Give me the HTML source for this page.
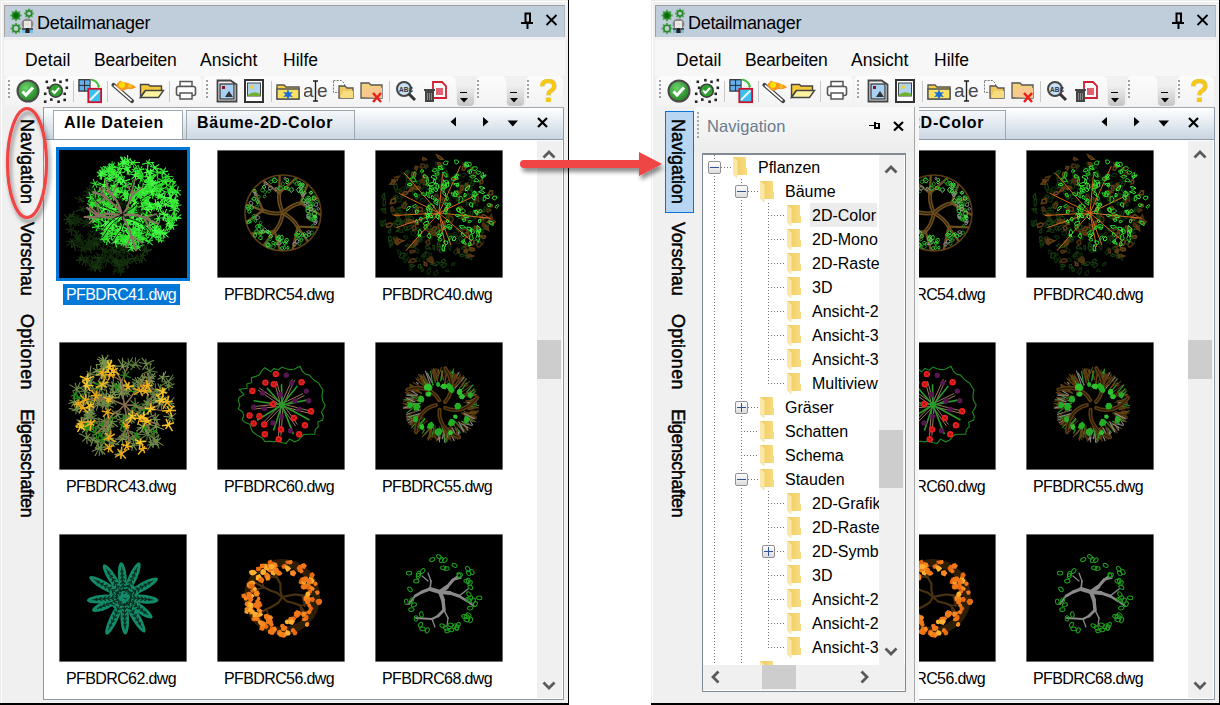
<!DOCTYPE html><html><head><meta charset="utf-8"><style>
html,body{margin:0;padding:0}
body{width:1220px;height:705px;position:relative;overflow:hidden;background:#fff;font-family:'Liberation Sans', sans-serif}
.t{position:absolute;white-space:pre}
.b{position:absolute}
.win{position:absolute;top:0;width:569px;height:705px;overflow:hidden}
</style></head><body><svg width="0" height="0" style="position:absolute"><defs><g id="t41"><path d="M41.5 54.3l-6.1 2.4M41.5 54.3l-3.4 -2.4M41.5 54.3l2.5 -5.5M41.5 54.3l3.3 -2.3M41.5 54.3l1.6 2.6M41.5 54.3l-3.2 6.1" stroke="#0f260a" stroke-width="1.1" fill="none"/><path d="M30.7 94.8l2.9 1.1M30.7 94.8l0.7 6.3M30.7 94.8l-3 5.1M30.7 94.8l-3.3 -1.1M30.7 94.8l-0.8 -3.4M30.7 94.8l4.7 -3.3" stroke="#183610" stroke-width="1.1" fill="none"/><path d="M36 88.6l-1.3 6.1M36 88.6l-3.9 2.4M36 88.6l-2.9 -1.7M36 88.6l-0.2 -5.6M36 88.6l3.9 -0.2M36 88.6l2.9 1.6" stroke="#183610" stroke-width="1.1" fill="none"/><path d="M91.2 69.4l-4.6 4.6M91.2 69.4l-4 -1.4M91.2 69.4l-1.6 -2.9M91.2 69.4l3 -5.7M91.2 69.4l5.4 2.7M91.2 69.4l2.8 4.9" stroke="#183610" stroke-width="1.1" fill="none"/><path d="M65.7 100l-0.5 3.4M65.7 100l-3.8 0.6M65.7 100l-4.2 -2.5M65.7 100l1.4 -6M65.7 100l4.4 -3.6M65.7 100l5.4 4" stroke="#183610" stroke-width="1.1" fill="none"/><path d="M29.9 67.2l1.3 4.3M29.9 67.2l-4 4.5M29.9 67.2l-3.8 -0.4M29.9 67.2l-2.1 -2.3M29.9 67.2l1.7 -5.4M29.9 67.2l3.8 -1.1" stroke="#183610" stroke-width="1.1" fill="none"/><path d="M57.9 47.7l5.6 1.8M57.9 47.7l-0.3 4.8M57.9 47.7l-3.3 1.9M57.9 47.7l-3.9 -2.4M57.9 47.7l-0.9 -4M57.9 47.7l2.7 -2.5" stroke="#142e0e" stroke-width="1.1" fill="none"/><path d="M70.3 47.6l-0.5 3.7M70.3 47.6l-5.8 2.1M70.3 47.6l-4.8 -1.5M70.3 47.6l0.4 -4.4M70.3 47.6l6.2 -2.4M70.3 47.6l2.9 3.1" stroke="#0f260a" stroke-width="1.1" fill="none"/><path d="M21.4 109.1l5.1 2.8M21.4 109.1l-1.3 4.5M21.4 109.1l-4.6 1.8M21.4 109.1l-2 -2.7M21.4 109.1l0.9 -4.7M21.4 109.1l6.3 -2.2" stroke="#183610" stroke-width="1.1" fill="none"/><path d="M33.6 55.7l-3.2 -0M33.6 55.7l-2.9 -5.1M33.6 55.7l1.4 -2.8M33.6 55.7l3.8 -0.1M33.6 55.7l2.2 3.7M33.6 55.7l-0.9 3.6" stroke="#142e0e" stroke-width="1.1" fill="none"/><path d="M84.3 53.5l0.9 5.5M84.3 53.5l-2.8 1.4M84.3 53.5l-3 -2.8M84.3 53.5l-1.5 -5.9M84.3 53.5l4.3 -1.5M84.3 53.5l4.7 1.9" stroke="#183610" stroke-width="1.1" fill="none"/><path d="M59.6 94.7l3.1 0.7M59.6 94.7l1.6 3.8M59.6 94.7l-2.6 5M59.6 94.7l-5.8 -2.9M59.6 94.7l-2.4 -3.5M59.6 94.7l3.5 -5.1" stroke="#142e0e" stroke-width="1.1" fill="none"/><path d="M55.9 112.5l-2.8 3.5M55.9 112.5l-3.3 -0.6M55.9 112.5l-2.5 -3.7M55.9 112.5l2.5 -2.7M55.9 112.5l3.3 -0.7M55.9 112.5l1.3 4.1" stroke="#142e0e" stroke-width="1.1" fill="none"/><path d="M87.5 61.5l4.5 5.2M87.5 61.5l-1.8 5.5M87.5 61.5l-6.5 1.3M87.5 61.5l-2.6 -3.2M87.5 61.5l1.8 -5.8M87.5 61.5l3.2 -1.8" stroke="#0f260a" stroke-width="1.1" fill="none"/><path d="M87.2 75.6l-4 3.9M87.2 75.6l-5 -2.3M87.2 75.6l-0.4 -5.3M87.2 75.6l4.1 -5.4M87.2 75.6l2.7 1.5M87.2 75.6l1 3" stroke="#183610" stroke-width="1.1" fill="none"/><path d="M81.2 62.3l2.2 3.4M81.2 62.3l-0.1 6.4M81.2 62.3l-4.2 -0.2M81.2 62.3l-3.9 -3.5M81.2 62.3l1.2 -2.8M81.2 62.3l3.9 -0.7" stroke="#142e0e" stroke-width="1.1" fill="none"/><path d="M89.8 70.5l0.2 3.1M89.8 70.5l-2.7 3.2M89.8 70.5l-3.5 -1.1M89.8 70.5l-0.7 -3.3M89.8 70.5l5.5 -4.1M89.8 70.5l4.6 3" stroke="#183610" stroke-width="1.1" fill="none"/><path d="M63.8 74.2l-1.9 6.2M63.8 74.2l-3.3 0.5M63.8 74.2l-3.9 -4.3M63.8 74.2l2.4 -6.4M63.8 74.2l4.7 -3.3M63.8 74.2l5.9 3.6" stroke="#0f260a" stroke-width="1.1" fill="none"/><path d="M42.1 112.8l-1.4 3M42.1 112.8l-6.6 -0.7M42.1 112.8l-2.3 -4.6M42.1 112.8l1.5 -4.7M42.1 112.8l6.6 -1.6M42.1 112.8l2.7 6" stroke="#0f260a" stroke-width="1.1" fill="none"/><path d="M53.7 79l-2.8 6.2M53.7 79l-6.1 -1M53.7 79l-2.6 -5.4M53.7 79l1.7 -3.5M53.7 79l5.5 -1.1M53.7 79l4.2 5.1" stroke="#183610" stroke-width="1.1" fill="none"/><path d="M90.4 62.7l-6.6 2.3M90.4 62.7l-3.4 -2.8M90.4 62.7l0.4 -5M90.4 62.7l4.8 -2M90.4 62.7l2.4 5.6M90.4 62.7l-1.5 3" stroke="#0f260a" stroke-width="1.1" fill="none"/><path d="M34.3 117.4l3.7 1.3M34.3 117.4l2.3 4.4M34.3 117.4l-2.5 3.6M34.3 117.4l-4.6 -2M34.3 117.4l-2.2 -6.3M34.3 117.4l4.3 -3.4" stroke="#183610" stroke-width="1.1" fill="none"/><path d="M34.7 116.7l1.4 4.7M34.7 116.7l-6 3.1M34.7 116.7l-5.7 -3.5M34.7 116.7l-1.4 -4.2M34.7 116.7l2.5 -3.3M34.7 116.7l3.9 0.8" stroke="#0f260a" stroke-width="1.1" fill="none"/><path d="M37.3 116.8l-2.3 4.2M37.3 116.8l-5.8 -0.7M37.3 116.8l-2 -2.6M37.3 116.8l2.5 -4.1M37.3 116.8l5.4 0.3M37.3 116.8l4.1 3.8" stroke="#183610" stroke-width="1.1" fill="none"/><path d="M56.4 42.3l-0.8 6.8M56.4 42.3l-6 2M56.4 42.3l-3.7 -2.9M56.4 42.3l1.1 -4M56.4 42.3l5.3 -2.9M56.4 42.3l2.2 3.1" stroke="#142e0e" stroke-width="1.1" fill="none"/><path d="M38.4 108.4l-0.6 4.3M38.4 108.4l-4.6 -0.4M38.4 108.4l-3.8 -3M38.4 108.4l2.1 -4.4M38.4 108.4l6.7 -1.1M38.4 108.4l2.4 4.1" stroke="#183610" stroke-width="1.1" fill="none"/><path d="M47.3 101.7l-2.5 1.7M47.3 101.7l-4.1 -1.1M47.3 101.7l-1.5 -4.2M47.3 101.7l5.3 -2.2M47.3 101.7l4.8 2.4M47.3 101.7l-1.5 6.7" stroke="#0f260a" stroke-width="1.1" fill="none"/><path d="M80.9 62.5l-3.8 -0.4M80.9 62.5l-4.3 -2.9M80.9 62.5l0.2 -3.3M80.9 62.5l3.5 0.4M80.9 62.5l3.4 4.3M80.9 62.5l-2.9 4.1" stroke="#0f260a" stroke-width="1.1" fill="none"/><path d="M21.9 92.2l0.7 5.5M21.9 92.2l-4.6 3.4M21.9 92.2l-4.4 -3.7M21.9 92.2l-0.5 -5.8M21.9 92.2l6.9 -1M21.9 92.2l2.6 2.6" stroke="#0f260a" stroke-width="1.1" fill="none"/><path d="M76.1 49.6l0.5 4.3M76.1 49.6l-3.8 1.5M76.1 49.6l-2.2 -2.3M76.1 49.6l-0.3 -4.1M76.1 49.6l4.4 -2.1M76.1 49.6l2.8 3.4" stroke="#0f260a" stroke-width="1.1" fill="none"/><path d="M14 72.5l-2.9 4.2M14 72.5l-3.8 1.3M14 72.5l-5.7 -3.4M14 72.5l1.7 -3.7M14 72.5l5.7 -0.4M14 72.5l3 3.8" stroke="#183610" stroke-width="1.1" fill="none"/><path d="M74.7 50.3l-2.2 2.9M74.7 50.3l-3.7 0.9M74.7 50.3l-1.6 -3.2M74.7 50.3l1.5 -5.3M74.7 50.3l3.4 -0.2M74.7 50.3l3.7 4.4" stroke="#142e0e" stroke-width="1.1" fill="none"/><path d="M48.9 49.2l2.7 5.6M48.9 49.2l-2.4 5.6M48.9 49.2l-6.7 -1M48.9 49.2l-1.9 -2.9M48.9 49.2l2.9 -4.9M48.9 49.2l5.8 1.5" stroke="#183610" stroke-width="1.1" fill="none"/><path d="M56.1 109.3l-4.4 4.9M56.1 109.3l-5.1 -0.5M56.1 109.3l-4.5 -4.7M56.1 109.3l2.3 -3.7M56.1 109.3l3.8 0.2M56.1 109.3l1.1 3.6" stroke="#183610" stroke-width="1.1" fill="none"/><path d="M75.2 45.3l-4.6 3.9M75.2 45.3l-5.3 -3.4M75.2 45.3l-2 -6.7M75.2 45.3l5.5 -3.7M75.2 45.3l5.6 2.5M75.2 45.3l0.2 4.2" stroke="#183610" stroke-width="1.1" fill="none"/><path d="M51.2 106.3l3.2 -0.1M51.2 106.3l1.8 2.9M51.2 106.3l-3 5M51.2 106.3l-5.4 -0.4M51.2 106.3l-0.9 -3.2M51.2 106.3l5.1 -4.7" stroke="#142e0e" stroke-width="1.1" fill="none"/><path d="M12.3 91.4l3.3 -0M12.3 91.4l0.3 6.6M12.3 91.4l-4.9 4.7M12.3 91.4l-5.6 -0.2M12.3 91.4l-1.1 -3.2M12.3 91.4l2.4 -2.5" stroke="#142e0e" stroke-width="1.1" fill="none"/><path d="M32.7 46.5l1.3 3.5M32.7 46.5l-3.4 3.9M32.7 46.5l-5.9 -2.4M32.7 46.5l0.1 -6.8M32.7 46.5l3.4 -4.7M32.7 46.5l6.7 0.1" stroke="#0f260a" stroke-width="1.1" fill="none"/><path d="M42.5 52.8l-1.7 2.9M42.5 52.8l-6.6 -0.2M42.5 52.8l-1.8 -4.5M42.5 52.8l3 -2.5M42.5 52.8l6.4 1.1M42.5 52.8l2.5 5.8" stroke="#142e0e" stroke-width="1.1" fill="none"/><path d="M49.3 94.7l-3.8 0.4M49.3 94.7l-4 -3.8M49.3 94.7l2.3 -6.2M49.3 94.7l4.6 -0.9M49.3 94.7l2 2.7M49.3 94.7l-1.9 4.4" stroke="#142e0e" stroke-width="1.1" fill="none"/><path d="M28.3 110.4l0.6 5.3M28.3 110.4l-2 3M28.3 110.4l-3.5 -1.2M28.3 110.4l-1.1 -6.1M28.3 110.4l2.6 -5.3M28.3 110.4l3.3 0.9" stroke="#0f260a" stroke-width="1.1" fill="none"/><path d="M37.5 80.6l-6.3 0.9M37.5 80.6l-3.3 -6.1M37.5 80.6l2 -4.2M37.5 80.6l3.9 -0.1M37.5 80.6l2.1 4M37.5 80.6l-3.5 5.1" stroke="#142e0e" stroke-width="1.1" fill="none"/><path d="M71 92.9l6.2 -0.8M71 92.9l2.4 3M71 92.9l-2.7 4.8M71 92.9l-6 -1.4M71 92.9l-4.2 -5.3M71 92.9l2.3 -5.8" stroke="#183610" stroke-width="1.1" fill="none"/><path d="M41.3 52.7l-0.5 5.3M41.3 52.7l-3 1.6M41.3 52.7l-4.9 -4.5M41.3 52.7l1.2 -5.6M41.3 52.7l5.5 0.2M41.3 52.7l4.2 4" stroke="#142e0e" stroke-width="1.1" fill="none"/><path d="M27.6 73.2l-4.6 -0.1M27.6 73.2l-4.9 -4M27.6 73.2l1.6 -5.2M27.6 73.2l6.9 -0.6M27.6 73.2l3.3 3.6M27.6 73.2l-1.6 2.9" stroke="#142e0e" stroke-width="1.1" fill="none"/><path d="M46.6 53.3l6 3.2M46.6 53.3l3.1 5.8M46.6 53.3l-2.4 3.9M46.6 53.3l-3.2 -1M46.6 53.3l-1.7 -3.6M46.6 53.3l5 -3.5" stroke="#183610" stroke-width="1.1" fill="none"/><path d="M68.3 48.5l3.1 4.1M68.3 48.5l-2.5 5.4M68.3 48.5l-4.9 0.1M68.3 48.5l-2.3 -3.3M68.3 48.5l4.7 -4.9M68.3 48.5l4.4 -0.9" stroke="#0f260a" stroke-width="1.1" fill="none"/><path d="M71.3 65.1l-0.4 3.3M71.3 65.1l-3.3 3.6M71.3 65.1l-5 -3.6M71.3 65.1l-0.5 -3M71.3 65.1l3.8 -4.2M71.3 65.1l3.4 0.8" stroke="#142e0e" stroke-width="1.1" fill="none"/><path d="M12.2 80.1l0.6 6.1M12.2 80.1l-3.9 2.6M12.2 80.1l-6 -1M12.2 80.1l-1.2 -6.7M12.2 80.1l2.9 -3M12.2 80.1l6.6 2.2" stroke="#142e0e" stroke-width="1.1" fill="none"/><path d="M76.5 59.9l-0.1 5.8M76.5 59.9l-2.4 3.8M76.5 59.9l-5.8 -1.1M76.5 59.9l-0.5 -3.4M76.5 59.9l4.2 -5M76.5 59.9l5.7 0.1" stroke="#183610" stroke-width="1.1" fill="none"/><path d="M13 65.3l-0.3 3.2M13 65.3l-3.8 2.5M13 65.3l-3.2 -1.5M13 65.3l2.3 -4.6M13 65.3l2.7 -1.6M13 65.3l3.6 2.4" stroke="#183610" stroke-width="1.1" fill="none"/><path d="M89 78.2l5.3 2.3M89 78.2l1.6 2.8M89 78.2l-3.6 2.5M89 78.2l-3.2 -1.3M89 78.2l-2.5 -4.8M89 78.2l4.4 -4.4" stroke="#183610" stroke-width="1.1" fill="none"/><path d="M37.1 48.7l3.5 0.9M37.1 48.7l1 3.2M37.1 48.7l-3.3 3.9M37.1 48.7l-6.2 -0.7M37.1 48.7l-1 -3.7M37.1 48.7l2.8 -3.7" stroke="#142e0e" stroke-width="1.1" fill="none"/><path d="M42.1 54l-3.6 1.3M42.1 54l-4.2 -2.2M42.1 54l0.5 -6M42.1 54l2.9 -1.7M42.1 54l5.4 2.7M42.1 54l-1.3 3.9" stroke="#0f260a" stroke-width="1.1" fill="none"/><path d="M67.9 112.7l1.7 4.9M67.9 112.7l-4.8 3.7M67.9 112.7l-6 -2.5M67.9 112.7l-3.2 -4.4M67.9 112.7l2.2 -3.8M67.9 112.7l5 0.8" stroke="#142e0e" stroke-width="1.1" fill="none"/><path d="M59 72.6l-3.7 3.1M59 72.6l-4.3 0.1M59 72.6l-1.9 -5M59 72.6l2.3 -3.5M59 72.6l3.9 0.4M59 72.6l2.4 5.1" stroke="#0f260a" stroke-width="1.1" fill="none"/><path d="M33.6 41.3l2.4 4.1M33.6 41.3l-5.4 4.3M33.6 41.3l-5.2 -2.1M33.6 41.3l-1.9 -4.5M33.6 41.3l1.9 -3.5M33.6 41.3l6.1 -0.6" stroke="#142e0e" stroke-width="1.1" fill="none"/><path d="M45.5 105.5l-4.1 4.4M45.5 105.5l-3.6 -1.2M45.5 105.5l-0.2 -3.9M45.5 105.5l4.6 -4.1M45.5 105.5l3.6 0.8M45.5 105.5l-0.6 6.9" stroke="#0f260a" stroke-width="1.1" fill="none"/><path d="M35.4 94.4l-2.4 3.1M35.4 94.4l-2.8 -1.7M35.4 94.4l0.7 -4.7M35.4 94.4l2.9 -1.9M35.4 94.4l4.6 1.7M35.4 94.4l-0.2 5.4" stroke="#183610" stroke-width="1.1" fill="none"/><path d="M31 85.3l-3.3 4.4M31 85.3l-3.3 -0.8M31 85.3l-1.5 -3.1M31 85.3l3.2 -4.7M31 85.3l3.2 1.2M31 85.3l0.3 3.5" stroke="#0f260a" stroke-width="1.1" fill="none"/><path d="M34.9 57l0.8 3.9M34.9 57l-3.4 2.5M34.9 57l-5.1 -1.9M34.9 57l0.6 -6.4M34.9 57l3.8 -4.8M34.9 57l3.3 1.1" stroke="#142e0e" stroke-width="1.1" fill="none"/><path d="M48.1 110.8l-2 6.6M48.1 110.8l-6.8 -0.9M48.1 110.8l-1.9 -3.1M48.1 110.8l0.8 -4M48.1 110.8l5.5 0.5M48.1 110.8l2.5 2" stroke="#142e0e" stroke-width="1.1" fill="none"/><path d="M62.3 119.7l-3.4 0.9M62.3 119.7l-2.4 -3.5M62.3 119.7l2.5 -4.3M62.3 119.7l3.1 -1.1M62.3 119.7l3.4 2.7M62.3 119.7l-1 5.9" stroke="#142e0e" stroke-width="1.1" fill="none"/><path d="M82.5 91.5l-5.6 4.2M82.5 91.5l-4.7 -4.8M82.5 91.5l-0.8 -4.9M82.5 91.5l3.2 -2.7M82.5 91.5l4.9 1.5M82.5 91.5l0.6 5.3" stroke="#142e0e" stroke-width="1.1" fill="none"/><path d="M18.2 71l1.8 5.4M18.2 71l-3.1 4M18.2 71l-6.4 -2.2M18.2 71l-0.1 -6.4M18.2 71l5 -2.1M18.2 71l5.2 2.5" stroke="#142e0e" stroke-width="1.1" fill="none"/><path d="M80.5 110.4l-3.7 -0.1M80.5 110.4l-3.3 -4.8M80.5 110.4l2.2 -3.9M80.5 110.4l3 -0.3M80.5 110.4l2.9 2.6M80.5 110.4l-0.4 3.3" stroke="#142e0e" stroke-width="1.1" fill="none"/><path d="M53.2 46.2l-2.8 1.7M53.2 46.2l-3.5 -3.5M53.2 46.2l2.4 -5.6M53.2 46.2l3 -1.9M53.2 46.2l5.3 2.4M53.2 46.2l-0.1 4.8" stroke="#0f260a" stroke-width="1.1" fill="none"/><path d="M55 77.7l0.5 4.8M55 77.7l-6.2 2.5M55 77.7l-3 -1.6M55 77.7l0.4 -6.4M55 77.7l5 -4.4M55 77.7l4 2.8" stroke="#183610" stroke-width="1.1" fill="none"/><path d="M62.9 98.9l3.5 1.4M62.9 98.9l3.1 4.8M62.9 98.9l-3.1 3.3M62.9 98.9l-3.7 -1.9M62.9 98.9l-1.4 -6.8M62.9 98.9l2.5 -1.9" stroke="#183610" stroke-width="1.1" fill="none"/><path d="M40.2 108.3l-1.9 2.4M40.2 108.3l-6.1 -1.1M40.2 108.3l-2.7 -5.4M40.2 108.3l3.8 -4M40.2 108.3l5.2 -0.3M40.2 108.3l0.9 3.3" stroke="#183610" stroke-width="1.1" fill="none"/><path d="M81 64.1l5.1 -0.4M81 64.1l0.8 3.8M81 64.1l-2.1 4.7M81 64.1l-5.1 -1.6M81 64.1l-2.5 -6.2M81 64.1l4 -5.5" stroke="#183610" stroke-width="1.1" fill="none"/><path d="M44 53.2l1.5 6.4M44 53.2l-6.2 2M44 53.2l-3.8 -1.9M44 53.2l0 -4.6M44 53.2l6.2 -3.2M44 53.2l2.3 2.4" stroke="#183610" stroke-width="1.1" fill="none"/><path d="M46 47.1l-3 6.2M46 47.1l-2.9 1M46 47.1l-2.3 -3.1M46 47.1l1 -3M46 47.1l3 0.3M46 47.1l4.4 5.3" stroke="#142e0e" stroke-width="1.1" fill="none"/><path d="M70 45.3l3.6 2M70 45.3l-1.3 3.9M70 45.3l-5.3 0.6M70 45.3l-3.5 -1.7M70 45.3l2.2 -4.5M70 45.3l3.2 -1.1" stroke="#0f260a" stroke-width="1.1" fill="none"/><path d="M77.9 66.7l3 2.4M77.9 66.7l-0 3.9M77.9 66.7l-3.4 1.2M77.9 66.7l-4.8 -3.6M77.9 66.7l1 -4.6M77.9 66.7l2.7 -1.5" stroke="#0f260a" stroke-width="1.1" fill="none"/><path d="M47.2 46.6l-1.3 6.1M47.2 46.6l-6.3 1.5M47.2 46.6l-5.2 -3.8M47.2 46.6l-0.2 -4.9M47.2 46.6l3 -0.9M47.2 46.6l3.9 2.3" stroke="#183610" stroke-width="1.1" fill="none"/><path d="M71.8 70.5l-4.3 5.4M71.8 70.5l-5.4 0.2M71.8 70.5l-3.8 -3.6M71.8 70.5l1.4 -4.2M71.8 70.5l3.7 -0.1M71.8 70.5l1.9 3.6" stroke="#142e0e" stroke-width="1.1" fill="none"/><path d="M34.6 60.1l-1.9 2.4M34.6 60.1l-3.8 -0.8M34.6 60.1l-2.6 -2.9M34.6 60.1l2.1 -2.6M34.6 60.1l4.4 0.8M34.6 60.1l3.1 5.9" stroke="#0f260a" stroke-width="1.1" fill="none"/><path d="M44.7 52.4l4.7 1.6M44.7 52.4l0.8 5.2M44.7 52.4l-3.5 4.4M44.7 52.4l-6.3 -1.6M44.7 52.4l-0 -6.5M44.7 52.4l3.2 -2.7" stroke="#183610" stroke-width="1.1" fill="none"/><path d="M23.3 58.9l1.9 2.8M23.3 58.9l-0.9 3M23.3 58.9l-6.5 2.3M23.3 58.9l-2.8 -2.3M23.3 58.9l1.2 -2.9M23.3 58.9l3.9 -0.2" stroke="#183610" stroke-width="1.1" fill="none"/><path d="M33.1 94.8l6.3 -0.2M33.1 94.8l3.1 4.4M33.1 94.8l-3.4 4.8M33.1 94.8l-6.8 0.6M33.1 94.8l-3.3 -5.9M33.1 94.8l1.8 -3.6" stroke="#183610" stroke-width="1.1" fill="none"/><path d="M83.2 71.9l-4.7 1.4M83.2 71.9l-2.6 -3.5M83.2 71.9l2.2 -5.1M83.2 71.9l6 -0.1M83.2 71.9l0.9 2.9M83.2 71.9l-2.5 3.8" stroke="#183610" stroke-width="1.1" fill="none"/><path d="M43.4 83.1l5.4 3.6M43.4 83.1l-1.3 4.4M43.4 83.1l-3.2 1M43.4 83.1l-4 -4M43.4 83.1l1.7 -5M43.4 83.1l4.6 -1.4" stroke="#142e0e" stroke-width="1.1" fill="none"/><path d="M85.7 100.1l-1.6 5.4M85.7 100.1l-3.6 0.9M85.7 100.1l-2.6 -4.1M85.7 100.1l-0.2 -5.9M85.7 100.1l6.4 0.1M85.7 100.1l3.3 4.7" stroke="#183610" stroke-width="1.1" fill="none"/><path d="M21.9 49.9l-3.2 2.7M21.9 49.9l-6.2 -2.5M21.9 49.9l-1.8 -3.8M21.9 49.9l3.1 -2.6M21.9 49.9l3.4 1.7M21.9 49.9l1.6 3.5" stroke="#142e0e" stroke-width="1.1" fill="none"/><path d="M10.6 70.4l4.9 3.7M10.6 70.4l-0.5 4.7M10.6 70.4l-4.6 3.6M10.6 70.4l-2.8 -2.3M10.6 70.4l0.2 -6M10.6 70.4l6.6 -2" stroke="#183610" stroke-width="1.1" fill="none"/><path d="M66.1 99.1l-3 3.8M66.1 99.1l-4.5 -1.7M66.1 99.1l-2.1 -3.8M66.1 99.1l2.8 -3.1M66.1 99.1l5.3 0.1M66.1 99.1l2.2 5" stroke="#0f260a" stroke-width="1.1" fill="none"/><path d="M37.9 93.2l-4.2 1.1M37.9 93.2l-4 -1.8M37.9 93.2l-0.4 -6M37.9 93.2l5.8 -1.2M37.9 93.2l4 2.4M37.9 93.2l0.4 5" stroke="#183610" stroke-width="1.1" fill="none"/><path d="M18.1 70l-0.5 4.7M18.1 70l-3.2 -0M18.1 70l-4.1 -3.4M18.1 70l1.9 -4.2M18.1 70l4.5 -2.5M18.1 70l3.3 2.1" stroke="#142e0e" stroke-width="1.1" fill="none"/><path d="M59.2 47.1l4.8 0.5M59.2 47.1l0.2 3.9M59.2 47.1l-2.4 3.2M59.2 47.1l-3.3 -1.7M59.2 47.1l-1.2 -4.4M59.2 47.1l3 -5.6" stroke="#0f260a" stroke-width="1.1" fill="none"/><path d="M92.1 67.9l-3.5 2.2M92.1 67.9l-3.6 -2.5M92.1 67.9l-1.8 -3.7M92.1 67.9l4.4 -2.6M92.1 67.9l3.3 2.2M92.1 67.9l0.1 4.1" stroke="#0f260a" stroke-width="1.1" fill="none"/><path d="M69 110.1l-4.2 3M69 110.1l-3.7 -1.4M69 110.1l-1.1 -6M69 110.1l4.3 -1.1M69 110.1l4.8 2.4M69 110.1l-0.6 5.2" stroke="#183610" stroke-width="1.1" fill="none"/><path d="M36 52.5l1.5 3.2M36 52.5l-2.2 4.1M36 52.5l-3.3 1.8M36 52.5l-2.7 -2.9M36 52.5l1.5 -4.6M36 52.5l4 -2" stroke="#142e0e" stroke-width="1.1" fill="none"/><path d="M61.5 119.9l-3 0.3M61.5 119.9l-2.9 -5.6M61.5 119.9l0.5 -4.6M61.5 119.9l4.1 -0.4M61.5 119.9l2.3 3M61.5 119.9l-1.6 2.6" stroke="#183610" stroke-width="1.1" fill="none"/><path d="M84 53.5l-3.8 3.7M84 53.5l-4.7 -1.1M84 53.5l-0.5 -6.9M84 53.5l5.2 -2.6M84 53.5l4.1 2.5M84 53.5l-0.1 3.9" stroke="#142e0e" stroke-width="1.1" fill="none"/><path d="M64.2 107.7l5.3 3M64.2 107.7l-0.2 6.7M64.2 107.7l-5.6 4.1M64.2 107.7l-4.4 -3.2M64.2 107.7l0.4 -6.6M64.2 107.7l3 -2.3" stroke="#0f260a" stroke-width="1.1" fill="none"/><path d="M15.3 94.4l1 6.6M15.3 94.4l-3 3.8M15.3 94.4l-3 -0.6M15.3 94.4l-3.3 -4.8M15.3 94.4l4.2 -3.8M15.3 94.4l4.3 1.6" stroke="#183610" stroke-width="1.1" fill="none"/><path d="M56.6 41.5l-4.6 2.2M56.6 41.5l-3.6 -3.9M56.6 41.5l1.9 -6.1M56.6 41.5l4.4 -0.9M56.6 41.5l2.5 1.9M56.6 41.5l-1.9 6.4" stroke="#183610" stroke-width="1.1" fill="none"/><path d="M41.7 89.6l0.8 3.4M41.7 89.6l-5 4M41.7 89.6l-4.3 0.5M41.7 89.6l-2.4 -3.6M41.7 89.6l2 -2.7M41.7 89.6l3.5 1.6" stroke="#142e0e" stroke-width="1.1" fill="none"/><path d="M29.7 40.2l-5.8 1.9M29.7 40.2l-2.5 -2.9M29.7 40.2l2.3 -5.7M29.7 40.2l3.9 -0.8M29.7 40.2l2.4 5.1M29.7 40.2l-1.6 6.5" stroke="#142e0e" stroke-width="1.1" fill="none"/><path d="M23.5 99.6l-1.9 4.4M23.5 99.6l-4.3 1.1M23.5 99.6l-3 -3.4M23.5 99.6l-0.2 -6.5M23.5 99.6l3.8 -1.3M23.5 99.6l3.5 3.2" stroke="#0f260a" stroke-width="1.1" fill="none"/><path d="M69.7 47.9l-1.3 6M69.7 47.9l-5.8 1.4M69.7 47.9l-5.5 -3.2M69.7 47.9l-0.1 -3M69.7 47.9l2.9 -1.6M69.7 47.9l6.3 2.9" stroke="#142e0e" stroke-width="1.1" fill="none"/><path d="M79.3 71l-5.7 3.8M79.3 71l-3 0.2M79.3 71l-1.3 -6.9M79.3 71l4.2 -3M79.3 71l2.9 1M79.3 71l2.5 4.7" stroke="#183610" stroke-width="1.1" fill="none"/><path d="M31.8 92.2l3.5 5.2M31.8 92.2l-2.6 4.7M31.8 92.2l-5.7 -1.1M31.8 92.2l-2.2 -3.8M31.8 92.2l2.4 -3.9M31.8 92.2l3.4 -0.3" stroke="#142e0e" stroke-width="1.1" fill="none"/><path d="M71.6 44.4l6.4 1.9M71.6 44.4l2.5 6.3M71.6 44.4l-1 3.6M71.6 44.4l-4.8 -1.3M71.6 44.4l-2.1 -2.4M71.6 44.4l2.4 -4.1" stroke="#142e0e" stroke-width="1.1" fill="none"/><path d="M54.2 36.2l5.9 2.7M54.2 36.2l1.1 3.2M54.2 36.2l-1.8 2.5M54.2 36.2l-4.3 0.3M54.2 36.2l-1.8 -5M54.2 36.2l2.1 -4.7" stroke="#0f260a" stroke-width="1.1" fill="none"/><path d="M29.2 93.7l3.6 5.2M29.2 93.7l0.1 6.5M29.2 93.7l-3.3 0.5M29.2 93.7l-4 -3.7M29.2 93.7l0.4 -4.9M29.2 93.7l5.7 -0.3" stroke="#142e0e" stroke-width="1.1" fill="none"/><path d="M46.7 37.5l-4 5.2M46.7 37.5l-4 -2.3M46.7 37.5l-0.6 -5.5M46.7 37.5l2.9 -2M46.7 37.5l4.5 1.5M46.7 37.5l-0.1 3.5" stroke="#183610" stroke-width="1.1" fill="none"/><path d="M72.9 82.2l4.2 1.1M72.9 82.2l-1.3 5.7M72.9 82.2l-3.7 1.8M72.9 82.2l-4.5 -3M72.9 82.2l-0.1 -4.4M72.9 82.2l4.4 -3.6" stroke="#142e0e" stroke-width="1.1" fill="none"/><path d="M58.1 57.7l-3.4 1.9M58.1 57.7l-4.5 -4.4M58.1 57.7l-0.7 -7M58.1 57.7l4.3 -3.6M58.1 57.7l3 3.3M58.1 57.7l-0.2 4.8" stroke="#0f260a" stroke-width="1.1" fill="none"/><path d="M62.5 114.7l-1.1 5.9M62.5 114.7l-6.5 2.5M62.5 114.7l-3.3 -4.1M62.5 114.7l2.7 -4.8M62.5 114.7l4 0.5M62.5 114.7l3.7 4.4" stroke="#0f260a" stroke-width="1.1" fill="none"/><path d="M88.1 100.4l2.9 1.1M88.1 100.4l0.5 4.1M88.1 100.4l-5 3.3M88.1 100.4l-2.8 -3.1M88.1 100.4l-1.2 -5.1M88.1 100.4l5 -1.1" stroke="#183610" stroke-width="1.1" fill="none"/><path d="M18.9 89l0.2 4.7M18.9 89l-4.1 2.5M18.9 89l-3.2 -3M18.9 89l2.6 -5.8M18.9 89l2.7 -1.3M18.9 89l3.6 2.3" stroke="#183610" stroke-width="1.1" fill="none"/><path d="M39.5 73l4.4 2.5M39.5 73l2.4 5.1M39.5 73l-3.7 2M39.5 73l-2.9 -1.3M39.5 73l-0 -3.6M39.5 73l3.9 -5" stroke="#183610" stroke-width="1.1" fill="none"/><path d="M58.1 69.3l-1.7 3.9M58.1 69.3l-3.3 0.4M58.1 69.3l-3.5 -4.7M58.1 69.3l1.8 -2.6M58.1 69.3l3.4 0.9M58.1 69.3l2.5 5.9" stroke="#183610" stroke-width="1.1" fill="none"/><path d="M59.9 95.2l-6 2.1M59.9 95.2l-3.4 -1.9M59.9 95.2l0.6 -6.3M59.9 95.2l4.2 -3.6M59.9 95.2l2.4 2.4M59.9 95.2l-0.4 4.7" stroke="#0f260a" stroke-width="1.1" fill="none"/><path d="M9.3 69.5l-1.3 2.9M9.3 69.5l-4.8 0.1M9.3 69.5l-3.8 -5M9.3 69.5l1.3 -5.1M9.3 69.5l6.9 0.3M9.3 69.5l3.1 4.8" stroke="#183610" stroke-width="1.1" fill="none"/><path d="M61.5 52.8l-2.8 4M61.5 52.8l-4.8 -0.5M61.5 52.8l-1.9 -5.4M61.5 52.8l2.3 -2.6M61.5 52.8l5 2.4M61.5 52.8l2.7 5.5" stroke="#0f260a" stroke-width="1.1" fill="none"/><path d="M70.4 80l-6.3 -0.2M70.4 80l-3.2 -3.3M70.4 80l0.9 -5.9M70.4 80l5.2 0.7M70.4 80l3.9 3.1M70.4 80l-2.8 5.4" stroke="#183610" stroke-width="1.1" fill="none"/><path d="M77.1 71.4l-3.5 3.5M77.1 71.4l-6.3 -1.1M77.1 71.4l-0.3 -3.1M77.1 71.4l4.2 -3.1M77.1 71.4l5.1 0.9M77.1 71.4l1.9 6.7" stroke="#142e0e" stroke-width="1.1" fill="none"/><path d="M32.9 55l-4.4 1.6M32.9 55l-3.9 -3M32.9 55l1 -3.2M32.9 55l6.1 -0.3M32.9 55l5.5 2.8M32.9 55l-0.4 4" stroke="#142e0e" stroke-width="1.1" fill="none"/><path d="M93.4 69.6l-0.9 5M93.4 69.6l-5.1 -0M93.4 69.6l-2 -6.1M93.4 69.6l2.7 -5.6M93.4 69.6l3 -0.2M93.4 69.6l1.6 5" stroke="#0f260a" stroke-width="1.1" fill="none"/><path d="M33.5 112.3l1.3 6M33.5 112.3l-3.3 3.1M33.5 112.3l-4 -2.8M33.5 112.3l-1 -6.7M33.5 112.3l5.1 -2.1M33.5 112.3l4.5 1.9" stroke="#142e0e" stroke-width="1.1" fill="none"/><path d="M50.2 59.2l-2.4 4.5M50.2 59.2l-5.3 0.4M50.2 59.2l-2.8 -5.2M50.2 59.2l2.2 -3.9M50.2 59.2l3.3 0.2M50.2 59.2l1.4 5.5" stroke="#0f260a" stroke-width="1.1" fill="none"/><path d="M50 38.9l-3.2 0.4M50 38.9l-2.1 -2.7M50 38.9l2.7 -6.3M50 38.9l4.1 -1.3M50 38.9l2.7 4.6M50 38.9l-1.3 4" stroke="#142e0e" stroke-width="1.1" fill="none"/><path d="M83.5 105.9l-1.1 6.8M83.5 105.9l-4 0.4M83.5 105.9l-2.9 -2.2M83.5 105.9l1.9 -4.1M83.5 105.9l3.7 -0.9M83.5 105.9l3.6 5.6" stroke="#183610" stroke-width="1.1" fill="none"/><path d="M63.9 114.2l4 2.1M63.9 114.2l-1.3 6.6M63.9 114.2l-5.7 0.3M63.9 114.2l-3 -3.2M63.9 114.2l0.8 -6.2M63.9 114.2l3.2 -1.7" stroke="#0f260a" stroke-width="1.1" fill="none"/><path d="M58.3 112l-3.7 4.6M58.3 112l-5.3 -1.2M58.3 112l-1.6 -3.3M58.3 112l5.7 -3.2M58.3 112l6.8 0M58.3 112l0.5 3" stroke="#183610" stroke-width="1.1" fill="none"/><path d="M47.6 78.7l0.1 5.7M47.6 78.7l-3.6 3.3M47.6 78.7l-6.6 -0.5M47.6 78.7l-1.7 -3.6M47.6 78.7l6 -3.1M47.6 78.7l6 1.4" stroke="#183610" stroke-width="1.1" fill="none"/><path d="M75.4 94.9l-5.2 2.5M75.4 94.9l-1.6 -2.6M75.4 94.9l0.8 -6.3M75.4 94.9l4.8 0.1M75.4 94.9l2.3 3M75.4 94.9l-0.9 4.2" stroke="#0f260a" stroke-width="1.1" fill="none"/><path d="M48.5 86.3l5.4 3.7M48.5 86.3l-0.1 5.8M48.5 86.3l-4.4 2.3M48.5 86.3l-3.4 -3.1M48.5 86.3l1.5 -4.8M48.5 86.3l4.5 0.1" stroke="#183610" stroke-width="1.1" fill="none"/><path d="M66.2 90l-2.9 4.2M66.2 90l-3.6 -1.7M66.2 90l-1 -3.6M66.2 90l5.2 -4.5M66.2 90l3.2 1.6M66.2 90l-0.6 6.5" stroke="#183610" stroke-width="1.1" fill="none"/><path d="M17.3 69.3l5.4 1.4M17.3 69.3l1.6 4.1M17.3 69.3l-2.2 4.2M17.3 69.3l-5.8 0.8M17.3 69.3l-1.7 -5.5M17.3 69.3l2.6 -4.3" stroke="#0f260a" stroke-width="1.1" fill="none"/><path d="M62 76.2l4.1 2.8M62 76.2l-3.6 5.8M62 76.2l-5.2 0.5M62 76.2l-3.1 -3.6M62 76.2l1.5 -4.7M62 76.2l5.1 -0.2" stroke="#142e0e" stroke-width="1.1" fill="none"/><path d="M22.5 92.1l1.8 6M22.5 92.1l-2.1 4.2M22.5 92.1l-3.7 -0.8M22.5 92.1l-0.9 -2.9M22.5 92.1l1.9 -5.7M22.5 92.1l6.8 -0.9" stroke="#0f260a" stroke-width="1.1" fill="none"/><path d="M47.1 84.5l5.1 4.1M47.1 84.5l-1.4 3.6M47.1 84.5l-6.8 0.5M47.1 84.5l-2.5 -1.9M47.1 84.5l0.6 -4.1M47.1 84.5l4.9 -0.4" stroke="#142e0e" stroke-width="1.1" fill="none"/><path d="M55.6 59.1l2.6 4.2M55.6 59.1l-0.6 4.2M55.6 59.1l-3.5 1.8M55.6 59.1l-3.9 -2.8M55.6 59.1l1.1 -5.7M55.6 59.1l5 -1.4" stroke="#142e0e" stroke-width="1.1" fill="none"/><path d="M59.1 114.1l6.1 1.7M59.1 114.1l0.1 6.7M59.1 114.1l-3.1 1.9M59.1 114.1l-2.7 -2.5M59.1 114.1l-0.9 -4.7M59.1 114.1l2.7 -1.4" stroke="#183610" stroke-width="1.1" fill="none"/><path d="M17.4 85.1l4.6 4.7M17.4 85.1l-1.6 4.1M17.4 85.1l-3.8 -0.2M17.4 85.1l-1.7 -5.6M17.4 85.1l2.6 -4.8M17.4 85.1l6.4 0.8" stroke="#142e0e" stroke-width="1.1" fill="none"/><path d="M59.2 95.3l0.9 4.4M59.2 95.3l-2.5 1.9M59.2 95.3l-4.7 -1.9M59.2 95.3l0.9 -5.5M59.2 95.3l3.3 -1.9M59.2 95.3l4.2 3.4" stroke="#0f260a" stroke-width="1.1" fill="none"/><path d="M37.1 51.7l-2.7 1.5M37.1 51.7l-3.6 -3.8M37.1 51.7l0.8 -3.1M37.1 51.7l4.4 -3.2M37.1 51.7l4.7 2.2M37.1 51.7l0.7 5.6" stroke="#183610" stroke-width="1.1" fill="none"/><path d="M35.9 53.1l-3.2 3.3M35.9 53.1l-4.1 -1M35.9 53.1l-2.3 -5.4M35.9 53.1l4 -2.4M35.9 53.1l3 -0.2M35.9 53.1l1 3.1" stroke="#142e0e" stroke-width="1.1" fill="none"/><path d="M61.7 92.7l2.7 2.1M61.7 92.7l-1.4 2.8M61.7 92.7l-6.1 -0.3M61.7 92.7l-3.4 -4.1M61.7 92.7l3.7 -5.4M61.7 92.7l6.6 -2.3" stroke="#0f260a" stroke-width="1.1" fill="none"/><path d="M32.4 72.2l5 2.7M32.4 72.2l1.5 5.1M32.4 72.2l-2.8 4.6M32.4 72.2l-6.5 -2.3M32.4 72.2l-2.9 -4.6M32.4 72.2l3.1 -2.3" stroke="#0f260a" stroke-width="1.1" fill="none"/><path d="M56.4 120.6l-2.5 4.6M56.4 120.6l-2.8 1.3M56.4 120.6l-2 -2.5M56.4 120.6l0.5 -5.5M56.4 120.6l4.9 -0.9M56.4 120.6l4 2.6" stroke="#0f260a" stroke-width="1.1" fill="none"/><path d="M29.6 98.6l3.2 4.9M29.6 98.6l-2.7 2.1M29.6 98.6l-4.9 -2M29.6 98.6l-1.9 -5.7M29.6 98.6l2.8 -3.5M29.6 98.6l5.8 0.8" stroke="#142e0e" stroke-width="1.1" fill="none"/><path d="M31.6 95.7l1.1 4.9M31.6 95.7l-5.5 3.7M31.6 95.7l-3.5 -1.7M31.6 95.7l-1.4 -3.5M31.6 95.7l2.3 -2.9M31.6 95.7l6.6 0.8" stroke="#0f260a" stroke-width="1.1" fill="none"/><path d="M76.4 63.2l-4.4 3M76.4 63.2l-6.8 -0.8M76.4 63.2l-1.5 -5.6M76.4 63.2l3.1 -3.5M76.4 63.2l4.7 2.9M76.4 63.2l1.7 5.9" stroke="#0f260a" stroke-width="1.1" fill="none"/><path d="M27.5 72.8l-3.6 4.7M27.5 72.8l-5.9 0.8M27.5 72.8l-1.1 -3.2M27.5 72.8l3.1 -3.4M27.5 72.8l4.9 0.9M27.5 72.8l1 3.3" stroke="#183610" stroke-width="1.1" fill="none"/><path d="M67.6 60.6l-4.4 0.9M67.6 60.6l-2.4 -4.5M67.6 60.6l1.2 -4.3M67.6 60.6l6 0.5M67.6 60.6l1.3 4.1M67.6 60.6l-2.7 2.7" stroke="#142e0e" stroke-width="1.1" fill="none"/><path d="M37.4 45.4l-1.9 5.2M37.4 45.4l-3.6 0.7M37.4 45.4l-3.1 -2.6M37.4 45.4l0.7 -3.2M37.4 45.4l5.6 -3.3M37.4 45.4l5.6 4" stroke="#183610" stroke-width="1.1" fill="none"/><path d="M25.8 110.6l-3.2 4.8M25.8 110.6l-6.5 -0.2M25.8 110.6l-3.5 -6M25.8 110.6l4.1 -4M25.8 110.6l5.6 2.6M25.8 110.6l1.1 6.1" stroke="#142e0e" stroke-width="1.1" fill="none"/><path d="M53.3 98.5l2.9 2.7M53.3 98.5l-1.6 5.7M53.3 98.5l-6.1 2.4M53.3 98.5l-2.7 -3.1M53.3 98.5l0.1 -4.2M53.3 98.5l3.8 -2.4" stroke="#142e0e" stroke-width="1.1" fill="none"/><path d="M66.5 68.4l-2.7 4.8M66.5 68.4l-5.9 -2.3M66.5 68.4l-1.7 -5M66.5 68.4l3.9 -3M66.5 68.4l3.3 0.3M66.5 68.4l3.2 4.1" stroke="#0f260a" stroke-width="1.1" fill="none"/><path d="M66.8 112.6l-3.5 3.1M66.8 112.6l-6.8 -1.8M66.8 112.6l-2.2 -3.4M66.8 112.6l2.1 -2.7M66.8 112.6l4.1 -0.6M66.8 112.6l2 6.6" stroke="#142e0e" stroke-width="1.1" fill="none"/><path d="M32.8 44.8l-1.2 6M32.8 44.8l-3.2 3M32.8 44.8l-5.7 -3.7M32.8 44.8l1.6 -5.8M32.8 44.8l5.8 -3.6M32.8 44.8l3.6 3.4" stroke="#0f260a" stroke-width="1.1" fill="none"/><path d="M30.1 46l4.6 3.9M30.1 46l-1.8 3.5M30.1 46l-6.3 -0.7M30.1 46l-3 -4.4M30.1 46l0.4 -6.5M30.1 46l4 -0.2" stroke="#0f260a" stroke-width="1.1" fill="none"/><path d="M60 103.6l-1.3 5.1M60 103.6l-3.2 1.9M60 103.6l-3.1 -2.3M60 103.6l0.1 -3.3M60 103.6l5 -2.3M60 103.6l5 2.8" stroke="#0f260a" stroke-width="1.1" fill="none"/><path d="M26.9 72.2l-0.7 3.5M26.9 72.2l-3.7 1.4M26.9 72.2l-4.7 -1.9M26.9 72.2l2.2 -5.8M26.9 72.2l5.5 -3.4M26.9 72.2l3.8 5.1" stroke="#0f260a" stroke-width="1.1" fill="none"/><path d="M55.6 68.7l-6.9 1.3M55.6 68.7l-3.5 -4M55.6 68.7l0.6 -3.2M55.6 68.7l6.5 0.1M55.6 68.7l2.3 4.8M55.6 68.7l-1 3.9" stroke="#0f260a" stroke-width="1.1" fill="none"/><path d="M75.2 109.1l-1.7 3.1M75.2 109.1l-5.5 -1.1M75.2 109.1l-3.3 -5.2M75.2 109.1l3.4 -4.3M75.2 109.1l4.8 -0.9M75.2 109.1l2.8 5.1" stroke="#183610" stroke-width="1.1" fill="none"/><path d="M64.2 82.7l3.8 3M64.2 82.7l-1.6 2.7M64.2 82.7l-2.8 1.3M64.2 82.7l-2.8 -6.3M64.2 82.7l0.7 -6.3M64.2 82.7l5.9 0.6" stroke="#0f260a" stroke-width="1.1" fill="none"/><path d="M39.1 112.8l7 -0.5M39.1 112.8l2.5 5M39.1 112.8l-2.5 2.3M39.1 112.8l-5.4 0M39.1 112.8l-0.3 -3.2M39.1 112.8l3.1 -2.4" stroke="#142e0e" stroke-width="1.1" fill="none"/><path d="M40.3 72.6l1.1 6.5M40.3 72.6l-4.4 4.1M40.3 72.6l-5.8 -2.3M40.3 72.6l-0.8 -6.5M40.3 72.6l3.1 -3.8M40.3 72.6l3.1 0.2" stroke="#183610" stroke-width="1.1" fill="none"/><path d="M56 100.9l2.2 4.1M56 100.9l-2.3 3.1M56 100.9l-5.6 0.4M56 100.9l-2.7 -3.3M56 100.9l3 -4.3M56 100.9l5.5 1.2" stroke="#183610" stroke-width="1.1" fill="none"/><path d="M38.6 117.5l3.3 4.6M38.6 117.5l-3.2 3.7M38.6 117.5l-5.8 -0.7M38.6 117.5l-0.5 -3.2M38.6 117.5l3 -2.7M38.6 117.5l4.7 0.9" stroke="#183610" stroke-width="1.1" fill="none"/><path d="M41.4 61.2l-2 4.5M41.4 61.2l-5.7 -1.2M41.4 61.2l-2.2 -4.6M41.4 61.2l3.1 -5.7M41.4 61.2l3.3 0.9M41.4 61.2l2.4 4.5" stroke="#183610" stroke-width="1.1" fill="none"/><path d="M43.9 99.4l3.8 3.6M43.9 99.4l-0.4 5.9M43.9 99.4l-6.5 -0.6M43.9 99.4l-3.2 -2.7M43.9 99.4l0.7 -6.1M43.9 99.4l4.1 -0.2" stroke="#142e0e" stroke-width="1.1" fill="none"/><path d="M25 98.3l1.6 3.9M25 98.3l-2.4 2.6M25 98.3l-6.6 -1.7M25 98.3l-0.1 -5M25 98.3l4.7 -3.4M25 98.3l3.8 0.5" stroke="#142e0e" stroke-width="1.1" fill="none"/><path d="M72.7 60.3l-2.5 2.2M72.7 60.3l-4.8 -3.7M72.7 60.3l0.6 -5.9M72.7 60.3l4.6 -2.1M72.7 60.3l2.9 2.4M72.7 60.3l-1.1 4.7" stroke="#142e0e" stroke-width="1.1" fill="none"/><path d="M54.6 44.2l5.5 3.7M54.6 44.2l0 6.6M54.6 44.2l-5.8 3.7M54.6 44.2l-6.2 -1M54.6 44.2l-1.1 -5.7M54.6 44.2l2.5 -3.6" stroke="#30d830" stroke-width="1.1" fill="none"/><path d="M96.3 40.6l-3.9 5.1M96.3 40.6l-4.2 -1.4M96.3 40.6l-0.9 -3M96.3 40.6l1 -3.5M96.3 40.6l5.4 1M96.3 40.6l2.3 3.4" stroke="#30d830" stroke-width="1.1" fill="none"/><path d="M45.9 82.9l-6 0.3M45.9 82.9l-1.2 -3.1M45.9 82.9l3.3 -5.6M45.9 82.9l6.8 0.4M45.9 82.9l1.5 3.2M45.9 82.9l-3.8 5.5" stroke="#48ff48" stroke-width="1.1" fill="none"/><path d="M41.6 24.9l-3.5 1.5M41.6 24.9l-3.6 -3M41.6 24.9l-0.4 -5M41.6 24.9l5 -4.2M41.6 24.9l4.4 1.9M41.6 24.9l-0.6 4.4" stroke="#48ff48" stroke-width="1.1" fill="none"/><path d="M75.9 82.5l3.4 0.4M75.9 82.5l2.5 4.1M75.9 82.5l-1.8 3M75.9 82.5l-3 -1.3M75.9 82.5l-2 -6.7M75.9 82.5l2.5 -4.1" stroke="#48ff48" stroke-width="1.1" fill="none"/><path d="M63.2 76.6l3.4 1.3M63.2 76.6l0.7 4.6M63.2 76.6l-3.4 3.1M63.2 76.6l-5.4 -0.4M63.2 76.6l-2 -3.4M63.2 76.6l2.8 -3.4" stroke="#3cf03c" stroke-width="1.1" fill="none"/><path d="M104.9 83.1l-0.9 6.2M104.9 83.1l-4.4 1.3M104.9 83.1l-3.9 -3.2M104.9 83.1l3 -4.7M104.9 83.1l5.8 -1.6M104.9 83.1l4.7 4.3" stroke="#3cf03c" stroke-width="1.1" fill="none"/><path d="M107.1 30.8l0.6 4.8M107.1 30.8l-2.5 2.8M107.1 30.8l-4.8 0.3M107.1 30.8l-1.1 -5.4M107.1 30.8l2.4 -2.5M107.1 30.8l5.9 0.5" stroke="#48ff48" stroke-width="1.1" fill="none"/><path d="M56.3 40l1.7 4.2M56.3 40l-2.3 3.5M56.3 40l-5.6 -1.8M56.3 40l-0.4 -5.4M56.3 40l3.7 -2.8M56.3 40l5.1 1.8" stroke="#3cf03c" stroke-width="1.1" fill="none"/><path d="M59.4 83l-1.2 2.7M59.4 83l-4.6 0.3M59.4 83l-2.3 -3.5M59.4 83l2.4 -5.3M59.4 83l3 -0.7M59.4 83l3.1 3" stroke="#48ff48" stroke-width="1.1" fill="none"/><path d="M44.8 59.2l4.8 0.6M44.8 59.2l0.4 3.9M44.8 59.2l-3.9 5.2M44.8 59.2l-4.8 -2.5M44.8 59.2l-0.3 -5.7M44.8 59.2l2.8 -1.4" stroke="#48ff48" stroke-width="1.1" fill="none"/><path d="M68 79.1l0.4 4.6M68 79.1l-4 2.8M68 79.1l-5.4 -2.8M68 79.1l2.3 -6.2M68 79.1l2.9 -0.6M68 79.1l5.7 2.7" stroke="#3cf03c" stroke-width="1.1" fill="none"/><path d="M47.8 79.6l4.6 1.6M47.8 79.6l0.6 4.5M47.8 79.6l-2.3 3.6M47.8 79.6l-6.2 -0.7M47.8 79.6l-0.8 -6.7M47.8 79.6l4.1 -2.8" stroke="#30d830" stroke-width="1.1" fill="none"/><path d="M70.9 89.1l-0.2 3.6M70.9 89.1l-3.9 4.7M70.9 89.1l-3.7 -2.1M70.9 89.1l-0.8 -3.6M70.9 89.1l3.7 -4M70.9 89.1l2.8 2.3" stroke="#2ee22e" stroke-width="1.1" fill="none"/><path d="M114.1 55.7l2.1 5.7M114.1 55.7l-1.5 2.7M114.1 55.7l-6.2 0.5M114.1 55.7l-2.4 -2.1M114.1 55.7l2.9 -3.7M114.1 55.7l3.2 -0.2" stroke="#3cf03c" stroke-width="1.1" fill="none"/><path d="M54 79.3l3 2.2M54 79.3l-0.8 4.9M54 79.3l-4.8 3M54 79.3l-5.9 -2.7M54 79.3l-1.2 -5.2M54 79.3l3.3 -3.4" stroke="#30d830" stroke-width="1.1" fill="none"/><path d="M83.3 55.4l-3.9 2M83.3 55.4l-1.5 -3.5M83.3 55.4l1.6 -3.7M83.3 55.4l6.1 -0.4M83.3 55.4l3.6 5M83.3 55.4l-0.6 5.2" stroke="#3cf03c" stroke-width="1.1" fill="none"/><path d="M110.9 76.8l1.5 2.8M110.9 76.8l-2.8 3.8M110.9 76.8l-3.2 -1.5M110.9 76.8l-0.7 -4.3M110.9 76.8l2.9 -4.7M110.9 76.8l3.8 1.2" stroke="#48ff48" stroke-width="1.1" fill="none"/><path d="M66.4 35.7l-4.2 2.3M66.4 35.7l-3.5 -1.1M66.4 35.7l0.6 -4M66.4 35.7l6.4 -2.4M66.4 35.7l2.6 2.3M66.4 35.7l-0.7 6.5" stroke="#2ee22e" stroke-width="1.1" fill="none"/><path d="M117.5 68.1l-2.8 3.3M117.5 68.1l-3.1 -0.7M117.5 68.1l-2.2 -6.4M117.5 68.1l4.8 -3.6M117.5 68.1l5 0.3M117.5 68.1l0 3.2" stroke="#30d830" stroke-width="1.1" fill="none"/><path d="M101.4 39.6l-2.9 2.4M101.4 39.6l-5.6 -2.6M101.4 39.6l0.9 -3.1M101.4 39.6l5.8 -2.2M101.4 39.6l5.9 2.7M101.4 39.6l0.6 3.3" stroke="#48ff48" stroke-width="1.1" fill="none"/><path d="M82 75.7l3 2.3M82 75.7l-2.6 4M82 75.7l-5.9 0.7M82 75.7l-1.7 -4.3M82 75.7l2.7 -3.9M82 75.7l4.8 -0.4" stroke="#30d830" stroke-width="1.1" fill="none"/><path d="M67.1 46.1l5.7 0.8M67.1 46.1l2.5 3.7M67.1 46.1l-3.6 4.5M67.1 46.1l-3.2 -0.3M67.1 46.1l-0.8 -5.3M67.1 46.1l1.8 -3.6" stroke="#30d830" stroke-width="1.1" fill="none"/><path d="M101.3 82.9l-0.1 3.9M101.3 82.9l-3.6 0.5M101.3 82.9l-5.6 -4M101.3 82.9l-0.3 -3.8M101.3 82.9l3.8 -0.4M101.3 82.9l4 2.5" stroke="#3cf03c" stroke-width="1.1" fill="none"/><path d="M116.8 55.7l-1.1 6.6M116.8 55.7l-3.7 1.4M116.8 55.7l-3 -2M116.8 55.7l2.7 -5.6M116.8 55.7l5.8 -0.7M116.8 55.7l3.9 4.6" stroke="#30d830" stroke-width="1.1" fill="none"/><path d="M85.3 47.7l5.4 -0.9M85.3 47.7l4.2 4.9M85.3 47.7l-3.1 4.5M85.3 47.7l-5.5 -0.7M85.3 47.7l-0.7 -3.7M85.3 47.7l3.8 -4.7" stroke="#30d830" stroke-width="1.1" fill="none"/><path d="M102 34.6l1.3 3.8M102 34.6l-2.9 4.7M102 34.6l-4.9 1M102 34.6l-2.1 -2.4M102 34.6l3.9 -5.6M102 34.6l5.2 -0.8" stroke="#2ee22e" stroke-width="1.1" fill="none"/><path d="M89.5 91.4l-0.8 3M89.5 91.4l-3.1 -0.5M89.5 91.4l-4.3 -4.4M89.5 91.4l4.4 -5.4M89.5 91.4l4.4 -1.2M89.5 91.4l4.2 3.7" stroke="#30d830" stroke-width="1.1" fill="none"/><path d="M116.5 51.6l2.3 5.1M116.5 51.6l-5 3.6M116.5 51.6l-6.2 -1.4M116.5 51.6l-0.3 -4.5M116.5 51.6l2.8 -1.9M116.5 51.6l3.8 2.8" stroke="#48ff48" stroke-width="1.1" fill="none"/><path d="M85.6 44.6l0.3 3.8M85.6 44.6l-4.5 2.1M85.6 44.6l-6.7 -1.2M85.6 44.6l-0 -3.8M85.6 44.6l5.2 -4.1M85.6 44.6l5.7 3.2" stroke="#48ff48" stroke-width="1.1" fill="none"/><path d="M115 50.3l-3 0.8M115 50.3l-4.3 -2.5M115 50.3l2 -3.9M115 50.3l3.8 -0.5M115 50.3l3.2 1.9M115 50.3l0.2 4.1" stroke="#3cf03c" stroke-width="1.1" fill="none"/><path d="M52.7 76.4l1 3.9M52.7 76.4l-3 1.9M52.7 76.4l-2.9 -0.8M52.7 76.4l1.2 -5.7M52.7 76.4l3.6 -3.3M52.7 76.4l3.3 1.9" stroke="#30d830" stroke-width="1.1" fill="none"/><path d="M93.1 85l-0.2 4.5M93.1 85l-4.3 1.2M93.1 85l-4.4 -4.1M93.1 85l0.1 -6.5M93.1 85l4.2 -1.7M93.1 85l4.4 3.7" stroke="#2ee22e" stroke-width="1.1" fill="none"/><path d="M86.7 51.3l-4.6 2.5M86.7 51.3l-2.6 -2.7M86.7 51.3l1.3 -3.4M86.7 51.3l3 -2.2M86.7 51.3l5.8 2.6M86.7 51.3l-0.9 4" stroke="#48ff48" stroke-width="1.1" fill="none"/><path d="M97.2 55.3l1.5 4M97.2 55.3l-4.3 3.6M97.2 55.3l-5.4 -1.1M97.2 55.3l-1.1 -6.1M97.2 55.3l2.3 -3.7M97.2 55.3l3.4 0.8" stroke="#48ff48" stroke-width="1.1" fill="none"/><path d="M45.1 21.8l2.3 4M45.1 21.8l-0.7 4.4M45.1 21.8l-6.9 0.5M45.1 21.8l-3.6 -5.1M45.1 21.8l1.3 -6M45.1 21.8l6.6 -0.1" stroke="#30d830" stroke-width="1.1" fill="none"/><path d="M106 65.3l0.3 5.8M106 65.3l-2.7 4.4M106 65.3l-6.1 -2.2M106 65.3l-2.2 -5.1M106 65.3l3.4 -2.7M106 65.3l3.2 0.6" stroke="#30d830" stroke-width="1.1" fill="none"/><path d="M66.1 91.6l2.8 2.3M66.1 91.6l-0 3.9M66.1 91.6l-3.5 0.4M66.1 91.6l-2.5 -2.4M66.1 91.6l1.9 -5.1M66.1 91.6l5.9 -1.2" stroke="#48ff48" stroke-width="1.1" fill="none"/><path d="M115.5 59.3l-5.8 2M115.5 59.3l-3.3 -5.7M115.5 59.3l0.5 -3.2M115.5 59.3l3.1 -1.4M115.5 59.3l4.3 2.9M115.5 59.3l-1.3 4.9" stroke="#3cf03c" stroke-width="1.1" fill="none"/><path d="M51.6 58.9l-1.5 5.1M51.6 58.9l-4.2 -0.8M51.6 58.9l-2.7 -3.7M51.6 58.9l3 -3.4M51.6 58.9l5.1 -0.7M51.6 58.9l2.2 5.9" stroke="#48ff48" stroke-width="1.1" fill="none"/><path d="M60.8 22l4.7 0.5M60.8 22l2.8 5.6M60.8 22l-3.2 5.7M60.8 22l-6 0.3M60.8 22l-2.5 -3.3M60.8 22l2.1 -3.5" stroke="#3cf03c" stroke-width="1.1" fill="none"/><path d="M82.5 44.4l-4.9 3.1M82.5 44.4l-4.9 -4.4M82.5 44.4l0.6 -5.6M82.5 44.4l4.4 -1.5M82.5 44.4l5.7 3.1M82.5 44.4l-1 6.5" stroke="#48ff48" stroke-width="1.1" fill="none"/><path d="M115.9 67.6l-3.9 3.4M115.9 67.6l-3.6 -0.4M115.9 67.6l-1.9 -5.5M115.9 67.6l2.1 -4.5M115.9 67.6l6 0.4M115.9 67.6l1.6 3.5" stroke="#2ee22e" stroke-width="1.1" fill="none"/><path d="M109.6 69.6l4.5 1.9M109.6 69.6l-0 4M109.6 69.6l-3.9 1.5M109.6 69.6l-5.5 -2.2M109.6 69.6l-1.1 -3.8M109.6 69.6l3.1 -3.8" stroke="#3cf03c" stroke-width="1.1" fill="none"/><path d="M81.4 68.4l-1.6 4.2M81.4 68.4l-4.4 -0.1M81.4 68.4l-3.4 -4.7M81.4 68.4l1.7 -4.9M81.4 68.4l5.5 0.8M81.4 68.4l3 4.6" stroke="#48ff48" stroke-width="1.1" fill="none"/><path d="M57.9 89l5.5 -0M57.9 89l2.1 4.4M57.9 89l-2.2 2.9M57.9 89l-3.9 -0.1M57.9 89l-1 -3.9M57.9 89l4.4 -4.1" stroke="#30d830" stroke-width="1.1" fill="none"/><path d="M110.1 41.5l3.6 -0.2M110.1 41.5l2.2 5.8M110.1 41.5l-1.3 3.6M110.1 41.5l-3.2 0.7M110.1 41.5l-3 -5.5M110.1 41.5l2.2 -5.8" stroke="#30d830" stroke-width="1.1" fill="none"/><path d="M96.6 81.8l3.3 2M96.6 81.8l0.9 3.8M96.6 81.8l-4.8 3.1M96.6 81.8l-3.6 -2.5M96.6 81.8l-1.5 -6.3M96.6 81.8l4.4 -3.3" stroke="#48ff48" stroke-width="1.1" fill="none"/><path d="M72.2 59.1l3 2.1M72.2 59.1l-1.3 4.4M72.2 59.1l-3.3 1.2M72.2 59.1l-5.4 -4M72.2 59.1l1.7 -2.9M72.2 59.1l5.5 -1.3" stroke="#30d830" stroke-width="1.1" fill="none"/><path d="M74.1 12.6l6.8 -0.1M74.1 12.6l3.1 3.4M74.1 12.6l-3.8 3.5M74.1 12.6l-3.6 -0.4M74.1 12.6l-3.4 -3.7M74.1 12.6l2.2 -2.5" stroke="#3cf03c" stroke-width="1.1" fill="none"/><path d="M77.1 74.1l2.8 3.7M77.1 74.1l-0.9 5.4M77.1 74.1l-6.2 0.6M77.1 74.1l-3.7 -5.8M77.1 74.1l3.4 -5.8M77.1 74.1l4.7 -1" stroke="#2ee22e" stroke-width="1.1" fill="none"/><path d="M97.7 32.8l2.5 2.2M97.7 32.8l-1.1 3.1M97.7 32.8l-4.4 1.9M97.7 32.8l-5.5 -3M97.7 32.8l1.8 -4.7M97.7 32.8l3.2 -0.6" stroke="#30d830" stroke-width="1.1" fill="none"/><path d="M90.4 33.7l-5 3.2M90.4 33.7l-5.6 -1.9M90.4 33.7l-1.5 -4.1M90.4 33.7l3.5 -5.5M90.4 33.7l5.7 0.6M90.4 33.7l0.7 4" stroke="#48ff48" stroke-width="1.1" fill="none"/><path d="M99.5 68.3l1.5 2.7M99.5 68.3l-1.9 2.7M99.5 68.3l-4.5 0.9M99.5 68.3l-1.8 -3.6M99.5 68.3l1.8 -3.7M99.5 68.3l6.2 -0.8" stroke="#3cf03c" stroke-width="1.1" fill="none"/><path d="M70.1 85l2.6 2M70.1 85l0.1 4.5M70.1 85l-4.1 2.5M70.1 85l-3.8 -4.6M70.1 85l-0.4 -5.4M70.1 85l5.7 -2.6" stroke="#48ff48" stroke-width="1.1" fill="none"/><path d="M87.8 41.6l4.8 -0.7M87.8 41.6l1.9 3.4M87.8 41.6l-1.6 2.6M87.8 41.6l-3.9 -0.3M87.8 41.6l-1.4 -5.5M87.8 41.6l1.8 -6.2" stroke="#48ff48" stroke-width="1.1" fill="none"/><path d="M117.7 41.5l4.1 3.8M117.7 41.5l-0.8 6.7M117.7 41.5l-6 -0.4M117.7 41.5l-4 -3M117.7 41.5l1.8 -5.2M117.7 41.5l4.2 -1.2" stroke="#2ee22e" stroke-width="1.1" fill="none"/><path d="M83.8 41.8l-3.5 0.7M83.8 41.8l-3.2 -5M83.8 41.8l2.5 -4.4M83.8 41.8l5.8 -2.2M83.8 41.8l3.2 4.9M83.8 41.8l-0.2 3.3" stroke="#30d830" stroke-width="1.1" fill="none"/><path d="M95.1 73.5l-3.5 2.1M95.1 73.5l-5.3 -1.8M95.1 73.5l-1.7 -3M95.1 73.5l4.7 -3.9M95.1 73.5l3.7 -0M95.1 73.5l3.4 6" stroke="#3cf03c" stroke-width="1.1" fill="none"/><path d="M88.5 59.5l-5.6 -0.6M88.5 59.5l-2.9 -3.2M88.5 59.5l1 -3.7M88.5 59.5l5.4 -0.1M88.5 59.5l3.5 3.7M88.5 59.5l-1.9 5.7" stroke="#48ff48" stroke-width="1.1" fill="none"/><path d="M55.7 44.6l-5.5 1.6M55.7 44.6l-4.3 -3.2M55.7 44.6l3.6 -5.1M55.7 44.6l4.5 0.3M55.7 44.6l1.8 3.3M55.7 44.6l-4 5.4" stroke="#3cf03c" stroke-width="1.1" fill="none"/><path d="M109.6 72.7l-3 1.7M109.6 72.7l-2.6 -1.4M109.6 72.7l0.8 -5M109.6 72.7l4 -1.1M109.6 72.7l3.4 2.2M109.6 72.7l-2.9 5.4" stroke="#48ff48" stroke-width="1.1" fill="none"/><path d="M77.1 44.7l4.8 4.5M77.1 44.7l-2.2 4.4M77.1 44.7l-4.6 2.4M77.1 44.7l-2.3 -2.6M77.1 44.7l2.1 -5.4M77.1 44.7l6.5 -1.9" stroke="#2ee22e" stroke-width="1.1" fill="none"/><path d="M73.4 35.3l3.7 1.7M73.4 35.3l-0.7 3.1M73.4 35.3l-3.4 1.9M73.4 35.3l-4.7 -3M73.4 35.3l0.1 -4.8M73.4 35.3l2.4 -2" stroke="#2ee22e" stroke-width="1.1" fill="none"/><path d="M60.9 68.4l-2.3 3.8M60.9 68.4l-5.9 -0.2M60.9 68.4l-4.3 -2.4M60.9 68.4l1.7 -4.7M60.9 68.4l3.5 -2M60.9 68.4l2.8 1.5" stroke="#48ff48" stroke-width="1.1" fill="none"/><path d="M110.7 48.4l4.2 2.1M110.7 48.4l1.4 5.1M110.7 48.4l-5.5 2.8M110.7 48.4l-5.1 -1.1M110.7 48.4l-0.2 -6.7M110.7 48.4l4.4 -5.1" stroke="#3cf03c" stroke-width="1.1" fill="none"/><path d="M60.7 29.6l3.6 -0.1M60.7 29.6l1 5.3M60.7 29.6l-1.9 2.8M60.7 29.6l-3.5 -0.6M60.7 29.6l-1.3 -5M60.7 29.6l3.1 -2.6" stroke="#48ff48" stroke-width="1.1" fill="none"/><path d="M95.6 17.5l6.5 2.1M95.6 17.5l3.6 5.6M95.6 17.5l-3.5 5.8M95.6 17.5l-4.5 -1M95.6 17.5l-2.9 -5.6M95.6 17.5l4.6 -3.1" stroke="#48ff48" stroke-width="1.1" fill="none"/><path d="M70.8 93.8l3 5.7M70.8 93.8l-1.8 2.5M70.8 93.8l-3.8 1M70.8 93.8l-2.5 -4.1M70.8 93.8l3 -4.3M70.8 93.8l5.5 -0.8" stroke="#30d830" stroke-width="1.1" fill="none"/><path d="M51.4 68.4l1.6 4.7M51.4 68.4l-2.7 1.8M51.4 68.4l-4 -0.1M51.4 68.4l-1 -3.2M51.4 68.4l2.1 -4.4M51.4 68.4l3.7 1.7" stroke="#30d830" stroke-width="1.1" fill="none"/><path d="M114.3 42.3l-2.3 3.7M114.3 42.3l-5.4 0.5M114.3 42.3l-2.5 -2.7M114.3 42.3l2 -2.6M114.3 42.3l5.7 0.5M114.3 42.3l4.9 4.6" stroke="#3cf03c" stroke-width="1.1" fill="none"/><path d="M97.6 38.1l-2.8 2.1M97.6 38.1l-4.1 -3.1M97.6 38.1l-1.2 -6M97.6 38.1l2.2 -2.5M97.6 38.1l5.5 1.1M97.6 38.1l-0.1 4.6" stroke="#2ee22e" stroke-width="1.1" fill="none"/><path d="M68.4 18.1l-3.2 1.6M68.4 18.1l-5.4 -2M68.4 18.1l1.7 -6M68.4 18.1l3.8 -1.1M68.4 18.1l4.2 4.9M68.4 18.1l-0.1 6.7" stroke="#3cf03c" stroke-width="1.1" fill="none"/><path d="M50.6 25.3l3.6 1.1M50.6 25.3l0.7 6.8M50.6 25.3l-4.3 4.4M50.6 25.3l-5 -1.1M50.6 25.3l-1.8 -6.5M50.6 25.3l4.6 -4.5" stroke="#3cf03c" stroke-width="1.1" fill="none"/><path d="M87.5 65.9l-2.8 6M87.5 65.9l-6.7 1M87.5 65.9l-4.1 -3.3M87.5 65.9l0.9 -3.6M87.5 65.9l5.6 -1.7M87.5 65.9l4 3.8" stroke="#2ee22e" stroke-width="1.1" fill="none"/><path d="M73.3 91.7l-2.4 1.8M73.3 91.7l-4.6 -5M73.3 91.7l-0.6 -5.1M73.3 91.7l4.6 -3M73.3 91.7l3.4 1.5M73.3 91.7l-1.3 3.9" stroke="#3cf03c" stroke-width="1.1" fill="none"/><path d="M46.7 75.9l1.8 5.5M46.7 75.9l-4 4.8M46.7 75.9l-4 -0.1M46.7 75.9l-1.1 -3.3M46.7 75.9l1.1 -4.4M46.7 75.9l6.2 -1.6" stroke="#48ff48" stroke-width="1.1" fill="none"/><path d="M69.8 61.9l-3 3.1M69.8 61.9l-3.2 -0.6M69.8 61.9l-2 -6.5M69.8 61.9l2 -4.1M69.8 61.9l5.5 -0.8M69.8 61.9l2.8 3.2" stroke="#30d830" stroke-width="1.1" fill="none"/><path d="M90.2 27.7l-3.2 2.3M90.2 27.7l-2.7 -2.2M90.2 27.7l0.4 -5.3M90.2 27.7l5.5 -3M90.2 27.7l3.3 1.9M90.2 27.7l0.5 3.4" stroke="#48ff48" stroke-width="1.1" fill="none"/><path d="M68.6 10.9l5.7 3.9M68.6 10.9l-1.9 5.2M68.6 10.9l-2.8 2.1M68.6 10.9l-3.5 -4.2M68.6 10.9l0 -5.8M68.6 10.9l3.3 -2.5" stroke="#3cf03c" stroke-width="1.1" fill="none"/><path d="M64.8 90.8l-2.7 4.6M64.8 90.8l-3.5 0.1M64.8 90.8l-2.6 -3.6M64.8 90.8l0.9 -4.8M64.8 90.8l3.9 -1.8M64.8 90.8l2.9 2.1" stroke="#48ff48" stroke-width="1.1" fill="none"/><path d="M87.5 52.2l-0.5 3.6M87.5 52.2l-4.6 2.2M87.5 52.2l-5.4 -4.1M87.5 52.2l0.9 -5M87.5 52.2l4.1 -5.1M87.5 52.2l6.7 1" stroke="#2ee22e" stroke-width="1.1" fill="none"/><path d="M57.2 25.9l-0.3 5.5M57.2 25.9l-3.5 2.6M57.2 25.9l-5.4 -4.1M57.2 25.9l0 -4.6M57.2 25.9l2.5 -1.8M57.2 25.9l5.3 3.9" stroke="#3cf03c" stroke-width="1.1" fill="none"/><path d="M54.4 60.9l-2.4 3.1M54.4 60.9l-5.5 -0.7M54.4 60.9l-2.6 -3.9M54.4 60.9l3.2 -4.5M54.4 60.9l5.7 1.1M54.4 60.9l1 6.1" stroke="#30d830" stroke-width="1.1" fill="none"/><path d="M81 19.9l4.5 -0.8M81 19.9l3.1 4.7M81 19.9l-2.8 2.6M81 19.9l-4.8 1.1M81 19.9l-2.2 -4.9M81 19.9l2.2 -3.6" stroke="#2ee22e" stroke-width="1.1" fill="none"/><path d="M62.4 88.7l-1.8 4.4M62.4 88.7l-4.3 0.9M62.4 88.7l-1 -3.1M62.4 88.7l1.7 -4.3M62.4 88.7l4.4 0.7M62.4 88.7l1.8 3.1" stroke="#3cf03c" stroke-width="1.1" fill="none"/><path d="M45.1 21.8l6.6 1.8M45.1 21.8l1.1 5.6M45.1 21.8l-3.2 2.2M45.1 21.8l-3.6 -0.4M45.1 21.8l-1.7 -4.5M45.1 21.8l3.8 -3.4" stroke="#30d830" stroke-width="1.1" fill="none"/><path d="M114.4 68.4l-1.1 5.2M114.4 68.4l-6.3 1M114.4 68.4l-5.8 -2.2M114.4 68.4l1.1 -5.7M114.4 68.4l5.4 -0.7M114.4 68.4l3.4 1.6" stroke="#3cf03c" stroke-width="1.1" fill="none"/><path d="M38.8 76.6l1.8 2.7M38.8 76.6l-1.6 4.5M38.8 76.6l-5.8 1M38.8 76.6l-3.6 -2.5M38.8 76.6l1.2 -3.7M38.8 76.6l5.2 -1.4" stroke="#2ee22e" stroke-width="1.1" fill="none"/><path d="M95.3 57.2l-6.3 1.1M95.3 57.2l-2.1 -3.4M95.3 57.2l3.4 -6M95.3 57.2l4.3 -2.4M95.3 57.2l3.5 2.3M95.3 57.2l-0.3 3.4" stroke="#2ee22e" stroke-width="1.1" fill="none"/><path d="M57.2 85.3l3.8 1.3M57.2 85.3l1.3 3.8M57.2 85.3l-1.8 2.8M57.2 85.3l-6 -3.1M57.2 85.3l-1.4 -5.8M57.2 85.3l2.5 -5.2" stroke="#2ee22e" stroke-width="1.1" fill="none"/><path d="M55.4 35.9l5 4.6M55.4 35.9l-1 6.1M55.4 35.9l-4.7 1.6M55.4 35.9l-4.1 -0.8M55.4 35.9l-0.6 -3.6M55.4 35.9l4.4 -4.3" stroke="#3cf03c" stroke-width="1.1" fill="none"/><path d="M49.5 56.1l-0.8 6.8M49.5 56.1l-3.3 0.5M49.5 56.1l-2.2 -2.1M49.5 56.1l0.9 -6.3M49.5 56.1l6.1 -1M49.5 56.1l2.4 2.2" stroke="#30d830" stroke-width="1.1" fill="none"/><path d="M75.4 19.2l3.9 -0.9M75.4 19.2l2.2 4.1M75.4 19.2l-2.1 3.6M75.4 19.2l-3 0.5M75.4 19.2l-1 -3.7M75.4 19.2l2.7 -3.1" stroke="#30d830" stroke-width="1.1" fill="none"/><path d="M99.1 86.7l3.6 1.5M99.1 86.7l0.7 5.4M99.1 86.7l-2.9 1.4M99.1 86.7l-6.1 -1.3M99.1 86.7l0.4 -4.6M99.1 86.7l3.3 -1.7" stroke="#3cf03c" stroke-width="1.1" fill="none"/><path d="M76.7 52.8l-4.4 3.4M76.7 52.8l-4.4 -2.9M76.7 52.8l-0.6 -3.1M76.7 52.8l3.1 -1.1M76.7 52.8l3.1 0.9M76.7 52.8l1.6 4.2" stroke="#3cf03c" stroke-width="1.1" fill="none"/><path d="M51.4 74.6l3.8 0.5M51.4 74.6l1.2 5.5M51.4 74.6l-2.2 3.1M51.4 74.6l-4.7 -1.7M51.4 74.6l0 -3.5M51.4 74.6l3.1 -3.1" stroke="#2ee22e" stroke-width="1.1" fill="none"/><path d="M80.8 84.4l-2.6 1.7M80.8 84.4l-2.7 -1.6M80.8 84.4l-0.4 -3.1M80.8 84.4l4.6 -1.3M80.8 84.4l4 4.5M80.8 84.4l0.1 6.8" stroke="#30d830" stroke-width="1.1" fill="none"/><path d="M79.5 79l0.4 5.5M79.5 79l-4.8 2M79.5 79l-4.7 -1.5M79.5 79l-0.3 -5.4M79.5 79l3.6 -4.4M79.5 79l2.8 1.8" stroke="#48ff48" stroke-width="1.1" fill="none"/><path d="M70.4 48.6l-2.9 2.4M70.4 48.6l-4.1 -1.8M70.4 48.6l-2.7 -5.2M70.4 48.6l3.1 -5.7M70.4 48.6l5.6 1.7M70.4 48.6l1.4 2.9" stroke="#3cf03c" stroke-width="1.1" fill="none"/><path d="M104.1 30.9l-0.4 5.2M104.1 30.9l-5.6 0.9M104.1 30.9l-4.3 -2.1M104.1 30.9l-0.5 -4.8M104.1 30.9l4.7 -0.5M104.1 30.9l4.8 4.6" stroke="#2ee22e" stroke-width="1.1" fill="none"/><path d="M56.4 92l1.1 5.3M56.4 92l-4.6 1.5M56.4 92l-4 -3M56.4 92l0.9 -5.1M56.4 92l3.7 -1.2M56.4 92l3.4 1.8" stroke="#48ff48" stroke-width="1.1" fill="none"/><path d="M113.5 55.6l-2 3.1M113.5 55.6l-4.8 1M113.5 55.6l-3 -5.3M113.5 55.6l4.2 -5.2M113.5 55.6l4.6 -1.8M113.5 55.6l1.7 2.6" stroke="#30d830" stroke-width="1.1" fill="none"/><path d="M59.3 79.5l6.1 2M59.3 79.5l0.7 3.4M59.3 79.5l-3.1 4M59.3 79.5l-3.2 0M59.3 79.5l-3.5 -5.1M59.3 79.5l3.2 -3.8" stroke="#3cf03c" stroke-width="1.1" fill="none"/><path d="M69.2 45.2l-5 4.8M69.2 45.2l-4.7 -0.2M69.2 45.2l-1.2 -4.3M69.2 45.2l5 -3M69.2 45.2l4 1M69.2 45.2l1.4 3.8" stroke="#3cf03c" stroke-width="1.1" fill="none"/><path d="M72.7 97.8l-4 3.5M72.7 97.8l-4.1 -0.5M72.7 97.8l-2.4 -5.5M72.7 97.8l4.3 -4.1M72.7 97.8l3.5 0.9M72.7 97.8l1.7 4.1" stroke="#3cf03c" stroke-width="1.1" fill="none"/><path d="M71.7 83.7l-1.3 4.4M71.7 83.7l-3.3 -0.4M71.7 83.7l-3.1 -5.3M71.7 83.7l3 -3.5M71.7 83.7l4.3 -0.9M71.7 83.7l2.2 3.3" stroke="#48ff48" stroke-width="1.1" fill="none"/><path d="M46.9 53.9l-5.1 3.9M46.9 53.9l-5.4 -2.5M46.9 53.9l-3.1 -5.8M46.9 53.9l2.3 -2.5M46.9 53.9l5 0.4M46.9 53.9l0.8 4.7" stroke="#3cf03c" stroke-width="1.1" fill="none"/><path d="M49.1 78.8l-0.7 6.5M49.1 78.8l-4.7 0.4M49.1 78.8l-2.6 -2.5M49.1 78.8l1.8 -4.4M49.1 78.8l3.1 -0.4M49.1 78.8l2 3.3" stroke="#48ff48" stroke-width="1.1" fill="none"/><path d="M47.1 44.6l-1 4.2M47.1 44.6l-3.2 -0.8M47.1 44.6l-3.4 -5.3M47.1 44.6l2.2 -6.2M47.1 44.6l4.8 -1M47.1 44.6l1.9 2.5" stroke="#3cf03c" stroke-width="1.1" fill="none"/><path d="M86.1 42.1l1.6 4.8M86.1 42.1l-3.1 3.3M86.1 42.1l-5.4 1.4M86.1 42.1l-1.8 -2.9M86.1 42.1l3 -3.7M86.1 42.1l5.3 -0.2" stroke="#30d830" stroke-width="1.1" fill="none"/><path d="M108.6 26.2l-5.8 2M108.6 26.2l-5.2 -4.4M108.6 26.2l1.6 -2.9M108.6 26.2l5.8 0.5M108.6 26.2l2.4 6.1M108.6 26.2l-3.8 4.6" stroke="#30d830" stroke-width="1.1" fill="none"/><path d="M64.7 93.4l-0.7 3.5M64.7 93.4l-7 0.3M64.7 93.4l-3.6 -4.5M64.7 93.4l-0.2 -3.2M64.7 93.4l6.4 -1.4M64.7 93.4l3.8 4.5" stroke="#30d830" stroke-width="1.1" fill="none"/><path d="M63.4 86l-6 2.5M63.4 86l-3.7 -3.5M63.4 86l1.8 -4M63.4 86l4.8 -0.4M63.4 86l1.7 3.4M63.4 86l-1 5.7" stroke="#30d830" stroke-width="1.1" fill="none"/><path d="M48.5 89.6l-1 5.2M48.5 89.6l-6.4 -0.1M48.5 89.6l-2.6 -2.9M48.5 89.6l0.1 -6.6M48.5 89.6l3.1 -1.9M48.5 89.6l2.7 3.6" stroke="#3cf03c" stroke-width="1.1" fill="none"/><path d="M91.2 29.7l-4.2 2.7M91.2 29.7l-3.4 -2.8M91.2 29.7l-0.3 -6.5M91.2 29.7l4.7 -3.4M91.2 29.7l5.1 2.7M91.2 29.7l2.2 6.3" stroke="#3cf03c" stroke-width="1.1" fill="none"/><path d="M53.2 18.4l3.4 1.5M53.2 18.4l0.6 6.1M53.2 18.4l-2.9 1M53.2 18.4l-5.7 -1.6M53.2 18.4l0.3 -3.7M53.2 18.4l2.7 -2.3" stroke="#48ff48" stroke-width="1.1" fill="none"/><path d="M97.5 77l-3.3 4.8M97.5 77l-3.6 0.3M97.5 77l-4.6 -4.5M97.5 77l3.1 -5.4M97.5 77l3.9 -1.3M97.5 77l3.1 2.1" stroke="#2ee22e" stroke-width="1.1" fill="none"/><path d="M92.2 27.3l3 1.7M92.2 27.3l0.2 4.4M92.2 27.3l-5 4.5M92.2 27.3l-4.8 -1.1M92.2 27.3l-0.8 -4.9M92.2 27.3l4.4 -1.2" stroke="#30d830" stroke-width="1.1" fill="none"/><path d="M33.7 53.5l3.5 3.2M33.7 53.5l-0.2 5.1M33.7 53.5l-3.6 2.2M33.7 53.5l-4.9 -2.2M33.7 53.5l0.5 -6.3M33.7 53.5l3.3 -1.9" stroke="#3cf03c" stroke-width="1.1" fill="none"/><path d="M46.4 86.8l3.6 2.9M46.4 86.8l-0.8 6.2M46.4 86.8l-5.3 3.3M46.4 86.8l-4.3 -3.4M46.4 86.8l-0.1 -6.7M46.4 86.8l3.5 -3.3" stroke="#2ee22e" stroke-width="1.1" fill="none"/><path d="M36.9 43l-5.5 1.9M36.9 43l-3.3 -1.1M36.9 43l-1.7 -4.5M36.9 43l4.4 -2.4M36.9 43l5.2 3.4M36.9 43l-1.2 6.1" stroke="#30d830" stroke-width="1.1" fill="none"/><path d="M45 34.9l-5 4.9M45 34.9l-5.9 -2.2M45 34.9l1.1 -6.2M45 34.9l4.6 -1.4M45 34.9l5.1 4.2M45 34.9l0.5 5.6" stroke="#48ff48" stroke-width="1.1" fill="none"/><path d="M75.8 79.6l5.5 2M75.8 79.6l2.2 5.4M75.8 79.6l-2.8 3.1M75.8 79.6l-5.3 -0.5M75.8 79.6l-1.7 -4.7M75.8 79.6l5.8 -2.3" stroke="#2ee22e" stroke-width="1.1" fill="none"/><path d="M74.7 42.8l-1.7 6.6M74.7 42.8l-3.9 2.2M74.7 42.8l-3.9 -3.5M74.7 42.8l1.5 -5.3M74.7 42.8l2.7 -1.3M74.7 42.8l3 2.2" stroke="#30d830" stroke-width="1.1" fill="none"/><path d="M68.5 20l1.8 5.4M68.5 20l-3.5 1.6M68.5 20l-3.2 -1M68.5 20l-1.1 -3.7M68.5 20l2.9 -3.7M68.5 20l2.6 1.7" stroke="#48ff48" stroke-width="1.1" fill="none"/><path d="M79.7 85.2l4.1 4.3M79.7 85.2l-0.9 6.3M79.7 85.2l-6.9 0.6M79.7 85.2l-1.5 -3.2M79.7 85.2l1.9 -3.3M79.7 85.2l3.3 -1.6" stroke="#2ee22e" stroke-width="1.1" fill="none"/><path d="M35.3 69.6l2.4 3.4M35.3 69.6l-1.6 3.4M35.3 69.6l-3.5 1.6M35.3 69.6l-3.1 -4.5M35.3 69.6l2.9 -6.3M35.3 69.6l4.2 -1.2" stroke="#30d830" stroke-width="1.1" fill="none"/><path d="M78.8 97l-3.8 2.5M78.8 97l-2.1 -3.2M78.8 97l1.3 -4.2M78.8 97l6 -2.2M78.8 97l2.7 3.8M78.8 97l-1.3 3.4" stroke="#30d830" stroke-width="1.1" fill="none"/><path d="M104.4 22l-1.8 4.5M104.4 22l-6.4 0.2M104.4 22l-2.8 -4M104.4 22l2.3 -4.5M104.4 22l4.8 -0.9M104.4 22l2.2 2.9" stroke="#3cf03c" stroke-width="1.1" fill="none"/><path d="M112.2 38.5l3.7 5.4M112.2 38.5l-1.3 5.3M112.2 38.5l-5.9 0.7M112.2 38.5l-1.4 -4.2M112.2 38.5l2.3 -6.2M112.2 38.5l3.1 -0.6" stroke="#30d830" stroke-width="1.1" fill="none"/><path d="M77.1 72.9l-1.2 3.8M77.1 72.9l-6 1.9M77.1 72.9l-1.9 -3.3M77.1 72.9l1.1 -4M77.1 72.9l5 -1.3M77.1 72.9l1 3.1" stroke="#2ee22e" stroke-width="1.1" fill="none"/><path d="M75.7 51.7l-1.8 3.4M75.7 51.7l-5.5 -2.4M75.7 51.7l-1.2 -3.7M75.7 51.7l1.8 -3.1M75.7 51.7l3.1 0.6M75.7 51.7l0.1 6.9" stroke="#48ff48" stroke-width="1.1" fill="none"/><path d="M64.1 11.6l6 2M64.1 11.6l3.2 5.9M64.1 11.6l-3.7 3.6M64.1 11.6l-3.1 0.2M64.1 11.6l-1.7 -4.9M64.1 11.6l2.6 -3.7" stroke="#48ff48" stroke-width="1.1" fill="none"/><path d="M92.4 39.6l-2.4 6M92.4 39.6l-5.9 2.4M92.4 39.6l-3 -3.9M92.4 39.6l0.9 -6.5M92.4 39.6l5.8 -1.4M92.4 39.6l5 2" stroke="#3cf03c" stroke-width="1.1" fill="none"/><path d="M80.6 45.3l4.9 -0.2M80.6 45.3l3.3 4.9M80.6 45.3l-3.9 4.6M80.6 45.3l-5.1 -0.5M80.6 45.3l-1 -4.2M80.6 45.3l3.6 -5.5" stroke="#30d830" stroke-width="1.1" fill="none"/><path d="M91.1 32.6l2.3 3.7M91.1 32.6l-1.1 2.8M91.1 32.6l-6.4 -1.6M91.1 32.6l-2.8 -6.2M91.1 32.6l2.4 -2.5M91.1 32.6l4.2 -1" stroke="#48ff48" stroke-width="1.1" fill="none"/><path d="M32.7 55.7l0.4 3.8M32.7 55.7l-3.5 4.4M32.7 55.7l-4.6 -2.2M32.7 55.7l-1.4 -3.7M32.7 55.7l3.8 -3.4M32.7 55.7l6.2 0.3" stroke="#2ee22e" stroke-width="1.1" fill="none"/><path d="M98.4 40.9l-1.9 5.5M98.4 40.9l-5.7 0.2M98.4 40.9l-2.7 -4.9M98.4 40.9l0.5 -4.8M98.4 40.9l5.8 -0.9M98.4 40.9l2.5 2.4" stroke="#30d830" stroke-width="1.1" fill="none"/><path d="M74 71l1.1 3.4M74 71l-5.9 2.1M74 71l-6.5 -1.6M74 71l0.8 -5.2M74 71l5 -2.1M74 71l5.8 3.4" stroke="#48ff48" stroke-width="1.1" fill="none"/><path d="M72.9 64.6l3.6 -0M72.9 64.6l-0.2 4.4M72.9 64.6l-2.5 1.8M72.9 64.6l-3.1 -1.7M72.9 64.6l-0.5 -3.8M72.9 64.6l3 -5.5" stroke="#48ff48" stroke-width="1.1" fill="none"/><path d="M78.9 90.3l-2.8 2.5M78.9 90.3l-3.1 -2.2M78.9 90.3l-0.9 -3.3M78.9 90.3l2.5 -3M78.9 90.3l6.4 2.3M78.9 90.3l1.1 3.4" stroke="#30d830" stroke-width="1.1" fill="none"/><path d="M88.7 34.7l-4.3 -0.4M88.7 34.7l-2.3 -5.4M88.7 34.7l2.1 -3.8M88.7 34.7l4.1 -0M88.7 34.7l2.8 5.4M88.7 34.7l-2.5 6.3" stroke="#30d830" stroke-width="1.1" fill="none"/><path d="M65.1 13.4l-2 4.4M65.1 13.4l-5.6 0.6M65.1 13.4l-2.1 -6.2M65.1 13.4l2.4 -3.9M65.1 13.4l6.1 -1.4M65.1 13.4l2.5 3.8" stroke="#30d830" stroke-width="1.1" fill="none"/><path d="M68.6 87.6l4 2.7M68.6 87.6l-0.8 6.9M68.6 87.6l-5.1 1.7M68.6 87.6l-3.1 -3M68.6 87.6l3 -6M68.6 87.6l3.3 -1.5" stroke="#3cf03c" stroke-width="1.1" fill="none"/><path d="M80.2 26.4l3.3 5.2M80.2 26.4l-3.6 4M80.2 26.4l-3.2 -0M80.2 26.4l-1.9 -5.2M80.2 26.4l2.2 -2.7M80.2 26.4l4.8 -0.5" stroke="#2ee22e" stroke-width="1.1" fill="none"/><path d="M93.8 33.6l-2.4 4.1M93.8 33.6l-4.6 1.2M93.8 33.6l-3.1 -6.3M93.8 33.6l3.2 -3.4M93.8 33.6l5.2 -1.1M93.8 33.6l1.2 3.5" stroke="#48ff48" stroke-width="1.1" fill="none"/><path d="M74.4 63.1l-5.4 0.5M74.4 63.1l-3.1 -4M74.4 63.1l-0.1 -4.7M74.4 63.1l4.2 -0.8M74.4 63.1l2.8 3.9M74.4 63.1l-1.3 6.4" stroke="#30d830" stroke-width="1.1" fill="none"/><path d="M80 83.4l2.5 2.1M80 83.4l-0.3 3.7M80 83.4l-5.4 2.1M80 83.4l-5 -4.5M80 83.4l0.6 -3.9M80 83.4l2.8 -1.4" stroke="#2ee22e" stroke-width="1.1" fill="none"/><path d="M40.2 51.7l1.8 3.1M40.2 51.7l-1.5 3M40.2 51.7l-3.1 -0.2M40.2 51.7l-1.6 -3.1M40.2 51.7l1 -3.1M40.2 51.7l5.9 0.6" stroke="#3cf03c" stroke-width="1.1" fill="none"/><path d="M62.6 41.3l-6 1.1M62.6 41.3l-1.8 -4.2M62.6 41.3l1.6 -5.6M62.6 41.3l5.1 -1.1M62.6 41.3l2.5 2.9M62.6 41.3l-2.6 3.2" stroke="#2ee22e" stroke-width="1.1" fill="none"/><path d="M72.3 80.1l4.6 -0.7M72.3 80.1l1.5 6.5M72.3 80.1l-2.8 3.3M72.3 80.1l-5.3 -0.7M72.3 80.1l-2 -3.4M72.3 80.1l2.4 -2.9" stroke="#2ee22e" stroke-width="1.1" fill="none"/><path d="M39.1 70l0.2 3.3M39.1 70l-5.6 2.4M39.1 70l-3.5 -1.7M39.1 70l2.4 -5M39.1 70l4.1 -1.4M39.1 70l3.6 4.5" stroke="#2ee22e" stroke-width="1.1" fill="none"/><path d="M84.3 89.3l-3.1 0.8M84.3 89.3l-5.4 -2.8M84.3 89.3l-0.3 -4.3M84.3 89.3l5.8 -2M84.3 89.3l5.1 2.2M84.3 89.3l-1.1 3.9" stroke="#3cf03c" stroke-width="1.1" fill="none"/><path d="M79.7 21.7l3.8 0.5M79.7 21.7l3.4 5.3M79.7 21.7l-5.3 3.2M79.7 21.7l-3.5 0M79.7 21.7l-2.9 -4.5M79.7 21.7l5 -3.3" stroke="#2ee22e" stroke-width="1.1" fill="none"/><path d="M64.5 31.4l-5.9 1.4M64.5 31.4l-4.1 -4.9M64.5 31.4l0.7 -5.5M64.5 31.4l6.7 -2M64.5 31.4l1.9 2.5M64.5 31.4l-2.1 2.8" stroke="#48ff48" stroke-width="1.1" fill="none"/><path d="M52.1 85.8l4.1 1M52.1 85.8l1 4.7M52.1 85.8l-6.2 2.3M52.1 85.8l-3.2 -1.8M52.1 85.8l0.5 -3.8M52.1 85.8l5.1 -4.1" stroke="#2ee22e" stroke-width="1.1" fill="none"/><path d="M32.1 47.8l3.2 0.9M32.1 47.8l0.3 7M32.1 47.8l-3 3.9M32.1 47.8l-4.9 -0.4M32.1 47.8l-2.2 -5.5M32.1 47.8l2.5 -3" stroke="#2ee22e" stroke-width="1.1" fill="none"/><path d="M75.9 87.7l-3.8 1.9M75.9 87.7l-5.4 -3.5M75.9 87.7l0.1 -4.6M75.9 87.7l4 -3.3M75.9 87.7l6.5 2.3M75.9 87.7l0.6 3.9" stroke="#2ee22e" stroke-width="1.1" fill="none"/><path d="M89.3 76.2l-3.7 0.8M89.3 76.2l-2.7 -4.5M89.3 76.2l2.3 -4.6M89.3 76.2l5 -3M89.3 76.2l2.9 2.6M89.3 76.2l-0.3 4.4" stroke="#3cf03c" stroke-width="1.1" fill="none"/><path d="M75.2 95.9l3 4.1M75.2 95.9l-3.4 5.2M75.2 95.9l-4 -0.8M75.2 95.9l-1.2 -3.6M75.2 95.9l3.3 -4.1M75.2 95.9l6.4 1.9" stroke="#30d830" stroke-width="1.1" fill="none"/><path d="M91.6 22.2l-3.2 3M91.6 22.2l-3.5 -2.7M91.6 22.2l0 -3.8M91.6 22.2l3.4 -3M91.6 22.2l5.9 3.6M91.6 22.2l0.1 5.5" stroke="#3cf03c" stroke-width="1.1" fill="none"/><path d="M79.2 23.4l-1.5 3.4M79.2 23.4l-5 1.5M79.2 23.4l-4.6 -2.4M79.2 23.4l2.1 -4.1M79.2 23.4l4 -0.7M79.2 23.4l4.2 2" stroke="#30d830" stroke-width="1.1" fill="none"/><path d="M64.7 12.6l-6.2 2.7M64.7 12.6l-3.4 -5.8M64.7 12.6l1.3 -3.3M64.7 12.6l5.5 -2.2M64.7 12.6l5 2.7M64.7 12.6l-2 3.9" stroke="#48ff48" stroke-width="1.1" fill="none"/><path d="M90 54.8l0.3 4.2M90 54.8l-3.1 2.9M90 54.8l-5.8 -1.9M90 54.8l-0.9 -6.8M90 54.8l3.3 -1.1M90 54.8l6 3.5" stroke="#2ee22e" stroke-width="1.1" fill="none"/><path d="M82.2 27.8l-1.5 5.9M82.2 27.8l-3.5 1M82.2 27.8l-2.8 -3.2M82.2 27.8l2 -4.9M82.2 27.8l4.6 -1.6M82.2 27.8l5 4" stroke="#30d830" stroke-width="1.1" fill="none"/><path d="M83.4 39.6l-0.4 4M83.4 39.6l-3.5 1.9M83.4 39.6l-4.9 -2.6M83.4 39.6l0.9 -6.8M83.4 39.6l4.6 -3.8M83.4 39.6l5.5 2.3" stroke="#3cf03c" stroke-width="1.1" fill="none"/><path d="M36 33.6l6 1.8M36 33.6l2.1 4.1M36 33.6l-2.6 4.2M36 33.6l-4.7 -0.9M36 33.6l-1.9 -4.6M36 33.6l2.5 -2.7" stroke="#30d830" stroke-width="1.1" fill="none"/><path d="M66.5 87.8l3.7 1.9M66.5 87.8l-1.8 3.9M66.5 87.8l-4.4 1.4M66.5 87.8l-3.1 -1.5M66.5 87.8l0.2 -3.6M66.5 87.8l4.6 -1.5" stroke="#2ee22e" stroke-width="1.1" fill="none"/><path d="M93.5 43l-3.1 3.1M93.5 43l-4.2 -0.4M93.5 43l0.6 -5.2M93.5 43l4 -5.5M93.5 43l5.4 1.9M93.5 43l0.3 5.9" stroke="#2ee22e" stroke-width="1.1" fill="none"/><path d="M40.6 50.6l3.3 3.1M40.6 50.6l-1.3 3.3M40.6 50.6l-5.7 -0.5M40.6 50.6l-1.4 -5.2M40.6 50.6l1.7 -3M40.6 50.6l5.8 0.8" stroke="#2ee22e" stroke-width="1.1" fill="none"/><path d="M46.9 72.6l-0.4 3.2M46.9 72.6l-5.1 4.2M46.9 72.6l-5.2 -3.1M46.9 72.6l-1.1 -4.2M46.9 72.6l3.6 -1.9M46.9 72.6l3.7 2.9" stroke="#48ff48" stroke-width="1.1" fill="none"/><path d="M113 52l1 6.8M113 52l-5.9 3.2M113 52l-4.9 -1.3M113 52l-1 -6.1M113 52l5 -2.1M113 52l6.4 1.1" stroke="#3cf03c" stroke-width="1.1" fill="none"/><path d="M93.3 41.4l2.6 3.5M93.3 41.4l-2 3.9M93.3 41.4l-5.2 -0.7M93.3 41.4l-1.2 -3.2M93.3 41.4l1 -3.2M93.3 41.4l5.7 0.4" stroke="#30d830" stroke-width="1.1" fill="none"/><path d="M45.1 65.5l-3.5 0.3M45.1 65.5l-2.5 -4M45.1 65.5l1.9 -3.1M45.1 65.5l6 1.5M45.1 65.5l1.4 3.5M45.1 65.5l-2.3 5.1" stroke="#2ee22e" stroke-width="1.1" fill="none"/><path d="M91 55.7l3.7 3M91 55.7l1.9 5.7M91 55.7l-4.3 2.5M91 55.7l-3.9 -2.9M91 55.7l-0.7 -4.1M91 55.7l5.7 -2" stroke="#48ff48" stroke-width="1.1" fill="none"/><path d="M99 22.7l-0.7 5.8M99 22.7l-3.2 3M99 22.7l-6.8 -1.6M99 22.7l-1 -4.7M99 22.7l5.6 -2.9M99 22.7l4.5 1.3" stroke="#30d830" stroke-width="1.1" fill="none"/><path d="M62.2 66l-6.8 -1.2M62.2 66l-2.7 -4.3M62.2 66l1.6 -3.3M62.2 66l5.2 0.6M62.2 66l1.5 3M62.2 66l-0.6 3.3" stroke="#30d830" stroke-width="1.1" fill="none"/><path d="M39.1 55.3l-1.2 4M39.1 55.3l-6.5 -1.8M39.1 55.3l-2.3 -4.6M39.1 55.3l2.8 -2.6M39.1 55.3l4.3 -0.3M39.1 55.3l3.6 5.9" stroke="#30d830" stroke-width="1.1" fill="none"/><path d="M72.6 48.3l-6.3 2.8M72.6 48.3l-3.3 -1.5M72.6 48.3l2.3 -5.9M72.6 48.3l3.5 -2M72.6 48.3l4.6 4.1M72.6 48.3l-1.3 5.8" stroke="#2ee22e" stroke-width="1.1" fill="none"/><path d="M45.6 40.5l1 4.4M45.6 40.5l-5.5 3.9M45.6 40.5l-6.6 0.8M45.6 40.5l-2.6 -3.6M45.6 40.5l3.6 -4M45.6 40.5l4.6 -0" stroke="#2ee22e" stroke-width="1.1" fill="none"/><path d="M100 54.8l2 6.6M100 54.8l-2.7 5.5M100 54.8l-5.5 -1.6M100 54.8l-1.3 -4M100 54.8l2.2 -3.6M100 54.8l3.3 0.6" stroke="#48ff48" stroke-width="1.1" fill="none"/><path d="M46.1 86.7l3 2.7M46.1 86.7l-2.1 5.1M46.1 86.7l-6.2 2.8M46.1 86.7l-1.9 -4.3M46.1 86.7l2.6 -5.5M46.1 86.7l3.6 0.1" stroke="#30d830" stroke-width="1.1" fill="none"/><path d="M80.7 41l-3.8 1.8M80.7 41l-4.3 -4.2M80.7 41l-1.4 -6.8M80.7 41l6 -2.4M80.7 41l6 3M80.7 41l-0.8 4.4" stroke="#48ff48" stroke-width="1.1" fill="none"/><path d="M56.2 60.5l-1.9 4.4M56.2 60.5l-2.8 1.5M56.2 60.5l-5.4 -3.1M56.2 60.5l1.5 -6.3M56.2 60.5l4.5 -3.3M56.2 60.5l3.8 3.9" stroke="#3cf03c" stroke-width="1.1" fill="none"/><path d="M54 23.2l-2.4 3M54 23.2l-5.8 -2.6M54 23.2l-1.4 -4.7M54 23.2l3.2 -3.1M54 23.2l4.5 1.2M54 23.2l1.2 3" stroke="#3cf03c" stroke-width="1.1" fill="none"/><path d="M101.4 90.1l4 1.1M101.4 90.1l1.6 2.7M101.4 90.1l-2.1 2.4M101.4 90.1l-4.7 -0.5M101.4 90.1l-0.3 -6.4M101.4 90.1l1.7 -2.5" stroke="#30d830" stroke-width="1.1" fill="none"/><path d="M65.8 43.6l5.7 0.4M65.8 43.6l-0.1 5.8M65.8 43.6l-4.7 3.5M65.8 43.6l-5.6 -2.3M65.8 43.6l-0.2 -3.1M65.8 43.6l3.9 -3.4" stroke="#3cf03c" stroke-width="1.1" fill="none"/><path d="M69.6 47.9l-3.1 2.9M69.6 47.9l-6.6 0.8M69.6 47.9l-1.2 -5.3M69.6 47.9l2.4 -3.7M69.6 47.9l6.3 -0.9M69.6 47.9l2.5 5.4" stroke="#3cf03c" stroke-width="1.1" fill="none"/><path d="M52.2 19.9l-1.2 3.4M52.2 19.9l-6.2 2.2M52.2 19.9l-3 -5.7M52.2 19.9l2.2 -5.8M52.2 19.9l4.4 0.7M52.2 19.9l1.5 3.5" stroke="#2ee22e" stroke-width="1.1" fill="none"/><path d="M105.5 64.5l-1.3 6.5M105.5 64.5l-5.9 -0.5M105.5 64.5l-3.9 -3.5M105.5 64.5l2.2 -5.5M105.5 64.5l4.2 0.1M105.5 64.5l3.7 2.5" stroke="#48ff48" stroke-width="1.1" fill="none"/><path d="M102.9 82.1l3.1 5.9M102.9 82.1l-2.9 2.4M102.9 82.1l-4.5 -1M102.9 82.1l-1.8 -6.5M102.9 82.1l2.5 -3.6M102.9 82.1l5.5 1.4" stroke="#2ee22e" stroke-width="1.1" fill="none"/><path d="M69.9 72.8l2 2.3M69.9 72.8l-1 3.7M69.9 72.8l-2.9 2.3M69.9 72.8l-3.2 -3M69.9 72.8l1.1 -3.2M69.9 72.8l5.2 -3.5" stroke="#3cf03c" stroke-width="1.1" fill="none"/><path d="M50.9 73.2l-5.1 0.4M50.9 73.2l-2.8 -2.6M50.9 73.2l2.3 -3.2M50.9 73.2l4.7 -1.1M50.9 73.2l3.7 3.5M50.9 73.2l-1.4 4.6" stroke="#3cf03c" stroke-width="1.1" fill="none"/><path d="M78.8 42.7l4.2 2.3M78.8 42.7l0.9 5M78.8 42.7l-3.8 1.5M78.8 42.7l-4.1 -2.4M78.8 42.7l2 -6M78.8 42.7l5.6 -3" stroke="#2ee22e" stroke-width="1.1" fill="none"/><path d="M60.4 18.3l-3.1 5.5M60.4 18.3l-6.4 -0.9M60.4 18.3l-1.2 -6.3M60.4 18.3l1.9 -3M60.4 18.3l6.2 0.3M60.4 18.3l1.6 3.3" stroke="#3cf03c" stroke-width="1.1" fill="none"/><path d="M50 28.7l-2.6 2.6M50 28.7l-3.5 -1.2M50 28.7l1 -4.2M50 28.7l5 -3.5M50 28.7l4.7 2.2M50 28.7l0.7 3" stroke="#3cf03c" stroke-width="1.1" fill="none"/><path d="M83.5 77.6l-0.8 6.1M83.5 77.6l-3 0.6M83.5 77.6l-5.7 -3.8M83.5 77.6l-0.5 -4.3M83.5 77.6l6 -2M83.5 77.6l2.8 2.1" stroke="#48ff48" stroke-width="1.1" fill="none"/><path d="M88.5 21.5l-1.9 6.1M88.5 21.5l-3.3 1.4M88.5 21.5l-1.9 -3M88.5 21.5l0.3 -6.2M88.5 21.5l5.7 -1.2M88.5 21.5l2.2 2.4" stroke="#48ff48" stroke-width="1.1" fill="none"/><path d="M74.1 59.1l-0.6 5.5M74.1 59.1l-1.7 2.6M74.1 59.1l-6.1 -2.1M74.1 59.1l-1.8 -3.4M74.1 59.1l3.5 -2.8M74.1 59.1l3.9 1.4" stroke="#30d830" stroke-width="1.1" fill="none"/><path d="M92.7 41.7l-1.1 3M92.7 41.7l-5.4 -0.5M92.7 41.7l-3.5 -3.9M92.7 41.7l3.4 -5.4M92.7 41.7l3.1 -0.4M92.7 41.7l2.5 4.8" stroke="#48ff48" stroke-width="1.1" fill="none"/><path d="M55.8 41l6.3 0.1M55.8 41l0.7 4M55.8 41l-3.8 2.7M55.8 41l-6 -1.5M55.8 41l-2.6 -4.7M55.8 41l4.6 -2.6" stroke="#3cf03c" stroke-width="1.1" fill="none"/><path d="M105.2 47.7l-3.9 4.1M105.2 47.7l-5.4 -1.1M105.2 47.7l-3.8 -3.7M105.2 47.7l1.1 -4.6M105.2 47.7l6.9 0.2M105.2 47.7l3 4.2" stroke="#48ff48" stroke-width="1.1" fill="none"/><path d="M53 15.3l-3.2 2.9M53 15.3l-3.3 -1.8M53 15.3l0.2 -4M53 15.3l2.9 -2.6M53 15.3l6.1 2.1M53 15.3l-0.3 3.6" stroke="#2ee22e" stroke-width="1.1" fill="none"/><path d="M57.4 69.1l-4.4 3.1M57.4 69.1l-5.9 -2.2M57.4 69.1l-0.4 -5.6M57.4 69.1l6.1 -3M57.4 69.1l3.7 2M57.4 69.1l-0.4 5.5" stroke="#3cf03c" stroke-width="1.1" fill="none"/><path d="M112.7 38.1l5 4.7M112.7 38.1l-1.5 4.5M112.7 38.1l-4.4 2.9M112.7 38.1l-3.1 -2M112.7 38.1l2.5 -5.8M112.7 38.1l4.9 -3.3" stroke="#2ee22e" stroke-width="1.1" fill="none"/><path d="M91.3 79.3l3.9 1.4M91.3 79.3l0.5 5.7M91.3 79.3l-3.8 2.1M91.3 79.3l-4.6 -0.6M91.3 79.3l-0.1 -4.4M91.3 79.3l2.9 -2.2" stroke="#2ee22e" stroke-width="1.1" fill="none"/><path d="M96.8 80.3l-4 0.9M96.8 80.3l-3.6 -4.2M96.8 80.3l1.3 -5.6M96.8 80.3l4 -0.3M96.8 80.3l2.4 4.5M96.8 80.3l-2.9 4.6" stroke="#48ff48" stroke-width="1.1" fill="none"/><path d="M32 66.8l4.3 0.1M32 66.8l3.3 5.3M32 66.8l-1.7 2.8M32 66.8l-3.1 -0.7M32 66.8l-1.1 -5.3M32 66.8l1.6 -2.9" stroke="#48ff48" stroke-width="1.1" fill="none"/><path d="M43.3 23.7l-1.2 6.1M43.3 23.7l-3.6 0.6M43.3 23.7l-3.2 -3.9M43.3 23.7l-0.2 -4.6M43.3 23.7l3.1 -1.4M43.3 23.7l4.4 1.6" stroke="#48ff48" stroke-width="1.1" fill="none"/><path d="M60.1 30.1l3.4 5M60.1 30.1l-2.3 4.4M60.1 30.1l-5.4 2.1M60.1 30.1l-1.6 -3.8M60.1 30.1l2.8 -5.7M60.1 30.1l3.6 -1" stroke="#3cf03c" stroke-width="1.1" fill="none"/><path d="M49.6 19.5l5.9 3.4M49.6 19.5l-0.2 4.6M49.6 19.5l-4.8 3.1M49.6 19.5l-5.5 -3.3M49.6 19.5l1.6 -5.8M49.6 19.5l2.7 -1.8" stroke="#3cf03c" stroke-width="1.1" fill="none"/><path d="M89.5 12.8l-6.5 1.6M89.5 12.8l-2.4 -2.1M89.5 12.8l1 -3.7M89.5 12.8l5.9 -0.3M89.5 12.8l3.9 3.4M89.5 12.8l-1.1 3.7" stroke="#3cf03c" stroke-width="1.1" fill="none"/><path d="M100.7 47.2l-2.5 2.7M100.7 47.2l-4.4 -0.2M100.7 47.2l-1.1 -4.1M100.7 47.2l4 -4.7M100.7 47.2l5.5 0.7M100.7 47.2l3.7 5" stroke="#2ee22e" stroke-width="1.1" fill="none"/><path d="M111.6 66.9l4.5 1.4M111.6 66.9l2.3 5.4M111.6 66.9l-3.6 4.4M111.6 66.9l-3.2 0M111.6 66.9l-2 -2.7M111.6 66.9l3.3 -4.7" stroke="#30d830" stroke-width="1.1" fill="none"/><path d="M88.5 83.8l-1.5 3.1M88.5 83.8l-3 1.6M88.5 83.8l-4 -2.3M88.5 83.8l-0.1 -6.8M88.5 83.8l3.4 -0.4M88.5 83.8l4.1 2.2" stroke="#30d830" stroke-width="1.1" fill="none"/><path d="M53.5 74l-5.8 2.2M53.5 74l-5.5 -2M53.5 74l0.2 -5M53.5 74l2.8 -2.3M53.5 74l4.6 2.1M53.5 74l0.4 6.1" stroke="#48ff48" stroke-width="1.1" fill="none"/><path d="M101.3 55.7l-2.5 6.4M101.3 55.7l-3.5 0.8M101.3 55.7l-2.9 -3.1M101.3 55.7l2.5 -4.3M101.3 55.7l3 0.5M101.3 55.7l1.4 3.1" stroke="#48ff48" stroke-width="1.1" fill="none"/><path d="M100 45.6l5.8 1.6M100 45.6l-0.3 3.1M100 45.6l-2.3 2.6M100 45.6l-3.8 -0.8M100 45.6l0.2 -3.2M100 45.6l5.9 -2.8" stroke="#48ff48" stroke-width="1.1" fill="none"/><path d="M106.3 54.4l6.6 1.7M106.3 54.4l0.2 3.1M106.3 54.4l-2.5 2M106.3 54.4l-4.1 -1.1M106.3 54.4l-1.7 -6.1M106.3 54.4l5 -3.7" stroke="#48ff48" stroke-width="1.1" fill="none"/><path d="M73.7 87.6l4.6 1.7M73.7 87.6l2.5 6.2M73.7 87.6l-2.4 2.9M73.7 87.6l-5.2 1M73.7 87.6l-2.2 -5.1M73.7 87.6l1.3 -3.1" stroke="#3cf03c" stroke-width="1.1" fill="none"/><path d="M71.1 70.6l5 1.9M71.1 70.6l1.1 4.2M71.1 70.6l-5.1 4.5M71.1 70.6l-6.8 -1.1M71.1 70.6l0 -4M71.1 70.6l4.3 -4.9" stroke="#3cf03c" stroke-width="1.1" fill="none"/><path d="M51.4 28.5l5.6 -0.7M51.4 28.5l2.3 2.3M51.4 28.5l-2 3M51.4 28.5l-6.2 0.5M51.4 28.5l-1.8 -3.5M51.4 28.5l3.8 -3.3" stroke="#3cf03c" stroke-width="1.1" fill="none"/><path d="M112.7 30.9l3.5 3M112.7 30.9l-3.6 4.7M112.7 30.9l-6.2 1M112.7 30.9l-3.1 -3.5M112.7 30.9l1.9 -2.7M112.7 30.9l4.4 1" stroke="#2ee22e" stroke-width="1.1" fill="none"/><path d="M49.1 53l4 4.6M49.1 53l-1.8 3.7M49.1 53l-3.4 0.5M49.1 53l-2 -4.1M49.1 53l3.1 -5.4M49.1 53l4.9 1" stroke="#30d830" stroke-width="1.1" fill="none"/><path d="M91 37.7l-0.6 5.1M91 37.7l-5.3 3.7M91 37.7l-3.4 -1.4M91 37.7l-0.4 -6M91 37.7l3.5 -1.3M91 37.7l2.7 1.4" stroke="#2ee22e" stroke-width="1.1" fill="none"/><path d="M113.3 75.6l-3 4.9M113.3 75.6l-5 -0.9M113.3 75.6l-3.5 -5.4M113.3 75.6l2.3 -3.8M113.3 75.6l5.5 -0.6M113.3 75.6l1.7 4.3" stroke="#3cf03c" stroke-width="1.1" fill="none"/><path d="M100.3 82.6l6 0.8M100.3 82.6l1.5 3.1M100.3 82.6l-6 3.3M100.3 82.6l-5.1 -2.1M100.3 82.6l-0.5 -5.4M100.3 82.6l5.2 -2.9" stroke="#48ff48" stroke-width="1.1" fill="none"/><path d="M76.1 25.6l0.6 3.5M76.1 25.6l-3.6 3.7M76.1 25.6l-5.4 -1.8M76.1 25.6l0.6 -5M76.1 25.6l4 -2.8M76.1 25.6l3.4 0.9" stroke="#48ff48" stroke-width="1.1" fill="none"/><path d="M91.5 33.6l-1.1 4.8M91.5 33.6l-3.4 1.2M91.5 33.6l-4.5 -3.2M91.5 33.6l-0.5 -6.9M91.5 33.6l2.5 -1.8M91.5 33.6l3.2 2.1" stroke="#3cf03c" stroke-width="1.1" fill="none"/><path d="M63 65 L55.7 67.2 L48.1 67.3 L40.6 66.4 L34 62.6 L28 57.9" stroke="#8a7060" stroke-width="2.2" fill="none" stroke-linecap="round"/><path d="M40.6 66.4l-13.3 0.4" stroke="#8a7060" stroke-width="1.54" fill="none"/><path d="M40.6 66.4l-2.7 -13" stroke="#8a7060" stroke-width="1.54" fill="none"/><path d="M63 65 L55.4 64.3 L47.9 63.7 L40.4 65.2 L33.1 67.2 L25.5 67" stroke="#8a7060" stroke-width="2.2" fill="none" stroke-linecap="round"/><path d="M40.4 65.2l-10.4 8.3" stroke="#8a7060" stroke-width="1.54" fill="none"/><path d="M40.4 65.2l-10 -8.8" stroke="#8a7060" stroke-width="1.54" fill="none"/><path d="M63 65 L59.2 58.4 L53.5 53.4 L47.8 48.3 L41.5 44.2 L34.2 42.1" stroke="#8a7060" stroke-width="2.2" fill="none" stroke-linecap="round"/><path d="M47.8 48.3l-12.1 5.5" stroke="#8a7060" stroke-width="1.54" fill="none"/><path d="M47.8 48.3l-7.5 -11" stroke="#8a7060" stroke-width="1.54" fill="none"/><path d="M63 65 L60.9 57.7 L57.7 50.8 L52.7 45 L48.8 38.5 L47.2 31.1" stroke="#8a7060" stroke-width="2.2" fill="none" stroke-linecap="round"/><path d="M52.7 45l-10.5 -8.2" stroke="#8a7060" stroke-width="1.54" fill="none"/><path d="M52.7 45l6.3 -11.7" stroke="#8a7060" stroke-width="1.54" fill="none"/><path d="M63 65 L67.8 59.1 L70.1 51.8 L73.2 44.9 L73.6 37.3 L75.5 30" stroke="#8a7060" stroke-width="2.2" fill="none" stroke-linecap="round"/><path d="M73.2 44.9l-5.8 -12" stroke="#8a7060" stroke-width="1.54" fill="none"/><path d="M73.2 44.9l10.8 -7.7" stroke="#8a7060" stroke-width="1.54" fill="none"/><path d="M63 65 L70.6 64.6 L78.2 65.1 L85.3 67.8 L92.2 70.9 L99.3 73.8" stroke="#8a7060" stroke-width="2.2" fill="none" stroke-linecap="round"/><path d="M85.3 67.8l12.7 -4.1" stroke="#8a7060" stroke-width="1.54" fill="none"/><path d="M85.3 67.8l6.2 11.8" stroke="#8a7060" stroke-width="1.54" fill="none"/><path d="M63 65 L66.4 71.8 L69.9 78.5 L72.3 85.8 L74.7 93 L76.9 100.3" stroke="#8a7060" stroke-width="2.2" fill="none" stroke-linecap="round"/><path d="M72.3 85.8l11.1 7.4" stroke="#8a7060" stroke-width="1.54" fill="none"/><path d="M72.3 85.8l-5.4 12.2" stroke="#8a7060" stroke-width="1.54" fill="none"/><path d="M63 65 L56.6 61.8 L49.9 58.9 L43.3 56.2 L37.6 51.8 L33.8 45.7" stroke="#000" stroke-width="0.8" fill="none" stroke-linecap="round"/><path d="M63 65 L65.3 58.2 L68.8 51.9 L70.1 44.8 L72.4 38 L74.3 31" stroke="#000" stroke-width="0.8" fill="none" stroke-linecap="round"/><path d="M63 65 L68.9 60.9 L75 57 L79.4 51.3 L85.4 47.3 L91.6 43.8" stroke="#000" stroke-width="0.8" fill="none" stroke-linecap="round"/><path d="M63 65 L69.3 68.4 L76.2 70.5 L82.8 73.5 L88.3 78.1 L92.4 84" stroke="#000" stroke-width="0.8" fill="none" stroke-linecap="round"/><path d="M63 65 L64 72.1 L62.4 79.1 L58.1 85 L54.1 90.9 L49.4 96.4" stroke="#000" stroke-width="0.8" fill="none" stroke-linecap="round"/><path d="M63 65 L57.9 70 L52.4 74.7 L48.2 80.5 L44.3 86.6 L38.4 90.7" stroke="#000" stroke-width="0.8" fill="none" stroke-linecap="round"/><path d="M63 65 L56.2 67.4 L50.8 72.1 L45.9 77.4 L41.3 83 L35.1 86.5" stroke="#000" stroke-width="0.8" fill="none" stroke-linecap="round"/></g><g id="t54"><circle cx="66" cy="63" r="38" stroke="#5a3c12" stroke-width="1.6" fill="none"/><path d="M66 63Q76.5 68.8 80.6 76.6" stroke="#6b4d1e" stroke-width="4" fill="none" stroke-linecap="round"/><path d="M66 63Q76.5 68.8 80.6 76.6" stroke="#2a1a06" stroke-width="1" fill="none"/><path d="M80.6 76.6L100.1 77.4" stroke="#6b4d1e" stroke-width="2.4" stroke-linecap="round"/><path d="M80.6 76.6L90.4 90.8" stroke="#6b4d1e" stroke-width="2.4" stroke-linecap="round"/><path d="M80.6 76.6L75.9 98.7" stroke="#6b4d1e" stroke-width="2.4" stroke-linecap="round"/><path d="M66 63Q63.8 74.8 57.6 81.1" stroke="#6b4d1e" stroke-width="4" fill="none" stroke-linecap="round"/><path d="M66 63Q63.8 74.8 57.6 81.1" stroke="#2a1a06" stroke-width="1" fill="none"/><path d="M57.6 81.1L62.8 99.9" stroke="#6b4d1e" stroke-width="2.4" stroke-linecap="round"/><path d="M57.6 81.1L47.1 94.8" stroke="#6b4d1e" stroke-width="2.4" stroke-linecap="round"/><path d="M57.6 81.1L35.2 83.4" stroke="#6b4d1e" stroke-width="2.4" stroke-linecap="round"/><path d="M66 63Q54.1 64.5 46.1 60.6" stroke="#6b4d1e" stroke-width="4" fill="none" stroke-linecap="round"/><path d="M66 63Q54.1 64.5 46.1 60.6" stroke="#2a1a06" stroke-width="1" fill="none"/><path d="M46.1 60.6L30 71.4" stroke="#6b4d1e" stroke-width="2.4" stroke-linecap="round"/><path d="M46.1 60.6L29.9 54.9" stroke="#6b4d1e" stroke-width="2.4" stroke-linecap="round"/><path d="M46.1 60.6L37 40" stroke="#6b4d1e" stroke-width="2.4" stroke-linecap="round"/><path d="M66 63Q60.9 52.2 62.2 43.4" stroke="#6b4d1e" stroke-width="4" fill="none" stroke-linecap="round"/><path d="M66 63Q60.9 52.2 62.2 43.4" stroke="#2a1a06" stroke-width="1" fill="none"/><path d="M62.2 43.4L46.9 31.3" stroke="#6b4d1e" stroke-width="2.4" stroke-linecap="round"/><path d="M62.2 43.4L62.6 26.2" stroke="#6b4d1e" stroke-width="2.4" stroke-linecap="round"/><path d="M62.2 43.4L78.9 28.3" stroke="#6b4d1e" stroke-width="2.4" stroke-linecap="round"/><path d="M66 63Q74.7 54.8 83.5 53.3" stroke="#6b4d1e" stroke-width="4" fill="none" stroke-linecap="round"/><path d="M66 63Q74.7 54.8 83.5 53.3" stroke="#2a1a06" stroke-width="1" fill="none"/><path d="M83.5 53.3L90.2 35" stroke="#6b4d1e" stroke-width="2.4" stroke-linecap="round"/><path d="M83.5 53.3L100 48.4" stroke="#6b4d1e" stroke-width="2.4" stroke-linecap="round"/><path d="M83.5 53.3L103 64.6" stroke="#6b4d1e" stroke-width="2.4" stroke-linecap="round"/><path d="M100.7 54.4 L100.2 56.3 L97.9 56.3 L97 54.4 L98.4 53.3 L100.2 52.4Z" stroke="#888888" stroke-width="1" fill="none"/><path d="M99 46.7 L97.5 48.2 L96.2 47.3 L95.7 45.7 L97.4 45.4Z" stroke="#1e8a1e" stroke-width="1" fill="none"/><path d="M95.3 54.3 L94.5 56 L92.6 55.8 L91.4 54.3 L92.6 52.7 L94.7 52.3Z" stroke="#30c830" stroke-width="1" fill="none"/><path d="M99.4 66.7 L98.1 68.5 L95.5 68.2 L96.3 65.8 L98 65.3Z" stroke="#30c830" stroke-width="1" fill="none"/><path d="M65.3 38.5 L64.3 40.2 L62.4 40.2 L60.7 38.5 L62 36.2 L64.7 36.2Z" stroke="#30c830" stroke-width="1" fill="none"/><path d="M98.3 70.5 L97.5 72 L95.7 71.5 L95.3 69.3 L97.6 68.8Z" stroke="#30c830" stroke-width="1" fill="none"/><path d="M39.2 65.6 L37.7 66.7 L36.3 66.9 L35.2 65.6 L36.4 64.5 L37.9 64.2Z" stroke="#1e8a1e" stroke-width="1" fill="none"/><path d="M82.2 87 L80.6 89 L78.5 87 L80.6 85.3Z" stroke="#1e8a1e" stroke-width="1" fill="none"/><path d="M49 46.7 L48 47.9 L46.5 47.6 L46.4 45.8 L48.3 44.8Z" stroke="#1e8a1e" stroke-width="1" fill="none"/><path d="M96.7 59 L94 61 L91.4 59 L94 57.4Z" stroke="#50d850" stroke-width="1" fill="none"/><path d="M69.1 28.2 L67.8 29.8 L66.8 28.2 L67.8 27.2Z" stroke="#888888" stroke-width="1" fill="none"/><path d="M43.3 47 L42.8 48.2 L41.4 48.1 L40.2 47 L41 45.1 L42.9 45.5Z" stroke="#1e8a1e" stroke-width="1" fill="none"/><path d="M99.6 72.9 L99.1 74.2 L97.2 74.8 L97 72.9 L97.2 71 L99.3 71.2Z" stroke="#888888" stroke-width="1" fill="none"/><path d="M62.6 88.7 L61.8 90.5 L59.3 90.1 L59.4 87.4 L62 86.5Z" stroke="#30c830" stroke-width="1" fill="none"/><path d="M92.8 58 L91.3 59.6 L89.1 59.2 L89 56.7 L91.2 56.6Z" stroke="#30c830" stroke-width="1" fill="none"/><path d="M72.1 97.8 L70.8 99.4 L69.8 97.8 L70.8 95.9Z" stroke="#30c830" stroke-width="1" fill="none"/><path d="M39.2 67.8 L37.7 69.2 L35.9 67.8 L37.7 66.1Z" stroke="#30c830" stroke-width="1" fill="none"/><path d="M101.5 51.5 L100.7 53 L99.2 52.5 L98.2 51.5 L99.3 50.6 L100.6 50.1Z" stroke="#1e8a1e" stroke-width="1" fill="none"/><path d="M71.5 29.7 L71.4 31.4 L69.4 31.5 L68.7 29.7 L69.8 28.7 L71.1 28.4Z" stroke="#30c830" stroke-width="1" fill="none"/><path d="M96.7 82.3 L95.9 84.2 L93.8 84.1 L93.6 82.3 L94.1 81.1 L95.6 81Z" stroke="#1e8a1e" stroke-width="1" fill="none"/><path d="M92.1 67 L90.4 68 L89.3 67 L90.4 65.3Z" stroke="#1e8a1e" stroke-width="1" fill="none"/><path d="M40.2 70.8 L38.3 72.9 L36.9 70.8 L38.3 69.5Z" stroke="#1e8a1e" stroke-width="1" fill="none"/><path d="M33 58.7 L31.8 60.1 L30.4 59.9 L29.6 58.7 L30.2 57.3 L31.7 57.5Z" stroke="#50d850" stroke-width="1" fill="none"/><path d="M89.9 53.4 L87.9 55 L86.9 53.4 L87.9 52.2Z" stroke="#888888" stroke-width="1" fill="none"/><path d="M87.7 44.3 L86.7 45.6 L85.4 44.9 L85.2 43.5 L86.7 43Z" stroke="#888888" stroke-width="1" fill="none"/><path d="M77 40 L74.2 42.7 L72.2 40 L74.2 37.5Z" stroke="#888888" stroke-width="1" fill="none"/><path d="M95.3 69.4 L94 70.6 L92.6 70.2 L92.1 68.3 L94.2 67.7Z" stroke="#30c830" stroke-width="1" fill="none"/><path d="M72.2 39 L71.9 40.4 L70.6 39.9 L69.5 39 L70.6 38.1 L72 37.4Z" stroke="#30c830" stroke-width="1" fill="none"/><path d="M79.1 94.4 L78.5 96 L76.6 96 L75.9 94.4 L76.3 92.4 L78.6 92.4Z" stroke="#888888" stroke-width="1" fill="none"/><path d="M39.1 48.6 L38 50.1 L36 50.7 L34.9 48.6 L36.5 47.5 L38.1 46.9Z" stroke="#1e8a1e" stroke-width="1" fill="none"/><path d="M93.3 55.7 L91.7 57.6 L90.2 55.7 L91.7 54Z" stroke="#1e8a1e" stroke-width="1" fill="none"/><path d="M94 64.2 L93.2 65.2 L91.9 65.3 L90.8 64.2 L91.7 62.7 L93.2 63Z" stroke="#50d850" stroke-width="1" fill="none"/><path d="M90.8 86.2 L89.4 88.3 L86.9 86.2 L89.4 84Z" stroke="#30c830" stroke-width="1" fill="none"/><path d="M53.5 41.4 L52.7 42.6 L51.3 42.7 L50.6 41.4 L51.1 39.9 L53 39.7Z" stroke="#1e8a1e" stroke-width="1" fill="none"/><path d="M99 48.5 L97.8 50.3 L95.5 49.7 L95.1 46.9 L97.8 46.9Z" stroke="#50d850" stroke-width="1" fill="none"/><path d="M41.8 51 L40.1 52.7 L38.5 51 L40.1 49.4Z" stroke="#888888" stroke-width="1" fill="none"/><path d="M53 95.3 L50.6 98 L48.3 95.3 L50.6 92.6Z" stroke="#888888" stroke-width="1" fill="none"/><path d="M86 37.3 L85.4 38.7 L83.4 39.2 L83 37.3 L83.6 35.7 L85.7 35.3Z" stroke="#30c830" stroke-width="1" fill="none"/><path d="M92.8 61 L91.5 62.9 L89.3 62.1 L88.9 59.6 L91.4 59.3Z" stroke="#30c830" stroke-width="1" fill="none"/><path d="M66.3 87.4 L65.7 90 L63.2 89.2 L62.3 87.4 L63.5 86.1 L65.5 85.2Z" stroke="#30c830" stroke-width="1" fill="none"/><path d="M91.6 52.5 L90.5 53.6 L88.5 52.5 L90.5 51.3Z" stroke="#888888" stroke-width="1" fill="none"/><path d="M41.4 81.4 L40 82.6 L38.4 83 L37.3 81.4 L38.7 80.3 L40.4 79.5Z" stroke="#30c830" stroke-width="1" fill="none"/><path d="M34.7 71.5 L33.3 72.8 L31.4 71.5 L33.3 70.3Z" stroke="#30c830" stroke-width="1" fill="none"/><path d="M49.8 79.8 L47.7 81.5 L45.6 79.8 L47.7 77.7Z" stroke="#888888" stroke-width="1" fill="none"/><path d="M32.7 57.1 L30.9 58.5 L28.4 57.1 L30.9 54.5Z" stroke="#30c830" stroke-width="1" fill="none"/><path d="M46.5 77.1 L44.7 78.7 L43 78.5 L41.9 77.1 L42.8 75.4 L44.8 75.4Z" stroke="#1e8a1e" stroke-width="1" fill="none"/><path d="M50.1 42.1 L48 43.8 L46.4 42.1 L48 40.4Z" stroke="#1e8a1e" stroke-width="1" fill="none"/><path d="M67.8 34 L65.6 36.2 L64.2 34 L65.6 31.7Z" stroke="#1e8a1e" stroke-width="1" fill="none"/><path d="M93.8 84.7 L92 86.6 L90.1 84.7 L92 82.7Z" stroke="#50d850" stroke-width="1" fill="none"/><path d="M84.1 93.6 L83 95.4 L80.9 94.7 L81 92.6 L82.9 92.1Z" stroke="#1e8a1e" stroke-width="1" fill="none"/><path d="M54.2 82.7 L52.1 84.3 L50.1 82.7 L52.1 81.4Z" stroke="#50d850" stroke-width="1" fill="none"/><path d="M52.5 93.8 L50.6 95.7 L48.1 95.1 L48.3 92.6 L50.7 91.5Z" stroke="#1e8a1e" stroke-width="1" fill="none"/><path d="M87.6 34.2 L85.6 36 L83.3 34.2 L85.6 32.9Z" stroke="#50d850" stroke-width="1" fill="none"/><path d="M48.1 81.7 L46.3 83.5 L44.3 81.7 L46.3 79.7Z" stroke="#50d850" stroke-width="1" fill="none"/><path d="M92.5 67.9 L91.5 68.9 L90.4 68.5 L90 67.1 L91.8 66.1Z" stroke="#888888" stroke-width="1" fill="none"/><path d="M34.3 71.9 L32.2 73.3 L29.9 73.3 L30.5 71 L32.3 70.1Z" stroke="#30c830" stroke-width="1" fill="none"/><path d="M60.5 38.3 L59.8 39.2 L58.5 39 L58.4 37.5 L59.8 37.4Z" stroke="#1e8a1e" stroke-width="1" fill="none"/><path d="M96.6 76.3 L95.4 77.6 L93.6 76.3 L95.4 74.3Z" stroke="#1e8a1e" stroke-width="1" fill="none"/><path d="M83.3 82.8 L81.7 84.2 L79.1 82.8 L81.7 80.5Z" stroke="#30c830" stroke-width="1" fill="none"/><path d="M80.2 31.4 L79.1 32.8 L77 33.6 L75.7 31.4 L77.1 29.3 L79.6 29.1Z" stroke="#1e8a1e" stroke-width="1" fill="none"/><path d="M87 84.7 L86.1 86.6 L84 85.7 L84.5 84 L86 83.2Z" stroke="#30c830" stroke-width="1" fill="none"/><path d="M98.8 60 L97.9 61.3 L96.4 61.2 L95.9 60 L96.6 59.1 L97.9 58.7Z" stroke="#1e8a1e" stroke-width="1" fill="none"/><path d="M89.2 42.9 L88.2 44.4 L86.7 44.1 L85.7 42.9 L86.7 41.8 L88.1 41.5Z" stroke="#50d850" stroke-width="1" fill="none"/><path d="M94.1 68.5 L92.6 70.1 L91.1 68.5 L92.6 66.6Z" stroke="#30c830" stroke-width="1" fill="none"/><path d="M88.7 38.6 L88.1 39.8 L86.7 39.9 L85.4 38.6 L86.7 37.3 L88.3 37.2Z" stroke="#1e8a1e" stroke-width="1" fill="none"/><path d="M45.1 72.6 L43.7 75.1 L41.8 72.6 L43.7 71Z" stroke="#1e8a1e" stroke-width="1" fill="none"/><path d="M60.4 93.7 L58.5 95.1 L56.7 93.7 L58.5 92.6Z" stroke="#30c830" stroke-width="1" fill="none"/><path d="M65.7 91.8 L64.4 93.6 L62.2 92.9 L62.3 90.7 L64.1 90.6Z" stroke="#30c830" stroke-width="1" fill="none"/><path d="M36.7 57.1 L35.9 59.1 L33.6 59.1 L33.1 57.1 L33.8 55.4 L35.6 55.7Z" stroke="#30c830" stroke-width="1" fill="none"/><path d="M61.4 39.3 L60 40.3 L58.6 40.7 L57.9 39.3 L58.6 37.9 L60.2 38Z" stroke="#888888" stroke-width="1" fill="none"/><path d="M100.1 68.3 L99.4 69.7 L97.9 69.5 L96.1 68.3 L97.4 66.2 L99.5 66.7Z" stroke="#50d850" stroke-width="1" fill="none"/><path d="M55.2 96.1 L53.6 98.2 L52.2 96.1 L53.6 94.4Z" stroke="#1e8a1e" stroke-width="1" fill="none"/><path d="M93.1 65.8 L91.9 68 L89.9 66.7 L89.6 64.7 L91.7 64.2Z" stroke="#888888" stroke-width="1" fill="none"/><path d="M71.6 32.7 L70 34.1 L68.7 32.7 L70 30.8Z" stroke="#50d850" stroke-width="1" fill="none"/><path d="M52.2 81.6 L51.4 83.4 L49.3 82.7 L49.9 80.9 L51.3 80Z" stroke="#50d850" stroke-width="1" fill="none"/><path d="M95.4 42.5 L95.1 43.6 L93.8 43.6 L93.3 42.5 L93.7 41.2 L95.1 41.4Z" stroke="#30c830" stroke-width="1" fill="none"/><path d="M59.3 29.1 L57.4 31 L55.7 29.1 L57.4 27.3Z" stroke="#1e8a1e" stroke-width="1" fill="none"/><path d="M97.2 69.1 L95.8 71.3 L93.2 70.5 L93.1 67.7 L95.8 67.1Z" stroke="#1e8a1e" stroke-width="1" fill="none"/><path d="M71.5 90.7 L70.2 92.2 L68 93 L67.7 90.7 L68.3 88.9 L70.7 88.3Z" stroke="#30c830" stroke-width="1" fill="none"/><path d="M77.1 39.4 L74.8 41.3 L72.6 39.4 L74.8 37.2Z" stroke="#1e8a1e" stroke-width="1" fill="none"/><path d="M97.4 54 L96.4 55.9 L94.2 55.8 L93.6 54 L94.1 52 L96.4 52Z" stroke="#1e8a1e" stroke-width="1" fill="none"/><path d="M69.4 97.8 L67.4 99.6 L65.9 97.8 L67.4 95.9Z" stroke="#30c830" stroke-width="1" fill="none"/><path d="M93.9 47.9 L92.1 49.7 L89.9 49.8 L88.7 47.9 L90.1 46.3 L92 46.2Z" stroke="#30c830" stroke-width="1" fill="none"/><path d="M92.4 50.3 L90.7 52.6 L88.7 51.2 L88.8 49.5 L90.5 48.7Z" stroke="#888888" stroke-width="1" fill="none"/><path d="M85.6 36.9 L85.2 38 L83.8 38.3 L82.6 36.9 L83.8 35.6 L85.2 35.7Z" stroke="#888888" stroke-width="1" fill="none"/><path d="M88.9 50.6 L86.5 52.9 L84.5 50.6 L86.5 48.2Z" stroke="#50d850" stroke-width="1" fill="none"/><path d="M81.6 84.7 L79.4 86 L77.1 84.7 L79.4 82.8Z" stroke="#30c830" stroke-width="1" fill="none"/><path d="M64.2 92.8 L63 94.9 L60.1 94.4 L61.1 91.9 L63 90.9Z" stroke="#888888" stroke-width="1" fill="none"/><path d="M70.6 92.2 L69.3 93.1 L67.8 93 L68.1 91.5 L69.6 90.3Z" stroke="#30c830" stroke-width="1" fill="none"/><path d="M67 97.8 L65.4 100.3 L63.2 97.8 L65.4 96.2Z" stroke="#30c830" stroke-width="1" fill="none"/><path d="M85.9 90.4 L84.3 91.5 L82.3 90.4 L84.3 88.6Z" stroke="#30c830" stroke-width="1" fill="none"/><path d="M93.8 50 L92.1 52.7 L89.4 51.4 L89.5 48.8 L92 47.8Z" stroke="#30c830" stroke-width="1" fill="none"/><path d="M86.4 43 L84.7 44.9 L82.6 43 L84.7 40.9Z" stroke="#30c830" stroke-width="1" fill="none"/><path d="M83.4 39.9 L81.6 42.7 L79.5 39.9 L81.6 37.2Z" stroke="#50d850" stroke-width="1" fill="none"/><path d="M42.3 52 L41 53.9 L39.3 52.8 L39.5 51.4 L40.9 50.4Z" stroke="#30c830" stroke-width="1" fill="none"/><path d="M83.9 33.2 L83.2 34.9 L81.2 34.8 L80.6 33.2 L81.2 31.5 L83.1 31.5Z" stroke="#30c830" stroke-width="1" fill="none"/><path d="M45.5 81.7 L45.2 83.3 L43.4 83.3 L42.6 81.7 L43.3 79.9 L44.9 80.7Z" stroke="#50d850" stroke-width="1" fill="none"/><path d="M53.4 95.5 L52.4 97.4 L51.4 95.5 L52.4 94.3Z" stroke="#1e8a1e" stroke-width="1" fill="none"/><path d="M56.5 31.7 L54 33.8 L51.7 31.7 L54 29.8Z" stroke="#1e8a1e" stroke-width="1" fill="none"/><path d="M47.7 40 L46.6 41.3 L44.7 42 L43.6 40 L44.7 38 L46.8 38.4Z" stroke="#1e8a1e" stroke-width="1" fill="none"/><path d="M45.1 87.9 L44.7 89.6 L42.7 89.5 L41.4 87.9 L42.8 86.3 L44.8 86Z" stroke="#30c830" stroke-width="1" fill="none"/><path d="M58.2 92.7 L57.5 94.5 L55.6 94.3 L54.7 92.7 L55.7 91.3 L57.2 91.6Z" stroke="#30c830" stroke-width="1" fill="none"/><path d="M42.3 76.6 L41 77.9 L39.2 78.4 L38.7 76.6 L39.3 75 L41.3 74.7Z" stroke="#30c830" stroke-width="1" fill="none"/><path d="M84.9 87.7 L83.3 88.8 L81.8 88.5 L81.9 86.9 L83.3 86.4Z" stroke="#1e8a1e" stroke-width="1" fill="none"/><path d="M95.4 59.3 L94.7 61.1 L92.7 60.8 L91.9 59.3 L92.6 57.5 L94.8 57.2Z" stroke="#888888" stroke-width="1" fill="none"/><path d="M86.2 89.6 L84.4 92.1 L82.2 89.6 L84.4 87.8Z" stroke="#1e8a1e" stroke-width="1" fill="none"/><path d="M39.3 41.1 L38.3 43.7 L35.9 42.2 L36 40.1 L38.1 39.1Z" stroke="#30c830" stroke-width="1" fill="none"/><path d="M38.5 68.1 L36.1 70.6 L34.8 68.1 L36.1 66.2Z" stroke="#1e8a1e" stroke-width="1" fill="none"/><path d="M41.2 81.5 L40.9 83.1 L39.1 82.9 L38.1 81.5 L38.8 79.5 L40.8 80Z" stroke="#1e8a1e" stroke-width="1" fill="none"/><path d="M55.9 86.5 L53.7 87.9 L51.6 86.5 L53.7 84.2Z" stroke="#50d850" stroke-width="1" fill="none"/><path d="M54.8 89.2 L53 90.9 L51 90.2 L51.3 88.4 L53 87.4Z" stroke="#1e8a1e" stroke-width="1" fill="none"/><path d="M34.5 62 L32.1 63.4 L30.5 62 L32.1 59.4Z" stroke="#30c830" stroke-width="1" fill="none"/><path d="M58.5 96.8 L56.5 98.9 L53.6 98.4 L54 95.5 L56.7 94.2Z" stroke="#1e8a1e" stroke-width="1" fill="none"/><path d="M95.3 64.9 L94.2 66.2 L92.4 65.8 L92 63.7 L94.2 63.4Z" stroke="#1e8a1e" stroke-width="1" fill="none"/><path d="M99.5 66.4 L98.3 68.2 L96.9 66.4 L98.3 65Z" stroke="#30c830" stroke-width="1" fill="none"/><path d="M83.9 85.5 L82.1 87.1 L80.1 87.4 L79.6 85.5 L80.3 83.9 L82.1 84Z" stroke="#30c830" stroke-width="1" fill="none"/><path d="M64.4 89.5 L62.9 91.7 L61.1 89.5 L62.9 88.2Z" stroke="#50d850" stroke-width="1" fill="none"/><path d="M94 81.9 L91.7 83.7 L89.5 81.9 L91.7 80.6Z" stroke="#888888" stroke-width="1" fill="none"/><path d="M43.2 67.4 L41.4 69.1 L39.1 69.8 L38.9 67.4 L39.4 65.5 L41.3 66Z" stroke="#888888" stroke-width="1" fill="none"/><path d="M88.5 83.6 L87.4 84.8 L85.8 83.6 L87.4 82.6Z" stroke="#50d850" stroke-width="1" fill="none"/><path d="M60.3 30.2 L59.1 32.7 L56.4 32.2 L55.3 30.2 L56.4 28.2 L58.7 28.3Z" stroke="#30c830" stroke-width="1" fill="none"/><path d="M92.7 49.5 L90.4 52 L88.8 49.5 L90.4 47.5Z" stroke="#1e8a1e" stroke-width="1" fill="none"/><path d="M95.8 56.6 L94 57.7 L92.4 58.2 L91.7 56.6 L92.6 55.3 L94.5 54.6Z" stroke="#50d850" stroke-width="1" fill="none"/><path d="M102.8 58.9 L101.4 60 L99.9 59.7 L100.1 58.2 L101.5 57.4Z" stroke="#888888" stroke-width="1" fill="none"/><path d="M36.1 52.9 L35 55.2 L32.8 54.5 L32.1 52.9 L32.8 51.4 L34.6 51.3Z" stroke="#888888" stroke-width="1" fill="none"/><path d="M48.9 36.8 L47.2 38.6 L45 36.8 L47.2 35.2Z" stroke="#50d850" stroke-width="1" fill="none"/><path d="M99.4 63.5 L98.8 65.9 L96 65.8 L95.7 63.5 L96.2 61.5 L98.8 61Z" stroke="#50d850" stroke-width="1" fill="none"/><path d="M44.4 83.5 L43.8 85.4 L41.6 84.7 L42.3 82.8 L43.6 82.2Z" stroke="#30c830" stroke-width="1" fill="none"/><path d="M91.8 54.8 L90.3 56.9 L88.9 54.8 L90.3 53.1Z" stroke="#888888" stroke-width="1" fill="none"/><path d="M82.2 33.3 L80.8 35.3 L77.9 34.9 L78.7 32.2 L80.8 31.2Z" stroke="#1e8a1e" stroke-width="1" fill="none"/><path d="M40.4 44 L39.3 45.5 L37.7 45.4 L37.3 44 L37.4 42 L39.2 42.8Z" stroke="#888888" stroke-width="1" fill="none"/><path d="M70.9 38 L69.7 39.5 L67.3 39.3 L67.3 36.6 L69.6 36.6Z" stroke="#30c830" stroke-width="1" fill="none"/><path d="M55.7 38.2 L54.4 39.6 L52.4 40.1 L51.5 38.2 L52.4 36.2 L54.7 36.2Z" stroke="#888888" stroke-width="1" fill="none"/><path d="M88.9 52 L87.7 53.5 L86 52.9 L86.2 51.3 L87.6 50.9Z" stroke="#1e8a1e" stroke-width="1" fill="none"/><path d="M41.5 56.7 L40.2 57.9 L38.6 58.3 L38.1 56.7 L38.8 55.5 L40.6 54.7Z" stroke="#1e8a1e" stroke-width="1" fill="none"/><path d="M39.6 85.5 L38.7 87.2 L36.8 86.5 L36.6 84.4 L38.9 83.2Z" stroke="#50d850" stroke-width="1" fill="none"/><path d="M85.4 41.1 L84.9 42.6 L83.2 42.5 L82.5 41.1 L83.4 39.9 L85 39.4Z" stroke="#50d850" stroke-width="1" fill="none"/><path d="M81.8 91.4 L80.9 93.1 L78.8 93.3 L78.6 91.4 L78.9 89.8 L81 89.5Z" stroke="#888888" stroke-width="1" fill="none"/><path d="M64 86.7 L61.9 88.4 L59.9 86.7 L61.9 84.9Z" stroke="#50d850" stroke-width="1" fill="none"/><path d="M87.4 45.1 L86.5 46.9 L84.5 46.1 L84.3 43.9 L86.5 43.3Z" stroke="#888888" stroke-width="1" fill="none"/><path d="M85.2 34.9 L83.1 36.3 L81 34.9 L83.1 32.9Z" stroke="#30c830" stroke-width="1" fill="none"/><path d="M50.9 33.8 L48.7 34.9 L46.7 33.8 L48.7 31.9Z" stroke="#888888" stroke-width="1" fill="none"/><path d="M44.2 75.8 L43.2 77.7 L41.1 76.9 L41.3 74.8 L43.1 74.2Z" stroke="#30c830" stroke-width="1" fill="none"/><path d="M87.3 35.6 L85.9 36.8 L84.1 37.5 L83.7 35.6 L84.5 34.4 L86 34.1Z" stroke="#30c830" stroke-width="1" fill="none"/><path d="M70.3 93.1 L67.9 95.6 L66.2 93.1 L67.9 91.4Z" stroke="#30c830" stroke-width="1" fill="none"/><path d="M99.5 66.2 L98.2 68.1 L96.5 67 L96.6 65.4 L98 65.1Z" stroke="#50d850" stroke-width="1" fill="none"/><path d="M100.4 71.2 L99.6 72.8 L97.6 72.2 L98.2 70.6 L99.5 69.7Z" stroke="#888888" stroke-width="1" fill="none"/><path d="M95.4 42.6 L93.9 44.6 L92 42.6 L93.9 41.3Z" stroke="#50d850" stroke-width="1" fill="none"/><path d="M53.2 94.9 L52.1 96.7 L49.4 96.4 L49.9 93.7 L52.2 93Z" stroke="#30c830" stroke-width="1" fill="none"/><path d="M39.3 48.9 L37.2 50.4 L34.7 48.9 L37.2 46.5Z" stroke="#30c830" stroke-width="1" fill="none"/></g><g id="t40"><path d="M52.1 109.9 L51.7 108.7 L54 109.1 L54.9 109.9 L54.6 111 L52.3 111.6Z" stroke="#1a4212" stroke-width="1.1" fill="none"/><path d="M21.2 81.6 L22.9 78.9 L24.8 78.1 L23.5 81.4Z" stroke="#1a4212" stroke-width="1.1" fill="none"/><path d="M81.7 50.7 L81.9 47.8 L84.1 46.9 L85 48.4 L84 50Z" stroke="#1a4212" stroke-width="1.1" fill="none"/><path d="M21 42 L22.6 40.1 L26.2 39 L26.1 40.4 L26.6 41.7 L22.7 42.8Z" stroke="#10280a" stroke-width="1.1" fill="none"/><path d="M15.2 97.4 L14.1 95.5 L14.8 93.3 L16.9 92.7 L16.9 94.3Z" stroke="#0f300a" stroke-width="1.1" fill="none"/><path d="M24.6 103.8 L23.3 104.1 L22.2 99.9 L23.5 100.3 L25.2 101.1 L25.3 103Z" stroke="#10280a" stroke-width="1.1" fill="none"/><path d="M44.6 88.2 L44.4 86.6 L47.3 86.3 L49.2 86.7 L48.6 87.3 L45.8 88.6Z" stroke="#0f300a" stroke-width="1.1" fill="none"/><path d="M69.5 76.1 L69.1 77.2 L65.6 77.2 L66 74.3 L68.8 74Z" stroke="#0f300a" stroke-width="1.1" fill="none"/><path d="M76.5 33.9 L78.2 33 L80 33.7 L78.3 35.7Z" stroke="#0f300a" stroke-width="1.1" fill="none"/><path d="M92.1 68 L92.5 66.7 L93.6 65.5 L95 64 L95.1 66.4 L94.7 68.5Z" stroke="#1a4212" stroke-width="1.1" fill="none"/><path d="M53.2 103.1 L50.5 102.8 L50.1 101.5 L51.2 100.9Z" stroke="#0f300a" stroke-width="1.1" fill="none"/><path d="M26.4 55.9 L26.7 54.1 L28.5 53.8 L30.7 54 L29.9 55.6 L27.1 56.5Z" stroke="#143a0e" stroke-width="1.1" fill="none"/><path d="M18.4 48.4 L18.9 46.8 L20.8 45.1 L23.2 46.6 L19.7 49.4Z" stroke="#1a4212" stroke-width="1.1" fill="none"/><path d="M22 69.1 L21.9 65.3 L24.9 65.2 L24 67.7Z" stroke="#1a4212" stroke-width="1.1" fill="none"/><path d="M41.1 97.6 L39.1 98.1 L35.3 95.1 L38.8 94.1Z" stroke="#10280a" stroke-width="1.1" fill="none"/><path d="M38.8 63.9 L36.9 62.4 L38 58.3 L39.7 59 L40.4 60.9 L39.8 63.2Z" stroke="#10280a" stroke-width="1.1" fill="none"/><path d="M61.7 83.9 L60.3 83.9 L58.9 83 L60 81.3 L61.1 81.7 L62 82.6Z" stroke="#10280a" stroke-width="1.1" fill="none"/><path d="M90.8 54.3 L91.6 53 L92.2 52.5 L93.9 53.4 L94 54.2 L91.9 55.2Z" stroke="#143a0e" stroke-width="1.1" fill="none"/><path d="M80.5 104.6 L78.7 102.7 L80.7 99.5 L82.3 97.6 L83.1 102.2Z" stroke="#0f300a" stroke-width="1.1" fill="none"/><path d="M76.9 55.5 L74.2 56.1 L73.7 53.3 L75.3 52.5Z" stroke="#10280a" stroke-width="1.1" fill="none"/><path d="M63.9 19.6 L61.3 16.4 L60.1 12.5 L62.7 13 L64.8 16Z" stroke="#10280a" stroke-width="1.1" fill="none"/><path d="M76.2 69.2 L74.7 69.2 L71.1 69.2 L70.8 67.9 L71.4 65.8 L74.8 65.9Z" stroke="#10280a" stroke-width="1.1" fill="none"/><path d="M81.5 86.4 L78.9 87.1 L78 83.3 L79.5 82.4 L81.3 82.8 L82.8 86.4Z" stroke="#10280a" stroke-width="1.1" fill="none"/><path d="M87.5 69.2 L83.7 68 L82.5 66.8 L83.8 64.8 L86.1 67.2Z" stroke="#1a4212" stroke-width="1.1" fill="none"/><path d="M59.8 125.7 L58.5 123.3 L62.2 120 L62.9 123.5Z" stroke="#10280a" stroke-width="1.1" fill="none"/><path d="M88.6 36.9 L88.5 35.4 L90.8 34.3 L92.6 35.5 L91.3 36.4Z" stroke="#143a0e" stroke-width="1.1" fill="none"/><path d="M5.8 59.3 L7.2 58.6 L10.5 58.4 L10.4 60.6 L7.8 60.2Z" stroke="#143a0e" stroke-width="1.1" fill="none"/><path d="M64.1 66.3 L62.8 63.9 L66.3 61.3 L65.7 64.3Z" stroke="#0f300a" stroke-width="1.1" fill="none"/><path d="M63.5 31 L63 28.5 L65.3 25.5 L67.6 23.9 L68.6 25.4 L65.7 29Z" stroke="#10280a" stroke-width="1.1" fill="none"/><path d="M17.2 95.3 L15.1 94.5 L13.4 91.5 L14 90.6 L16.7 90.5 L17.8 94.2Z" stroke="#143a0e" stroke-width="1.1" fill="none"/><path d="M42.8 103.4 L40.2 100.5 L40.4 98.3 L43.7 99.9 L43.6 102.1Z" stroke="#10280a" stroke-width="1.1" fill="none"/><path d="M58.3 114.5 L59.2 113 L61.5 111.7 L64 112.8 L61.6 115.7 L59 115Z" stroke="#0f300a" stroke-width="1.1" fill="none"/><path d="M21.7 51.5 L21.9 49.1 L27.5 47.3 L25.5 52.1Z" stroke="#0f300a" stroke-width="1.1" fill="none"/><path d="M54.1 108.8 L54 104.9 L55.7 102.8 L57.3 106.9Z" stroke="#10280a" stroke-width="1.1" fill="none"/><path d="M91.6 70 L95.4 67.6 L98.9 70 L94.7 71.1Z" stroke="#10280a" stroke-width="1.1" fill="none"/><path d="M92.8 99.2 L90.4 99.8 L86.4 99 L87.1 96.7 L89.9 97.4Z" stroke="#0f300a" stroke-width="1.1" fill="none"/><path d="M108.4 93.6 L107.2 94.6 L105.1 90.7 L104.7 88.2 L107.4 88.6 L108.8 92.5Z" stroke="#10280a" stroke-width="1.1" fill="none"/><path d="M96.6 108.5 L96.3 110 L92.2 107.6 L93.2 105.8 L95.3 103.9 L97.5 106Z" stroke="#0f300a" stroke-width="1.1" fill="none"/><path d="M47.7 19.5 L44.1 18.1 L44 16.4 L45.8 16.1 L47.5 17.5Z" stroke="#10280a" stroke-width="1.1" fill="none"/><path d="M98.7 93.5 L98.8 91.7 L101.8 89.8 L103.2 89.7 L103.6 91.6 L101 94.2Z" stroke="#1a4212" stroke-width="1.1" fill="none"/><path d="M41.7 49.4 L39.7 46.8 L44.6 44.4 L44.2 47.5Z" stroke="#1a4212" stroke-width="1.1" fill="none"/><path d="M74.8 95.1 L72.7 94.2 L72.4 91 L74 90.5 L75.8 92.9Z" stroke="#10280a" stroke-width="1.1" fill="none"/><path d="M6.5 76.1 L5.4 75 L5.2 70.8 L7.7 71 L8.2 72.5 L7.7 76.1Z" stroke="#0f300a" stroke-width="1.1" fill="none"/><path d="M96.1 88.4 L94 87.8 L94.8 85.1 L96.7 87.4Z" stroke="#10280a" stroke-width="1.1" fill="none"/><path d="M23.3 76.7 L20.6 77.7 L18.9 76.1 L19.6 74.9 L21.4 74.4Z" stroke="#143a0e" stroke-width="1.1" fill="none"/><path d="M76.5 115.5 L77.1 113.2 L79.8 112.5 L79.4 115.1Z" stroke="#0f300a" stroke-width="1.1" fill="none"/><path d="M65.5 80.8 L63 80.7 L63.4 78.3 L64.1 76.2 L66 79.9Z" stroke="#0f300a" stroke-width="1.1" fill="none"/><path d="M61.5 79.5 L58.1 80.5 L54.6 79.5 L58.3 78.5Z" stroke="#1a4212" stroke-width="1.1" fill="none"/><path d="M22.1 58.3 L24.8 56.9 L27.2 57.3 L24.5 58.9Z" stroke="#143a0e" stroke-width="1.1" fill="none"/><path d="M39.9 85 L37 85.2 L35.6 81 L38.5 81.6 L40.6 81.9Z" stroke="#10280a" stroke-width="1.1" fill="none"/><path d="M30 112.7 L29.1 111.9 L28.4 109 L29.9 107.8 L31.5 111Z" stroke="#0f300a" stroke-width="1.1" fill="none"/><path d="M97.3 40.8 L95.3 39.3 L93.6 35.4 L94.9 35.1 L96.8 37.1Z" stroke="#0f300a" stroke-width="1.1" fill="none"/><path d="M45.8 46 L46.8 42.7 L48.5 41.9 L48.6 43.8Z" stroke="#10280a" stroke-width="1.1" fill="none"/><path d="M54.2 46 L51.7 44.6 L51.5 42.8 L53.7 42 L55.7 43.7Z" stroke="#1a4212" stroke-width="1.1" fill="none"/><path d="M36.7 72.4 L35.3 71.2 L34.4 67.5 L36.2 65.9 L38.6 68.2 L38.3 72Z" stroke="#1a4212" stroke-width="1.1" fill="none"/><path d="M80.6 48.1 L77.9 47.5 L78.2 43.3 L79.6 40.3 L81.8 44.5Z" stroke="#10280a" stroke-width="1.1" fill="none"/><path d="M46.3 39.9 L43.1 38.4 L42 36.1 L45.2 36.7Z" stroke="#0f300a" stroke-width="1.1" fill="none"/><path d="M35.9 37 L34 35.5 L33.9 33.4 L35 31.5 L37.2 36Z" stroke="#143a0e" stroke-width="1.1" fill="none"/><path d="M46 92.2 L42.9 89.4 L43.8 87.6 L46.6 90Z" stroke="#10280a" stroke-width="1.1" fill="none"/><path d="M100.4 68.9 L97 66 L98.2 62.1 L99.9 62.4 L101.6 66.3Z" stroke="#1a4212" stroke-width="1.1" fill="none"/><path d="M64 97.2 L62.4 95.8 L62.4 92.5 L63.6 91.9 L65.3 95.6Z" stroke="#1a4212" stroke-width="1.1" fill="none"/><path d="M107.9 62.1 L109.5 59 L113.8 58.9 L111.3 61.3Z" stroke="#0f300a" stroke-width="1.1" fill="none"/><path d="M108.9 82.3 L105.3 82 L100.9 78.8 L105 77.4Z" stroke="#10280a" stroke-width="1.1" fill="none"/><path d="M28.7 78 L30.1 75.9 L32.8 77.5 L30.3 80.6Z" stroke="#143a0e" stroke-width="1.1" fill="none"/><path d="M79.9 29.3 L78.6 28.9 L78.7 26.2 L80 24.8 L80.3 28.6Z" stroke="#143a0e" stroke-width="1.1" fill="none"/><path d="M25.1 72.4 L24.3 74.4 L21.6 74.4 L21.2 71.9 L20.8 70.1 L25.9 71Z" stroke="#0f300a" stroke-width="1.1" fill="none"/><path d="M21.2 40.2 L19 37.8 L19.2 35.1 L21.7 33.7 L21.9 35.7 L22.4 38.6Z" stroke="#1a4212" stroke-width="1.1" fill="none"/><path d="M63.6 88.1 L61.7 85 L62.8 82.5 L64 83.2 L65.4 87Z" stroke="#10280a" stroke-width="1.1" fill="none"/><path d="M59.9 61.3 L58.5 60.5 L61.6 57.3 L63.5 58.2 L63.5 60.3 L60.4 62.1Z" stroke="#0f300a" stroke-width="1.1" fill="none"/><path d="M34.2 32.9 L31.9 32.7 L31.3 28.8 L33.8 26.9 L34.8 27.5 L35.4 32.8Z" stroke="#1a4212" stroke-width="1.1" fill="none"/><path d="M77.2 43.8 L73.9 42.2 L72.3 39.9 L75.7 40Z" stroke="#10280a" stroke-width="1.1" fill="none"/><path d="M46.8 38.9 L45.1 37.2 L44.5 33.8 L47.7 33.6 L49 37.6Z" stroke="#0f300a" stroke-width="1.1" fill="none"/><path d="M43 90.7 L41.3 89 L41 86.3 L42.4 84.4 L43.7 87.3 L44.4 88.6Z" stroke="#143a0e" stroke-width="1.1" fill="none"/><path d="M56.9 90 L53.8 89.5 L53.9 86.6 L57 87Z" stroke="#0f300a" stroke-width="1.1" fill="none"/><path d="M69.4 18.3 L65.9 19.2 L65.9 17.1 L67.7 16.4Z" stroke="#1a4212" stroke-width="1.1" fill="none"/><path d="M95.8 35.6 L95.5 33.8 L96.7 30.6 L99.8 31.9 L98.3 35.5Z" stroke="#143a0e" stroke-width="1.1" fill="none"/><path d="M41.4 33.3 L43.4 31 L47.1 30 L45 33Z" stroke="#143a0e" stroke-width="1.1" fill="none"/><path d="M90.2 40.6 L88.9 38.7 L90.2 37.7 L90.9 38.6Z" stroke="#1a4212" stroke-width="1.1" fill="none"/><path d="M96.8 44.8 L92.8 43.5 L92.3 40.8 L94.8 39.8 L97.6 42.7Z" stroke="#1a4212" stroke-width="1.1" fill="none"/><path d="M35.8 31.1 L31.7 30.1 L30.3 27.3 L34.2 27.8Z" stroke="#0f300a" stroke-width="1.1" fill="none"/><path d="M51.1 79 L54.3 74.6 L56.4 75.9 L54.7 79.5Z" stroke="#1a4212" stroke-width="1.1" fill="none"/><path d="M25.7 41.3 L25.9 38.9 L27.6 37.1 L28.7 37.1 L30.2 38.4 L28.8 40.2Z" stroke="#10280a" stroke-width="1.1" fill="none"/><path d="M81 92.6 L83.4 89.8 L87 88.3 L86.9 90.4 L84.2 93.5Z" stroke="#10280a" stroke-width="1.1" fill="none"/><path d="M28.1 53.7 L28.3 52.4 L31.1 51 L31.2 52.9 L29.6 54Z" stroke="#0f300a" stroke-width="1.1" fill="none"/><path d="M94.9 83.7 L94 81.1 L97.7 77.7 L98 80.3Z" stroke="#143a0e" stroke-width="1.1" fill="none"/><path d="M75.3 64.6 L74.6 64 L72.3 61 L73.5 59.5 L74.6 60.6 L75.9 61.3Z" stroke="#10280a" stroke-width="1.1" fill="none"/><path d="M88.9 92.8 L84.8 91.2 L83.6 87.9 L85.1 85.2 L87.8 89.3Z" stroke="#1a4212" stroke-width="1.1" fill="none"/><path d="M70.6 68.6 L71.3 63.7 L74.7 61.6 L75.1 65.2Z" stroke="#0f300a" stroke-width="1.1" fill="none"/><path d="M89.6 48.9 L89.6 46 L94.1 44.6 L94.6 46.7 L92.6 48.5Z" stroke="#0f300a" stroke-width="1.1" fill="none"/><path d="M28.2 82.2 L25.1 82.4 L22.8 80.1 L27.2 79.8Z" stroke="#0f300a" stroke-width="1.1" fill="none"/><path d="M46.2 72.6 L47.8 68.6 L49.9 70.2 L49.8 72.9Z" stroke="#0f300a" stroke-width="1.1" fill="none"/><path d="M47.6 105.7 L47.1 105.3 L49.9 102.8 L51 103.2 L50.5 105.6 L49.3 106.9Z" stroke="#1a4212" stroke-width="1.1" fill="none"/><path d="M52.4 70.5 L52.5 68.9 L56.3 66.3 L56.2 67.8 L53.7 71.3Z" stroke="#143a0e" stroke-width="1.1" fill="none"/><path d="M103.1 83.8 L104 81.6 L105.1 81.4 L108.1 82.8 L106.4 84.8 L104.1 84.6Z" stroke="#143a0e" stroke-width="1.1" fill="none"/><path d="M56.2 114.3 L58.9 113.1 L61.7 114.9 L60.2 115.7Z" stroke="#1a4212" stroke-width="1.1" fill="none"/><path d="M20.3 41.1 L21 39.6 L25.5 39 L24.6 41.6 L22.5 42.6Z" stroke="#10280a" stroke-width="1.1" fill="none"/><path d="M99.8 62.7 L98.1 62 L102 59.3 L102.6 59.3 L103.5 61.8 L102.4 63.5Z" stroke="#1a4212" stroke-width="1.1" fill="none"/><path d="M28.4 76 L26.4 75.3 L25.9 73 L27.9 71.4 L28.1 73.3Z" stroke="#1a4212" stroke-width="1.1" fill="none"/><path d="M30.3 36.7 L30.3 33.9 L35.1 32.9 L35.1 35.3 L32.8 36.5Z" stroke="#0f300a" stroke-width="1.1" fill="none"/><path d="M48.4 32.1 L47.5 28.2 L48.2 25.9 L49.7 24.1 L50.8 27.6 L51.8 30Z" stroke="#0f300a" stroke-width="1.1" fill="none"/><path d="M108.3 50.5 L105.9 49.8 L106.1 47.1 L108.2 48.1Z" stroke="#10280a" stroke-width="1.1" fill="none"/><path d="M73.2 28 L70.3 26 L70 24 L72 21.5 L74.3 26.4Z" stroke="#0f300a" stroke-width="1.1" fill="none"/><path d="M47.2 90 L43.4 88.1 L44.9 86.4 L46.2 87Z" stroke="#1a4212" stroke-width="1.1" fill="none"/><path d="M52.1 108.8 L50 109.5 L48.3 108.5 L46.2 106.5 L48.7 105.4 L51.7 106.3Z" stroke="#10280a" stroke-width="1.1" fill="none"/><path d="M50.8 18.9 L50.2 17 L51.9 14.2 L53.5 16.4Z" stroke="#1a4212" stroke-width="1.1" fill="none"/><path d="M23.6 71.8 L22.1 71.6 L24.1 69.4 L25.2 68.5 L26.4 70.6 L25.5 72.4Z" stroke="#1a4212" stroke-width="1.1" fill="none"/><path d="M14.9 91.3 L13.8 89.4 L13.5 87.1 L15.6 86.2 L16.1 88.1 L16.3 89.9Z" stroke="#1a4212" stroke-width="1.1" fill="none"/><path d="M55.5 67.4 L56.3 66.2 L58 65.9 L59.6 66.4 L59.2 67.5 L57.1 67.6Z" stroke="#10280a" stroke-width="1.1" fill="none"/><path d="M108.7 74.3 L107.3 72.7 L108.5 70.5 L110.1 69.7 L110.3 74.3Z" stroke="#10280a" stroke-width="1.1" fill="none"/><path d="M32.7 67.8 L30.5 66.2 L30 63 L31.4 62.2 L34 65.8Z" stroke="#1a4212" stroke-width="1.1" fill="none"/><path d="M50.4 50.1 L49.1 52 L45.1 50.8 L45.5 48.6 L48.3 48.2Z" stroke="#10280a" stroke-width="1.1" fill="none"/><path d="M85.8 80.7 L83.4 81.9 L81.6 78.5 L84.9 78.4Z" stroke="#1a4212" stroke-width="1.1" fill="none"/><path d="M75.2 100.1 L72.8 97 L74.5 95.2 L76.1 96.7Z" stroke="#0f300a" stroke-width="1.1" fill="none"/><path d="M87.8 97.9 L89.3 95.4 L91.4 93.9 L92.6 94.6 L91.8 96.8Z" stroke="#1a4212" stroke-width="1.1" fill="none"/><path d="M81.4 35.8 L82.2 32.8 L86.3 31.6 L84.9 34.4Z" stroke="#10280a" stroke-width="1.1" fill="none"/><path d="M48.5 62.8 L48.5 61.3 L51.5 59.4 L53.3 59.4 L50.2 63.2Z" stroke="#0f300a" stroke-width="1.1" fill="none"/><path d="M31.5 24.3 L30.8 23.3 L30.9 21.1 L33.9 20.3 L34.4 22 L32.5 24.1Z" stroke="#143a0e" stroke-width="1.1" fill="none"/><path d="M28.1 71.4 L31 68.6 L34.4 69.5 L34.2 71.3 L31.3 73Z" stroke="#1a4212" stroke-width="1.1" fill="none"/><path d="M91.3 108.2 L90.3 107 L91 103.8 L92.5 103.5 L93.9 107.4Z" stroke="#1a4212" stroke-width="1.1" fill="none"/><path d="M108.9 61.3 L108.1 60 L109.4 57.6 L112.5 56.2 L112.1 58 L110.1 60.2Z" stroke="#143a0e" stroke-width="1.1" fill="none"/><path d="M71 18.2 L67.5 17.8 L66.4 15.7 L68.6 15.3Z" stroke="#10280a" stroke-width="1.1" fill="none"/><path d="M36.3 97.5 L37.3 93.9 L39 93 L40.6 94.6 L39.8 96.7Z" stroke="#1a4212" stroke-width="1.1" fill="none"/><path d="M55.1 57.1 L52.6 56.1 L53.1 54 L55.6 54.6Z" stroke="#143a0e" stroke-width="1.1" fill="none"/><path d="M26.6 73.9 L22 74.8 L18.9 72.4 L21.2 70.5 L25.5 70.8Z" stroke="#1a4212" stroke-width="1.1" fill="none"/><path d="M99.1 32.9 L97.2 33.8 L95.2 31.9 L93.6 29.9 L96.3 29.2 L99.4 30.9Z" stroke="#10280a" stroke-width="1.1" fill="none"/><path d="M111.5 78.5 L108.4 77 L108.6 73.6 L111.3 74.1Z" stroke="#10280a" stroke-width="1.1" fill="none"/><path d="M35.8 97.5 L34.3 97.3 L31.8 96.8 L30.3 95.7 L32.7 94.2 L34.1 95.4Z" stroke="#1a4212" stroke-width="1.1" fill="none"/><path d="M70.1 53.3 L70.3 51.1 L72.5 49.7 L74.4 50.6 L73.1 52.5Z" stroke="#10280a" stroke-width="1.1" fill="none"/><path d="M45.9 118.6 L43.2 117.5 L43.4 114.9 L45.4 114.4 L46 117.4Z" stroke="#1a4212" stroke-width="1.1" fill="none"/><path d="M32.3 26.5 L30.3 24.3 L30.6 21.6 L32.4 20.6 L33 23.9Z" stroke="#1a4212" stroke-width="1.1" fill="none"/><path d="M11 63.1 L8.1 62.3 L7.1 60 L8.4 58.7 L9.7 59.9Z" stroke="#0f300a" stroke-width="1.1" fill="none"/><path d="M41.7 46.4 L38 44.2 L37.5 40 L40.3 42.5Z" stroke="#143a0e" stroke-width="1.1" fill="none"/><path d="M81.6 25.4 L81.5 23.8 L82.4 22.2 L83.6 23.3 L83.7 25.5Z" stroke="#10280a" stroke-width="1.1" fill="none"/><path d="M84.7 105.9 L86.7 103.4 L89.5 105.4 L87.4 106.6Z" stroke="#143a0e" stroke-width="1.1" fill="none"/><path d="M34 111.9 L32.4 109.9 L32.2 108.6 L33.7 107 L34.2 108.8 L35.3 109.8Z" stroke="#10280a" stroke-width="1.1" fill="none"/><path d="M63.3 25.1 L62.1 24.2 L59 22.7 L60.2 20.7 L60.7 19.9 L62.5 21.9Z" stroke="#1a4212" stroke-width="1.1" fill="none"/><path d="M80.9 79.3 L83.8 78.2 L87.7 78.1 L86.7 80.4 L83.8 81.3Z" stroke="#0f300a" stroke-width="1.1" fill="none"/><path d="M70.8 101.3 L65.6 102.3 L64.6 99.3 L68.3 99.6Z" stroke="#10280a" stroke-width="1.1" fill="none"/><path d="M53.6 124.3 L51.6 122.1 L53.2 118.8 L55.3 117.7 L55.2 121.8Z" stroke="#0f300a" stroke-width="1.1" fill="none"/><path d="M67.7 116.7 L65.8 114.9 L69.5 113.7 L71.2 113.4 L71.8 114.7 L68.1 117.8Z" stroke="#143a0e" stroke-width="1.1" fill="none"/><path d="M74.3 68.2 L72.9 68.2 L71.3 67.4 L71.7 66.3 L73 65.4 L74.1 66.3Z" stroke="#1a4212" stroke-width="1.1" fill="none"/><path d="M72 25.6 L70.4 25.2 L69 22.4 L70 21.2 L71.5 20.7 L72.4 23.4Z" stroke="#1a4212" stroke-width="1.1" fill="none"/><path d="M55.7 98.9 L51 98.7 L50.4 96.8 L52.1 95Z" stroke="#1a4212" stroke-width="1.1" fill="none"/><path d="M54.6 43.3 L53.9 44 L51.8 41.9 L51.6 38.6 L53.9 39.3 L55.7 41.3Z" stroke="#10280a" stroke-width="1.1" fill="none"/><path d="M31.3 23.8 L29.7 24.6 L27.3 23.7 L26.8 22.9 L29.8 22.8Z" stroke="#10280a" stroke-width="1.1" fill="none"/><path d="M31 68.5 L31.1 66.5 L32.5 64.2 L35.3 63.3 L35.7 65.7 L33.6 68Z" stroke="#10280a" stroke-width="1.1" fill="none"/><path d="M84 46.8 L80 46.5 L79 45.9 L79.3 41.8 L81.2 43.4 L82.2 44.5Z" stroke="#10280a" stroke-width="1.1" fill="none"/><path d="M60.9 20.4 L58.7 19.9 L57.5 17.8 L59.9 17.9Z" stroke="#10280a" stroke-width="1.1" fill="none"/><path d="M65.2 84.9 L64.6 81.7 L67.2 77.5 L68.4 79.6 L66.6 83.2Z" stroke="#10280a" stroke-width="1.1" fill="none"/><path d="M55 42.1 L54.7 40.6 L55.7 37.5 L58 37.1 L58.4 37.6 L57.9 41.7Z" stroke="#143a0e" stroke-width="1.1" fill="none"/><path d="M57.2 86.1 L56 87.6 L54 83.6 L54.8 82.5 L56.5 82.9 L57.7 84.9Z" stroke="#10280a" stroke-width="1.1" fill="none"/><path d="M24.5 107.4 L25.9 103.1 L29.9 103.3 L27.4 108.4Z" stroke="#1a4212" stroke-width="1.1" fill="none"/><path d="M65.8 39.7 L63.5 36 L63.8 35.1 L65.5 34.2 L66.7 35.5Z" stroke="#0f300a" stroke-width="1.1" fill="none"/><path d="M8.4 48.7 L7.1 46.7 L9.2 43.5 L10.1 47.5Z" stroke="#1a4212" stroke-width="1.1" fill="none"/><path d="M67.8 51.2 L67.2 52.9 L64.6 50.4 L66.2 49.6 L67.8 50.2Z" stroke="#1a4212" stroke-width="1.1" fill="none"/><path d="M62.9 38 L60.2 39.1 L56.5 36.5 L63.2 35.5Z" stroke="#10280a" stroke-width="1.1" fill="none"/><path d="M88.9 36.7 L90 33.8 L93.4 32.6 L91.2 36.9Z" stroke="#1a4212" stroke-width="1.1" fill="none"/><path d="M7.1 76.1 L6.6 74.6 L7.1 72.5 L10 69.9 L10.5 73.5 L8.8 75.2Z" stroke="#143a0e" stroke-width="1.1" fill="none"/><path d="M92.6 45.9 L92 46.6 L89.4 46.4 L89.3 44.8 L92.4 44.2Z" stroke="#10280a" stroke-width="1.1" fill="none"/><path d="M70.4 121 L71.2 120 L73 119.8 L74.1 121.6 L71.6 121.5Z" stroke="#10280a" stroke-width="1.1" fill="none"/><path d="M67.1 115 L65.4 115 L63.2 112.1 L67.5 112.8Z" stroke="#0f300a" stroke-width="1.1" fill="none"/><path d="M25.8 46.4 L26.6 44.5 L29.7 44.7 L29.8 46.4 L27.7 47Z" stroke="#10280a" stroke-width="1.1" fill="none"/><path d="M89.2 50.1 L88.2 47.7 L90.5 45.6 L91.7 45.5 L91 48.6Z" stroke="#0f300a" stroke-width="1.1" fill="none"/><path d="M74.1 26.6 L71.7 26.7 L68.4 23.5 L73.3 24.2Z" stroke="#0f300a" stroke-width="1.1" fill="none"/><path d="M46.8 121.4 L46 119.9 L45.8 117.1 L46.5 116.5 L48.4 119.3 L47.8 121.4Z" stroke="#143a0e" stroke-width="1.1" fill="none"/><path d="M93.5 64.3 L93.2 62.6 L95.8 61.5 L95.2 64.3Z" stroke="#10280a" stroke-width="1.1" fill="none"/><path d="M63 87.3 L60.7 86.1 L59.3 82.4 L61.1 81.6 L63.1 84Z" stroke="#10280a" stroke-width="1.1" fill="none"/><path d="M29.6 106.2 L29.6 104.5 L31.9 103.5 L31.8 105.6Z" stroke="#0f300a" stroke-width="1.1" fill="none"/><path d="M80.6 85.4 L77.6 86.6 L73.9 86.6 L72.8 83.9 L78.7 83.9Z" stroke="#10280a" stroke-width="1.1" fill="none"/><path d="M59.4 99.8 L58.1 99.1 L57.8 95.6 L58.4 95.6 L59.6 95.6 L59.6 97.8Z" stroke="#143a0e" stroke-width="1.1" fill="none"/><path d="M9 56.2 L8 53.7 L8.3 49.2 L10.5 49.4 L10.5 54.4Z" stroke="#143a0e" stroke-width="1.1" fill="none"/><path d="M64.2 101.2 L61.9 98.2 L63.1 94.1 L66 95.1 L64.8 98.9Z" stroke="#1a4212" stroke-width="1.1" fill="none"/><path d="M37 119.6 L35.5 120 L34.7 116.2 L36.4 117 L37.2 117.7Z" stroke="#10280a" stroke-width="1.1" fill="none"/><path d="M42.1 91.9 L43.5 90.1 L45.1 91 L43.9 92.3Z" stroke="#1a4212" stroke-width="1.1" fill="none"/><path d="M17.2 88.4 L19.3 86.6 L21.7 87 L22.4 88.4 L23.8 89.5 L19.6 89.4Z" stroke="#10280a" stroke-width="1.1" fill="none"/><path d="M47.4 27.1 L46.8 24.4 L46.6 23.5 L48.2 22.1 L48.9 23.4 L48.3 25.1Z" stroke="#143a0e" stroke-width="1.1" fill="none"/><path d="M51.4 68.3 L49 69 L46.2 68 L48.9 66.4Z" stroke="#143a0e" stroke-width="1.1" fill="none"/><path d="M36.8 32.6 L35.9 28.5 L38.9 27.2 L40.4 26.5 L40.3 30.2Z" stroke="#0f300a" stroke-width="1.1" fill="none"/><path d="M21.6 63.8 L18.1 64.9 L15.5 60.4 L20 60.8Z" stroke="#143a0e" stroke-width="1.1" fill="none"/><path d="M39.5 115.4 L37.9 116.8 L36 116 L35 115 L36 114.3 L37.7 114.7Z" stroke="#1a4212" stroke-width="1.1" fill="none"/><path d="M97 50.6 L97.9 47.7 L98.3 44.9 L101 42.6 L101 45.6 L100.8 48.1Z" stroke="#0f300a" stroke-width="1.1" fill="none"/><path d="M60.3 47.7 L60.3 44 L62.5 43.3 L63 45.5Z" stroke="#10280a" stroke-width="1.1" fill="none"/><path d="M71.7 33.5 L73.1 31.4 L74 30.2 L77.2 31.1 L75.2 33.7 L73.8 34Z" stroke="#143a0e" stroke-width="1.1" fill="none"/><path d="M66.3 112.3 L66.8 110.6 L69.1 109 L70.6 110.5 L69.3 112 L68.5 112.7Z" stroke="#1a4212" stroke-width="1.1" fill="none"/><path d="M20.9 66.7 L20.4 64.9 L22.5 62.7 L24.6 60.1 L25.7 64.2 L23.3 66.9Z" stroke="#10280a" stroke-width="1.1" fill="none"/><path d="M39.7 80.9 L40.1 79.1 L44 77.4 L45.5 78.6 L41.9 80.8Z" stroke="#0f300a" stroke-width="1.1" fill="none"/><path d="M44.9 111.2 L42 111 L41.2 109.4 L42 107.9 L44.8 109.1Z" stroke="#10280a" stroke-width="1.1" fill="none"/><path d="M81.8 36.9 L84.5 35.3 L86.3 35.6 L84.4 38Z" stroke="#10280a" stroke-width="1.1" fill="none"/><path d="M14.5 83.2 L13 82.2 L14.1 80.3 L15.6 78.5 L15.9 81.8Z" stroke="#143a0e" stroke-width="1.1" fill="none"/><path d="M100.8 55.7 L100.2 53.8 L100.8 52.3 L101.7 52.2 L102.2 53.5 L102 55.8Z" stroke="#0f300a" stroke-width="1.1" fill="none"/><path d="M31.4 79.1 L32.8 76.6 L36.9 75 L37.3 77 L32.8 80.5Z" stroke="#1a4212" stroke-width="1.1" fill="none"/><path d="M109.3 77.9 L108.8 75.8 L113.1 74.8 L113.8 75.8 L112.6 78.8 L107.6 79.6Z" stroke="#1a4212" stroke-width="1.1" fill="none"/><path d="M33.1 88 L30.7 89.2 L29.3 87.1 L28.6 86.2 L29.9 85.6 L32.3 86.8Z" stroke="#0f300a" stroke-width="1.1" fill="none"/><path d="M101.5 81.1 L99.6 80.6 L101.3 77.6 L103.1 80.1Z" stroke="#1a4212" stroke-width="1.1" fill="none"/><path d="M86.1 52.1 L87 50.3 L91.2 49.6 L91.4 51 L91.5 52.1 L88.6 52.8Z" stroke="#0f300a" stroke-width="1.1" fill="none"/><path d="M89.8 103.3 L89.9 101.6 L90.9 99.9 L92.1 99.8 L92.9 101.1 L92.5 102.5Z" stroke="#10280a" stroke-width="1.1" fill="none"/><path d="M31.7 38.7 L32.5 36 L36.2 33 L34.5 37.1Z" stroke="#1a4212" stroke-width="1.1" fill="none"/><path d="M20.9 62.4 L21.7 60.1 L26.9 60.3 L27.7 63.1 L22.3 63.9Z" stroke="#0f300a" stroke-width="1.1" fill="none"/><path d="M37.3 35.4 L34.7 33.5 L35.2 29.7 L38.5 32.2Z" stroke="#10280a" stroke-width="1.1" fill="none"/><path d="M84.8 25.8 L88 23.3 L90.8 23.7 L89.3 27.1Z" stroke="#0f300a" stroke-width="1.1" fill="none"/><path d="M83.8 47.6 L81.6 44.9 L82.6 40.5 L84.9 43.9Z" stroke="#4a3010" stroke-width="1.6" fill="none"/><path d="M80.2 28.8 L79.3 30 L76.8 29.2 L76.2 28.2 L78.3 27.3 L79.4 28Z" stroke="#5a3a12" stroke-width="1.6" fill="none"/><path d="M87.4 83.1 L87.2 79.9 L91.7 79.3 L92.3 79.7 L91.8 82.2 L90.7 82.9Z" stroke="#4a3010" stroke-width="1.6" fill="none"/><path d="M70.9 37.7 L68.5 38.9 L64.3 36.6 L65.7 35.4 L68.3 35.9Z" stroke="#4a3010" stroke-width="1.6" fill="none"/><path d="M102.8 77.4 L102.7 79.5 L99.2 77.6 L99.6 76.4 L101.6 76.5Z" stroke="#624014" stroke-width="1.6" fill="none"/><path d="M21.7 90.9 L23.8 89.1 L25.8 89.9 L28.6 90.7 L26.8 91.6 L23.6 92.9Z" stroke="#624014" stroke-width="1.6" fill="none"/><path d="M38.6 96.4 L39.2 94.4 L39.8 92.3 L41.2 91.8 L42.4 93.9 L40.1 95.6Z" stroke="#5a3a12" stroke-width="1.6" fill="none"/><path d="M70.4 50.6 L67.8 49.8 L67 47.3 L69.9 48.9Z" stroke="#4a3010" stroke-width="1.6" fill="none"/><path d="M97.1 26.2 L99.1 22.8 L100 21.9 L102.1 23.8 L100.1 25.7Z" stroke="#4a3010" stroke-width="1.6" fill="none"/><path d="M93.2 37.9 L91.1 37.6 L90.9 33.8 L93 34.9Z" stroke="#624014" stroke-width="1.6" fill="none"/><path d="M39.1 72.1 L35.9 73.1 L33.4 71.7 L33.6 69.4 L36.5 69.8Z" stroke="#624014" stroke-width="1.6" fill="none"/><path d="M32.5 43.4 L30.6 44.7 L27.4 43.9 L28.8 42 L31.4 41.7Z" stroke="#624014" stroke-width="1.6" fill="none"/><path d="M112.1 61 L112.2 59.3 L115.1 59.4 L115.9 60.3 L112.6 62.2Z" stroke="#4a3010" stroke-width="1.6" fill="none"/><path d="M88.9 101.6 L89.9 100.1 L92.9 100 L91.1 102.7Z" stroke="#624014" stroke-width="1.6" fill="none"/><path d="M21.7 93.4 L20.3 93.3 L19.2 91.2 L19.2 88.4 L20.9 90 L21.7 91.1Z" stroke="#4a3010" stroke-width="1.6" fill="none"/><path d="M50.9 16.7 L48.6 17.4 L46.2 17.7 L45.4 16.9 L46.2 14.2 L49.1 14.4Z" stroke="#4a3010" stroke-width="1.6" fill="none"/><path d="M43.4 74.4 L40.6 74.3 L38.8 72 L39.9 71.2 L41.4 70.3 L43.4 72.3Z" stroke="#624014" stroke-width="1.6" fill="none"/><path d="M60.7 85 L59.7 85.3 L57.2 84.4 L56.6 82.6 L58.1 82.1 L61.1 83.1Z" stroke="#5a3a12" stroke-width="1.6" fill="none"/><path d="M109.3 77 L107.5 76.3 L107.2 73.9 L108.6 73.1 L109.9 75Z" stroke="#4a3010" stroke-width="1.6" fill="none"/><path d="M53.9 66.4 L50 65.4 L49.9 63.2 L53.4 63.9Z" stroke="#5a3a12" stroke-width="1.6" fill="none"/><path d="M66.6 80.8 L63.3 78 L63.4 74.2 L67 76.3Z" stroke="#5a3a12" stroke-width="1.6" fill="none"/><path d="M18.9 61.2 L17.2 60.8 L15.8 57.9 L16.9 56.9 L19.2 59.3Z" stroke="#4a3010" stroke-width="1.6" fill="none"/><path d="M48.8 31.8 L45.9 32.4 L45.3 30.4 L46.8 29.2Z" stroke="#4a3010" stroke-width="1.6" fill="none"/><path d="M64.4 49.5 L62 49.6 L59.3 46.3 L59.8 45 L62.5 45.4Z" stroke="#4a3010" stroke-width="1.6" fill="none"/><path d="M15.4 53.8 L16.4 49.7 L20.1 48.2 L20.4 52.7Z" stroke="#624014" stroke-width="1.6" fill="none"/><path d="M37.6 27.6 L36.5 25.5 L37.2 22.4 L39.7 22.6 L39 25.2Z" stroke="#624014" stroke-width="1.6" fill="none"/><path d="M62.5 14.2 L62.3 12.7 L65.7 13.2 L66.1 14 L65 15.1 L63.9 15.6Z" stroke="#624014" stroke-width="1.6" fill="none"/><path d="M15.1 34 L17.9 30.9 L20.3 31.8 L18.6 34.2Z" stroke="#624014" stroke-width="1.6" fill="none"/><path d="M97.5 19.8 L95.8 20 L95.6 17.5 L98.6 18.2Z" stroke="#4a3010" stroke-width="1.6" fill="none"/><path d="M112 72.2 L114.9 69.3 L117.7 69.9 L120.1 71.9 L118.5 73.4 L115.1 73.4Z" stroke="#624014" stroke-width="1.6" fill="none"/><path d="M58.2 111.1 L56.4 110.2 L55.7 107 L57.7 108.2Z" stroke="#4a3010" stroke-width="1.6" fill="none"/><path d="M88.2 69.3 L87.4 68.3 L86.5 64.7 L87.6 62.7 L89.5 65.6 L90.3 66.5Z" stroke="#624014" stroke-width="1.6" fill="none"/><path d="M115.1 71.6 L114.2 67.9 L116.4 64.8 L117.6 68.7Z" stroke="#4a3010" stroke-width="1.6" fill="none"/><path d="M68.1 74.9 L67.6 72.2 L69.1 71.2 L70.6 71.5 L70.6 72.7Z" stroke="#624014" stroke-width="1.6" fill="none"/><path d="M11.7 77.1 L11.3 74.4 L14.7 72.9 L17.8 73.9 L15.7 76.5 L13.3 77.1Z" stroke="#5a3a12" stroke-width="1.6" fill="none"/><path d="M37.6 39.6 L37.2 37.4 L39.8 35.5 L39.8 37.7Z" stroke="#4a3010" stroke-width="1.6" fill="none"/><path d="M105.7 80.8 L105.1 82.1 L101.5 81.4 L99.8 78.9 L102.1 77.5 L105.3 79.2Z" stroke="#4a3010" stroke-width="1.6" fill="none"/><path d="M41.5 61.5 L40.6 59.9 L41.3 57.7 L42.7 58.1 L42.6 61.1Z" stroke="#5a3a12" stroke-width="1.6" fill="none"/><path d="M34.1 112.4 L36.2 109.2 L39.4 108.9 L41.1 111 L38.5 112.4Z" stroke="#4a3010" stroke-width="1.6" fill="none"/><path d="M19.5 29.2 L19.5 27.5 L24.2 26.4 L22.3 28.8 L22.1 30.6Z" stroke="#4a3010" stroke-width="1.6" fill="none"/><path d="M22.2 94.6 L20.5 92.8 L21.9 88.4 L22.7 90.3 L24.5 93Z" stroke="#5a3a12" stroke-width="1.6" fill="none"/><path d="M90 88.6 L90.7 85.7 L92.7 80.9 L93.2 82.9 L93.7 85.9Z" stroke="#624014" stroke-width="1.6" fill="none"/><path d="M24.3 65.5 L22.4 66.4 L18.7 64.7 L22.2 63.7Z" stroke="#5a3a12" stroke-width="1.6" fill="none"/><path d="M89.8 17.5 L88.9 16.7 L87.8 13.2 L89.6 14.4 L91 16.3Z" stroke="#4a3010" stroke-width="1.6" fill="none"/><path d="M51.8 115.7 L49.4 115.1 L49.2 111.9 L51.8 113.6Z" stroke="#5a3a12" stroke-width="1.6" fill="none"/><path d="M103.6 51.3 L101.6 49.8 L99.8 46.4 L100.5 45.9 L103.2 46.7 L103.4 49.1Z" stroke="#4a3010" stroke-width="1.6" fill="none"/><path d="M87.4 58.5 L86.7 59.9 L83.8 58.5 L84 57 L86.5 56.8Z" stroke="#624014" stroke-width="1.6" fill="none"/><path d="M112.9 44.9 L115.4 40.6 L117.5 40.9 L117.3 44.5Z" stroke="#624014" stroke-width="1.6" fill="none"/><path d="M101.6 62.9 L102.8 61 L104.3 59.9 L105 61.5 L103.6 63.1Z" stroke="#4a3010" stroke-width="1.6" fill="none"/><path d="M105.3 86.7 L105.7 86 L109.5 85.6 L110.6 86.4 L109.7 88.4 L108.3 88.3Z" stroke="#624014" stroke-width="1.6" fill="none"/><path d="M52.8 30.7 L50 30.3 L47.8 26.9 L49.8 25.6 L53.2 28.3Z" stroke="#5a3a12" stroke-width="1.6" fill="none"/><path d="M35.2 102.5 L35 101 L36.9 100.6 L38.7 100.6 L40.1 101.6 L36.2 103.1Z" stroke="#4a3010" stroke-width="1.6" fill="none"/><path d="M92.5 68.3 L90.3 69.1 L89.4 68.3 L89 65.3 L90 65.8 L91.6 66.6Z" stroke="#4a3010" stroke-width="1.6" fill="none"/><path d="M97.6 99.7 L93.6 99.9 L89.1 97.1 L92.7 95.5Z" stroke="#4a3010" stroke-width="1.6" fill="none"/><path d="M56.5 80.1 L59.1 76.7 L62 77.5 L60.1 80.9Z" stroke="#624014" stroke-width="1.6" fill="none"/><path d="M103 97.1 L101.8 94.8 L104.5 91.6 L107.3 93.7 L104.9 96.6Z" stroke="#4a3010" stroke-width="1.6" fill="none"/><path d="M105.1 34 L105.4 30.3 L106.9 29.5 L108 31.2 L107.3 33.4Z" stroke="#5a3a12" stroke-width="1.6" fill="none"/><path d="M32.9 42 L36.1 37.9 L38.3 37.9 L36.9 40.5Z" stroke="#624014" stroke-width="1.6" fill="none"/><path d="M40.2 39.1 L41.6 37.5 L42.4 36.2 L45.4 37.4 L43.9 38.9 L41.6 39.6Z" stroke="#624014" stroke-width="1.6" fill="none"/><path d="M98.2 105.9 L93.3 107.4 L92 105.8 L94.3 104.6Z" stroke="#5a3a12" stroke-width="1.6" fill="none"/><path d="M113.5 80.4 L110.6 78.7 L110.6 75.5 L112.7 77.3Z" stroke="#5a3a12" stroke-width="1.6" fill="none"/><path d="M84.1 103.4 L82.4 102.1 L82.3 99.4 L84.3 99.1 L84.5 101.5Z" stroke="#4a3010" stroke-width="1.6" fill="none"/><path d="M76.9 72 L73.7 71.1 L73.2 69 L73.8 65.6 L76.9 66.7 L78.2 69.5Z" stroke="#4a3010" stroke-width="1.6" fill="none"/><path d="M114 56 L115.3 54 L117.3 54.8 L117.3 56.6 L115.6 57Z" stroke="#624014" stroke-width="1.6" fill="none"/><path d="M86.4 42.3 L84.1 43.1 L82.2 41.4 L85 41.1Z" stroke="#5a3a12" stroke-width="1.6" fill="none"/><path d="M108.4 70.3 L106 69.5 L104.9 66.1 L105.9 66.6 L108.5 68.1Z" stroke="#5a3a12" stroke-width="1.6" fill="none"/><path d="M71.2 61.9 L69.8 59 L69.8 58.2 L72.3 55.6 L72.4 58.4 L71.7 60.9Z" stroke="#624014" stroke-width="1.6" fill="none"/><path d="M67.9 9.1 L65.2 9.2 L63.1 7.6 L61.8 5 L65.7 6.8Z" stroke="#624014" stroke-width="1.6" fill="none"/><path d="M58.6 83.8 L55.3 84.1 L52.9 81.2 L56.5 81.5Z" stroke="#5a3a12" stroke-width="1.6" fill="none"/><path d="M52.4 94.7 L50.7 91.7 L53.9 89.6 L54.9 93.8Z" stroke="#4a3010" stroke-width="1.6" fill="none"/><path d="M47.3 61.6 L43.9 60.9 L42.3 56.6 L47.2 57.9Z" stroke="#5a3a12" stroke-width="1.6" fill="none"/><path d="M39.8 79.7 L38.1 80.2 L37.4 77.2 L38.9 75.4 L40.4 76.1 L41 79Z" stroke="#5a3a12" stroke-width="1.6" fill="none"/><path d="M87.1 19.7 L87.2 18.6 L87.6 16.7 L90.2 16.5 L90.7 18.6 L88.8 20.4Z" stroke="#5a3a12" stroke-width="1.6" fill="none"/><path d="M28.3 58.2 L27.3 57.4 L29.1 53.1 L29.8 52.5 L31.8 54 L29.7 58.3Z" stroke="#5a3a12" stroke-width="1.6" fill="none"/><path d="M32.4 73.3 L31 73.2 L31.7 69.6 L33.2 69.9 L33.8 70.3 L34.8 72.5Z" stroke="#5a3a12" stroke-width="1.6" fill="none"/><path d="M19.7 31.3 L18.1 32.2 L17 30.6 L17.2 29.6 L19.6 30.5Z" stroke="#624014" stroke-width="1.6" fill="none"/><path d="M113 67.4 L108.1 68.7 L107 65.8 L108.7 64.4Z" stroke="#624014" stroke-width="1.6" fill="none"/><path d="M47.5 9.3 L48 7.5 L50.5 8.6 L51.4 9.5 L48.3 10.1Z" stroke="#5a3a12" stroke-width="1.6" fill="none"/><path d="M97.4 95.1 L95 95.4 L95.2 90.7 L97.6 89.8 L99.1 90.3 L98.8 93.4Z" stroke="#624014" stroke-width="1.6" fill="none"/><path d="M52.6 80 L50.2 80.2 L49.4 78.6 L50.1 76.5 L51.7 77 L53 79.4Z" stroke="#4a3010" stroke-width="1.6" fill="none"/><path d="M57.2 111.3 L57.5 112.8 L55.1 112.2 L54.5 111.7 L53.7 110.1 L57.1 110.7Z" stroke="#5a3a12" stroke-width="1.6" fill="none"/><path d="M41.5 94.4 L38.5 91.7 L41.1 90.5 L43.1 90.3Z" stroke="#5a3a12" stroke-width="1.6" fill="none"/><path d="M53.7 111 L53.2 108.9 L55.3 107.4 L56.6 107.6 L56.1 109 L55.5 111.1Z" stroke="#4a3010" stroke-width="1.6" fill="none"/><path d="M97.4 54.5 L99 50.7 L101 49.4 L100 52.5Z" stroke="#4a3010" stroke-width="1.6" fill="none"/><path d="M99.5 100.2 L96.7 101.2 L94.8 100.1 L94.6 97.6 L99.1 98.5Z" stroke="#624014" stroke-width="1.6" fill="none"/><path d="M48.8 34.1 L49.4 32.2 L51.9 30.9 L51.7 33 L50.6 35.2Z" stroke="#4a3010" stroke-width="1.6" fill="none"/><path d="M90.8 66.8 L90.3 67.3 L88 67 L87.8 63.9 L90 64.2 L92.4 65.6Z" stroke="#5a3a12" stroke-width="1.6" fill="none"/><path d="M41.5 20.1 L39.9 18.7 L40.3 16.4 L42.6 16.6Z" stroke="#5a3a12" stroke-width="1.6" fill="none"/><path d="M68.5 77 L66.8 74.9 L68.3 72.3 L70.3 72.9 L69.9 76.7Z" stroke="#5a3a12" stroke-width="1.6" fill="none"/><path d="M87.7 40.5 L85.5 39.6 L86.1 35.7 L87.7 35.5 L88.1 38Z" stroke="#624014" stroke-width="1.6" fill="none"/><path d="M64 63l52.3 5.3" stroke="#d86a1c" stroke-width="1"/><path d="M64 63l33 28.3" stroke="#d86a1c" stroke-width="1"/><path d="M64 63l11.9 32.1" stroke="#d86a1c" stroke-width="1"/><path d="M64 63l6.6 34.1" stroke="#d86a1c" stroke-width="1"/><path d="M64 63l-32.9 37.6" stroke="#d86a1c" stroke-width="1"/><path d="M64 63l-42.7 14.6" stroke="#d86a1c" stroke-width="1"/><path d="M64 63l-44.9 2.5" stroke="#d86a1c" stroke-width="1"/><path d="M64 63l-39.9 -19.7" stroke="#d86a1c" stroke-width="1"/><path d="M64 63l-35 -40.2" stroke="#d86a1c" stroke-width="1"/><path d="M64 63l3.5 -38.7" stroke="#d86a1c" stroke-width="1"/><path d="M64 63l21.5 -47.2" stroke="#d86a1c" stroke-width="1"/><path d="M64 63l39.9 -19.1" stroke="#d86a1c" stroke-width="1"/><path d="M63.9 88.3 L62.2 85.7 L63.8 83.5 L65.7 85.7Z" stroke="#30e030" stroke-width="1" fill="none"/><path d="M84.6 62.1 L82 61 L81.3 58.4 L83 57.6 L83.9 57.8 L85 60.3Z" stroke="#30e030" stroke-width="1" fill="none"/><path d="M95.4 23.8 L94 23.6 L94.4 20.8 L96 20.6 L97 22.3Z" stroke="#3af03a" stroke-width="1" fill="none"/><path d="M41.8 63.2 L40.8 63.6 L40.2 60.7 L41.6 60 L43.5 60.8 L43.2 62.6Z" stroke="#3af03a" stroke-width="1" fill="none"/><path d="M60.3 25.3 L60 23.7 L63.9 22.5 L64.1 24.6 L61.9 25.2Z" stroke="#28c828" stroke-width="1" fill="none"/><path d="M104.1 73 L103.4 71.6 L103.8 69.7 L106.1 69.8 L105.4 72.4Z" stroke="#3af03a" stroke-width="1" fill="none"/><path d="M96 90.5 L94.4 88.8 L94.8 85.3 L96.6 83.7 L97.6 86.4 L98.3 88.6Z" stroke="#30e030" stroke-width="1" fill="none"/><path d="M52 69.6 L51.4 65 L54.1 63.5 L54.5 66.4Z" stroke="#3af03a" stroke-width="1" fill="none"/><path d="M96.5 19.9 L97.8 16.9 L100.5 16.8 L101.8 16.9 L102.3 18.4 L100.5 20.6Z" stroke="#28c828" stroke-width="1" fill="none"/><path d="M42.3 47.2 L39.2 45.5 L39.3 43.6 L41.8 43.7Z" stroke="#30e030" stroke-width="1" fill="none"/><path d="M68.4 19.3 L66.9 19.8 L63.8 18.1 L62.9 16.6 L65.2 16.2 L65.9 16.7Z" stroke="#30e030" stroke-width="1" fill="none"/><path d="M37.9 57 L37.9 55.6 L41 54.4 L41.9 55.5 L39.8 57.6Z" stroke="#28c828" stroke-width="1" fill="none"/><path d="M84.9 61.4 L84.2 62.6 L82.2 60.3 L82.1 58.4 L83.6 58.1 L85.4 58.6Z" stroke="#30e030" stroke-width="1" fill="none"/><path d="M85.1 61.6 L85.8 59.6 L88.2 58.8 L90.7 61 L89.1 62.4 L85.8 63.6Z" stroke="#28c828" stroke-width="1" fill="none"/><path d="M97.6 57.3 L94.2 55.4 L95 52.5 L97.8 53.4Z" stroke="#30e030" stroke-width="1" fill="none"/><path d="M79.4 46.2 L78.6 45.6 L78.7 42.6 L79.9 41.7 L81.2 43 L82.1 46.3Z" stroke="#30e030" stroke-width="1" fill="none"/><path d="M83.7 35.4 L80.7 35.3 L78.5 33.9 L83.1 33.2Z" stroke="#30e030" stroke-width="1" fill="none"/><path d="M45.8 71.4 L44.3 69.7 L45 67.4 L46.2 67.3 L47.4 68.7Z" stroke="#3af03a" stroke-width="1" fill="none"/><path d="M57 62.3 L54.5 60.6 L54.1 58.2 L56.9 60Z" stroke="#30e030" stroke-width="1" fill="none"/><path d="M60.1 34.1 L58.4 31.8 L59.1 28.8 L60.7 31.2Z" stroke="#3af03a" stroke-width="1" fill="none"/><path d="M52.5 34.2 L51.1 31 L52 29.2 L53.2 28.9 L53.5 31.7Z" stroke="#28c828" stroke-width="1" fill="none"/><path d="M104.6 82.4 L101.9 79.9 L102.2 75.3 L105.4 78.2Z" stroke="#30e030" stroke-width="1" fill="none"/><path d="M71.7 58 L72.1 54.9 L74.5 52.8 L75.6 53.9 L75.4 55.8 L73.6 57.5Z" stroke="#30e030" stroke-width="1" fill="none"/><path d="M93.8 96 L93.7 94.6 L93.8 92.5 L94.8 91.7 L95.8 92.8 L96.3 95Z" stroke="#3af03a" stroke-width="1" fill="none"/><path d="M69.5 100.8 L67.1 100.7 L67.1 97.3 L68.1 94.4 L69.4 97.1 L69.8 99.1Z" stroke="#3af03a" stroke-width="1" fill="none"/><path d="M43.9 86 L43.1 84.9 L43.8 80.3 L45 79.4 L46.6 82 L46.3 83.7Z" stroke="#30e030" stroke-width="1" fill="none"/><path d="M70.8 64.5 L68.7 63 L68.6 60.9 L72.3 62.7Z" stroke="#28c828" stroke-width="1" fill="none"/><path d="M53.9 35.2 L52.8 36.4 L50.8 34 L52.9 33.8Z" stroke="#28c828" stroke-width="1" fill="none"/><path d="M58.9 42.3 L56.6 43.3 L54 43.1 L53.6 42.5 L55.5 40.3 L56.8 41.1Z" stroke="#28c828" stroke-width="1" fill="none"/><path d="M99.3 82.6 L97.6 83.8 L95.8 81.8 L95.1 79.2 L97.8 79.2 L98.8 80.1Z" stroke="#3af03a" stroke-width="1" fill="none"/><path d="M42.3 73.5 L40.3 71.9 L41.4 69.3 L42.8 71.7Z" stroke="#30e030" stroke-width="1" fill="none"/><path d="M104.8 86.5 L102.1 85.4 L101.5 80.7 L104.3 83.3Z" stroke="#30e030" stroke-width="1" fill="none"/><path d="M75.9 79.4 L75.2 79.5 L73.1 78.9 L73.2 76.3 L74.2 76.1 L76.2 78.4Z" stroke="#28c828" stroke-width="1" fill="none"/><path d="M48.6 73.4 L49.9 72.1 L53.1 71 L53.4 73.7 L49.3 75.6Z" stroke="#3af03a" stroke-width="1" fill="none"/><path d="M77.8 90.8 L77.3 88.8 L79.4 86.2 L81 88.4 L80.3 90.3Z" stroke="#3af03a" stroke-width="1" fill="none"/><path d="M90.9 77.6 L86 78.3 L84.4 75.7 L89 75.7Z" stroke="#30e030" stroke-width="1" fill="none"/><path d="M63.9 90.7 L62.7 89.6 L65.9 88.3 L66.8 89.7 L66 91 L64.7 91Z" stroke="#30e030" stroke-width="1" fill="none"/><path d="M39.8 27.2 L37.7 27 L38.6 23.8 L39.5 21.6 L41.1 22.5 L40.6 26.2Z" stroke="#28c828" stroke-width="1" fill="none"/><path d="M97 81.6 L94.9 80.9 L91.8 78.8 L92.2 77 L95.8 77.6Z" stroke="#3af03a" stroke-width="1" fill="none"/><path d="M93 72.2 L94 70.2 L96.5 71 L95.8 72.2 L93.6 73Z" stroke="#28c828" stroke-width="1" fill="none"/><path d="M84.8 53.2 L84 52.9 L84.1 47 L86.5 46.2 L87.9 49.4 L87.3 50.9Z" stroke="#28c828" stroke-width="1" fill="none"/><path d="M88 86.7 L87.1 85.7 L86.1 83.1 L87.4 82.6 L89.8 85.4Z" stroke="#30e030" stroke-width="1" fill="none"/><path d="M83.2 44.5 L81.5 44.3 L79.3 43.1 L79.5 41.3 L81.8 41 L82.9 42.4Z" stroke="#30e030" stroke-width="1" fill="none"/><path d="M55.5 64.2 L53 63.7 L52 61 L53.2 60.3 L55.8 63.1Z" stroke="#28c828" stroke-width="1" fill="none"/><path d="M82 14.1 L80.1 13.5 L79.6 10 L82.4 10.1 L83.9 12Z" stroke="#28c828" stroke-width="1" fill="none"/><path d="M90.4 40.7 L90.7 38.3 L94.5 35.2 L94.5 37.6 L92.7 40.2Z" stroke="#3af03a" stroke-width="1" fill="none"/><path d="M117.2 48.5 L118.4 46.1 L121.8 46.3 L121.8 48.3 L119.5 49.9Z" stroke="#30e030" stroke-width="1" fill="none"/><path d="M58.6 39.8 L56.1 39.3 L54.9 38.2 L54.2 35.8 L57.6 37.2Z" stroke="#28c828" stroke-width="1" fill="none"/><path d="M62.2 41.1 L60.5 41.6 L58.1 38.3 L59.6 37.7 L60.6 37.8 L62.9 39.8Z" stroke="#3af03a" stroke-width="1" fill="none"/><path d="M70.7 46.6 L67.6 43.2 L68.7 41.6 L70.6 43.1Z" stroke="#3af03a" stroke-width="1" fill="none"/><path d="M69.9 54.9 L70 52.8 L74.5 53.7 L73.6 56Z" stroke="#30e030" stroke-width="1" fill="none"/><path d="M99.6 47.3 L99.1 44.5 L99.3 40.9 L102.3 45.1Z" stroke="#30e030" stroke-width="1" fill="none"/><path d="M74 33.1 L72.8 33.5 L70.5 32.3 L69.2 30.9 L71.8 30.3 L73.1 31.2Z" stroke="#28c828" stroke-width="1" fill="none"/><path d="M74 90.4 L73.9 87.2 L75.7 85.9 L77.5 86.3 L75.7 88.6Z" stroke="#28c828" stroke-width="1" fill="none"/><path d="M107.4 29.2 L105.7 25 L108.2 22.3 L108.9 26.2Z" stroke="#28c828" stroke-width="1" fill="none"/><path d="M54.1 66.3 L52.4 67 L50.9 64.6 L50.6 63.4 L54.1 64.9Z" stroke="#3af03a" stroke-width="1" fill="none"/><path d="M92.7 17 L90.9 17.1 L89.4 16.2 L88.9 14.5 L91.5 15.1Z" stroke="#30e030" stroke-width="1" fill="none"/><path d="M57.1 21.1 L58.7 18.8 L61.4 18.6 L61.9 19.9 L60.4 21.9Z" stroke="#28c828" stroke-width="1" fill="none"/><path d="M53.1 34.8 L54.6 33.3 L57.9 32.3 L59.6 34 L58 35.6 L55.2 35.8Z" stroke="#3af03a" stroke-width="1" fill="none"/><path d="M82.1 37.2 L81.1 35.1 L83.1 33.2 L84 35.7Z" stroke="#30e030" stroke-width="1" fill="none"/><path d="M87.9 92.8 L87.9 90.6 L89.3 89 L89.5 91.6Z" stroke="#28c828" stroke-width="1" fill="none"/><path d="M41.6 31.7 L38 31.7 L35 28.3 L39.1 27.8Z" stroke="#28c828" stroke-width="1" fill="none"/><path d="M62.4 39 L61.1 38.9 L61.1 33.2 L63 33.8 L64 37.9Z" stroke="#3af03a" stroke-width="1" fill="none"/><path d="M49 21.1 L46.7 22.3 L45.4 21.7 L46.4 19.7 L48 20.1Z" stroke="#30e030" stroke-width="1" fill="none"/><path d="M62 28.6 L60.7 29.5 L56.1 27.2 L56.9 25.9 L57.6 25.1 L61.3 26.6Z" stroke="#30e030" stroke-width="1" fill="none"/><path d="M50.6 45.9 L47.8 45.3 L46.4 43.5 L47.2 42.5 L49.9 43.3Z" stroke="#28c828" stroke-width="1" fill="none"/><path d="M119.9 57.2 L120 56.5 L122.7 54.7 L124 55.3 L122.6 57.1 L121.6 58.3Z" stroke="#28c828" stroke-width="1" fill="none"/><path d="M57.9 67.8 L54.7 67.2 L53.7 65.7 L53.4 63.1 L56.7 64.7Z" stroke="#3af03a" stroke-width="1" fill="none"/><path d="M53.3 27.5 L51.3 28.1 L48.5 27.3 L48.4 25.1 L50 24.7 L51.5 25.8Z" stroke="#30e030" stroke-width="1" fill="none"/><path d="M71 61.5 L69.4 59.8 L71.3 56.8 L72.8 60.3Z" stroke="#3af03a" stroke-width="1" fill="none"/><path d="M105.1 23.5 L103.3 24.1 L102.4 24.1 L100.8 22 L102.1 20.7 L105.8 22Z" stroke="#28c828" stroke-width="1" fill="none"/><path d="M101.9 45.1 L99.8 45.7 L97.7 43.1 L98 41.8 L99.6 40.8 L102.2 42.7Z" stroke="#28c828" stroke-width="1" fill="none"/><path d="M68.5 79.7 L68.2 77.6 L69.9 76 L70.7 75.9 L71 77.4 L70.5 78.9Z" stroke="#30e030" stroke-width="1" fill="none"/><path d="M52.2 60.2 L51.2 58.2 L52.7 56.6 L53.6 54.9 L54.1 57.2 L53.2 58.5Z" stroke="#3af03a" stroke-width="1" fill="none"/><path d="M102.9 65.2 L100.8 63.5 L100.2 63.1 L98.7 60.7 L101 60.4 L102.7 62Z" stroke="#30e030" stroke-width="1" fill="none"/><path d="M96.4 15.4 L93.8 16.6 L91.3 14.8 L89.8 12 L95.9 12.6Z" stroke="#28c828" stroke-width="1" fill="none"/><path d="M64.8 86.8 L65.4 84.7 L66.9 82.3 L67.5 83.7 L67 85.1Z" stroke="#3af03a" stroke-width="1" fill="none"/><path d="M105.7 26.7 L107.6 25.8 L111.1 24.8 L110.5 26.4 L108.1 27.3Z" stroke="#3af03a" stroke-width="1" fill="none"/><path d="M62.2 53.5 L60.1 51.3 L60.9 48.4 L63.3 50.4Z" stroke="#3af03a" stroke-width="1" fill="none"/><path d="M72.9 49.9 L71.8 50.9 L71 47.6 L72.6 46.2 L73.4 48.9Z" stroke="#28c828" stroke-width="1" fill="none"/><path d="M103.3 92.5 L100.7 88.7 L102.3 84.5 L104.6 88.9Z" stroke="#28c828" stroke-width="1" fill="none"/><path d="M118.1 75.5 L114.3 73.6 L113.9 70.8 L118 72Z" stroke="#30e030" stroke-width="1" fill="none"/><path d="M79.1 27 L80.3 25.2 L81.4 24 L83.9 25.2 L80.6 28.3Z" stroke="#30e030" stroke-width="1" fill="none"/><path d="M109.8 42.7 L108.1 43.6 L103.5 41.9 L105.7 40.8 L107.5 41Z" stroke="#3af03a" stroke-width="1" fill="none"/><path d="M68.4 41.8 L65.9 39.5 L67.4 37.9 L69.4 39.7Z" stroke="#3af03a" stroke-width="1" fill="none"/><path d="M103.7 83.7 L102.9 80.4 L105.9 79.2 L105.5 81.6Z" stroke="#3af03a" stroke-width="1" fill="none"/><path d="M68.4 14.2 L68.2 12.7 L70.5 11 L73.2 11.4 L72 15 L69.7 14.4Z" stroke="#28c828" stroke-width="1" fill="none"/><path d="M89.1 46.8 L89 44.8 L89.8 43 L91.2 44.5 L90.9 46.2Z" stroke="#3af03a" stroke-width="1" fill="none"/><path d="M58.9 49.6 L55.9 48 L57 45.1 L59 47.6Z" stroke="#30e030" stroke-width="1" fill="none"/><path d="M70.9 71.1 L72.9 69.7 L74 70.9 L72.8 72.9Z" stroke="#3af03a" stroke-width="1" fill="none"/><path d="M71.3 37.5 L71.3 33.4 L73.7 32.1 L73.7 36.4Z" stroke="#3af03a" stroke-width="1" fill="none"/><path d="M70.8 37 L68.8 37.2 L67.8 36.5 L67.5 33.8 L70.4 34.3 L71.5 36.8Z" stroke="#3af03a" stroke-width="1" fill="none"/><path d="M91.1 94.3 L87.3 93.3 L86.5 91 L87.8 90.7 L90.6 92.6Z" stroke="#30e030" stroke-width="1" fill="none"/><path d="M103.6 62.5 L104.1 60.6 L105.3 59.2 L106.6 60 L107.1 61.8 L104.6 62.9Z" stroke="#30e030" stroke-width="1" fill="none"/><path d="M62 84.3 L61.3 83.6 L62.8 81.3 L65.3 80.4 L63.8 83.3 L63.4 85Z" stroke="#28c828" stroke-width="1" fill="none"/><path d="M99.4 27.3 L97.5 28.3 L94.5 26.6 L95.9 26 L97.1 25.1 L100.9 26.3Z" stroke="#28c828" stroke-width="1" fill="none"/><path d="M76.5 78 L75 78 L71.8 77.6 L72 74.9 L73.9 74.5 L77.1 75.6Z" stroke="#30e030" stroke-width="1" fill="none"/><path d="M72.6 93.7 L70.7 94.9 L68.8 92.3 L68.9 90.7 L71.1 91.1 L73 91.9Z" stroke="#30e030" stroke-width="1" fill="none"/><path d="M56.9 41.8 L54.6 42.1 L53.8 38.7 L56.1 38.1Z" stroke="#30e030" stroke-width="1" fill="none"/><path d="M93.9 16.3 L90.7 15.8 L89.8 13.3 L90.4 12.6 L93 13.6Z" stroke="#3af03a" stroke-width="1" fill="none"/><path d="M67.3 39.2 L69 35.2 L71.2 35.5 L71.2 38.1Z" stroke="#28c828" stroke-width="1" fill="none"/><path d="M114.5 47.6 L113.1 48.8 L108.5 46.2 L111.6 45.1 L113.5 45.1Z" stroke="#3af03a" stroke-width="1" fill="none"/><path d="M54.4 48.1 L51.7 45.7 L51.3 41.8 L53.9 43.9Z" stroke="#28c828" stroke-width="1" fill="none"/><path d="M31.8 61 L31.9 58.5 L33.2 56.6 L35.8 56.5 L34 59.1Z" stroke="#30e030" stroke-width="1" fill="none"/><path d="M85.8 65.5 L82 66.7 L80.3 65.5 L82.1 64.2Z" stroke="#30e030" stroke-width="1" fill="none"/><path d="M62.7 21.6 L63.6 17.2 L67 15.2 L66.6 18.4Z" stroke="#28c828" stroke-width="1" fill="none"/><path d="M55 88.6 L51.8 86.3 L54.3 82.9 L55.5 86.3Z" stroke="#30e030" stroke-width="1" fill="none"/><path d="M72.2 26.8 L70.5 27.1 L68.3 24.2 L67.5 22.2 L69.7 22.5 L71.6 23.9Z" stroke="#30e030" stroke-width="1" fill="none"/><path d="M91 70.6 L88.5 71.6 L87 69.3 L90.4 68.9Z" stroke="#3af03a" stroke-width="1" fill="none"/><path d="M81.8 29.2 L80.5 29.8 L80.4 27.2 L81.4 25.2 L82.1 26.3 L83.4 29Z" stroke="#3af03a" stroke-width="1" fill="none"/><path d="M116.5 55.2 L113.8 57 L112.1 54.4 L113.8 53.5Z" stroke="#30e030" stroke-width="1" fill="none"/><path d="M92.3 21.9 L93.2 20.2 L96.3 19.5 L93.8 21.9Z" stroke="#28c828" stroke-width="1" fill="none"/><path d="M99.5 50.1 L99 49.8 L96.7 47.6 L97.4 44.6 L99.1 46.6 L100.3 47.9Z" stroke="#3af03a" stroke-width="1" fill="none"/><path d="M62.6 55.3 L58.8 52.8 L59.7 49.5 L63 51.5Z" stroke="#28c828" stroke-width="1" fill="none"/><path d="M81.2 29.4 L79.6 30.7 L76.5 29.9 L76.5 28.6 L77.7 26.9 L81.5 28.5Z" stroke="#28c828" stroke-width="1" fill="none"/><path d="M101.9 64.5 L99.9 62.7 L101.1 59.9 L103.1 62.2Z" stroke="#30e030" stroke-width="1" fill="none"/><path d="M70.6 36.2 L68.1 34.5 L68.4 29.5 L70.6 33.1Z" stroke="#30e030" stroke-width="1" fill="none"/><path d="M104.3 31.9 L101.6 31.7 L98.9 31.3 L100.5 28.2 L103.1 29.5Z" stroke="#28c828" stroke-width="1" fill="none"/><path d="M46 86.1 L44.6 86.8 L42.9 85.3 L44.5 84.6Z" stroke="#3af03a" stroke-width="1" fill="none"/><path d="M80.2 46.5 L77.6 46.1 L76 42.8 L78.9 43.3Z" stroke="#28c828" stroke-width="1" fill="none"/><path d="M110 38.3 L106.9 39.3 L104.2 36.9 L106.6 36.5Z" stroke="#3af03a" stroke-width="1" fill="none"/><path d="M32 34.6 L35 33.1 L37.2 34.7 L35.2 35.8Z" stroke="#3af03a" stroke-width="1" fill="none"/><path d="M108.3 51.1 L108.1 47.5 L110.6 46.5 L111.1 48.2 L110.5 50.2Z" stroke="#28c828" stroke-width="1" fill="none"/><path d="M57.7 58.7 L54.4 56.4 L55.5 53.6 L59.4 56Z" stroke="#28c828" stroke-width="1" fill="none"/><path d="M49.3 78.3 L48.6 77.1 L50.5 75 L52.1 75.3 L52 77.2 L50.1 79.4Z" stroke="#28c828" stroke-width="1" fill="none"/><path d="M63.6 69.5 L60.9 67 L61.1 64 L63.1 64.9 L63.9 66.2Z" stroke="#3af03a" stroke-width="1" fill="none"/><path d="M93.7 67.4 L89.6 67.5 L88.6 65.7 L89.8 64.2 L92.5 65.5Z" stroke="#30e030" stroke-width="1" fill="none"/></g><g id="t43"><path d="M29.2 59.2l0.6 4.1M29.2 59.2l-3.8 4.4M29.2 59.2l-6.5 -1.9M29.2 59.2l-2.6 -5.6M29.2 59.2l0.9 -8.2M29.2 59.2l5.8 -1M29.2 59.2l6.3 1.8" stroke="#6e8a48" stroke-width="1.1" fill="none"/><path d="M65.1 90.8l-0.7 4.2M65.1 90.8l-6.7 5.6M65.1 90.8l-4.3 -3.4M65.1 90.8l0.1 -6.6M65.1 90.8l3.6 -7.5M65.1 90.8l8.6 0.5M65.1 90.8l2.4 3.8" stroke="#5c7a3a" stroke-width="1.1" fill="none"/><path d="M78 92.3l2.6 5.6M78 92.3l-0.6 4.4M78 92.3l-7.7 3.4M78 92.3l-6.9 -3.3M78 92.3l0.1 -4.4M78 92.3l6.5 -3.3M78 92.3l8.5 0.2" stroke="#5c7a3a" stroke-width="1.1" fill="none"/><path d="M88.8 48.9l6.4 2.8M88.8 48.9l3.3 3.3M88.8 48.9l-0.8 7.3M88.8 48.9l-6.9 4M88.8 48.9l-6.3 -2.3M88.8 48.9l-0.5 -4.2M88.8 48.9l4.1 -7.5" stroke="#6e8a48" stroke-width="1.1" fill="none"/><path d="M48.9 85.2l3.6 5.2M48.9 85.2l-0.4 8.7M48.9 85.2l-3 2.9M48.9 85.2l-7.2 -3.9M48.9 85.2l-1 -4.9M48.9 85.2l4.5 -4M48.9 85.2l6 -0.2" stroke="#6e8a48" stroke-width="1.1" fill="none"/><path d="M96.1 52.6l7.5 3.1M96.1 52.6l-0.3 8.8M96.1 52.6l-6.9 5.4M96.1 52.6l-4.9 0.2M96.1 52.6l-3.9 -4.5M96.1 52.6l3.1 -4.1M96.1 52.6l4.1 -1.4" stroke="#6e8a48" stroke-width="1.1" fill="none"/><path d="M17.3 67.7l-0.5 4.6M17.3 67.7l-4.6 1.3M17.3 67.7l-7.4 -1.3M17.3 67.7l-2.9 -6.5M17.3 67.7l3 -5.3M17.3 67.7l5.7 -1.6M17.3 67.7l3.6 3.9" stroke="#6e8a48" stroke-width="1.1" fill="none"/><path d="M28.2 70.7l5 1.8M28.2 70.7l-0.4 5.4M28.2 70.7l-3.5 2.6M28.2 70.7l-4.5 -1.4M28.2 70.7l-4.7 -6M28.2 70.7l2.7 -6.7M28.2 70.7l6.8 -2.8" stroke="#7c9650" stroke-width="1.1" fill="none"/><path d="M45 61.1l2.5 7.3M45 61.1l-1.9 6.5M45 61.1l-5.6 2.5M45 61.1l-3.3 -2.8M45 61.1l-0.6 -7.5M45 61.1l3.7 -3M45 61.1l7.1 1.6" stroke="#6e8a48" stroke-width="1.1" fill="none"/><path d="M96 77.1l-5.1 0.3M96 77.1l-4.4 -5.5M96 77.1l0.4 -6.6M96 77.1l4 -5M96 77.1l5.4 0.7M96 77.1l3.6 5.1M96 77.1l-1.1 4.6" stroke="#6e8a48" stroke-width="1.1" fill="none"/><path d="M96.5 48.5l8.7 2.2M96.5 48.5l3.6 7.3M96.5 48.5l-2.9 7.4M96.5 48.5l-5.2 1.7M96.5 48.5l-6.1 -5.4M96.5 48.5l-0.2 -7.2M96.5 48.5l5.2 -1.7" stroke="#5c7a3a" stroke-width="1.1" fill="none"/><path d="M28.8 82.1l5.8 6.3M28.8 82.1l0.2 5.3M28.8 82.1l-7.8 2.4M28.8 82.1l-4.3 -1.7M28.8 82.1l-0.6 -5.5M28.8 82.1l3.6 -3.9M28.8 82.1l7.2 -2.1" stroke="#7c9650" stroke-width="1.1" fill="none"/><path d="M54.6 50.4l-2.9 6M54.6 50.4l-4 -0M54.6 50.4l-4.6 -4.5M54.6 50.4l-1.3 -4.3M54.6 50.4l5.2 -3.4M54.6 50.4l7.4 -0.4M54.6 50.4l2.4 4.1" stroke="#6e8a48" stroke-width="1.1" fill="none"/><path d="M41.5 106l-4.9 0.7M41.5 106l-4.1 -3M41.5 106l0.6 -6M41.5 106l3.5 -6.2M41.5 106l8.4 -1.2M41.5 106l2.2 6.7M41.5 106l-1.4 7.7" stroke="#6e8a48" stroke-width="1.1" fill="none"/><path d="M45.5 19.4l3.6 3.4M45.5 19.4l0.4 7.5M45.5 19.4l-5.9 3.5M45.5 19.4l-6.1 -4.5M45.5 19.4l-2 -5.3M45.5 19.4l3.8 -6.7M45.5 19.4l7.1 -0.8" stroke="#7c9650" stroke-width="1.1" fill="none"/><path d="M67.8 95.5l7.8 1.2M67.8 95.5l4.5 4.3M67.8 95.5l-1.4 4.4M67.8 95.5l-5.1 1.4M67.8 95.5l-5.1 -4M67.8 95.5l-0.6 -5.1M67.8 95.5l3.3 -2.4" stroke="#6e8a48" stroke-width="1.1" fill="none"/><path d="M46.4 22.4l5.5 4.3M46.4 22.4l1.4 8.2M46.4 22.4l-1.5 4.1M46.4 22.4l-4.5 -0.4M46.4 22.4l-3.9 -4.8M46.4 22.4l0.8 -4M46.4 22.4l6.4 -2.5" stroke="#6e8a48" stroke-width="1.1" fill="none"/><path d="M52.7 80l0.2 4.1M52.7 80l-1.6 3.8M52.7 80l-8.2 0.9M52.7 80l-2.4 -3.4M52.7 80l0.9 -4.1M52.7 80l5.9 -0.9M52.7 80l6.2 4.7" stroke="#6e8a48" stroke-width="1.1" fill="none"/><path d="M90 67.3l2.5 4.8M90 67.3l-0.8 5.7M90 67.3l-8.5 0.3M90 67.3l-5.2 -3.3M90 67.3l-2 -7.1M90 67.3l4.3 -3.1M90 67.3l4.4 1" stroke="#6e8a48" stroke-width="1.1" fill="none"/><path d="M46.6 41.5l-6.6 3.9M46.6 41.5l-7 -2.1M46.6 41.5l-2.7 -7.4M46.6 41.5l2.2 -3.5M46.6 41.5l4 -1M46.6 41.5l7 3.3M46.6 41.5l-0.8 7.2" stroke="#6e8a48" stroke-width="1.1" fill="none"/><path d="M30.3 73.1l-5.2 1.1M30.3 73.1l-5.1 -4.5M30.3 73.1l-1.1 -7.5M30.3 73.1l4.9 -7.5M30.3 73.1l3.9 1.8M30.3 73.1l1.6 4.4M30.3 73.1l-4.1 4.7" stroke="#6e8a48" stroke-width="1.1" fill="none"/><path d="M90.6 38.1l5.1 1.4M90.6 38.1l4.4 4.4M90.6 38.1l-1.3 4M90.6 38.1l-5 3.1M90.6 38.1l-6.3 -4M90.6 38.1l-2.8 -7.6M90.6 38.1l5.6 -7" stroke="#7c9650" stroke-width="1.1" fill="none"/><path d="M52.4 57.6l-5.7 2.9M52.4 57.6l-4.5 -0.3M52.4 57.6l-3.2 -5.1M52.4 57.6l1.9 -3.8M52.4 57.6l8.5 -2.9M52.4 57.6l5 5.5M52.4 57.6l-3.4 7.9" stroke="#5c7a3a" stroke-width="1.1" fill="none"/><path d="M109.6 44.2l4.7 1.5M109.6 44.2l0.5 4.4M109.6 44.2l-5.8 6.5M109.6 44.2l-4 -0.6M109.6 44.2l-3.7 -4M109.6 44.2l0.2 -5M109.6 44.2l6.1 -2.5" stroke="#6e8a48" stroke-width="1.1" fill="none"/><path d="M103.8 35.3l2.4 3.7M103.8 35.3l-1 4.5M103.8 35.3l-5.3 2M103.8 35.3l-3.7 -1.9M103.8 35.3l0.9 -5M103.8 35.3l3.2 -6.1M103.8 35.3l6.8 -1.2" stroke="#7c9650" stroke-width="1.1" fill="none"/><path d="M62.9 97.2l-6.3 5.9M62.9 97.2l-6.8 -0.1M62.9 97.2l-2.5 -3.6M62.9 97.2l0.5 -4.6M62.9 97.2l3.2 -2.7M62.9 97.2l5.1 0.4M62.9 97.2l1.7 7.7" stroke="#7c9650" stroke-width="1.1" fill="none"/><path d="M70.9 77.7l-3.1 3.2M70.9 77.7l-5.2 -0.5M70.9 77.7l-4 -5.8M70.9 77.7l0.2 -8.4M70.9 77.7l6.4 -3.3M70.9 77.7l4.4 2.4M70.9 77.7l2.3 4.4" stroke="#5c7a3a" stroke-width="1.1" fill="none"/><path d="M61 111.6l-5.1 4.1M61 111.6l-5.7 0.9M61 111.6l-1.8 -3.7M61 111.6l0.6 -4M61 111.6l5 -2.6M61 111.6l4.2 2.4M61 111.6l0.5 4.6" stroke="#7c9650" stroke-width="1.1" fill="none"/><path d="M95 97.2l5.4 0.8M95 97.2l3.7 6.7M95 97.2l-0.9 8M95 97.2l-4.6 2.7M95 97.2l-5.8 -5M95 97.2l0.1 -6.9M95 97.2l4.9 -4.5" stroke="#6e8a48" stroke-width="1.1" fill="none"/><path d="M76.5 22.3l-4.5 1.3M76.5 22.3l-4.7 -4.2M76.5 22.3l0 -7M76.5 22.3l4.1 -5.5M76.5 22.3l6.3 2.4M76.5 22.3l4.5 5.2M76.5 22.3l-5 5.5" stroke="#5c7a3a" stroke-width="1.1" fill="none"/><path d="M67.1 50.4l1.5 4.5M67.1 50.4l-4.5 4.2M67.1 50.4l-4.7 1.3M67.1 50.4l-5.9 -6.5M67.1 50.4l1.9 -4.5M67.1 50.4l5.1 -1.6M67.1 50.4l4.5 3.2" stroke="#7c9650" stroke-width="1.1" fill="none"/><path d="M50.3 96.2l-7.9 3.9M50.3 96.2l-4.7 -2.1M50.3 96.2l-2.2 -7M50.3 96.2l2.4 -5.6M50.3 96.2l5 0.2M50.3 96.2l7.5 3.9M50.3 96.2l0.1 7" stroke="#6e8a48" stroke-width="1.1" fill="none"/><path d="M41.4 46.3l4.9 1.9M41.4 46.3l3.5 6.1M41.4 46.3l-2.7 7.6M41.4 46.3l-7 0.4M41.4 46.3l-5.1 -2.3M41.4 46.3l-0 -6.1M41.4 46.3l3.8 -2.4" stroke="#5c7a3a" stroke-width="1.1" fill="none"/><path d="M61.9 44.3l0.7 6.9M61.9 44.3l-5 5.4M61.9 44.3l-7.6 -0.7M61.9 44.3l-3.2 -5M61.9 44.3l-0.2 -5.2M61.9 44.3l4.3 -1.5M61.9 44.3l3.7 2.1" stroke="#7c9650" stroke-width="1.1" fill="none"/><path d="M88.7 92.2l-6.4 4M88.7 92.2l-5.3 -2.5M88.7 92.2l-2.2 -5.5M88.7 92.2l4.9 -5.8M88.7 92.2l4.5 1.1M88.7 92.2l3.4 6.4M88.7 92.2l-1.1 6.2" stroke="#5c7a3a" stroke-width="1.1" fill="none"/><path d="M15.6 59.9l4.1 7.9M15.6 59.9l-3.1 4.7M15.6 59.9l-6.3 1.6M15.6 59.9l-5.2 -1.6M15.6 59.9l-0.5 -6.5M15.6 59.9l4.5 -3.2M15.6 59.9l7.8 3.6" stroke="#6e8a48" stroke-width="1.1" fill="none"/><path d="M44.9 25.6l-7.2 3.3M44.9 25.6l-3.9 -1.3M44.9 25.6l-1.2 -7.3M44.9 25.6l3.7 -3.8M44.9 25.6l5.4 2M44.9 25.6l2.2 5.8M44.9 25.6l-1.1 4" stroke="#7c9650" stroke-width="1.1" fill="none"/><path d="M64.1 78.9l-1.7 7.9M64.1 78.9l-4.2 1.6M64.1 78.9l-6.2 -1.8M64.1 78.9l0.3 -7.1M64.1 78.9l2.3 -3.8M64.1 78.9l5.5 1.5M64.1 78.9l3 6.8" stroke="#6e8a48" stroke-width="1.1" fill="none"/><path d="M97.1 84.5l0.9 7.9M97.1 84.5l-3.7 3.1M97.1 84.5l-7.7 -2.5M97.1 84.5l-1.2 -4.1M97.1 84.5l1.2 -7.4M97.1 84.5l4.3 -1M97.1 84.5l8.1 3.2" stroke="#7c9650" stroke-width="1.1" fill="none"/><path d="M43 33l-4 7.1M43 33l-6.7 0.4M43 33l-7 -5.4M43 33l-1 -5.6M43 33l6 -2.7M43 33l5.7 1.3M43 33l4.9 4.8" stroke="#7c9650" stroke-width="1.1" fill="none"/><path d="M95.8 56.8l-1.8 6M95.8 56.8l-4.2 3.1M95.8 56.8l-3.6 -2.9M95.8 56.8l-2.8 -5.7M95.8 56.8l3.2 -6.5M95.8 56.8l6.7 -0.4M95.8 56.8l4.3 4.3" stroke="#6e8a48" stroke-width="1.1" fill="none"/><path d="M39.8 99.5l-4.5 1.6M39.8 99.5l-5 -4.5M39.8 99.5l-0.9 -4.4M39.8 99.5l4.4 -3.1M39.8 99.5l4.8 1.9M39.8 99.5l4.7 5.4M39.8 99.5l-3.6 7.8" stroke="#5c7a3a" stroke-width="1.1" fill="none"/><path d="M44.9 23l3.5 4.2M44.9 23l-1.4 3.9M44.9 23l-8.2 -0.5M44.9 23l-4.8 -4M44.9 23l-1.9 -6.4M44.9 23l5.7 -5.7M44.9 23l5.4 0" stroke="#6e8a48" stroke-width="1.1" fill="none"/><path d="M69 45.4l-4.6 1.9M69 45.4l-5.8 -3.7M69 45.4l1.8 -5.4M69 45.4l3.8 -1.4M69 45.4l5 0.5M69 45.4l0.8 7M69 45.4l-2.3 7.1" stroke="#5c7a3a" stroke-width="1.1" fill="none"/><path d="M103.8 57.3l-0 4.1M103.8 57.3l-2.8 3.3M103.8 57.3l-8.4 1.2M103.8 57.3l-2.3 -3.5M103.8 57.3l0.3 -4.3M103.8 57.3l5.1 -2M103.8 57.3l7.7 3.1" stroke="#6e8a48" stroke-width="1.1" fill="none"/><path d="M47.3 55.1l-2.7 4.5M47.3 55.1l-8.2 0.9M47.3 55.1l-3.4 -4.1M47.3 55.1l0.3 -7.6M47.3 55.1l5.3 -1.6M47.3 55.1l4.9 1.6M47.3 55.1l1.8 6.4" stroke="#7c9650" stroke-width="1.1" fill="none"/><path d="M92.4 102.2l-4.4 1M92.4 102.2l-2.8 -3.2M92.4 102.2l-1.8 -7.1M92.4 102.2l6.8 -4.3M92.4 102.2l7.7 0.6M92.4 102.2l1.9 3.6M92.4 102.2l-4 6.1" stroke="#6e8a48" stroke-width="1.1" fill="none"/><path d="M52.3 54.6l1.5 7.2M52.3 54.6l-2.6 6.5M52.3 54.6l-6.5 1.5M52.3 54.6l-4.8 -3.7M52.3 54.6l-1 -5.5M52.3 54.6l4.9 -5.6M52.3 54.6l8.3 1.5" stroke="#7c9650" stroke-width="1.1" fill="none"/><path d="M69.6 22l-6.6 4M69.6 22l-6.9 -3.4M69.6 22l-0.5 -5.8M69.6 22l4.1 -6.5M69.6 22l8.1 0.4M69.6 22l6.3 3.8M69.6 22l-2 6.8" stroke="#5c7a3a" stroke-width="1.1" fill="none"/><path d="M75.4 43.3l-7.5 2.1M75.4 43.3l-2.4 -3.8M75.4 43.3l-0.5 -4M75.4 43.3l8 -2.6M75.4 43.3l5.1 3M75.4 43.3l1.2 7.2M75.4 43.3l-3.7 6.5" stroke="#5c7a3a" stroke-width="1.1" fill="none"/><path d="M42.1 43.1l-4.6 5.8M42.1 43.1l-7.4 -1.7M42.1 43.1l-2.3 -4.1M42.1 43.1l3.4 -8M42.1 43.1l4.8 -1M42.1 43.1l5.4 2.8M42.1 43.1l-0.4 4.1" stroke="#5c7a3a" stroke-width="1.1" fill="none"/><path d="M60.8 45.2l-4.8 2M60.8 45.2l-3.8 -3.2M60.8 45.2l1.2 -8.2M60.8 45.2l7.6 -3.5M60.8 45.2l7.7 3.9M60.8 45.2l2.7 6.6M60.8 45.2l-1.8 5.4" stroke="#7c9650" stroke-width="1.1" fill="none"/><path d="M74.2 102.9l6.5 0.2M74.2 102.9l3.7 5.6M74.2 102.9l-1.6 5.9M74.2 102.9l-5.2 2M74.2 102.9l-4.4 -3.6M74.2 102.9l0.6 -8.7M74.2 102.9l3.5 -2.9" stroke="#6e8a48" stroke-width="1.1" fill="none"/><path d="M97.7 99.3l-2.3 3.6M97.7 99.3l-7.9 1.5M97.7 99.3l-5.3 -5.5M97.7 99.3l2.3 -6.9M97.7 99.3l4.1 -3.3M97.7 99.3l7 4.3M97.7 99.3l2.3 7.4" stroke="#6e8a48" stroke-width="1.1" fill="none"/><path d="M90.7 88.7l-1.9 3.8M90.7 88.7l-4.8 0.7M90.7 88.7l-4.3 -2.5M90.7 88.7l-3.7 -8.1M90.7 88.7l5.7 -4.3M90.7 88.7l7.9 2.1M90.7 88.7l3.5 4.1" stroke="#6e8a48" stroke-width="1.1" fill="none"/><path d="M31.7 70.5l-0.1 5.9M31.7 70.5l-6 3.6M31.7 70.5l-4.3 -0.8M31.7 70.5l-1.8 -7.1M31.7 70.5l2.4 -7.3M31.7 70.5l4.3 -0.8M31.7 70.5l3.9 1.8" stroke="#7c9650" stroke-width="1.1" fill="none"/><path d="M83 38.5l-5.8 1M83 38.5l-4.9 -3.2M83 38.5l0.5 -5.6M83 38.5l4.3 -4.5M83 38.5l7.2 0.5M83 38.5l1.6 4.1M83 38.5l-4.2 6.4" stroke="#7c9650" stroke-width="1.1" fill="none"/><path d="M33.3 75.6l-8.4 0.8M33.3 75.6l-7.1 -4.2M33.3 75.6l-2.5 -6.8M33.3 75.6l4.3 -2.5M33.3 75.6l6.6 2M33.3 75.6l5.2 5.6M33.3 75.6l-2.5 4.3" stroke="#5c7a3a" stroke-width="1.1" fill="none"/><path d="M27.7 95.2l-4.4 4.4M27.7 95.2l-7.5 -3.8M27.7 95.2l-0.1 -4.1M27.7 95.2l3.7 -3.5M27.7 95.2l5.6 0.1M27.7 95.2l5.5 5.9M27.7 95.2l0.4 6.7" stroke="#6e8a48" stroke-width="1.1" fill="none"/><path d="M29 75.6l4.3 1.8M29 75.6l1.2 8.8M29 75.6l-4.9 2.2M29 75.6l-7.2 0.3M29 75.6l-3.1 -8.2M29 75.6l1.2 -7M29 75.6l7.4 -4.4" stroke="#6e8a48" stroke-width="1.1" fill="none"/><path d="M91.3 35.8l4.4 1.1M91.3 35.8l-0.1 4.9M91.3 35.8l-4.3 6.4M91.3 35.8l-5.7 -0.3M91.3 35.8l-2.5 -5.3M91.3 35.8l2.5 -3.9M91.3 35.8l5.8 -1.8" stroke="#6e8a48" stroke-width="1.1" fill="none"/><path d="M36.5 57.9l-2.3 4.2M36.5 57.9l-7.8 2.7M36.5 57.9l-6.6 -4.1M36.5 57.9l2.5 -8.5M36.5 57.9l5.2 -4M36.5 57.9l8.5 -0.6M36.5 57.9l4.8 6.1" stroke="#7c9650" stroke-width="1.1" fill="none"/><path d="M111.9 75.1l-4 4.6M111.9 75.1l-7.5 -0.7M111.9 75.1l-5.1 -7.2M111.9 75.1l0.4 -4.3M111.9 75.1l5.2 -3.7M111.9 75.1l3.9 2.3M111.9 75.1l3.1 6.2" stroke="#6e8a48" stroke-width="1.1" fill="none"/><path d="M58.6 72.5l3 4.4M58.6 72.5l-1.8 4.2M58.6 72.5l-4.9 4.1M58.6 72.5l-5.8 -4M58.6 72.5l-1.8 -3.9M58.6 72.5l3.1 -3.2M58.6 72.5l5 -0.1" stroke="#6e8a48" stroke-width="1.1" fill="none"/><path d="M62.4 51.4l1.3 5.5M62.4 51.4l-3.5 3.9M62.4 51.4l-7.7 1.9M62.4 51.4l-3.3 -4.3M62.4 51.4l0.8 -5.8M62.4 51.4l4.9 -4.7M62.4 51.4l4.3 1.9" stroke="#7c9650" stroke-width="1.1" fill="none"/><path d="M42.4 58.1l-6.3 0.5M42.4 58.1l-3.7 -3.4M42.4 58.1l0.6 -7.4M42.4 58.1l3.8 -2.9M42.4 58.1l5.7 4M42.4 58.1l1.6 5.6M42.4 58.1l-4.1 4.3" stroke="#7c9650" stroke-width="1.1" fill="none"/><path d="M63.7 24l2.9 7.3M63.7 24l-3.3 5M63.7 24l-6.7 0.1M63.7 24l-4.6 -7M63.7 24l-0.1 -8.3M63.7 24l3.5 -3.2M63.7 24l6.2 1.5" stroke="#7c9650" stroke-width="1.1" fill="none"/><path d="M102.1 48.5l-4.8 6.2M102.1 48.5l-5.7 0.8M102.1 48.5l-3.3 -7M102.1 48.5l-0.5 -6.3M102.1 48.5l3.1 -2.8M102.1 48.5l6.5 2.1M102.1 48.5l2.7 5.5" stroke="#6e8a48" stroke-width="1.1" fill="none"/><path d="M102 60.8l0.8 7.8M102 60.8l-3.7 6.3M102 60.8l-8.6 -0.4M102 60.8l-2.8 -3.4M102 60.8l4.5 -6.3M102 60.8l5.7 -0.6M102 60.8l5.4 6.2" stroke="#6e8a48" stroke-width="1.1" fill="none"/><path d="M40.2 106.2l-4.3 7.7M40.2 106.2l-7.5 3.3M40.2 106.2l-4.1 -0.7M40.2 106.2l-1.9 -6.4M40.2 106.2l2.9 -3M40.2 106.2l6.2 1.8M40.2 106.2l6 6.3" stroke="#6e8a48" stroke-width="1.1" fill="none"/><path d="M90.7 28.8l-1.3 4.7M90.7 28.8l-8 3.5M90.7 28.8l-5.7 -3.5M90.7 28.8l1 -7.6M90.7 28.8l5 -3.7M90.7 28.8l7.9 1.4M90.7 28.8l2.3 6.3" stroke="#5c7a3a" stroke-width="1.1" fill="none"/><path d="M17.9 47.1l-2.3 7M17.9 47.1l-4.5 2.1M17.9 47.1l-7.4 -4.5M17.9 47.1l-1.8 -6.3M17.9 47.1l3.3 -6.9M17.9 47.1l5.9 -2.3M17.9 47.1l5.1 7.2" stroke="#6e8a48" stroke-width="1.1" fill="none"/><path d="M27.6 43.5l-0.6 5.1M27.6 43.5l-3.1 2.8M27.6 43.5l-4.2 1M27.6 43.5l-4.4 -6.6M27.6 43.5l3.3 -6.1M27.6 43.5l7.7 -3.9M27.6 43.5l7 3.9" stroke="#6e8a48" stroke-width="1.1" fill="none"/><path d="M53.1 100.9l7.1 1.8M53.1 100.9l2.4 4.1M53.1 100.9l-1.6 8.4M53.1 100.9l-7.7 3.7M53.1 100.9l-6.5 -2.9M53.1 100.9l-0.3 -4.9M53.1 100.9l3.8 -2.8" stroke="#6e8a48" stroke-width="1.1" fill="none"/><path d="M30.8 32.5l-4.8 6.3M30.8 32.5l-4.6 2.4M30.8 32.5l-3.1 -3.5M30.8 32.5l1.1 -8.7M30.8 32.5l6.6 -4M30.8 32.5l7.3 0.6M30.8 32.5l2.1 8.7" stroke="#6e8a48" stroke-width="1.1" fill="none"/><path d="M50.3 84l-6.5 0.9M50.3 84l-4.9 -1.5M50.3 84l-1.5 -8.3M50.3 84l3.3 -6.1M50.3 84l5.1 0M50.3 84l1.9 4.9M50.3 84l-3 6" stroke="#7c9650" stroke-width="1.1" fill="none"/><path d="M48.2 94.9l-4.5 0.3M48.2 94.9l-4.7 -5.4M48.2 94.9l1.5 -8.3M48.2 94.9l4.7 -1.4M48.2 94.9l5.5 3.8M48.2 94.9l3.2 4.8M48.2 94.9l-4 6.1" stroke="#6e8a48" stroke-width="1.1" fill="none"/><path d="M39.5 61.5l5.4 3.8M39.5 61.5l-2.2 7.2M39.5 61.5l-4.6 4.3M39.5 61.5l-5.6 -0.6M39.5 61.5l-1.6 -7.9M39.5 61.5l3.6 -5.9M39.5 61.5l4.8 -0.5" stroke="#6e8a48" stroke-width="1.1" fill="none"/><path d="M109.5 39.4l4.4 3.3M109.5 39.4l1.1 4.8M109.5 39.4l-7.6 4.4M109.5 39.4l-6.5 0.6M109.5 39.4l-2.4 -3.2M109.5 39.4l4.5 -6.6M109.5 39.4l5.6 -4" stroke="#5c7a3a" stroke-width="1.1" fill="none"/><path d="M38.3 28.7l-0.8 4.3M38.3 28.7l-3.8 2.3M38.3 28.7l-4.4 -2.6M38.3 28.7l-0.9 -5.8M38.3 28.7l7.2 -4.8M38.3 28.7l5.6 1.6M38.3 28.7l6.1 5.5" stroke="#7c9650" stroke-width="1.1" fill="none"/><path d="M110.4 60.8l-7.1 3.1M110.4 60.8l-7.9 -0.8M110.4 60.8l-2 -7.1M110.4 60.8l4.9 -5.5M110.4 60.8l5 0.7M110.4 60.8l5.7 4.4M110.4 60.8l-1.2 6.8" stroke="#5c7a3a" stroke-width="1.1" fill="none"/><path d="M44.8 19.7l-3.8 1.8M44.8 19.7l-6.9 -2.7M44.8 19.7l-1.9 -7M44.8 19.7l2.2 -4.2M44.8 19.7l4.7 1.6M44.8 19.7l2.5 4.7M44.8 19.7l-3.3 5.5" stroke="#7c9650" stroke-width="1.1" fill="none"/><path d="M88.9 60.3l-3.7 7.9M88.9 60.3l-7 4.8M88.9 60.3l-3.7 -1.6M88.9 60.3l0.2 -7.2M88.9 60.3l4.6 -5.3M88.9 60.3l5.1 -0.1M88.9 60.3l4.5 6.8" stroke="#6e8a48" stroke-width="1.1" fill="none"/><path d="M76.4 62.8l5.4 6.6M76.4 62.8l-4.8 7.2M76.4 62.8l-6 0.7M76.4 62.8l-4.8 -4.5M76.4 62.8l-0.5 -7.2M76.4 62.8l3.2 -2.7M76.4 62.8l7.2 2.7" stroke="#6e8a48" stroke-width="1.1" fill="none"/><path d="M69.4 74.3l6 1.6M69.4 74.3l6.1 6.5M69.4 74.3l-1 4.8M69.4 74.3l-4.3 3.4M69.4 74.3l-4.2 -1.1M69.4 74.3l-0.5 -7.9M69.4 74.3l3.9 -6.2" stroke="#6e8a48" stroke-width="1.1" fill="none"/><path d="M47.8 62.7l7 2.5M47.8 62.7l2.1 5.7M47.8 62.7l-1.3 4.8M47.8 62.7l-6.3 2.6M47.8 62.7l-4.2 -3.9M47.8 62.7l-0.2 -6.9M47.8 62.7l7.5 -2.5" stroke="#6e8a48" stroke-width="1.1" fill="none"/><path d="M22.5 80.2l-5.3 2M22.5 80.2l-4.8 -2.8M22.5 80.2l-0.3 -5.5M22.5 80.2l6.7 -5.2M22.5 80.2l7.6 -1.2M22.5 80.2l3.9 5.6M22.5 80.2l0.3 4.2" stroke="#7c9650" stroke-width="1.1" fill="none"/><path d="M34.2 97.7l-2.5 6.6M34.2 97.7l-4.7 0.7M34.2 97.7l-6.4 -3.8M34.2 97.7l-0.2 -5.7M34.2 97.7l4.2 -2.8M34.2 97.7l6.1 1.9M34.2 97.7l6 5.3" stroke="#6e8a48" stroke-width="1.1" fill="none"/><path d="M40.5 82.7l5.8 0.6M40.5 82.7l5.4 5.3M40.5 82.7l-4.8 7.6M40.5 82.7l-5.7 3.3M40.5 82.7l-7.1 -3.3M40.5 82.7l-0.8 -7.2M40.5 82.7l5.5 -5.1" stroke="#5c7a3a" stroke-width="1.1" fill="none"/><path d="M20.1 63.3l2.5 3.8M20.1 63.3l-2 5.8M20.1 63.3l-5.5 5.2M20.1 63.3l-6.2 -1.3M20.1 63.3l-1.3 -5.6M20.1 63.3l3.9 -6.1M20.1 63.3l7.9 -3.1" stroke="#6e8a48" stroke-width="1.1" fill="none"/><path d="M78.6 39.7l-5.9 4.1M78.6 39.7l-5.5 -2.7M78.6 39.7l-2.6 -4.3M78.6 39.7l5 -7.4M78.6 39.7l8.6 1M78.6 39.7l4.3 4.4M78.6 39.7l0.1 5.6" stroke="#6e8a48" stroke-width="1.1" fill="none"/><path d="M84.4 84.5l5.1 7.1M84.4 84.5l-1.8 5.2M84.4 84.5l-6.7 4.2M84.4 84.5l-5 -2.6M84.4 84.5l-0.5 -4.4M84.4 84.5l3.1 -8M84.4 84.5l6.5 -2.6" stroke="#7c9650" stroke-width="1.1" fill="none"/><path d="M45 88.6l5.4 0.8M45 88.6l3.8 4.2M45 88.6l-3.4 6.3M45 88.6l-4 1.7M45 88.6l-5.7 -3.3M45 88.6l1.2 -7M45 88.6l4.6 -4.8" stroke="#6e8a48" stroke-width="1.1" fill="none"/><path d="M54 43.9l0.1 5.2M54 43.9l-2.4 4.5M54 43.9l-5.5 0.1M54 43.9l-1.5 -4.4M54 43.9l0.4 -7.4M54 43.9l4 -2.7M54 43.9l5.8 4.3" stroke="#6e8a48" stroke-width="1.1" fill="none"/><path d="M50.2 24.6l-1.4 5.1M50.2 24.6l-7.7 3.4M50.2 24.6l-7.1 -3.3M50.2 24.6l-2 -6M50.2 24.6l3 -5.4M50.2 24.6l5.4 -1.2M50.2 24.6l3.2 5.1" stroke="#7c9650" stroke-width="1.1" fill="none"/><path d="M46.2 78.9l-3.9 4.8M46.2 78.9l-7.1 -2.7M46.2 78.9l-1.2 -5.1M46.2 78.9l3.6 -5.2M46.2 78.9l5.7 0.6M46.2 78.9l5.9 5.3M46.2 78.9l-0.3 4.6" stroke="#6e8a48" stroke-width="1.1" fill="none"/><path d="M87.9 62.7l4.5 7.8M87.9 62.7l-2.2 3.6M87.9 62.7l-5.4 -0.8M87.9 62.7l-3.3 -4.5M87.9 62.7l0.2 -6.8M87.9 62.7l6.2 -2.1M87.9 62.7l5.9 1.3" stroke="#6e8a48" stroke-width="1.1" fill="none"/><path d="M27.5 86.7l-0.6 5.9M27.5 86.7l-4.4 3.8M27.5 86.7l-4.4 -1.4M27.5 86.7l-5.2 -5.1M27.5 86.7l2.5 -3.6M27.5 86.7l4.3 -2.2M27.5 86.7l4.9 2.4" stroke="#7c9650" stroke-width="1.1" fill="none"/><path d="M84.9 85.1l-7.2 0.9M84.9 85.1l-4.6 -2.6M84.9 85.1l1.2 -7.3M84.9 85.1l7.6 -2.9M84.9 85.1l6.4 0.1M84.9 85.1l2.9 6.6M84.9 85.1l-3.8 5.7" stroke="#7c9650" stroke-width="1.1" fill="none"/><path d="M40.3 54.1l-4.8 1.5M40.3 54.1l-5.6 -6.2M40.3 54.1l0.7 -6.2M40.3 54.1l7.7 -2.4M40.3 54.1l5 1.5M40.3 54.1l2.5 5.4M40.3 54.1l-1.4 4.7" stroke="#6e8a48" stroke-width="1.1" fill="none"/><path d="M87.3 21.7l-7.3 -1.2M87.3 21.7l-4.6 -5.8M87.3 21.7l-0.6 -4.8M87.3 21.7l7.8 -3.5M87.3 21.7l5.7 0.3M87.3 21.7l1.9 6.1M87.3 21.7l-3.7 6.2" stroke="#6e8a48" stroke-width="1.1" fill="none"/><path d="M31.4 40.4l-1 8.3M31.4 40.4l-4.6 1.8M31.4 40.4l-3.3 -2.7M31.4 40.4l0.3 -5.2M31.4 40.4l4 -5.6M31.4 40.4l5.1 0.4M31.4 40.4l3.9 7.9" stroke="#6e8a48" stroke-width="1.1" fill="none"/><path d="M73.8 96.2l4.9 5.8M73.8 96.2l1 6.7M73.8 96.2l-7.5 4M73.8 96.2l-8.7 -0.8M73.8 96.2l-0.7 -6.9M73.8 96.2l3.1 -3.5M73.8 96.2l6.4 -1.4" stroke="#5c7a3a" stroke-width="1.1" fill="none"/><path d="M26.1 49.3l5.4 2M26.1 49.3l1.6 5.4M26.1 49.3l-2.3 6.8M26.1 49.3l-6.5 -0M26.1 49.3l-7 -5M26.1 49.3l0.7 -4.1M26.1 49.3l4.4 -2.4" stroke="#6e8a48" stroke-width="1.1" fill="none"/><path d="M79.8 70.2l-7 3.1M79.8 70.2l-6.1 -2.4M79.8 70.2l1.6 -6M79.8 70.2l3.5 -4.4M79.8 70.2l7.5 2.1M79.8 70.2l3.7 6.2M79.8 70.2l-2.4 5" stroke="#5c7a3a" stroke-width="1.1" fill="none"/><path d="M66.4 33.4l5.5 2.4M66.4 33.4l-1.6 3.8M66.4 33.4l-5.1 -0.2M66.4 33.4l-3 -3.8M66.4 33.4l3.7 -3.6" stroke="#1e8a14" stroke-width="1.2" fill="none"/><path d="M63.3 83l-2.3 5M63.3 83l-2.9 -1.3M63.3 83l-0 -3.7M63.3 83l3.4 -1.1M63.3 83l3.1 3.8" stroke="#1e8a14" stroke-width="1.2" fill="none"/><path d="M94.8 89.3l3.8 1.6M94.8 89.3l-1 4.8M94.8 89.3l-5.3 0.7M94.8 89.3l-1 -4.5M94.8 89.3l3.7 -1.7" stroke="#1e8a14" stroke-width="1.2" fill="none"/><path d="M52.1 75.7l-1.9 4.4M52.1 75.7l-3.7 0.5M52.1 75.7l-2.5 -3.6M52.1 75.7l2.7 -5.3M52.1 75.7l4.8 0.8" stroke="#1e8a14" stroke-width="1.2" fill="none"/><path d="M39.7 43.1l1.4 3.9M39.7 43.1l-3.2 5M39.7 43.1l-3.4 -2.4M39.7 43.1l0.7 -3.3M39.7 43.1l3.8 -0.2" stroke="#1e8a14" stroke-width="1.2" fill="none"/><path d="M27.1 85.8l5.6 1.3M27.1 85.8l1.2 4.9M27.1 85.8l-2.9 2.6M27.1 85.8l-3.5 -4.7M27.1 85.8l0.6 -5.8" stroke="#1e8a14" stroke-width="1.2" fill="none"/><path d="M76.7 64.9l-1.2 3.5M76.7 64.9l-4.7 1.5M76.7 64.9l-2.7 -4.5M76.7 64.9l4.8 -2.7M76.7 64.9l3 1.3" stroke="#1e8a14" stroke-width="1.2" fill="none"/><path d="M66.3 75.9l0.1 5.3M66.3 75.9l-4.3 0.5M66.3 75.9l-1.3 -3.2M66.3 75.9l3.2 -2.6M66.3 75.9l3.1 0.4" stroke="#1e8a14" stroke-width="1.2" fill="none"/><path d="M33.9 85.4l-4.2 2.1M33.9 85.4l-2 -2.5M33.9 85.4l1.6 -5.1M33.9 85.4l5.7 1.1M33.9 85.4l2.1 5" stroke="#1e8a14" stroke-width="1.2" fill="none"/><path d="M57.9 44.4l2.9 2.1M57.9 44.4l-1.2 5.3M57.9 44.4l-3 0.7M57.9 44.4l-2.6 -3.1M57.9 44.4l2.6 -3" stroke="#1e8a14" stroke-width="1.2" fill="none"/><path d="M43.5 81.8l-3.2 0.7M43.5 81.8l-0.9 -3.4M43.5 81.8l3.7 -3.7M43.5 81.8l5.1 1.8M43.5 81.8l-0.2 5.6" stroke="#1e8a14" stroke-width="1.2" fill="none"/><path d="M40.6 92.5l1.9 3.1M40.6 92.5l-1.5 3.5M40.6 92.5l-4.2 -2.4M40.6 92.5l-0.5 -5.6M40.6 92.5l4.3 -2.3" stroke="#1e8a14" stroke-width="1.2" fill="none"/><path d="M85.8 84.9l2.5 2.4M85.8 84.9l-1.3 5.3M85.8 84.9l-3.5 0.1M85.8 84.9l-0.5 -3.4M85.8 84.9l3.4 -2.2" stroke="#1e8a14" stroke-width="1.2" fill="none"/><path d="M37 90.8l1 5.8M37 90.8l-2.9 3.2M37 90.8l-5.4 -1.6M37 90.8l-0.4 -5.1M37 90.8l4.3 -0.4" stroke="#1e8a14" stroke-width="1.2" fill="none"/><path d="M77.3 94.1l1.3 4.8M77.3 94.1l-3.2 2.5M77.3 94.1l-2.3 -3.1M77.3 94.1l0.2 -3.5M77.3 94.1l4.2 0.8" stroke="#1e8a14" stroke-width="1.2" fill="none"/><path d="M15.8 52.9l4 3.3M15.8 52.9l-1.9 4.3M15.8 52.9l-3.6 0.9M15.8 52.9l-1.6 -3.1M15.8 52.9l3.4 -4" stroke="#1e8a14" stroke-width="1.2" fill="none"/><path d="M43.1 98.2l-1 2.9M43.1 98.2l-4.5 -0.5M43.1 98.2l0 -5.4M43.1 98.2l3.8 -3.7M43.1 98.2l2.6 2.7" stroke="#1e8a14" stroke-width="1.2" fill="none"/><path d="M85 67.8l0.5 4.4M85 67.8l-4.9 1.7M85 67.8l-2.5 -3.3M85 67.8l4 -4.4M85 67.8l5.4 -0.1" stroke="#1e8a14" stroke-width="1.2" fill="none"/><path d="M75.5 50l-2.5 3.4M75.5 50l-4.3 -0.9M75.5 50l-1.2 -4M75.5 50l4.8 -1.1M75.5 50l2.9 3.1" stroke="#1e8a14" stroke-width="1.2" fill="none"/><path d="M81.2 99.5l-2.4 2.8M81.2 99.5l-5.8 -0.5M81.2 99.5l-1.6 -5.2M81.2 99.5l4.2 -1M81.2 99.5l2.2 4.3" stroke="#1e8a14" stroke-width="1.2" fill="none"/><path d="M19.9 55.8l-5.4 0.9M19.9 55.8l-2.6 -4.3M19.9 55.8l4.3 -4.2M19.9 55.8l4.7 0.3M19.9 55.8l1 4.4" stroke="#1e8a14" stroke-width="1.2" fill="none"/><path d="M28.3 84.6l-4 0.6M28.3 84.6l-2.1 -3.2M28.3 84.6l3.8 -2.4M28.3 84.6l4.1 1.3M28.3 84.6l0.2 5.5" stroke="#1e8a14" stroke-width="1.2" fill="none"/><path d="M65.5 63 L66.9 70.9 L67 78.9 L68.3 86.8 L69.6 94.7 L69.6 102.7" stroke="#8a7050" stroke-width="1.6" fill="none" stroke-linecap="round"/><path d="M68.3 86.8l9.1 10.7" stroke="#8a7050" stroke-width="1.1199999999999999" fill="none"/><path d="M68.3 86.8l-9 10.7" stroke="#8a7050" stroke-width="1.1199999999999999" fill="none"/><path d="M65.5 63 L59.8 68.7 L53.2 73.2 L48.3 79.5 L43.6 86 L37.6 91.2" stroke="#8a7050" stroke-width="1.6" fill="none" stroke-linecap="round"/><path d="M48.3 79.5l-2.1 13.8" stroke="#8a7050" stroke-width="1.1199999999999999" fill="none"/><path d="M48.3 79.5l-14 0.3" stroke="#8a7050" stroke-width="1.1199999999999999" fill="none"/><path d="M65.5 63 L58.1 60.1 L50.7 56.9 L42.7 56.4 L34.8 56.9 L26.8 57.5" stroke="#8a7050" stroke-width="1.6" fill="none" stroke-linecap="round"/><path d="M42.7 56.4l-10.1 9.7" stroke="#8a7050" stroke-width="1.1199999999999999" fill="none"/><path d="M42.7 56.4l-11.3 -8.3" stroke="#8a7050" stroke-width="1.1199999999999999" fill="none"/><path d="M65.5 63 L64.2 55.1 L64 47.1 L62.7 39.2 L58.6 32.4 L56.1 24.8" stroke="#8a7050" stroke-width="1.6" fill="none" stroke-linecap="round"/><path d="M62.7 39.2l-11.9 -7.3" stroke="#8a7050" stroke-width="1.1199999999999999" fill="none"/><path d="M62.7 39.2l5.2 -13" stroke="#8a7050" stroke-width="1.1199999999999999" fill="none"/><path d="M65.5 63 L70.8 57 L75.3 50.4 L81 44.8 L87.2 39.8 L94.2 35.8" stroke="#8a7050" stroke-width="1.6" fill="none" stroke-linecap="round"/><path d="M81 44.8l4.9 -13.1" stroke="#8a7050" stroke-width="1.1199999999999999" fill="none"/><path d="M81 44.8l13.8 2.6" stroke="#8a7050" stroke-width="1.1199999999999999" fill="none"/><path d="M65.5 63 L73.5 63.2 L81 66.1 L89 65.9 L96.9 64.6 L103.9 60.8" stroke="#8a7050" stroke-width="1.6" fill="none" stroke-linecap="round"/><path d="M89 65.9l5.2 -13" stroke="#8a7050" stroke-width="1.1199999999999999" fill="none"/><path d="M89 65.9l13.7 2.9" stroke="#8a7050" stroke-width="1.1199999999999999" fill="none"/><path d="M65.5 63 L71.2 68.6 L78.1 72.7 L84.3 77.8 L91.9 80.1 L99.6 82.4" stroke="#8a7050" stroke-width="1.6" fill="none" stroke-linecap="round"/><path d="M84.3 77.8l12.8 -5.6" stroke="#8a7050" stroke-width="1.1199999999999999" fill="none"/><path d="M84.3 77.8l7.7 11.7" stroke="#8a7050" stroke-width="1.1199999999999999" fill="none"/><path d="M27.4 43.2l-3.2 1.1M27.4 43.2l-4.2 -4.1M27.4 43.2l1.5 -4.4M27.4 43.2l7.1 0.5M27.4 43.2l4.1 5.9M27.4 43.2l-1.4 4.6" stroke="#f8c428" stroke-width="1.5" fill="none"/><path d="M51.7 32.4l-5.7 0.3M51.7 32.4l-4.1 -5.1M51.7 32.4l2.2 -6.7M51.7 32.4l4.8 0.4M51.7 32.4l3.1 3.8M51.7 32.4l-2.6 6" stroke="#e8a818" stroke-width="1.5" fill="none"/><path d="M109.5 82.7l-3 4.2M109.5 82.7l-6.6 1M109.5 82.7l-2.5 -5.8M109.5 82.7l1.8 -4.2M109.5 82.7l5.2 -2M109.5 82.7l4 6.4" stroke="#f8c428" stroke-width="1.5" fill="none"/><path d="M80.8 75.9l-7.2 0.5M80.8 75.9l-3.3 -5.1M80.8 75.9l1.6 -3.7M80.8 75.9l7.5 0M80.8 75.9l2.6 4.2M80.8 75.9l-2.1 7" stroke="#f0b41c" stroke-width="1.5" fill="none"/><path d="M22.2 80.5l3 3.1M22.2 80.5l0.5 7M22.2 80.5l-5.8 4.1M22.2 80.5l-2.6 -1.7M22.2 80.5l0.7 -4.1M22.2 80.5l6.4 -0.4" stroke="#e8a818" stroke-width="1.5" fill="none"/><path d="M87.4 79.2l-6.5 0M87.4 79.2l-5.8 -4.9M87.4 79.2l1.7 -2.8M87.4 79.2l5.1 -0.9M87.4 79.2l4.3 3M87.4 79.2l-3.4 6.2" stroke="#f0b41c" stroke-width="1.5" fill="none"/><path d="M50 58l-1 3.2M50 58l-3.6 0.9M50 58l-5.6 -3.4M50 58l0.8 -5.3M50 58l4.6 -3.4M50 58l2.8 2" stroke="#f0b41c" stroke-width="1.5" fill="none"/><path d="M84 74.4l-4.3 1.9M84 74.4l-3.5 -0.6M84 74.4l1 -5M84 74.4l2.4 -2.1M84 74.4l6.2 4.9M84 74.4l0.8 3.1" stroke="#f8c428" stroke-width="1.5" fill="none"/><path d="M107.9 60l-3.9 6.8M107.9 60l-6.6 -0.7M107.9 60l-1.9 -4.1M107.9 60l2 -6.2M107.9 60l5.8 -0.8M107.9 60l5.2 6" stroke="#f0b41c" stroke-width="1.5" fill="none"/><path d="M23.8 65.6l5.2 5.1M23.8 65.6l-3.4 4.9M23.8 65.6l-3.5 0.8M23.8 65.6l-2.6 -4.4M23.8 65.6l1 -5.8M23.8 65.6l6.4 0.7" stroke="#e8a818" stroke-width="1.5" fill="none"/><path d="M68.9 44.3l6.1 0M68.9 44.3l2.4 4M68.9 44.3l-2 3.8M68.9 44.3l-4.9 -0.5M68.9 44.3l-3.8 -6.7M68.9 44.3l1 -4" stroke="#f0b41c" stroke-width="1.5" fill="none"/><path d="M67.6 83.9l-0.6 3.3M67.6 83.9l-3.6 0.7M67.6 83.9l-4 -3.8M67.6 83.9l2.3 -4.3M67.6 83.9l3.5 -0.5M67.6 83.9l2.5 2.3" stroke="#e8a818" stroke-width="1.5" fill="none"/><path d="M32.4 81.2l-1.4 7.7M32.4 81.2l-6.7 3.6M32.4 81.2l-3.9 -2.1M32.4 81.2l-1 -3.4M32.4 81.2l3.5 -3.1M32.4 81.2l2.7 2.4" stroke="#f0b41c" stroke-width="1.5" fill="none"/><path d="M43 42.7l-6.2 3M43 42.7l-2.8 -2.5M43 42.7l2.8 -5.9M43 42.7l6.2 -3M43 42.7l5.2 2.6M43 42.7l-0.6 5.3" stroke="#f0b41c" stroke-width="1.5" fill="none"/><path d="M86.3 48.5l-4.5 0.3M86.3 48.5l-5 -5.7M86.3 48.5l2.1 -7.6M86.3 48.5l4.4 0.5M86.3 48.5l3.3 4.8M86.3 48.5l-1.4 3" stroke="#e8a818" stroke-width="1.5" fill="none"/><path d="M67.8 103.8l5.2 1.3M67.8 103.8l2.3 4.1M67.8 103.8l-2.7 4.5M67.8 103.8l-5.6 -1.2M67.8 103.8l0 -4.6M67.8 103.8l2.8 -3.5" stroke="#f0b41c" stroke-width="1.5" fill="none"/><path d="M21.7 84.7l-3.2 5.1M21.7 84.7l-4.7 0.2M21.7 84.7l-2.8 -3.7M21.7 84.7l0.3 -3M21.7 84.7l3.6 -0.8M21.7 84.7l4.1 3.2" stroke="#f8c428" stroke-width="1.5" fill="none"/><path d="M54.4 28.7l-5.2 5.9M54.4 28.7l-5.5 -3.3M54.4 28.7l-0.6 -6.1M54.4 28.7l4.6 -2.5M54.4 28.7l6.1 3.9M54.4 28.7l0.7 5.3" stroke="#f0b41c" stroke-width="1.5" fill="none"/><path d="M62.4 111.9l-5.9 2.5M62.4 111.9l-3.9 -4.9M62.4 111.9l0.4 -7.4M62.4 111.9l6.1 -4.5M62.4 111.9l4.5 4.7M62.4 111.9l-0.5 5.1" stroke="#e8a818" stroke-width="1.5" fill="none"/><path d="M101.9 58.4l-2 3.9M101.9 58.4l-5.7 0.8M101.9 58.4l-4.8 -6M101.9 58.4l2.2 -4.7M101.9 58.4l5 -1.7M101.9 58.4l3.3 2.4" stroke="#f8c428" stroke-width="1.5" fill="none"/><path d="M81.2 48.9l2.4 5.2M81.2 48.9l-6.2 3.7M81.2 48.9l-7 -2.7M81.2 48.9l-1.6 -3.9M81.2 48.9l5.1 -5.4M81.2 48.9l4.5 0.5" stroke="#e8a818" stroke-width="1.5" fill="none"/><path d="M91.6 67.1l-4.1 5.3M91.6 67.1l-5.6 -1.1M91.6 67.1l0.4 -5.9M91.6 67.1l4.4 -2.4M91.6 67.1l4.9 0.6M91.6 67.1l-0.2 3" stroke="#f8c428" stroke-width="1.5" fill="none"/><path d="M30.9 63.5l-0.3 5.2M30.9 63.5l-3.9 2.3M30.9 63.5l-3.3 -2.7M30.9 63.5l1.3 -3.2M30.9 63.5l4 -1.8M30.9 63.5l4.1 1.9" stroke="#f8c428" stroke-width="1.5" fill="none"/><path d="M110.6 68.4l6.5 0.2M110.6 68.4l2.6 6.5M110.6 68.4l-3.7 2.6M110.6 68.4l-7.5 0.5M110.6 68.4l-2.8 -4.3M110.6 68.4l4.5 -4.5" stroke="#f0b41c" stroke-width="1.5" fill="none"/><path d="M36.7 53.8l-5 0M36.7 53.8l-4.4 -6.1M36.7 53.8l1 -5.1M36.7 53.8l6 -1.1M36.7 53.8l3 3M36.7 53.8l-1.6 5.9" stroke="#e8a818" stroke-width="1.5" fill="none"/><path d="M84.1 106.5l4.1 -0.2M84.1 106.5l1.6 4.8M84.1 106.5l-5 6.1M84.1 106.5l-3.7 0.4M84.1 106.5l-0.9 -3.4M84.1 106.5l1.9 -2.4" stroke="#e8a818" stroke-width="1.5" fill="none"/><path d="M43.2 30.5l3.7 5.6M43.2 30.5l-0.4 6.8M43.2 30.5l-5.5 2.6M43.2 30.5l-2.6 -1.8M43.2 30.5l1.7 -4.1M43.2 30.5l6.9 -1.1" stroke="#f0b41c" stroke-width="1.5" fill="none"/><path d="M81.3 100.1l-1 7.5M81.3 100.1l-4.4 1.4M81.3 100.1l-5.4 -2.6M81.3 100.1l0.8 -3.7M81.3 100.1l6 -0.9M81.3 100.1l3.1 3.4" stroke="#f8c428" stroke-width="1.5" fill="none"/><path d="M88.6 43.2l5.2 0.2M88.6 43.2l3.5 7M88.6 43.2l-1.6 3.6M88.6 43.2l-4.9 0.1M88.6 43.2l-1.3 -5.5M88.6 43.2l2.8 -2.6" stroke="#f0b41c" stroke-width="1.5" fill="none"/><path d="M50.4 24.5l-1.8 6.2M50.4 24.5l-3.9 0.7M50.4 24.5l-2 -6.3M50.4 24.5l2.2 -6.7M50.4 24.5l6.2 -1M50.4 24.5l3 4.5" stroke="#f8c428" stroke-width="1.5" fill="none"/><path d="M72.7 74.5l-2.3 5.9M72.7 74.5l-6.2 4.3M72.7 74.5l-3.2 -3.2M72.7 74.5l1 -6M72.7 74.5l4.4 -1.3M72.7 74.5l4 3.6" stroke="#f8c428" stroke-width="1.5" fill="none"/><path d="M50.4 95.4l-6 2.2M50.4 95.4l-4 -4.5M50.4 95.4l1.1 -6.4M50.4 95.4l5.3 -3.4M50.4 95.4l5.9 4.7M50.4 95.4l-1.5 3.4" stroke="#e8a818" stroke-width="1.5" fill="none"/><path d="M26.3 57.7l-6.7 3.5M26.3 57.7l-4.9 -4.5M26.3 57.7l0.4 -6M26.3 57.7l3.7 -0.6M26.3 57.7l2.6 3.1M26.3 57.7l-2.6 3.9" stroke="#e8a818" stroke-width="1.5" fill="none"/><path d="M18.9 61.3l-1.6 4.3M18.9 61.3l-4.2 1.5M18.9 61.3l-2.7 -1.7M18.9 61.3l0.2 -3.6M18.9 61.3l5.7 -1.7M18.9 61.3l4.5 6" stroke="#e8a818" stroke-width="1.5" fill="none"/><path d="M48.4 70.3l-4.4 4.4M48.4 70.3l-5.6 -1.4M48.4 70.3l-0.5 -3.8M48.4 70.3l3.8 -3.5M48.4 70.3l6 1.6M48.4 70.3l1.3 6.2" stroke="#e8a818" stroke-width="1.5" fill="none"/><path d="M28 37l-1 6.1M28 37l-4.5 1.7M28 37l-7.2 -2.8M28 37l1 -5.7M28 37l6.9 -2.6M28 37l2.8 1.9" stroke="#f8c428" stroke-width="1.5" fill="none"/><path d="M49.9 105.4l4 5.4M49.9 105.4l-0.5 4.9M49.9 105.4l-5.2 2.5M49.9 105.4l-4.4 -4.1M49.9 105.4l1.2 -3.1M49.9 105.4l5.2 -2.2" stroke="#e8a818" stroke-width="1.5" fill="none"/><path d="M103.9 49.9l-5 3.8M103.9 49.9l-6.7 -3M103.9 49.9l-0.3 -4.7M103.9 49.9l2.5 -3.6M103.9 49.9l3.9 1.3M103.9 49.9l-0 4.6" stroke="#f8c428" stroke-width="1.5" fill="none"/></g><g id="t60"><path d="M108.2 63 L106.7 66.7 L104.4 70 L106.3 74.2 L105.7 78.1 L100.7 80 L101.3 84.7 L98.3 87.4 L97.7 92.2 L91.9 92.2 L87 92.5 L84.2 95.1 L81.4 98.3 L77.5 99.8 L72.5 96.9 L69.2 101.3 L65 100.8 L61 98.9 L56.8 99.9 L52.7 99.2 L48 99.6 L45.3 95.9 L41.7 94.1 L38.4 92 L35.3 89.5 L33.8 85.8 L32.8 82.2 L28.1 80.6 L25.2 77.7 L26.7 73.4 L25.6 70 L21.3 66.8 L22.8 63 L21.5 59.2 L22.1 55.4 L26.9 52.7 L22.4 47.3 L30 46.3 L29.9 42 L34.6 40.7 L34.4 35.7 L38.7 34.4 L42.4 32.7 L44.6 28.9 L47.8 25.8 L53.7 29.8 L56.9 26.4 L61.2 28.2 L65 25.1 L69 26.7 L72.9 27.6 L77.1 27.3 L83 24.3 L85.3 29.1 L88.2 32 L92.5 33.1 L95 36.2 L98 38.8 L101.7 41.1 L103.7 44.5 L105.9 47.9 L105.2 52.1 L105 55.9 L105.9 59.4Z" stroke="#1e8a1e" stroke-width="1.1" fill="none"/><path d="M65.2 61.8L96.1 69.7" stroke="#9a7a5a" stroke-width="1"/><path d="M64.8 64.2L95.7 72.1" stroke="#9a7a5a" stroke-width="1"/><path d="M65.9 62.2L80.5 82.6" stroke="#9a7a5a" stroke-width="1"/><path d="M64.1 63.8L78.7 84.2" stroke="#9a7a5a" stroke-width="1"/><path d="M66.2 63L63.9 93.7" stroke="#9a7a5a" stroke-width="1"/><path d="M63.8 63L61.5 93.8" stroke="#9a7a5a" stroke-width="1"/><path d="M65.9 63.7L47.9 82.2" stroke="#9a7a5a" stroke-width="1"/><path d="M64.1 62.3L46 80.7" stroke="#9a7a5a" stroke-width="1"/><path d="M65.2 64.2L36.9 67" stroke="#9a7a5a" stroke-width="1"/><path d="M64.8 61.8L36.5 64.6" stroke="#9a7a5a" stroke-width="1"/><path d="M64.4 64.1L41 48" stroke="#9a7a5a" stroke-width="1"/><path d="M65.6 61.9L42.1 45.9" stroke="#9a7a5a" stroke-width="1"/><path d="M63.9 63.4L57.3 40" stroke="#9a7a5a" stroke-width="1"/><path d="M66.1 62.6L59.5 39.1" stroke="#9a7a5a" stroke-width="1"/><path d="M63.9 62.6L75.3 37.2" stroke="#9a7a5a" stroke-width="1"/><path d="M66.1 63.4L77.6 38" stroke="#9a7a5a" stroke-width="1"/><path d="M64.4 62L86.1 51.5" stroke="#9a7a5a" stroke-width="1"/><path d="M65.6 64L87.4 53.6" stroke="#9a7a5a" stroke-width="1"/><path d="M65 63l27.5 15" stroke="#2a9a2a" stroke-width="1.6"/><path d="M65 63l11.4 29.1" stroke="#2a9a2a" stroke-width="1.6"/><path d="M65 63l-8.6 25.5" stroke="#2a9a2a" stroke-width="1.6"/><path d="M65 63l-25 15.2" stroke="#2a9a2a" stroke-width="1.6"/><path d="M65 63l-28.4 -4.3" stroke="#2a9a2a" stroke-width="1.6"/><path d="M65 63l-14.9 -16.9" stroke="#2a9a2a" stroke-width="1.6"/><path d="M65 63l-0.5 -20.8" stroke="#2a9a2a" stroke-width="1.6"/><path d="M65 63l15.3 -19.1" stroke="#2a9a2a" stroke-width="1.6"/><path d="M65 63l24.6 -4.9" stroke="#2a9a2a" stroke-width="1.6"/><circle cx="65" cy="63" r="3" fill="#2a9a2a"/><circle cx="64.5" cy="74.4" r="2.7" fill="#561650"/><circle cx="82.2" cy="67.2" r="2.7" fill="#561650"/><circle cx="73.4" cy="88.7" r="2.7" fill="#561650"/><circle cx="63.4" cy="52.4" r="2.7" fill="#561650"/><circle cx="89.3" cy="49.1" r="2.7" fill="#561650"/><circle cx="47.3" cy="66.4" r="2.7" fill="#561650"/><circle cx="74.7" cy="41.1" r="2.7" fill="#561650"/><circle cx="45.5" cy="51" r="2.7" fill="#561650"/><circle cx="36.7" cy="65.2" r="2.7" fill="#561650"/><circle cx="91.7" cy="58.8" r="2.7" fill="#561650"/><circle cx="56" cy="80.9" r="2.7" fill="#561650"/><circle cx="69.3" cy="33.3" r="2.7" fill="#561650"/><circle cx="78.1" cy="59" r="2.7" fill="#561650"/><circle cx="84.6" cy="40.2" r="3.2" fill="#f02020"/><path d="M83.1 38.7l3 3M86.1 38.7l-3 3" stroke="#801010" stroke-width="0.8"/><circle cx="94.1" cy="69.3" r="3.2" fill="#f02020"/><path d="M92.6 67.8l3 3M95.6 67.8l-3 3" stroke="#801010" stroke-width="0.8"/><circle cx="36.6" cy="81.5" r="3.2" fill="#f02020"/><path d="M35.1 80l3 3M38.1 80l-3 3" stroke="#801010" stroke-width="0.8"/><circle cx="76.8" cy="76" r="3.2" fill="#f02020"/><path d="M75.3 74.5l3 3M78.3 74.5l-3 3" stroke="#801010" stroke-width="0.8"/><circle cx="87.9" cy="83.3" r="3.2" fill="#f02020"/><path d="M86.4 81.8l3 3M89.4 81.8l-3 3" stroke="#801010" stroke-width="0.8"/><circle cx="47.2" cy="82.5" r="3.2" fill="#f02020"/><path d="M45.7 81l3 3M48.7 81l-3 3" stroke="#801010" stroke-width="0.8"/><circle cx="42.4" cy="74.3" r="3.2" fill="#f02020"/><path d="M40.9 72.8l3 3M43.9 72.8l-3 3" stroke="#801010" stroke-width="0.8"/><circle cx="56.8" cy="42.2" r="3.2" fill="#f02020"/><path d="M55.3 40.7l3 3M58.3 40.7l-3 3" stroke="#801010" stroke-width="0.8"/><circle cx="48.4" cy="40.6" r="3.2" fill="#f02020"/><path d="M46.9 39.1l3 3M49.9 39.1l-3 3" stroke="#801010" stroke-width="0.8"/><circle cx="61.8" cy="97.3" r="3.2" fill="#f02020"/><path d="M60.3 95.8l3 3M63.3 95.8l-3 3" stroke="#801010" stroke-width="0.8"/><circle cx="56.1" cy="62.1" r="3.2" fill="#f02020"/><path d="M54.6 60.6l3 3M57.6 60.6l-3 3" stroke="#801010" stroke-width="0.8"/><circle cx="58.8" cy="32.1" r="3.2" fill="#f02020"/><path d="M57.3 30.6l3 3M60.3 30.6l-3 3" stroke="#801010" stroke-width="0.8"/><circle cx="35.4" cy="48.9" r="3.2" fill="#f02020"/><path d="M33.9 47.4l3 3M36.9 47.4l-3 3" stroke="#801010" stroke-width="0.8"/><circle cx="47.8" cy="92.3" r="3.2" fill="#f02020"/><path d="M46.3 90.8l3 3M49.3 90.8l-3 3" stroke="#801010" stroke-width="0.8"/><circle cx="64" cy="87.4" r="3.2" fill="#f02020"/><path d="M62.5 85.9l3 3M65.5 85.9l-3 3" stroke="#801010" stroke-width="0.8"/><circle cx="82.2" cy="92.3" r="3.2" fill="#f02020"/><path d="M80.7 90.8l3 3M83.7 90.8l-3 3" stroke="#801010" stroke-width="0.8"/><circle cx="32.5" cy="73.5" r="3.2" fill="#f02020"/><path d="M31 72l3 3M34 72l-3 3" stroke="#801010" stroke-width="0.8"/></g><g id="t55"><path d="M92.5 79.9L93.4 82.8" stroke="#8c8c8c" stroke-width="1.1"/><path d="M65.6 39.4L67.2 28.1" stroke="#2a9a2a" stroke-width="1.1"/><path d="M42.1 56.8L32.4 52.3" stroke="#2a9a2a" stroke-width="1.1"/><path d="M95.2 61.1L99 58.9" stroke="#5a3a10" stroke-width="1.1"/><path d="M45.9 61.4L30.4 62.5" stroke="#2a9a2a" stroke-width="1.1"/><path d="M69 88.9L72.9 99.5" stroke="#5a3a10" stroke-width="1.1"/><path d="M46 75.6L36.3 85.9" stroke="#2a9a2a" stroke-width="1.1"/><path d="M57 85.6L53.6 94.8" stroke="#5a3a10" stroke-width="1.1"/><path d="M70.8 89.2L74.1 97.5" stroke="#5a3a10" stroke-width="1.1"/><path d="M79.4 37.7L84.2 30.2" stroke="#8c8c8c" stroke-width="1.1"/><path d="M43.5 79.5L41.3 85.5" stroke="#5a3a10" stroke-width="1.1"/><path d="M59.1 85.2L56.7 95.1" stroke="#2a9a2a" stroke-width="1.1"/><path d="M45.2 63.4L31.6 64.9" stroke="#5a3a10" stroke-width="1.1"/><path d="M70.2 89.4L74.4 97.6" stroke="#5a3a10" stroke-width="1.1"/><path d="M87.4 71L98.4 79.8" stroke="#2a9a2a" stroke-width="1.1"/><path d="M55.3 84.7L53.4 98.8" stroke="#5a3a10" stroke-width="1.1"/><path d="M60.8 41.2L58.1 29.1" stroke="#6a4a18" stroke-width="1.1"/><path d="M43 78.5L35.8 79" stroke="#5a3a10" stroke-width="1.1"/><path d="M75.1 83.6L82.8 97.6" stroke="#6a4a18" stroke-width="1.1"/><path d="M53.9 46.9L43.3 32" stroke="#6a4a18" stroke-width="1.1"/><path d="M43.8 62.3L31.9 60.6" stroke="#8c8c8c" stroke-width="1.1"/><path d="M45.3 73.9L31.5 78.2" stroke="#8c8c8c" stroke-width="1.1"/><path d="M60.5 41L56.7 26.7" stroke="#5a3a10" stroke-width="1.1"/><path d="M70.3 43.1L70.1 27.8" stroke="#5a3a10" stroke-width="1.1"/><path d="M43.8 73.9L32.9 81.1" stroke="#8c8c8c" stroke-width="1.1"/><path d="M77.4 44.6L80.8 32.6" stroke="#6a4a18" stroke-width="1.1"/><path d="M61.8 35.5L58.3 26.3" stroke="#5a3a10" stroke-width="1.1"/><path d="M92.5 71.4L101.8 70.4" stroke="#6a4a18" stroke-width="1.1"/><path d="M63.3 34.5L59.1 27.9" stroke="#5a3a10" stroke-width="1.1"/><path d="M39.1 75.9L32.2 79.2" stroke="#5a3a10" stroke-width="1.1"/><path d="M64.6 84.6L62.6 99" stroke="#5a3a10" stroke-width="1.1"/><path d="M38.8 56.1L30.9 56.2" stroke="#8c8c8c" stroke-width="1.1"/><path d="M44.7 79L40.2 86.3" stroke="#6a4a18" stroke-width="1.1"/><path d="M87.4 79.7L92.1 88.5" stroke="#5a3a10" stroke-width="1.1"/><path d="M93.9 76.5L97.8 83.4" stroke="#8c8c8c" stroke-width="1.1"/><path d="M37.7 66.4L31.5 71.1" stroke="#2a9a2a" stroke-width="1.1"/><path d="M90.5 73.2L100.9 76.5" stroke="#5a3a10" stroke-width="1.1"/><path d="M75.3 35.6L73.4 30.4" stroke="#6a4a18" stroke-width="1.1"/><path d="M79.3 34L78.6 31.9" stroke="#5a3a10" stroke-width="1.1"/><path d="M73 93.2L70.6 100.9" stroke="#2a9a2a" stroke-width="1.1"/><path d="M61.9 33L60.1 29.7" stroke="#5a3a10" stroke-width="1.1"/><path d="M37 67L27.8 66.2" stroke="#6a4a18" stroke-width="1.1"/><path d="M42.4 58.6L30.1 55.2" stroke="#6a4a18" stroke-width="1.1"/><path d="M73.9 33.8L75.2 27.5" stroke="#5a3a10" stroke-width="1.1"/><path d="M46.2 50.9L33.9 47.4" stroke="#5a3a10" stroke-width="1.1"/><path d="M79.9 45L85.6 31.7" stroke="#5a3a10" stroke-width="1.1"/><path d="M90.6 64.2L102 61.9" stroke="#2a9a2a" stroke-width="1.1"/><path d="M89.1 81.5L93.1 88.5" stroke="#8c8c8c" stroke-width="1.1"/><path d="M38.2 59.9L32.8 60.3" stroke="#2a9a2a" stroke-width="1.1"/><path d="M44.3 49.3L35.5 46.3" stroke="#6a4a18" stroke-width="1.1"/><path d="M73.8 87.4L79.3 99.1" stroke="#8c8c8c" stroke-width="1.1"/><path d="M43 55.1L29.8 50.4" stroke="#6a4a18" stroke-width="1.1"/><path d="M66.2 94.7L62.3 97.5" stroke="#8c8c8c" stroke-width="1.1"/><path d="M48.9 75.4L36.1 83.7" stroke="#5a3a10" stroke-width="1.1"/><path d="M58.8 93.7L61 97.3" stroke="#5a3a10" stroke-width="1.1"/><path d="M91.2 66.4L99.6 66" stroke="#5a3a10" stroke-width="1.1"/><path d="M66.7 37.7L68 28.8" stroke="#2a9a2a" stroke-width="1.1"/><path d="M36.9 57.3L28.6 57.9" stroke="#2a9a2a" stroke-width="1.1"/><path d="M68.7 38.1L66.5 28.6" stroke="#6a4a18" stroke-width="1.1"/><path d="M87.2 52.6L101.1 47.7" stroke="#5a3a10" stroke-width="1.1"/><path d="M37.8 58L28.4 59.5" stroke="#5a3a10" stroke-width="1.1"/><path d="M59 86.1L57.6 96" stroke="#6a4a18" stroke-width="1.1"/><path d="M90.3 73.9L95.6 78.5" stroke="#5a3a10" stroke-width="1.1"/><path d="M46.5 75.3L33.8 82.4" stroke="#5a3a10" stroke-width="1.1"/><path d="M53.9 87.3L48.4 93.6" stroke="#5a3a10" stroke-width="1.1"/><path d="M74.3 39.6L80 31.4" stroke="#6a4a18" stroke-width="1.1"/><path d="M62.7 39.4L58.5 27" stroke="#2a9a2a" stroke-width="1.1"/><path d="M95.2 70.6L100.4 71.8" stroke="#6a4a18" stroke-width="1.1"/><path d="M87.7 70.1L97.9 77.4" stroke="#6a4a18" stroke-width="1.1"/><path d="M51.7 46.2L44.2 33.3" stroke="#5a3a10" stroke-width="1.1"/><path d="M39.7 60L30.2 57.9" stroke="#6a4a18" stroke-width="1.1"/><path d="M82.7 40.6L85.8 35.2" stroke="#5a3a10" stroke-width="1.1"/><path d="M87.9 78.8L94.7 81.9" stroke="#5a3a10" stroke-width="1.1"/><path d="M74.7 32.8L77.9 28.8" stroke="#5a3a10" stroke-width="1.1"/><path d="M90.7 58.5L98.9 59.3" stroke="#5a3a10" stroke-width="1.1"/><path d="M51.6 46.1L40.4 35.9" stroke="#5a3a10" stroke-width="1.1"/><path d="M60.8 93.2L61.5 99.8" stroke="#5a3a10" stroke-width="1.1"/><path d="M58.3 43.1L52.2 31" stroke="#8c8c8c" stroke-width="1.1"/><path d="M77.2 85.7L81.3 94.6" stroke="#8c8c8c" stroke-width="1.1"/><path d="M44.7 56.3L31 50.7" stroke="#5a3a10" stroke-width="1.1"/><path d="M77.3 42.8L82.8 34.6" stroke="#5a3a10" stroke-width="1.1"/><path d="M79.1 82.3L82.6 92.7" stroke="#6a4a18" stroke-width="1.1"/><path d="M72.5 90.6L70.7 98.1" stroke="#6a4a18" stroke-width="1.1"/><path d="M69.3 42.8L72.3 29" stroke="#6a4a18" stroke-width="1.1"/><path d="M91.6 60.9L101.4 60.1" stroke="#8c8c8c" stroke-width="1.1"/><path d="M68.6 88.1L69.9 100.3" stroke="#5a3a10" stroke-width="1.1"/><path d="M66.7 84L69.9 96.9" stroke="#6a4a18" stroke-width="1.1"/><path d="M95.9 73.3L101.9 76.6" stroke="#5a3a10" stroke-width="1.1"/><path d="M88.9 69.3L100.2 73.4" stroke="#5a3a10" stroke-width="1.1"/><path d="M56.1 86.5L55.8 98.2" stroke="#5a3a10" stroke-width="1.1"/><path d="M55.8 90.8L54 96.3" stroke="#2a9a2a" stroke-width="1.1"/><path d="M94 70.7L103.9 68.9" stroke="#6a4a18" stroke-width="1.1"/><path d="M44.8 54.7L31.7 49.7" stroke="#5a3a10" stroke-width="1.1"/><path d="M82 36.7L85.6 33.6" stroke="#5a3a10" stroke-width="1.1"/><path d="M57.8 43.6L55.6 28.8" stroke="#2a9a2a" stroke-width="1.1"/><path d="M49.5 87.4L47.3 91.6" stroke="#2a9a2a" stroke-width="1.1"/><path d="M59.6 32.3L60.2 26.3" stroke="#5a3a10" stroke-width="1.1"/><path d="M49.4 78.6L40.7 86.3" stroke="#5a3a10" stroke-width="1.1"/><path d="M51.6 46.5L41.6 37.4" stroke="#5a3a10" stroke-width="1.1"/><path d="M90.3 81.7L96.9 83.5" stroke="#8c8c8c" stroke-width="1.1"/><path d="M45.9 67.7L31.1 72.5" stroke="#8c8c8c" stroke-width="1.1"/><path d="M86.9 47.5L94.9 38.9" stroke="#5a3a10" stroke-width="1.1"/><path d="M55.7 85.2L50.2 92.1" stroke="#2a9a2a" stroke-width="1.1"/><path d="M84.2 80.1L91.4 91.1" stroke="#5a3a10" stroke-width="1.1"/><path d="M43.3 80.4L40.4 87.7" stroke="#8c8c8c" stroke-width="1.1"/><path d="M77.5 34.2L81.5 33.5" stroke="#6a4a18" stroke-width="1.1"/><path d="M73.3 85.9L74.9 97.2" stroke="#6a4a18" stroke-width="1.1"/><path d="M89.5 81.7L91.7 86.4" stroke="#6a4a18" stroke-width="1.1"/><path d="M39.8 49.8L34.1 44.8" stroke="#5a3a10" stroke-width="1.1"/><path d="M81.7 85.8L85.5 90.9" stroke="#2a9a2a" stroke-width="1.1"/><path d="M95.9 52.6L101.7 54.4" stroke="#5a3a10" stroke-width="1.1"/><path d="M63.5 32.7L66.7 25.1" stroke="#6a4a18" stroke-width="1.1"/><path d="M44.1 62.7L29.4 61.7" stroke="#6a4a18" stroke-width="1.1"/><path d="M74 84.7L80.8 97.3" stroke="#5a3a10" stroke-width="1.1"/><path d="M86.8 43.7L91.2 36.2" stroke="#2a9a2a" stroke-width="1.1"/><path d="M60.3 83.7L59.5 95.6" stroke="#5a3a10" stroke-width="1.1"/><path d="M38.1 76.2L36.6 78.2" stroke="#5a3a10" stroke-width="1.1"/><path d="M54.5 44.2L47.6 34" stroke="#6a4a18" stroke-width="1.1"/><path d="M89 53.8L96.1 48.5" stroke="#5a3a10" stroke-width="1.1"/><path d="M77.7 39.7L82.1 32.1" stroke="#6a4a18" stroke-width="1.1"/><path d="M49.4 47.6L37.9 40.3" stroke="#5a3a10" stroke-width="1.1"/><path d="M41.1 62.2L27.7 61.6" stroke="#5a3a10" stroke-width="1.1"/><path d="M47.9 73.7L34.6 81" stroke="#6a4a18" stroke-width="1.1"/><path d="M79.3 78.9L89.3 88.9" stroke="#2a9a2a" stroke-width="1.1"/><path d="M59.7 33.8L58.3 27.6" stroke="#5a3a10" stroke-width="1.1"/><path d="M93.5 51.1L100.9 52.5" stroke="#8c8c8c" stroke-width="1.1"/><path d="M72.8 91.6L76 95.8" stroke="#5a3a10" stroke-width="1.1"/><path d="M75.9 43.2L78.4 30" stroke="#2a9a2a" stroke-width="1.1"/><path d="M45.4 87.3L40.8 92" stroke="#5a3a10" stroke-width="1.1"/><path d="M73.1 33.4L78.3 28.8" stroke="#2a9a2a" stroke-width="1.1"/><path d="M82.5 79.5L95.9 87" stroke="#5a3a10" stroke-width="1.1"/><path d="M42.2 55L31.6 51.5" stroke="#5a3a10" stroke-width="1.1"/><path d="M41.1 74.2L34.1 74" stroke="#5a3a10" stroke-width="1.1"/><path d="M87.2 49.9L96.9 43.2" stroke="#5a3a10" stroke-width="1.1"/><path d="M68.9 88L67.4 97.2" stroke="#8c8c8c" stroke-width="1.1"/><path d="M78.3 44.1L88.8 33.5" stroke="#5a3a10" stroke-width="1.1"/><path d="M90.6 71.2L98 75.5" stroke="#6a4a18" stroke-width="1.1"/><path d="M84 46.1L91.6 40.6" stroke="#5a3a10" stroke-width="1.1"/><path d="M91.2 50.3L97.3 51.3" stroke="#6a4a18" stroke-width="1.1"/><path d="M88.7 60.7L100.1 56.6" stroke="#5a3a10" stroke-width="1.1"/><path d="M68.9 87.6L70.1 98.4" stroke="#6a4a18" stroke-width="1.1"/><path d="M52.3 78.7L40.8 88.9" stroke="#5a3a10" stroke-width="1.1"/><path d="M91.6 50.2L98.3 42.7" stroke="#2a9a2a" stroke-width="1.1"/><path d="M39.5 50L34.8 43.4" stroke="#6a4a18" stroke-width="1.1"/><path d="M93.9 72.7L102 75.3" stroke="#5a3a10" stroke-width="1.1"/><path d="M95 64.7L104 63.5" stroke="#2a9a2a" stroke-width="1.1"/><path d="M93.7 55L100.6 49.2" stroke="#2a9a2a" stroke-width="1.1"/><path d="M54.4 43.9L45.2 36" stroke="#5a3a10" stroke-width="1.1"/><path d="M40.5 61.8L30.1 64.9" stroke="#8c8c8c" stroke-width="1.1"/><path d="M55.9 85.4L47 95.2" stroke="#6a4a18" stroke-width="1.1"/><path d="M79.5 46.7L89.5 34.8" stroke="#8c8c8c" stroke-width="1.1"/><path d="M84.7 49.8L92.2 40.7" stroke="#2a9a2a" stroke-width="1.1"/><path d="M94.6 70.7L99.7 68.7" stroke="#5a3a10" stroke-width="1.1"/><path d="M88.6 65L103.7 65.6" stroke="#5a3a10" stroke-width="1.1"/><path d="M60.2 39.2L57.1 28.1" stroke="#5a3a10" stroke-width="1.1"/><path d="M74.9 38.8L78.8 26.7" stroke="#2a9a2a" stroke-width="1.1"/><path d="M91.8 75.2L97.8 75.7" stroke="#5a3a10" stroke-width="1.1"/><path d="M62.2 34.3L65.4 29.2" stroke="#5a3a10" stroke-width="1.1"/><path d="M86.3 79.2L93.7 82.3" stroke="#2a9a2a" stroke-width="1.1"/><path d="M91.6 63.3L99.4 59.7" stroke="#8c8c8c" stroke-width="1.1"/><path d="M88.9 70.9L103.2 71" stroke="#5a3a10" stroke-width="1.1"/><path d="M43.5 42.4L41.3 40.2" stroke="#8c8c8c" stroke-width="1.1"/><path d="M42.3 53.3L31.2 53.1" stroke="#8c8c8c" stroke-width="1.1"/><path d="M39.3 48.2L38.1 43.3" stroke="#5a3a10" stroke-width="1.1"/><path d="M71.5 41L77.4 32" stroke="#5a3a10" stroke-width="1.1"/><path d="M81 81.1L88.2 89.5" stroke="#6a4a18" stroke-width="1.1"/><path d="M41.5 64.9L27.6 64.9" stroke="#5a3a10" stroke-width="1.1"/><path d="M73 87.8L72.7 95.8" stroke="#2a9a2a" stroke-width="1.1"/><path d="M94.5 71.3L100.2 70.8" stroke="#6a4a18" stroke-width="1.1"/><path d="M49.5 42.6L47.7 35.2" stroke="#5a3a10" stroke-width="1.1"/><path d="M81.1 35.3L81.9 32.1" stroke="#6a4a18" stroke-width="1.1"/><path d="M49.9 39L44 36.7" stroke="#5a3a10" stroke-width="1.1"/><path d="M44.4 73.7L35.3 83" stroke="#6a4a18" stroke-width="1.1"/><path d="M86.2 70.7L100.2 79.8" stroke="#5a3a10" stroke-width="1.1"/><path d="M87.6 54.3L102.1 52.5" stroke="#6a4a18" stroke-width="1.1"/><path d="M68.9 91.7L69.8 100.6" stroke="#8c8c8c" stroke-width="1.1"/><path d="M84.1 46.5L91.7 36.6" stroke="#6a4a18" stroke-width="1.1"/><path d="M50.2 77L38.5 87.1" stroke="#2a9a2a" stroke-width="1.1"/><path d="M94 59.2L103 55" stroke="#6a4a18" stroke-width="1.1"/><path d="M45.1 63.7L30.3 64.3" stroke="#5a3a10" stroke-width="1.1"/><path d="M51.4 43.2L45.7 33.9" stroke="#2a9a2a" stroke-width="1.1"/><path d="M54.4 43.8L48.2 32.3" stroke="#6a4a18" stroke-width="1.1"/><path d="M78.4 45.8L87.9 38.2" stroke="#5a3a10" stroke-width="1.1"/><path d="M35.3 64.4L28.4 66" stroke="#8c8c8c" stroke-width="1.1"/><path d="M90.7 44.3L93.6 42.9" stroke="#5a3a10" stroke-width="1.1"/><path d="M86.1 81.6L93.1 85.8" stroke="#8c8c8c" stroke-width="1.1"/><path d="M56.3 85.7L53.8 96.5" stroke="#6a4a18" stroke-width="1.1"/><path d="M72.9 44L81 32.4" stroke="#5a3a10" stroke-width="1.1"/><path d="M40.4 60.1L32.1 56.5" stroke="#8c8c8c" stroke-width="1.1"/><path d="M67.5 86.3L70.1 98" stroke="#2a9a2a" stroke-width="1.1"/><path d="M79.8 86L84.5 92" stroke="#8c8c8c" stroke-width="1.1"/><path d="M92.7 67.6L99.2 66.4" stroke="#6a4a18" stroke-width="1.1"/><path d="M46.9 51.7L35.2 42.2" stroke="#6a4a18" stroke-width="1.1"/><path d="M42.8 52.9L32.3 46.2" stroke="#8c8c8c" stroke-width="1.1"/><path d="M81.6 84.7L83 92.8" stroke="#5a3a10" stroke-width="1.1"/><path d="M77.6 42.4L82.9 30.1" stroke="#5a3a10" stroke-width="1.1"/><path d="M83.5 89.6L84 95.3" stroke="#8c8c8c" stroke-width="1.1"/><path d="M95.1 52.5L101.8 52.7" stroke="#6a4a18" stroke-width="1.1"/><path d="M49.9 76L42.5 86.4" stroke="#2a9a2a" stroke-width="1.1"/><path d="M56 44.9L50.4 28.6" stroke="#8c8c8c" stroke-width="1.1"/><path d="M80.5 85.5L82.4 93.9" stroke="#5a3a10" stroke-width="1.1"/><path d="M57.5 82.2L54.3 95.4" stroke="#6a4a18" stroke-width="1.1"/><path d="M60.7 39.3L60.4 28" stroke="#5a3a10" stroke-width="1.1"/><path d="M42.1 68.2L30.9 74.5" stroke="#5a3a10" stroke-width="1.1"/><path d="M64.5 90.7L65.8 97.2" stroke="#5a3a10" stroke-width="1.1"/><path d="M90.3 72.6L100.5 80" stroke="#6a4a18" stroke-width="1.1"/><path d="M48.8 41.7L46.4 32.5" stroke="#6a4a18" stroke-width="1.1"/><path d="M53.5 43L44.5 32.5" stroke="#5a3a10" stroke-width="1.1"/><path d="M78.2 40.6L80.6 32.1" stroke="#5a3a10" stroke-width="1.1"/><path d="M62.9 36.9L63.6 27" stroke="#6a4a18" stroke-width="1.1"/><path d="M46.9 72.1L31.4 76.8" stroke="#6a4a18" stroke-width="1.1"/><path d="M40.9 47.9L34.3 42.4" stroke="#5a3a10" stroke-width="1.1"/><path d="M75.4 42.3L78.8 32.3" stroke="#5a3a10" stroke-width="1.1"/><path d="M83.7 79.7L89.1 90.4" stroke="#8c8c8c" stroke-width="1.1"/><path d="M49.7 44.9L45 36.6" stroke="#5a3a10" stroke-width="1.1"/><path d="M62 38.1L59.2 28.7" stroke="#5a3a10" stroke-width="1.1"/><path d="M47 71.1L31.4 75.2" stroke="#8c8c8c" stroke-width="1.1"/><path d="M96.5 68.7L100.7 73.1" stroke="#5a3a10" stroke-width="1.1"/><path d="M37.9 73.7L33.9 75.9" stroke="#2a9a2a" stroke-width="1.1"/><path d="M74 91.3L76.3 99.5" stroke="#5a3a10" stroke-width="1.1"/><path d="M88.8 42.7L92.5 42.1" stroke="#5a3a10" stroke-width="1.1"/><path d="M89 71.5L99.8 77.1" stroke="#8c8c8c" stroke-width="1.1"/><path d="M63.4 31.6L61.6 26.5" stroke="#6a4a18" stroke-width="1.1"/><path d="M94.7 69.4L99 69.1" stroke="#5a3a10" stroke-width="1.1"/><path d="M87.8 66.8L103.2 65.6" stroke="#5a3a10" stroke-width="1.1"/><path d="M95.2 51.3L99.4 46.4" stroke="#2a9a2a" stroke-width="1.1"/><path d="M47.4 37.8L48.7 33.6" stroke="#5a3a10" stroke-width="1.1"/><path d="M44.5 40.7L42.5 34.7" stroke="#5a3a10" stroke-width="1.1"/><path d="M56.8 89.2L52.1 97.4" stroke="#5a3a10" stroke-width="1.1"/><path d="M63.1 86.9L64.6 100.3" stroke="#8c8c8c" stroke-width="1.1"/><path d="M70.1 65.8 L75.2 67.6 L80.8 68.1 L86.6 67.2 L92.3 64.8 L97.6 60.9 L102.3 55.6" stroke="#5a3a10" stroke-width="4" fill="none" stroke-linecap="round"/><path d="M70.1 65.8 L75.2 67.6 L80.8 68.1 L86.6 67.2 L92.3 64.8 L97.6 60.9 L102.3 55.6" stroke="#1a1004" stroke-width="1" fill="none"/><path d="M64.6 67.8 L64.4 73.2 L65.7 78.7 L68.4 83.9 L72.5 88.5 L77.8 92.4 L84.2 95.2" stroke="#5a3a10" stroke-width="4" fill="none" stroke-linecap="round"/><path d="M64.6 67.8 L64.4 73.2 L65.7 78.7 L68.4 83.9 L72.5 88.5 L77.8 92.4 L84.2 95.2" stroke="#1a1004" stroke-width="1" fill="none"/><path d="M61 63.1 L55.8 64.7 L51 67.6 L46.9 71.7 L43.7 77 L41.7 83.3 L41 90.3" stroke="#5a3a10" stroke-width="4" fill="none" stroke-linecap="round"/><path d="M61 63.1 L55.8 64.7 L51 67.6 L46.9 71.7 L43.7 77 L41.7 83.3 L41 90.3" stroke="#1a1004" stroke-width="1" fill="none"/><path d="M64.3 58.3 L61.3 53.8 L57 50.2 L51.8 47.5 L45.8 46.1 L39.2 46.1 L32.3 47.6" stroke="#5a3a10" stroke-width="4" fill="none" stroke-linecap="round"/><path d="M64.3 58.3 L61.3 53.8 L57 50.2 L51.8 47.5 L45.8 46.1 L39.2 46.1 L32.3 47.6" stroke="#1a1004" stroke-width="1" fill="none"/><path d="M70 59.9 L73.3 55.7 L75.4 50.5 L76.3 44.7 L75.8 38.6 L73.8 32.3 L70.2 26.2" stroke="#5a3a10" stroke-width="4" fill="none" stroke-linecap="round"/><path d="M70 59.9 L73.3 55.7 L75.4 50.5 L76.3 44.7 L75.8 38.6 L73.8 32.3 L70.2 26.2" stroke="#1a1004" stroke-width="1" fill="none"/><path d="M57.6 45.7 L56.6 48.1 L53.8 49.5 L51.7 47.1 L52.4 44.5 L54.1 43.2 L56.6 43.2Z" fill="#22b022"/><path d="M49.3 57.1 L48.5 60.3 L45.1 60.6 L42 58.9 L43.1 55.7 L45 53.2 L48.2 54.2Z" fill="#28a828"/><path d="M59.5 83.6 L56.7 87.3 L51.7 86.3 L53.1 81.8 L56.8 79.6Z" fill="#22b022"/><path d="M86.5 64 L84.7 67.2 L80.7 67.6 L79.2 64 L81.1 61.1 L84.6 60.9Z" fill="#22b022"/><path d="M90.3 54.6 L88.2 57.3 L85.3 56.9 L83.6 54.6 L85.4 52.5 L88.1 52Z" fill="#30c030"/><path d="M56.5 52.1 L55.4 54.5 L52.9 54.8 L50.6 53.5 L50.4 50.6 L53.1 49.9 L55.4 49.7Z" fill="#30c030"/><path d="M38.4 63.3 L37.2 65.6 L34.6 66.5 L32.4 64.7 L32.7 62.1 L34.6 60 L37 61.2Z" fill="#22b022"/><path d="M98.6 53.3 L95.9 56.7 L92.7 54.8 L92.3 51.4 L95.9 50.1Z" fill="#28a828"/><path d="M45.8 64.5 L43.5 68 L39.1 68.8 L38 64.5 L39.7 61.4 L43.4 61.2Z" fill="#22b022"/><path d="M67.4 89.6 L65.9 92.9 L62.3 94.1 L59.5 91.4 L59.9 87.9 L62.5 86.2 L66 86.2Z" fill="#28a828"/><path d="M43.3 77.4 L42 80.4 L38.8 80 L37.9 77.4 L38.6 74.5 L42.1 74.2Z" fill="#22b022"/><path d="M56.6 45.7 L55.4 48.6 L52.5 48.6 L49.1 47.6 L49 43.7 L52.1 41.2 L55.8 42.4Z" fill="#30c030"/><path d="M78.7 44.9 L76.6 47.8 L73.6 48.4 L71.8 46.1 L70.4 43 L73.4 40.7 L76.2 42.6Z" fill="#22b022"/><path d="M95.2 77.5 L93.4 80.3 L89.8 81 L88.7 77.5 L89.8 74 L93.5 74.5Z" fill="#28a828"/><path d="M78.4 90.7 L76.7 93.1 L73.8 93.3 L73 90.7 L73.9 88.3 L76.7 88.2Z" fill="#30c030"/><path d="M87.3 49.9 L86.9 52.6 L83.9 53.4 L81.7 51.4 L82.1 48.6 L83.9 46.5 L86.7 47.4Z" fill="#30c030"/><path d="M79.7 48.1 L78 50.9 L75.1 50.4 L73.3 48.1 L75.2 46 L77.9 45.5Z" fill="#22b022"/><path d="M65.1 42.4 L64.7 44.6 L62.4 45 L61.2 43.3 L61.1 41.6 L62.3 39.7 L64.6 40.4Z" fill="#22b022"/><path d="M72.4 44.6 L70.5 47.5 L67.4 46.8 L65 44.6 L67.2 41.8 L70.4 41.8Z" fill="#30c030"/><path d="M82.7 74.4 L82.2 76.7 L79.8 76.7 L78.3 75.3 L78.2 73.3 L79.9 72.4 L81.7 72.7Z" fill="#30c030"/><path d="M49.5 84.9 L47.9 88.5 L44.6 86.5 L44.6 83.4 L47.8 81.4Z" fill="#30c030"/><path d="M80.4 80.6 L78.8 83.6 L75.5 84.5 L72.7 82.4 L73.7 79.4 L75.5 76.7 L79 77.4Z" fill="#22b022"/></g><g id="t62"><circle cx="65" cy="63" r="15" fill="#138a6a"/><ellipse cx="85.2" cy="65.1" rx="14.3" ry="4.3" transform="rotate(5.9 85.2 65.1)" fill="#138a6a"/><path d="M71 63.6L94.4 66" stroke="#08301f" stroke-width="1"/><path d="M69.8 66.9L72.6 63.8L70.5 60.2" stroke="#08301f" stroke-width="1.4" fill="none"/><path d="M73.6 66.9L76.4 64.2L74.2 61" stroke="#08301f" stroke-width="1.4" fill="none"/><path d="M77.5 66.8L80.2 64.6L78 61.8" stroke="#08301f" stroke-width="1.4" fill="none"/><path d="M81.4 66.8L84.1 65L81.8 62.7" stroke="#08301f" stroke-width="1.4" fill="none"/><path d="M85.2 66.7L87.9 65.4L85.5 63.5" stroke="#08301f" stroke-width="1.4" fill="none"/><path d="M89.1 66.7L91.7 65.7L89.3 64.3" stroke="#08301f" stroke-width="1.4" fill="none"/><ellipse cx="81.5" cy="75.2" rx="14.6" ry="4.3" transform="rotate(36.5 81.5 75.2)" fill="#138a6a"/><path d="M69.8 66.6L89.2 80.9" stroke="#08301f" stroke-width="1"/><path d="M67.2 68.9L71.3 67.6L71.3 63.4" stroke="#08301f" stroke-width="1.4" fill="none"/><path d="M70.6 70.8L74.4 70L74.1 66.1" stroke="#08301f" stroke-width="1.4" fill="none"/><path d="M74 72.8L77.5 72.3L77 68.8" stroke="#08301f" stroke-width="1.4" fill="none"/><path d="M77.4 74.8L80.7 74.6L79.9 71.4" stroke="#08301f" stroke-width="1.4" fill="none"/><path d="M80.8 76.7L83.8 76.9L82.8 74.1" stroke="#08301f" stroke-width="1.4" fill="none"/><path d="M84.2 78.7L86.9 79.2L85.6 76.8" stroke="#08301f" stroke-width="1.4" fill="none"/><ellipse cx="76.9" cy="83.3" rx="17.5" ry="4.3" transform="rotate(59.5 76.9 83.3)" fill="#138a6a"/><path d="M68 68.2L83.3 94.1" stroke="#08301f" stroke-width="1"/><path d="M65.5 70.5L69.7 70.9L71.3 67" stroke="#08301f" stroke-width="1.4" fill="none"/><path d="M68.2 74.2L72 74.9L73.3 71.2" stroke="#08301f" stroke-width="1.4" fill="none"/><path d="M70.9 78L74.3 78.8L75.2 75.4" stroke="#08301f" stroke-width="1.4" fill="none"/><path d="M73.6 81.7L76.7 82.8L77.2 79.6" stroke="#08301f" stroke-width="1.4" fill="none"/><path d="M76.3 85.4L79 86.8L79.1 83.8" stroke="#08301f" stroke-width="1.4" fill="none"/><path d="M79.1 89.2L81.3 90.7L81.1 88" stroke="#08301f" stroke-width="1.4" fill="none"/><ellipse cx="65.8" cy="84.8" rx="15.8" ry="4.3" transform="rotate(88 65.8 84.8)" fill="#138a6a"/><path d="M65.2 69L66.1 95.6" stroke="#08301f" stroke-width="1"/><path d="M61.8 69L65.3 71.4L68.6 68.7" stroke="#08301f" stroke-width="1.4" fill="none"/><path d="M62.4 73.2L65.4 75.5L68.3 72.9" stroke="#08301f" stroke-width="1.4" fill="none"/><path d="M63 77.3L65.6 79.7L68 77.1" stroke="#08301f" stroke-width="1.4" fill="none"/><path d="M63.6 81.5L65.7 83.9L67.7 81.3" stroke="#08301f" stroke-width="1.4" fill="none"/><path d="M64.2 85.7L65.9 88.1L67.4 85.5" stroke="#08301f" stroke-width="1.4" fill="none"/><path d="M64.8 89.8L66 92.3L67.1 89.7" stroke="#08301f" stroke-width="1.4" fill="none"/><ellipse cx="54.8" cy="84.5" rx="17.8" ry="4.3" transform="rotate(115.3 54.8 84.5)" fill="#138a6a"/><path d="M62.4 68.4L49.3 96.1" stroke="#08301f" stroke-width="1"/><path d="M59 67.7L61 71.4L65.1 70.6" stroke="#08301f" stroke-width="1.4" fill="none"/><path d="M57.4 72.1L59 75.6L62.7 74.6" stroke="#08301f" stroke-width="1.4" fill="none"/><path d="M55.8 76.5L57 79.9L60.3 78.7" stroke="#08301f" stroke-width="1.4" fill="none"/><path d="M54.2 80.9L55 84.1L57.9 82.7" stroke="#08301f" stroke-width="1.4" fill="none"/><path d="M52.6 85.3L53 88.3L55.5 86.7" stroke="#08301f" stroke-width="1.4" fill="none"/><path d="M51 89.8L51 92.5L53.1 90.8" stroke="#08301f" stroke-width="1.4" fill="none"/><ellipse cx="46.4" cy="71" rx="14.3" ry="4.3" transform="rotate(156.7 46.4 71)" fill="#138a6a"/><path d="M59.5 65.4L37.9 74.7" stroke="#08301f" stroke-width="1"/><path d="M58.9 61.9L58 66L61.6 68.2" stroke="#08301f" stroke-width="1.4" fill="none"/><path d="M55.6 63.9L54.5 67.5L57.9 69.3" stroke="#08301f" stroke-width="1.4" fill="none"/><path d="M52.2 65.8L50.9 69.1L54.2 70.4" stroke="#08301f" stroke-width="1.4" fill="none"/><path d="M48.9 67.7L47.4 70.6L50.5 71.5" stroke="#08301f" stroke-width="1.4" fill="none"/><path d="M45.6 69.6L43.9 72.1L46.8 72.6" stroke="#08301f" stroke-width="1.4" fill="none"/><path d="M42.2 71.6L40.4 73.6L43.1 73.7" stroke="#08301f" stroke-width="1.4" fill="none"/><ellipse cx="43.5" cy="65" rx="15.6" ry="4.3" transform="rotate(174.8 43.5 65)" fill="#138a6a"/><path d="M59 63.5L32.9 65.9" stroke="#08301f" stroke-width="1"/><path d="M58.9 60.1L56.7 63.7L59.5 66.9" stroke="#08301f" stroke-width="1.4" fill="none"/><path d="M54.8 61L52.6 64.1L55.4 66.8" stroke="#08301f" stroke-width="1.4" fill="none"/><path d="M50.7 61.8L48.5 64.5L51.2 66.8" stroke="#08301f" stroke-width="1.4" fill="none"/><path d="M46.7 62.6L44.3 64.9L47 66.7" stroke="#08301f" stroke-width="1.4" fill="none"/><path d="M42.6 63.4L40.2 65.2L42.9 66.6" stroke="#08301f" stroke-width="1.4" fill="none"/><path d="M38.5 64.2L36.1 65.6L38.7 66.6" stroke="#08301f" stroke-width="1.4" fill="none"/><ellipse cx="45.1" cy="51.4" rx="17" ry="4.3" transform="rotate(210.3 45.1 51.4)" fill="#138a6a"/><path d="M59.8 60L34.8 45.4" stroke="#08301f" stroke-width="1"/><path d="M61.1 56.8L57.3 58.5L57.7 62.7" stroke="#08301f" stroke-width="1.4" fill="none"/><path d="M57.1 55L53.4 56.2L54.1 60.1" stroke="#08301f" stroke-width="1.4" fill="none"/><path d="M53 53.1L49.6 54L50.5 57.4" stroke="#08301f" stroke-width="1.4" fill="none"/><path d="M48.9 51.2L45.7 51.7L46.8 54.8" stroke="#08301f" stroke-width="1.4" fill="none"/><path d="M44.8 49.4L41.8 49.5L43.2 52.1" stroke="#08301f" stroke-width="1.4" fill="none"/><path d="M40.7 47.5L38 47.2L39.6 49.5" stroke="#08301f" stroke-width="1.4" fill="none"/><ellipse cx="53.2" cy="44.2" rx="16.2" ry="4.3" transform="rotate(237.8 53.2 44.2)" fill="#138a6a"/><path d="M61.8 57.9L47.3 34.8" stroke="#08301f" stroke-width="1"/><path d="M64.7 56.1L60.5 55.8L58.9 59.7" stroke="#08301f" stroke-width="1.4" fill="none"/><path d="M62 52.7L58.2 52.2L57 55.8" stroke="#08301f" stroke-width="1.4" fill="none"/><path d="M59.4 49.3L55.9 48.5L55.1 52" stroke="#08301f" stroke-width="1.4" fill="none"/><path d="M56.7 45.9L53.6 44.9L53.2 48.1" stroke="#08301f" stroke-width="1.4" fill="none"/><path d="M54.1 42.6L51.4 41.3L51.3 44.3" stroke="#08301f" stroke-width="1.4" fill="none"/><path d="M51.4 39.2L49.1 37.7L49.4 40.4" stroke="#08301f" stroke-width="1.4" fill="none"/><ellipse cx="63.3" cy="42.6" rx="14.5" ry="4.3" transform="rotate(265.3 63.3 42.6)" fill="#138a6a"/><path d="M64.5 57L62.6 33.2" stroke="#08301f" stroke-width="1"/><path d="M68 57.5L64.4 55.3L61.2 58" stroke="#08301f" stroke-width="1.4" fill="none"/><path d="M67.2 53.7L64.1 51.4L61.3 54.2" stroke="#08301f" stroke-width="1.4" fill="none"/><path d="M66.4 49.9L63.7 47.6L61.4 50.3" stroke="#08301f" stroke-width="1.4" fill="none"/><path d="M65.7 46L63.4 43.7L61.6 46.4" stroke="#08301f" stroke-width="1.4" fill="none"/><path d="M64.9 42.2L63.1 39.8L61.7 42.5" stroke="#08301f" stroke-width="1.4" fill="none"/><path d="M64.2 38.4L62.8 36L61.8 38.6" stroke="#08301f" stroke-width="1.4" fill="none"/><ellipse cx="74" cy="43" rx="16" ry="4.3" transform="rotate(294.2 74 43)" fill="#138a6a"/><path d="M67.5 57.5L78.5 33" stroke="#08301f" stroke-width="1"/><path d="M70.5 59L68.5 55.3L64.3 56.2" stroke="#08301f" stroke-width="1.4" fill="none"/><path d="M71.9 54.9L70.2 51.4L66.5 52.5" stroke="#08301f" stroke-width="1.4" fill="none"/><path d="M73.2 50.9L71.9 47.6L68.6 48.8" stroke="#08301f" stroke-width="1.4" fill="none"/><path d="M74.5 46.9L73.7 43.7L70.8 45.2" stroke="#08301f" stroke-width="1.4" fill="none"/><path d="M75.8 42.8L75.4 39.9L72.9 41.5" stroke="#08301f" stroke-width="1.4" fill="none"/><path d="M77.2 38.8L77.1 36L75 37.8" stroke="#08301f" stroke-width="1.4" fill="none"/><ellipse cx="84.5" cy="52.2" rx="16.3" ry="4.3" transform="rotate(330.9 84.5 52.2)" fill="#138a6a"/><path d="M70.2 60.1L94.3 46.7" stroke="#08301f" stroke-width="1"/><path d="M72 63L72.5 58.8L68.7 57.1" stroke="#08301f" stroke-width="1.4" fill="none"/><path d="M75.5 60.5L76.3 56.7L72.7 55.4" stroke="#08301f" stroke-width="1.4" fill="none"/><path d="M79.1 58L80 54.6L76.6 53.7" stroke="#08301f" stroke-width="1.4" fill="none"/><path d="M82.6 55.5L83.8 52.5L80.6 52" stroke="#08301f" stroke-width="1.4" fill="none"/><path d="M86.1 53.1L87.5 50.4L84.6 50.2" stroke="#08301f" stroke-width="1.4" fill="none"/><path d="M89.7 50.6L91.3 48.3L88.5 48.5" stroke="#08301f" stroke-width="1.4" fill="none"/><path d="M76.3 58l-0.9 -0.2" stroke="#08301f" stroke-width="1"/><path d="M76.6 58l-1.3 -0.4" stroke="#08301f" stroke-width="1"/><path d="M69.9 57.3l-2 1.4" stroke="#08301f" stroke-width="1"/><path d="M67 65.1l-2.9 -1.5" stroke="#08301f" stroke-width="1"/><path d="M54.6 59.5l2.4 2.9" stroke="#08301f" stroke-width="1"/><path d="M74 59.6l0.4 2.4" stroke="#08301f" stroke-width="1"/><path d="M60.9 60.4l1.3 -0.9" stroke="#08301f" stroke-width="1"/><path d="M64.3 59.4l1.9 0.1" stroke="#08301f" stroke-width="1"/><path d="M68.7 53l1 -1.7" stroke="#08301f" stroke-width="1"/><path d="M65.8 58.9l0.9 -2.2" stroke="#08301f" stroke-width="1"/><path d="M62.6 67.1l-1.4 2.9" stroke="#08301f" stroke-width="1"/><path d="M66.8 71.8l-0.6 -2.6" stroke="#08301f" stroke-width="1"/><path d="M58.7 59.8l-1.6 1.3" stroke="#08301f" stroke-width="1"/><path d="M56.4 71.2l-2.8 -0.6" stroke="#08301f" stroke-width="1"/><path d="M72.3 62.6l-2.2 -2.8" stroke="#08301f" stroke-width="1"/><path d="M69.7 52l-1.3 0.6" stroke="#08301f" stroke-width="1"/><path d="M72.7 68.8l0.7 -2.4" stroke="#08301f" stroke-width="1"/><path d="M64.6 75.1l0.1 -1.5" stroke="#08301f" stroke-width="1"/><path d="M76.4 59l0.1 -2" stroke="#08301f" stroke-width="1"/><path d="M74.4 67.8l0.2 -0" stroke="#08301f" stroke-width="1"/><path d="M60.8 61.9l0.1 -2.9" stroke="#08301f" stroke-width="1"/><path d="M70.5 69.6l-2.8 -2.2" stroke="#08301f" stroke-width="1"/><path d="M70.5 59l-2.2 1.2" stroke="#08301f" stroke-width="1"/><path d="M67.4 64.3l0.3 0.6" stroke="#08301f" stroke-width="1"/><path d="M75.1 67.9l1.6 1.5" stroke="#08301f" stroke-width="1"/></g><g id="t56"><path d="M65 63 L71.7 61.6 L78.3 60.4 L85.1 61.3 L90.2 65.8 L95.7 69.8" stroke="#4a3210" stroke-width="2.2" fill="none" stroke-linecap="round"/><path d="M85.1 61.3l11.9 -0.8" stroke="#4a3210" stroke-width="1.54" fill="none"/><path d="M85.1 61.3l2.8 11.6" stroke="#4a3210" stroke-width="1.54" fill="none"/><path d="M65 63 L70.1 67.5 L76.7 69 L83 71.5 L86.8 77.1 L92.4 81.1" stroke="#4a3210" stroke-width="2.2" fill="none" stroke-linecap="round"/><path d="M83 71.5l11.9 -0.9" stroke="#4a3210" stroke-width="1.54" fill="none"/><path d="M83 71.5l2.9 11.5" stroke="#4a3210" stroke-width="1.54" fill="none"/><path d="M65 63 L61.5 68.8 L55.6 72.2 L49.5 75.2 L43.8 78.9 L41.1 85.2" stroke="#4a3210" stroke-width="2.2" fill="none" stroke-linecap="round"/><path d="M49.5 75.2l3.3 11.4" stroke="#4a3210" stroke-width="1.54" fill="none"/><path d="M49.5 75.2l-10.7 5.2" stroke="#4a3210" stroke-width="1.54" fill="none"/><path d="M65 63 L59.8 58.7 L53.3 56.6 L47.2 53.6 L41.3 50.2 L35.2 47.2" stroke="#4a3210" stroke-width="2.2" fill="none" stroke-linecap="round"/><path d="M47.2 53.6l-11.5 2.9" stroke="#4a3210" stroke-width="1.54" fill="none"/><path d="M47.2 53.6l-4.8 -10.9" stroke="#4a3210" stroke-width="1.54" fill="none"/><path d="M65 63 L63.5 56.4 L63.4 49.6 L59.9 43.7 L54.6 39.4 L50.4 34.1" stroke="#4a3210" stroke-width="2.2" fill="none" stroke-linecap="round"/><path d="M59.9 43.7l-11.7 -2.3" stroke="#4a3210" stroke-width="1.54" fill="none"/><path d="M59.9 43.7l0.3 -11.9" stroke="#4a3210" stroke-width="1.54" fill="none"/><circle cx="65" cy="63" r="34" stroke="#2e1e06" stroke-width="8" fill="none"/><path d="M44.5 35.3 L42.1 37.3 L39.3 36.8 L38.8 33.3 L42.4 32.4Z" fill="#e86a10"/><path d="M70.2 32.5 L68.2 34.5 L65.6 34.9 L64.2 32.5 L65.9 30.6 L68.7 29.6Z" fill="#e86a10"/><path d="M43.2 85.1 L41.6 87.8 L38.6 86.7 L38.1 83.2 L41.4 83.1Z" fill="#f07818"/><path d="M91.8 90.6 L90.8 92.8 L88 92 L88.4 89.4 L90.8 88.1Z" fill="#ffb030"/><path d="M53.6 41.5 L50.9 44.6 L47.4 43.3 L47.3 39.6 L50.8 38.5Z" fill="#f07818"/><path d="M31.8 77.3 L30.8 79.9 L27.5 79 L27.7 75.7 L30.8 74.5Z" fill="#ffb030"/><path d="M38.8 48.9 L36.2 51.5 L32.5 50.9 L32.8 47 L36.1 46.6Z" fill="#ffb030"/><path d="M78.6 96.4 L77.3 98.2 L75.4 98.4 L73.6 97.5 L74.1 95.6 L75.3 93.9 L77.4 94.5Z" fill="#f07818"/><path d="M34 63.9 L32.4 66.1 L29.9 65.2 L29.2 62.1 L32.3 61.9Z" fill="#f07818"/><path d="M65.6 39.5 L63.4 41.4 L61.4 41.8 L59.5 40.7 L59 38.1 L61.1 36 L63.7 37.3Z" fill="#f07818"/><path d="M40.2 55 L38.3 58 L35 56.7 L35.7 53.9 L38.1 52.5Z" fill="#ffb030"/><path d="M94.2 52.2 L93.3 55.3 L89.5 55.6 L88.9 52.2 L89.5 48.7 L92.9 49.8Z" fill="#f07818"/><path d="M55 35.2 L54.9 38.3 L51.7 38.3 L49.9 36.4 L48.9 33.4 L51.6 31.6 L54.5 32.5Z" fill="#f07818"/><path d="M97.9 41.1 L95.9 44.2 L92.4 43 L92.8 39.6 L95.9 38.1Z" fill="#e86a10"/><path d="M53.7 87.2 L52.4 89.8 L49.3 88.9 L49.1 85.4 L52.2 85.1Z" fill="#ffb030"/><path d="M98 65.5 L96.7 68 L93.9 67.8 L92 65.5 L93.8 63 L96.6 63.1Z" fill="#e86a10"/><path d="M53.4 82.4 L52.5 85.4 L49.2 86.4 L47.1 83.9 L46.7 80.8 L49.5 79.8 L51.8 80.4Z" fill="#f07818"/><path d="M56.4 94.3 L55.5 95.7 L53.7 95.9 L52.7 94.3 L53.6 92.4 L55.7 92.4Z" fill="#e86a10"/><path d="M57 97.8 L56.2 100 L53.9 100.2 L51.1 99.4 L51.1 96.2 L53.7 94.5 L56.5 95.3Z" fill="#f88820"/><path d="M90.8 64.9 L90.1 66.4 L88.5 66.4 L86.9 65.8 L86.6 63.8 L88.3 62.5 L89.9 63.6Z" fill="#f88820"/><path d="M77.4 86.2 L76.2 88.7 L73.7 87.5 L73.5 84.8 L76.3 83.3Z" fill="#f88820"/><path d="M43.2 73.6 L41.1 75.2 L39 74.7 L38.5 72.2 L41.2 71.6Z" fill="#e86a10"/><path d="M79.5 38.9 L77.1 42.5 L73.2 40.9 L73.1 36.9 L76.9 36Z" fill="#f88820"/><path d="M94.6 77.6 L93.7 79.4 L91.6 79.5 L90.4 77.6 L91.7 75.8 L93.7 75.8Z" fill="#f07818"/><path d="M67.8 91.5 L66.3 92.9 L64.8 93.4 L63 92.6 L63.4 90.6 L64.8 89.9 L66.6 89.8Z" fill="#f07818"/><path d="M69.3 95 L67.5 97.2 L64.4 96.7 L63.8 92.9 L67.8 91.8Z" fill="#f07818"/><path d="M34.3 73.4 L33.7 75 L31.5 75.5 L30.2 73.4 L31.6 71.4 L33.6 71.8Z" fill="#f88820"/><path d="M88.5 47.7 L87.1 50.6 L84.1 50.4 L81.5 49.2 L82.2 46.4 L83.8 43.6 L86.8 45.1Z" fill="#e86a10"/><path d="M93.4 64.7 L92.4 67.8 L89.1 68.6 L86.6 66.4 L86.6 63.1 L89 60.5 L92.3 61.8Z" fill="#f88820"/><path d="M49.3 38.2 L47.9 40.4 L45.5 41.3 L43.4 39.6 L43.5 36.9 L45.4 34.9 L48.3 35.6Z" fill="#ffb030"/><path d="M97.7 46.5 L96.1 49.7 L92.5 49.6 L90.9 46.5 L92.3 43 L95.7 44.1Z" fill="#ffb030"/><path d="M36.4 75.7 L34.3 77.6 L32.1 78.4 L29.7 77.2 L29.8 74.3 L31.9 72.1 L35.1 72.7Z" fill="#f07818"/><path d="M45.6 71.5 L43.8 73.5 L41.5 72.8 L41 69.9 L44.2 68.4Z" fill="#e86a10"/><path d="M80.5 98.7 L79.4 100.9 L77 101.6 L75.5 99.7 L75.8 97.8 L77.1 96.3 L79.2 96.8Z" fill="#e86a10"/><path d="M60.1 95.6 L58.2 97.9 L55.6 97.9 L53.5 95.6 L55.3 92.9 L58.5 92.8Z" fill="#e86a10"/><path d="M59.9 95.3 L58.4 97.8 L55.9 96.4 L55.3 93.6 L58.4 92.5Z" fill="#f88820"/><path d="M91.6 84 L90.7 86.2 L87.7 86.9 L86.7 84 L87.9 81.3 L91.1 81Z" fill="#e86a10"/><path d="M55.1 86.6 L53.1 89.5 L50.3 87.8 L49.8 84.9 L52.9 84.1Z" fill="#f07818"/><path d="M41.9 81.4 L40.2 83.9 L37.4 85 L35.5 82.7 L35.6 80.2 L37.4 77.7 L40.7 78.3Z" fill="#ffb030"/><path d="M53.1 33 L51.3 36.3 L47.9 35.7 L46 33 L47.5 29.8 L50.8 30.5Z" fill="#ffb030"/><path d="M96.2 74.6 L95.3 76.3 L93.3 77.4 L91.7 75.6 L91.7 73.5 L93.3 72.1 L95.4 72.7Z" fill="#e86a10"/><path d="M61.4 35.5 L58.7 39.1 L55.1 37.3 L55.3 33.9 L58.3 33.1Z" fill="#f88820"/><path d="M56.1 28.8 L54 31.4 L51 30.4 L50.7 27 L54.2 25.6Z" fill="#e86a10"/><path d="M29.9 62.1 L28 65 L24.8 63.7 L24.4 60.2 L28 59.3Z" fill="#f07818"/><path d="M50.4 89.7 L49.1 92 L46.1 91.3 L46.3 88.2 L48.9 88.1Z" fill="#e86a10"/><path d="M93.6 78.1 L92.9 80.4 L90.6 79.8 L89.1 78.1 L90.7 76.6 L92.6 76.4Z" fill="#f07818"/><path d="M70.7 100.7 L67.5 103.7 L63.3 103.1 L63.3 98.3 L67.4 98.2Z" fill="#f88820"/><path d="M43.5 65 L42.5 66.3 L40.8 67.4 L39.7 65.8 L39.8 64.2 L40.8 62.5 L42.9 63Z" fill="#f07818"/><path d="M51.7 92.6 L50.7 94.3 L48.9 95 L46.8 93.9 L46.4 91.2 L48.8 89.8 L50.8 90.9Z" fill="#e86a10"/><path d="M45 43.8 L42.8 47.4 L38.9 45.8 L38.9 41.8 L42.8 40.1Z" fill="#ffb030"/><path d="M73.8 28.4 L72.2 30.1 L70.4 30.3 L69 29.3 L68.1 27.1 L70.4 26.5 L72.3 26.5Z" fill="#e86a10"/><path d="M95.2 57.4 L94.6 59.2 L92.6 59.6 L90.5 58.6 L91 56.4 L92.7 55.6 L94.8 55.2Z" fill="#e86a10"/><path d="M37.7 62.1 L36.2 63.5 L34.3 65 L33.3 62.9 L32.8 61 L34.3 59.2 L36.4 60.3Z" fill="#ffb030"/><path d="M67.5 100.2 L65.7 103.1 L62.5 102.7 L60 100.2 L62.7 97.9 L65.3 97.9Z" fill="#f07818"/><path d="M90.1 79.8 L88.9 81.5 L86.8 81.8 L85.4 79.8 L87 78.2 L89.3 77.5Z" fill="#f07818"/><path d="M35.1 70.3 L33.1 73.4 L30 72.7 L27.4 70.3 L29.8 67.7 L33 67.3Z" fill="#ffb030"/><path d="M56.8 90.3 L56 92.2 L53.9 92.7 L52.4 91.3 L52.6 89.4 L54 88.2 L55.6 88.8Z" fill="#f07818"/><path d="M36.6 78.6 L35.5 79.9 L33.9 80.8 L32.1 79.7 L32.3 77.6 L34 76.8 L35.7 77Z" fill="#f07818"/><path d="M56.4 88.1 L53.1 90.9 L50 89.6 L49.7 86.2 L53.5 84.2Z" fill="#f07818"/><path d="M85.9 33.4 L85.1 36.4 L81.8 36.2 L79.7 33.4 L81.9 30.9 L84.7 31.1Z" fill="#e86a10"/><path d="M102.8 58.5 L101.7 60.5 L99.6 60.9 L98.6 59.2 L97.8 57.4 L99.7 56.5 L101.7 56.6Z" fill="#f07818"/><path d="M36.9 71.4 L36.1 73.7 L33.5 74.6 L32.1 72.4 L31.7 70.1 L33.6 68.5 L36 69.2Z" fill="#ffb030"/><path d="M37.9 51 L36.4 52.8 L34.4 53.8 L32.2 52.4 L33 50 L34.4 48.1 L36.4 49.3Z" fill="#f88820"/><path d="M88.6 80.1 L88.1 82.4 L85.5 83.1 L84 81.1 L84.4 79.2 L85.6 77.3 L87.9 78Z" fill="#f88820"/><path d="M100.8 50 L99.6 51.6 L97.8 52.2 L96.6 50.8 L96.3 49.1 L97.7 47.6 L100 47.9Z" fill="#f07818"/><path d="M42.9 71 L40.1 74.6 L36.2 73.1 L36.4 69.2 L39.7 68.6Z" fill="#e86a10"/><path d="M84.2 35.5 L83.4 37.1 L81.5 38.3 L80.5 36.3 L79.6 34.3 L81.5 32.7 L83.6 33.7Z" fill="#e86a10"/><path d="M92.4 90 L91.8 91.7 L89.8 92.7 L88 91.1 L88.7 89.1 L90 88 L91.6 88.4Z" fill="#f88820"/><path d="M88.1 52.7 L87.1 54.6 L85 54.6 L83.4 52.7 L84.7 50.4 L87.6 50Z" fill="#e86a10"/><path d="M94 53.2 L92 55.9 L89.4 54.4 L89.2 51.8 L91.8 51Z" fill="#e86a10"/><path d="M65.3 98.2 L62.9 100.3 L59.9 99.9 L60.2 96.7 L63.2 95.5Z" fill="#e86a10"/><path d="M36.5 51.2 L35.2 53.8 L32.3 54.8 L29.9 52.8 L29.8 49.6 L32.3 47.3 L35.8 47.9Z" fill="#f88820"/><path d="M32.4 75.6 L31.4 77.3 L29.5 77.8 L28.2 76.5 L27.4 74.3 L29.4 73 L31.2 74.1Z" fill="#f88820"/><path d="M90.5 52.8 L89 54.9 L86.7 55.8 L84 54.4 L84.9 51.7 L86.8 50.4 L89.7 49.9Z" fill="#f07818"/><path d="M44.5 81.2 L42.8 83 L40.7 82.9 L39.7 81.2 L40.8 79.5 L42.9 79.1Z" fill="#f88820"/><path d="M84.2 80.1 L82.4 82.4 L79.6 84.3 L76.8 81.9 L77 78.4 L79.6 75.9 L82.9 77.2Z" fill="#f07818"/><path d="M65.5 98.9 L63.8 101 L61 100.5 L61.5 97.8 L63.9 96.5Z" fill="#f88820"/><path d="M84.7 79 L82.7 81.1 L79.9 80.6 L80.2 77.8 L82.6 77.1Z" fill="#f07818"/><path d="M53.6 43.8 L52.5 46.3 L49.3 46.8 L48 43.8 L49.5 41 L52.5 41.4Z" fill="#f88820"/><path d="M45.5 76.6 L44 79.4 L41.3 78.6 L39.4 76.6 L40.9 73.9 L43.5 74.7Z" fill="#f88820"/><path d="M47.3 45.8 L46 49.3 L41.8 48 L41.8 43.6 L45.6 43.4Z" fill="#f07818"/><path d="M46.2 80.5 L44.2 82.6 L41 82.3 L41.6 79.1 L44.1 78.6Z" fill="#ffb030"/><path d="M79.4 84.6 L77.1 87 L74.2 86.1 L73.6 82.7 L77 82.5Z" fill="#f07818"/><path d="M39.7 85 L38.3 87.2 L36 87.2 L34.4 86 L34.4 84 L36 82.9 L38 83.1Z" fill="#e86a10"/><path d="M93.7 60.1 L92.4 62.3 L90 62.7 L88.5 61.1 L88.5 59.1 L90 57.5 L92.2 58Z" fill="#ffb030"/><path d="M48.6 90.1 L47.6 93.1 L44.3 92.8 L42.2 90.1 L44.3 87.4 L47.3 87.6Z" fill="#f88820"/><path d="M75.8 28.2 L74.5 30.1 L72.1 30.5 L70.8 28.2 L72.3 26.3 L74.8 25.9Z" fill="#f07818"/><path d="M30.8 64.7 L29.7 66.8 L26.9 66.2 L27 63.3 L29.7 62.6Z" fill="#f88820"/><path d="M105.2 68.1 L103.6 70.4 L100.6 70.9 L99.2 68.1 L100.9 65.6 L104.1 64.9Z" fill="#f88820"/><path d="M42.8 59.2 L41.5 62.4 L37.8 62.5 L36.7 59.2 L38.2 56.6 L41.3 56.4Z" fill="#f88820"/><path d="M38.1 78.3 L37.6 80.4 L35.5 80.1 L34 79.2 L34.1 77.4 L35.2 75.4 L37.3 76.5Z" fill="#ffb030"/><path d="M45.8 88.3 L44.8 90.6 L42.2 90.5 L40.8 88.3 L42.3 86.3 L44.5 86.4Z" fill="#ffb030"/><path d="M70.6 94.1 L69.5 95.8 L67.6 96.2 L65.3 95.4 L65.8 92.9 L67.6 91.8 L69.6 92.1Z" fill="#f07818"/><path d="M93.4 67.6 L91.7 70.7 L88.1 69.6 L88.4 65.9 L91.8 64.4Z" fill="#f07818"/><path d="M58.1 97.9 L56.3 100.9 L53.1 100.6 L51 97.9 L53.2 95.3 L56.1 95.5Z" fill="#f07818"/><path d="M74.2 34.4 L72.4 36.6 L69.8 37.9 L68.4 35.4 L67.2 32.7 L69.9 31.3 L72.2 32.4Z" fill="#ffb030"/><path d="M90 31.7 L87.6 35 L83.8 33.7 L84 29.9 L87.4 29Z" fill="#f07818"/><path d="M35.7 75.8 L34.2 77.4 L32.4 78.1 L30.6 76.9 L31.3 75 L32.3 73.2 L34.5 73.8Z" fill="#ffb030"/><path d="M55.1 31.3 L53.9 33.3 L51.6 34.4 L50 32.5 L50.3 30.4 L51.7 28.8 L53.7 29.5Z" fill="#e86a10"/><path d="M48.2 31.9 L46.5 34.3 L42.8 34.1 L43.1 29.9 L46.5 29.6Z" fill="#f07818"/><path d="M105.3 67.5 L102.8 69.8 L100 70.2 L98.3 67.5 L100.1 65.1 L103.1 64.8Z" fill="#e86a10"/><path d="M43.3 70.9 L40.9 74.2 L37.4 72.7 L37 68.8 L40.8 68.1Z" fill="#f07818"/><path d="M94.3 71.2 L93.5 73 L91.6 73.4 L90.2 72.1 L90.6 70.4 L91.5 68.8 L93.3 69.7Z" fill="#f07818"/><path d="M59.7 38.8 L57.4 41.6 L54.2 40.5 L53.8 36.9 L57.3 36.5Z" fill="#ffb030"/><path d="M56.2 83.5 L54.8 85.9 L52.3 85.5 L51.1 83.5 L51.9 80.9 L54.5 81.6Z" fill="#f88820"/><path d="M34.2 69.6 L32.3 71.4 L30.2 72.5 L28.6 70.6 L28.1 68.3 L30.3 67.2 L32.8 67Z" fill="#f07818"/><path d="M48.3 93.6 L46.2 96.9 L42.2 95.7 L43 92.1 L46.2 90.2Z" fill="#f07818"/><path d="M76.5 85.4 L74.8 87.5 L72 88.1 L71 85.4 L72.1 82.9 L74.9 83Z" fill="#f07818"/><path d="M34.7 60.2 L34.4 62.9 L31.5 63.4 L29.8 61.4 L29.1 58.7 L31.7 57.7 L33.9 58.2Z" fill="#f07818"/><path d="M40.1 38.8 L37.4 40.9 L35.1 41.6 L32.7 40.3 L31.9 37 L35.1 35.7 L37.8 36.3Z" fill="#ffb030"/><path d="M37.9 52.3 L35.2 54.9 L31.8 54.1 L31.9 50.5 L35.1 49.8Z" fill="#e86a10"/><path d="M94.8 47.4 L93.8 50.3 L90.5 50.1 L89.3 47.4 L90.7 44.9 L93.6 44.7Z" fill="#f07818"/><path d="M89.1 48.2 L88.5 50.4 L86.2 50.5 L84.5 49.2 L84.9 47.3 L86.1 45.5 L88.3 46.2Z" fill="#ffb030"/><path d="M78 87.6 L75.5 91 L71.4 89.8 L72.1 86 L75.2 85Z" fill="#ffb030"/><path d="M62.4 36.9 L60.8 40 L56.9 39 L57.3 35.1 L60.9 33.7Z" fill="#f07818"/><path d="M35.1 70.6 L34.3 72.7 L32.1 72.8 L30.4 71.6 L30.6 69.6 L32.1 68 L34.4 68.4Z" fill="#ffb030"/><path d="M60.9 32 L58.9 34.2 L56.5 35.1 L54.9 33.1 L54.7 30.8 L56.3 28.1 L59.6 28.9Z" fill="#f88820"/><path d="M73.7 99.2 L72.5 101.6 L69.8 101.5 L67.7 99.2 L69.1 95.8 L72.4 97Z" fill="#ffb030"/><path d="M86.8 37.1 L85.3 39 L82.9 39.3 L82.3 37.1 L83.1 35.3 L85 35.6Z" fill="#f07818"/><path d="M90.3 85.4 L88 87.3 L85.2 87 L85.2 83.8 L88 83.5Z" fill="#f07818"/><path d="M97.8 54.8 L96.7 56.8 L94.6 56.5 L93.4 55.5 L92.5 53.6 L94.4 52 L96.5 52.9Z" fill="#f88820"/><path d="M44.5 68.3 L42.8 70.6 L40.3 71.4 L39 69.3 L38 66.8 L40.3 65.1 L42.4 66.5Z" fill="#f07818"/><path d="M37.4 56.8 L36.3 59.1 L34.1 58.4 L33.1 56.8 L34.2 55.3 L35.9 55.4Z" fill="#e86a10"/><path d="M47.8 89.3 L47.3 92.1 L44.2 92.8 L42.8 90.4 L42.5 88.1 L44.4 86.7 L46.5 87.4Z" fill="#f88820"/><path d="M45.4 46.4 L43.6 48.5 L41.3 47.5 L41.2 45.1 L43.7 43.9Z" fill="#e86a10"/><path d="M36.6 65.3 L34.6 68.4 L31.3 66.9 L31.8 64 L34.5 62.6Z" fill="#f07818"/><path d="M91.9 45.2 L89.9 47.8 L86.9 49 L84.7 46.7 L84.5 43.6 L87.2 42.5 L90.1 42.4Z" fill="#f07818"/><path d="M72.2 87.8 L71.3 90.2 L68.8 90 L67.6 87.8 L68.8 85.8 L71.3 85.6Z" fill="#ffb030"/><path d="M58 32.3 L55.4 35.6 L51.7 34.2 L51.7 30.4 L55.1 29.9Z" fill="#ffb030"/><path d="M40.6 84.1 L39.2 86.2 L36.3 85.8 L36.8 82.9 L39.3 82Z" fill="#f88820"/></g><g id="t68"><path d="M65 58L55 55" stroke="#8a8a8a" stroke-width="4" stroke-linecap="round"/><path d="M55 55L47 58" stroke="#8a8a8a" stroke-width="3.3" stroke-linecap="round"/><path d="M47 58L40 62" stroke="#8a8a8a" stroke-width="2.6" stroke-linecap="round"/><path d="M40 62L34 70" stroke="#8a8a8a" stroke-width="1.9" stroke-linecap="round"/><path d="M55 55L56 47" stroke="#8a8a8a" stroke-width="1.6" stroke-linecap="round"/><path d="M56 47L53 39" stroke="#8a8a8a" stroke-width="1.3" stroke-linecap="round"/><path d="M53 47L47 42" stroke="#8a8a8a" stroke-width="1.2" stroke-linecap="round"/><path d="M65 58L72 53" stroke="#8a8a8a" stroke-width="4" stroke-linecap="round"/><path d="M72 53L78 46" stroke="#8a8a8a" stroke-width="3.2" stroke-linecap="round"/><path d="M78 46L82 43" stroke="#8a8a8a" stroke-width="2.3" stroke-linecap="round"/><path d="M78 46L86 44" stroke="#8a8a8a" stroke-width="1.4" stroke-linecap="round"/><path d="M65 58L75 59" stroke="#8a8a8a" stroke-width="4" stroke-linecap="round"/><path d="M75 59L84 62" stroke="#8a8a8a" stroke-width="3.3" stroke-linecap="round"/><path d="M84 62L92 67" stroke="#8a8a8a" stroke-width="2.6" stroke-linecap="round"/><path d="M92 67L99 72" stroke="#8a8a8a" stroke-width="1.9" stroke-linecap="round"/><path d="M84 62L93 55" stroke="#8a8a8a" stroke-width="1.4" stroke-linecap="round"/><path d="M65 58L68 66" stroke="#8a8a8a" stroke-width="4" stroke-linecap="round"/><path d="M68 66L69 76" stroke="#8a8a8a" stroke-width="3.4" stroke-linecap="round"/><path d="M69 76L63 82" stroke="#8a8a8a" stroke-width="2.9" stroke-linecap="round"/><path d="M63 82L57 85" stroke="#8a8a8a" stroke-width="2.3" stroke-linecap="round"/><path d="M57 85L41 84" stroke="#8a8a8a" stroke-width="1.8" stroke-linecap="round"/><path d="M69 76L73 84" stroke="#8a8a8a" stroke-width="1.6" stroke-linecap="round"/><path d="M73 84L72 92" stroke="#8a8a8a" stroke-width="1.3" stroke-linecap="round"/><path d="M57 85L60 93" stroke="#8a8a8a" stroke-width="1.3" stroke-linecap="round"/><ellipse cx="64" cy="22.8" rx="1.8" ry="2.7" transform="rotate(128 64 22.8)" stroke="#1ea01e" stroke-width="1" fill="none"/><ellipse cx="91.7" cy="82.5" rx="1.8" ry="2.7" transform="rotate(110 91.7 82.5)" stroke="#1ea01e" stroke-width="1" fill="none"/><ellipse cx="31.3" cy="67.8" rx="1.8" ry="2.7" transform="rotate(172 31.3 67.8)" stroke="#1ea01e" stroke-width="1" fill="none"/><ellipse cx="47.5" cy="94.9" rx="1.8" ry="2.7" transform="rotate(92 47.5 94.9)" stroke="#1ea01e" stroke-width="1" fill="none"/><ellipse cx="83.2" cy="90.8" rx="1.8" ry="2.7" transform="rotate(31 83.2 90.8)" stroke="#1ea01e" stroke-width="1" fill="none"/><ellipse cx="100.3" cy="70.2" rx="1.8" ry="2.7" transform="rotate(27 100.3 70.2)" stroke="#1ea01e" stroke-width="1" fill="none"/><ellipse cx="84" cy="41.2" rx="1.8" ry="2.7" transform="rotate(154 84 41.2)" stroke="#1ea01e" stroke-width="1" fill="none"/><ellipse cx="81.6" cy="93.6" rx="1.8" ry="2.7" transform="rotate(1 81.6 93.6)" stroke="#1ea01e" stroke-width="1" fill="none"/><ellipse cx="35" cy="55.4" rx="1.8" ry="2.7" transform="rotate(137 35 55.4)" stroke="#1ea01e" stroke-width="1" fill="none"/><ellipse cx="46.4" cy="80.5" rx="1.8" ry="2.7" transform="rotate(173 46.4 80.5)" stroke="#1ea01e" stroke-width="1" fill="none"/><ellipse cx="97" cy="38" rx="1.8" ry="2.7" transform="rotate(150 97 38)" stroke="#1ea01e" stroke-width="1" fill="none"/><ellipse cx="93.9" cy="60.2" rx="1.8" ry="2.7" transform="rotate(145 93.9 60.2)" stroke="#1ea01e" stroke-width="1" fill="none"/><ellipse cx="45.5" cy="90.8" rx="1.8" ry="2.7" transform="rotate(31 45.5 90.8)" stroke="#1ea01e" stroke-width="1" fill="none"/><ellipse cx="104.2" cy="63.8" rx="1.8" ry="2.7" transform="rotate(97 104.2 63.8)" stroke="#1ea01e" stroke-width="1" fill="none"/><ellipse cx="66.3" cy="26" rx="1.8" ry="2.7" transform="rotate(20 66.3 26)" stroke="#1ea01e" stroke-width="1" fill="none"/><ellipse cx="75.7" cy="91" rx="1.8" ry="2.7" transform="rotate(105 75.7 91)" stroke="#1ea01e" stroke-width="1" fill="none"/><ellipse cx="91.6" cy="85.8" rx="1.8" ry="2.7" transform="rotate(106 91.6 85.8)" stroke="#1ea01e" stroke-width="1" fill="none"/><ellipse cx="82.1" cy="93.6" rx="1.8" ry="2.7" transform="rotate(8 82.1 93.6)" stroke="#1ea01e" stroke-width="1" fill="none"/><ellipse cx="95" cy="49.1" rx="1.8" ry="2.7" transform="rotate(40 95 49.1)" stroke="#1ea01e" stroke-width="1" fill="none"/><ellipse cx="68.3" cy="33.9" rx="1.8" ry="2.7" transform="rotate(91 68.3 33.9)" stroke="#1ea01e" stroke-width="1" fill="none"/><ellipse cx="57.2" cy="25.6" rx="1.8" ry="2.7" transform="rotate(66 57.2 25.6)" stroke="#1ea01e" stroke-width="1" fill="none"/><ellipse cx="92.7" cy="34.9" rx="1.8" ry="2.7" transform="rotate(146 92.7 34.9)" stroke="#1ea01e" stroke-width="1" fill="none"/><ellipse cx="67.5" cy="91.8" rx="1.8" ry="2.7" transform="rotate(117 67.5 91.8)" stroke="#1ea01e" stroke-width="1" fill="none"/><ellipse cx="79.6" cy="31.4" rx="1.8" ry="2.7" transform="rotate(121 79.6 31.4)" stroke="#1ea01e" stroke-width="1" fill="none"/><ellipse cx="41" cy="84.4" rx="1.8" ry="2.7" transform="rotate(1 41 84.4)" stroke="#1ea01e" stroke-width="1" fill="none"/><ellipse cx="98.3" cy="66.7" rx="1.8" ry="2.7" transform="rotate(25 98.3 66.7)" stroke="#1ea01e" stroke-width="1" fill="none"/><ellipse cx="38.9" cy="70.8" rx="1.8" ry="2.7" transform="rotate(64 38.9 70.8)" stroke="#1ea01e" stroke-width="1" fill="none"/><ellipse cx="34.1" cy="39.1" rx="1.8" ry="2.7" transform="rotate(89 34.1 39.1)" stroke="#1ea01e" stroke-width="1" fill="none"/><ellipse cx="36.6" cy="66.3" rx="1.8" ry="2.7" transform="rotate(28 36.6 66.3)" stroke="#1ea01e" stroke-width="1" fill="none"/><ellipse cx="71.6" cy="34.7" rx="1.8" ry="2.7" transform="rotate(71 71.6 34.7)" stroke="#1ea01e" stroke-width="1" fill="none"/><ellipse cx="41.3" cy="47.1" rx="1.8" ry="2.7" transform="rotate(88 41.3 47.1)" stroke="#1ea01e" stroke-width="1" fill="none"/><ellipse cx="93.3" cy="65.6" rx="1.8" ry="2.7" transform="rotate(118 93.3 65.6)" stroke="#1ea01e" stroke-width="1" fill="none"/><ellipse cx="36.4" cy="75.6" rx="1.8" ry="2.7" transform="rotate(84 36.4 75.6)" stroke="#1ea01e" stroke-width="1" fill="none"/><ellipse cx="84.8" cy="41.1" rx="1.8" ry="2.7" transform="rotate(64 84.8 41.1)" stroke="#1ea01e" stroke-width="1" fill="none"/><ellipse cx="47.7" cy="37" rx="1.8" ry="2.7" transform="rotate(42 47.7 37)" stroke="#1ea01e" stroke-width="1" fill="none"/><ellipse cx="76.1" cy="96" rx="1.8" ry="2.7" transform="rotate(85 76.1 96)" stroke="#1ea01e" stroke-width="1" fill="none"/><ellipse cx="91.6" cy="47.3" rx="1.8" ry="2.7" transform="rotate(107 91.6 47.3)" stroke="#1ea01e" stroke-width="1" fill="none"/><ellipse cx="93.6" cy="39.2" rx="1.8" ry="2.7" transform="rotate(144 93.6 39.2)" stroke="#1ea01e" stroke-width="1" fill="none"/><ellipse cx="93.3" cy="46.9" rx="1.8" ry="2.7" transform="rotate(175 93.3 46.9)" stroke="#1ea01e" stroke-width="1" fill="none"/><ellipse cx="89.3" cy="82.7" rx="1.8" ry="2.7" transform="rotate(120 89.3 82.7)" stroke="#1ea01e" stroke-width="1" fill="none"/><ellipse cx="95.1" cy="63.9" rx="1.8" ry="2.7" transform="rotate(65 95.1 63.9)" stroke="#1ea01e" stroke-width="1" fill="none"/><ellipse cx="43.4" cy="41.9" rx="1.8" ry="2.7" transform="rotate(26 43.4 41.9)" stroke="#1ea01e" stroke-width="1" fill="none"/><ellipse cx="70.6" cy="94" rx="1.8" ry="2.7" transform="rotate(126 70.6 94)" stroke="#1ea01e" stroke-width="1" fill="none"/><ellipse cx="69.8" cy="26.2" rx="1.8" ry="2.7" transform="rotate(45 69.8 26.2)" stroke="#1ea01e" stroke-width="1" fill="none"/><ellipse cx="72.5" cy="96.8" rx="1.8" ry="2.7" transform="rotate(73 72.5 96.8)" stroke="#1ea01e" stroke-width="1" fill="none"/><ellipse cx="43.4" cy="39.9" rx="1.8" ry="2.7" transform="rotate(21 43.4 39.9)" stroke="#1ea01e" stroke-width="1" fill="none"/><ellipse cx="93.6" cy="81" rx="1.8" ry="2.7" transform="rotate(126 93.6 81)" stroke="#1ea01e" stroke-width="1" fill="none"/><ellipse cx="95.7" cy="86.2" rx="1.8" ry="2.7" transform="rotate(26 95.7 86.2)" stroke="#1ea01e" stroke-width="1" fill="none"/><ellipse cx="79.4" cy="92.3" rx="1.8" ry="2.7" transform="rotate(40 79.4 92.3)" stroke="#1ea01e" stroke-width="1" fill="none"/><ellipse cx="52.3" cy="96.4" rx="1.8" ry="2.7" transform="rotate(27 52.3 96.4)" stroke="#1ea01e" stroke-width="1" fill="none"/><ellipse cx="95.2" cy="74.1" rx="1.8" ry="2.7" transform="rotate(81 95.2 74.1)" stroke="#1ea01e" stroke-width="1" fill="none"/><ellipse cx="95.4" cy="53.2" rx="1.8" ry="2.7" transform="rotate(127 95.4 53.2)" stroke="#1ea01e" stroke-width="1" fill="none"/></g></defs></svg><div class="win" style="left:0"><div class="b" style="left:0px;top:0px;width:569px;height:705px;background:#f0f0f0"></div><div class="b" style="left:0px;top:0px;width:569px;height:1px;background:#ececec"></div><div class="b" style="left:0px;top:0px;width:1px;height:705px;background:#ececec"></div><div class="b" style="left:1px;top:1px;width:567px;height:1px;background:#fff"></div><div class="b" style="left:1px;top:1px;width:1px;height:703px;background:#fff"></div><div class="b" style="left:568px;top:0px;width:1px;height:705px;background:#000"></div><div class="b" style="left:0px;top:703px;width:569px;height:2px;background:#000"></div><div class="b" style="left:4px;top:5px;width:561px;height:32px;background:#c0cedc;border-top:1px solid #a0a0a0;border-left:1px solid #a0a0a0;border-right:1px solid #b0b8c0;box-sizing:border-box"></div><svg class="b" style="left:0px;top:0px;" width="40" height="40" viewBox="0 0 40 40"><rect x="19.7" y="14.5" width="2" height="2" fill="#3a9a3a" opacity="0.8"/><rect x="18.3" y="17.8" width="2" height="2" fill="#3a9a3a" opacity="0.8"/><rect x="15.0" y="19.2" width="2" height="2" fill="#3a9a3a" opacity="0.8"/><rect x="11.7" y="17.8" width="2" height="2" fill="#3a9a3a" opacity="0.8"/><rect x="10.3" y="14.5" width="2" height="2" fill="#3a9a3a" opacity="0.8"/><rect x="11.7" y="11.2" width="2" height="2" fill="#3a9a3a" opacity="0.8"/><rect x="15.0" y="9.8" width="2" height="2" fill="#3a9a3a" opacity="0.8"/><rect x="18.3" y="11.2" width="2" height="2" fill="#3a9a3a" opacity="0.8"/><circle cx="16" cy="15.5" r="3.4" fill="#006e00" stroke="#2a8a2a" stroke-width="1.6"/><rect x="31.9" y="12.5" width="2" height="2" fill="#3a9a3a" opacity="0.8"/><rect x="30.8" y="15.3" width="2" height="2" fill="#3a9a3a" opacity="0.8"/><rect x="28.0" y="16.4" width="2" height="2" fill="#3a9a3a" opacity="0.8"/><rect x="25.2" y="15.3" width="2" height="2" fill="#3a9a3a" opacity="0.8"/><rect x="24.1" y="12.5" width="2" height="2" fill="#3a9a3a" opacity="0.8"/><rect x="25.2" y="9.7" width="2" height="2" fill="#3a9a3a" opacity="0.8"/><rect x="28.0" y="8.6" width="2" height="2" fill="#3a9a3a" opacity="0.8"/><rect x="30.8" y="9.7" width="2" height="2" fill="#3a9a3a" opacity="0.8"/><circle cx="29" cy="13.5" r="2.6" fill="none" stroke="#2a8a2a" stroke-width="1.6"/><circle cx="29" cy="13.5" r="1.0" fill="#b8d4b8"/><rect x="19.5" y="27.5" width="2" height="2" fill="#3a9a3a" opacity="0.8"/><rect x="18.2" y="30.7" width="2" height="2" fill="#3a9a3a" opacity="0.8"/><rect x="15.0" y="32.0" width="2" height="2" fill="#3a9a3a" opacity="0.8"/><rect x="11.8" y="30.7" width="2" height="2" fill="#3a9a3a" opacity="0.8"/><rect x="10.5" y="27.5" width="2" height="2" fill="#3a9a3a" opacity="0.8"/><rect x="11.8" y="24.3" width="2" height="2" fill="#3a9a3a" opacity="0.8"/><rect x="15.0" y="23.0" width="2" height="2" fill="#3a9a3a" opacity="0.8"/><rect x="18.2" y="24.3" width="2" height="2" fill="#3a9a3a" opacity="0.8"/><circle cx="16" cy="28.5" r="3.2" fill="none" stroke="#2a8a2a" stroke-width="1.6"/><circle cx="16" cy="28.5" r="1.6" fill="#b8d4b8"/><ellipse cx="27.5" cy="24" rx="6" ry="5.5" fill="#8a8a8a"/><rect x="24" y="21" width="7" height="7" fill="#e8e8e8"/><rect x="26" y="23" width="3" height="2" fill="#f4d8c0"/><rect x="22" y="28" width="11" height="5" fill="#505860"/><rect x="22" y="30" width="3" height="3" fill="#70c0e8"/><rect x="30" y="30" width="3" height="3" fill="#70c0e8"/><rect x="26" y="28" width="3" height="5" fill="#222"/></svg><div class="t" style="left:37px;top:14px;font-size:18px;line-height:18px;font-weight:normal;color:#000;letter-spacing:-0.3px;">Detailmanager</div><svg class="b" style="left:520px;top:12px;" width="14" height="17" viewBox="0 0 14 17"><rect x="5.5" y="1.5" width="4.5" height="9" fill="none" stroke="#000" stroke-width="2"/><rect x="1" y="10" width="12" height="2" fill="#000"/><rect x="6.5" y="11" width="2" height="6" fill="#000"/></svg><svg class="b" style="left:545px;top:14px;" width="13" height="12" viewBox="0 0 13 12"><path d="M1.5 1L11.5 11M11.5 1L1.5 11" stroke="#000" stroke-width="1.8"/></svg><div class="b" style="left:4px;top:40px;width:561px;height:36px;background:#f7f7f7"></div><div class="t" style="left:25px;top:52px;font-size:17.5px;line-height:17.5px;font-weight:normal;color:#000;letter-spacing:0.15px;">Detail</div><div class="t" style="left:94px;top:52px;font-size:17.5px;line-height:17.5px;font-weight:normal;color:#000;letter-spacing:-0.2px;">Bearbeiten</div><div class="t" style="left:200px;top:52px;font-size:17.5px;line-height:17.5px;font-weight:normal;color:#000;letter-spacing:0px;">Ansicht</div><div class="t" style="left:283px;top:52px;font-size:17.5px;line-height:17.5px;font-weight:normal;color:#000;letter-spacing:0px;">Hilfe</div><div class="b" style="left:5px;top:76px;width:197px;height:30px;background:linear-gradient(#fcfcfc,#f3f3f3);border-radius:5px 5px 0 0"></div><div class="b" style="left:203px;top:76px;width:253px;height:30px;background:linear-gradient(#fcfcfc,#f3f3f3);border-radius:5px 5px 0 0"></div><div class="b" style="left:457px;top:76px;width:17px;height:30px;background:linear-gradient(#f0f0f0 30%,#c4c4c4);border-radius:4px 4px 4px 4px"></div><div class="b" style="left:476px;top:76px;width:30px;height:30px;background:linear-gradient(#fcfcfc,#f3f3f3);border-radius:5px 5px 0 0"></div><div class="b" style="left:507px;top:76px;width:17px;height:30px;background:linear-gradient(#f0f0f0 30%,#c4c4c4);border-radius:4px"></div><div class="b" style="left:526px;top:76px;width:37px;height:30px;background:linear-gradient(#fcfcfc,#f3f3f3);border-radius:5px 5px 0 0"></div><div class="b" style="left:8px;top:80px;width:2px;height:2px;background:#a0a0a0"></div><div class="b" style="left:8px;top:84px;width:2px;height:2px;background:#a0a0a0"></div><div class="b" style="left:8px;top:88px;width:2px;height:2px;background:#a0a0a0"></div><div class="b" style="left:8px;top:92px;width:2px;height:2px;background:#a0a0a0"></div><div class="b" style="left:8px;top:96px;width:2px;height:2px;background:#a0a0a0"></div><div class="b" style="left:206px;top:80px;width:2px;height:2px;background:#a0a0a0"></div><div class="b" style="left:206px;top:84px;width:2px;height:2px;background:#a0a0a0"></div><div class="b" style="left:206px;top:88px;width:2px;height:2px;background:#a0a0a0"></div><div class="b" style="left:206px;top:92px;width:2px;height:2px;background:#a0a0a0"></div><div class="b" style="left:206px;top:96px;width:2px;height:2px;background:#a0a0a0"></div><div class="b" style="left:477px;top:80px;width:2px;height:2px;background:#a0a0a0"></div><div class="b" style="left:477px;top:84px;width:2px;height:2px;background:#a0a0a0"></div><div class="b" style="left:477px;top:88px;width:2px;height:2px;background:#a0a0a0"></div><div class="b" style="left:477px;top:92px;width:2px;height:2px;background:#a0a0a0"></div><div class="b" style="left:477px;top:96px;width:2px;height:2px;background:#a0a0a0"></div><div class="b" style="left:527px;top:80px;width:2px;height:2px;background:#a0a0a0"></div><div class="b" style="left:527px;top:84px;width:2px;height:2px;background:#a0a0a0"></div><div class="b" style="left:527px;top:88px;width:2px;height:2px;background:#a0a0a0"></div><div class="b" style="left:527px;top:92px;width:2px;height:2px;background:#a0a0a0"></div><div class="b" style="left:527px;top:96px;width:2px;height:2px;background:#a0a0a0"></div><div class="b" style="left:73px;top:81px;width:1px;height:21px;background:#c8c8c8"></div><div class="b" style="left:107px;top:81px;width:1px;height:21px;background:#c8c8c8"></div><div class="b" style="left:169px;top:81px;width:1px;height:21px;background:#c8c8c8"></div><div class="b" style="left:271px;top:81px;width:1px;height:21px;background:#c8c8c8"></div><div class="b" style="left:389px;top:81px;width:1px;height:21px;background:#c8c8c8"></div><div class="b" style="left:460px;top:92px;width:7px;height:1px;background:#000"></div><svg class="b" style="left:460px;top:98px;" width="8" height="5" viewBox="0 0 8 5"><path d="M0 0H8L4 4.5Z" fill="#000"/></svg><div class="b" style="left:510px;top:92px;width:7px;height:1px;background:#000"></div><svg class="b" style="left:510px;top:98px;" width="8" height="5" viewBox="0 0 8 5"><path d="M0 0H8L4 4.5Z" fill="#000"/></svg><svg class="b" style="left:16px;top:79px;" width="24" height="24" viewBox="0 0 24 24"><defs><radialGradient id="gc" cx="40%" cy="35%" r="70%"><stop offset="0" stop-color="#6ad46a"/><stop offset="1" stop-color="#1f7a1f"/></radialGradient></defs><circle cx="12" cy="12" r="10.5" fill="url(#gc)" stroke="#4a4a4a" stroke-width="2"/><path d="M6.5 12.5l3.5 3.5l7-7.5" stroke="#fff" stroke-width="3" fill="none"/></svg><svg class="b" style="left:40px;top:76px;" width="32" height="30" viewBox="0 0 32 30"><rect x="5.5" y="4.5" width="2.6" height="2.6" fill="#262626"/><rect x="13.1" y="2.9" width="2.6" height="2.6" fill="#262626"/><rect x="19.2" y="4.5" width="2.6" height="2.6" fill="#262626"/><rect x="25.5" y="2.9" width="2.6" height="2.6" fill="#262626"/><rect x="6.8" y="10.5" width="2.6" height="2.6" fill="#262626"/><rect x="25.5" y="10.5" width="2.6" height="2.6" fill="#262626"/><rect x="3.9" y="16.5" width="2.6" height="2.6" fill="#262626"/><rect x="23.4" y="16.5" width="2.6" height="2.6" fill="#262626"/><rect x="10.0" y="22.3" width="2.6" height="2.6" fill="#262626"/><rect x="23.4" y="22.6" width="2.6" height="2.6" fill="#262626"/><rect x="3.9" y="24.4" width="2.6" height="2.6" fill="#262626"/><rect x="17.3" y="24.4" width="2.6" height="2.6" fill="#262626"/><circle cx="15.7" cy="14.7" r="6.6" fill="#30a030" stroke="#3a3a3a" stroke-width="1.4"/><path d="M12 14.5l2.5 2.5l4.5-5" stroke="#fff" stroke-width="2" fill="none"/></svg><svg class="b" style="left:76px;top:77px;" width="28" height="28" viewBox="0 0 28 28"><rect x="2.3" y="2.1" width="12.3" height="12.6" fill="#2a2a2a"/><rect x="3.5" y="3.3" width="4.6" height="4.6" fill="#62b0f0"/><rect x="9.1" y="3.3" width="4.6" height="4.6" fill="#62b0f0"/><rect x="3.5" y="8.9" width="4.6" height="4.6" fill="#62b0f0"/><rect x="9.1" y="8.9" width="4.6" height="4.6" fill="#62b0f0"/><path d="M15 2.5q6 1 8 7" stroke="#40c040" stroke-width="2.2" fill="none"/><path d="M21 9l3 0l-1.5 2.5z" fill="#40c040"/><rect x="12.3" y="11.8" width="12.8" height="13.4" fill="#38c0f0" stroke="#d0102a" stroke-width="1.8"/><path d="M14 23L23.5 13.5" stroke="#e8f4fc" stroke-width="2.2"/></svg><svg class="b" style="left:104px;top:76px;" width="34" height="30" viewBox="0 0 34 30"><path d="M9.5 9L28 25" stroke="#444" stroke-width="4.2" stroke-linecap="round"/><path d="M10 9.4L27.5 24.6" stroke="#fff" stroke-width="1.8"/><path d="M12 9l4-4.5l3 1.5l5 1l6 2.5l2 2l-4 1.5l-5 0l-4 2l-3-1z" fill="#f89820"/><circle cx="18" cy="9" r="3" fill="#ffe000"/><circle cx="26" cy="10" r="2" fill="#ffc020"/></svg><svg class="b" style="left:139px;top:83px;" width="26" height="16" viewBox="0 0 26 16"><path d="M1.5 1.5h8l1.5 1.5h11.5v5H6L1.5 14z" fill="#f4c838" stroke="#444" stroke-width="1.4"/><path d="M1.5 14.5L6.5 7.5h18l-5 7z" fill="#fef2a0" stroke="#444" stroke-width="1.4"/></svg><svg class="b" style="left:175px;top:80px;" width="22" height="21" viewBox="0 0 22 21"><rect x="5" y="1.5" width="12" height="5" fill="#fff" stroke="#555" stroke-width="1.5"/><rect x="1.5" y="6.5" width="19" height="9" rx="2" fill="#fff" stroke="#555" stroke-width="1.6"/><rect x="5" y="13" width="12" height="6" fill="#fff" stroke="#555" stroke-width="1.5"/></svg><svg class="b" style="left:216px;top:79px;" width="22" height="24" viewBox="0 0 22 24"><path d="M1.5 1.5h13l6 4v17h-19z" fill="#eee" stroke="#444" stroke-width="1.8"/><rect x="4" y="5" width="14" height="15" fill="#a8d0f0" stroke="#333" stroke-width="1.2"/><rect x="6" y="7" width="3" height="3" fill="#8a1020"/><path d="M9 18l4-6l4 6z" fill="#333"/></svg><svg class="b" style="left:244px;top:79px;" width="20" height="24" viewBox="0 0 20 24"><rect x="1" y="1" width="18" height="22" fill="#fff" stroke="#333" stroke-width="2"/><rect x="3.5" y="4" width="13" height="13" fill="#b0d4f0" stroke="#444" stroke-width="1"/><circle cx="8" cy="8" r="2" fill="#e8d040"/><path d="M3.5 16q6-5 13-1v2h-13z" fill="#70b030"/></svg><svg class="b" style="left:276px;top:82px;" width="24" height="18" viewBox="0 0 24 18"><path d="M1 3h7l2 2h13v12H1z" fill="#f4d040" stroke="#555" stroke-width="1.4"/><path d="M1 7h22v10H1z" fill="#f8e060" stroke="#555" stroke-width="1.4"/><path d="M12 7l1.3 3.5l3.7-.5l-2.5 2.5l2.5 2.5l-3.7-.5l-1.3 3.5l-1.3-3.5l-3.7.5l2.5-2.5l-2.5-2.5l3.7.5z" fill="#1a6ad8"/></svg><svg class="b" style="left:304px;top:79px;" width="24" height="24" viewBox="0 0 24 24"><text x="-1" y="17.5" font-family="Liberation Sans" font-size="19" fill="#484848">a</text><text x="13" y="17.5" font-family="Liberation Sans" font-size="19" fill="#484848">e</text><path d="M9 2h5M11.5 2v20M9 22h5" stroke="#222" stroke-width="1.4"/></svg><svg class="b" style="left:332px;top:79px;" width="22" height="21" viewBox="0 0 22 21"><path d="M1.5 1.5h8l3 3v9h-11z" fill="none" stroke="#777" stroke-width="1" stroke-dasharray="2 1.2"/><path d="M7 7h6l2 2h6v10H7z" fill="#f0c860" stroke="#555" stroke-width="1.3"/><path d="M8 19l3-7h10v7z" fill="#f8dc80"/></svg><svg class="b" style="left:360px;top:81px;" width="24" height="22" viewBox="0 0 24 22"><path d="M1 2h8l2 2h11v13H1z" fill="#f4d080" stroke="#555" stroke-width="1.3"/><path d="M2 16l5-9h15v10z" fill="#f8c890"/><path d="M13 12l8 9M21 12l-8 9" stroke="#e82020" stroke-width="2.5"/></svg><svg class="b" style="left:395px;top:80px;" width="22" height="22" viewBox="0 0 22 22"><circle cx="9" cy="9" r="7" fill="#c8e0f4" stroke="#444" stroke-width="2"/><path d="M14 14l6 6" stroke="#333" stroke-width="3"/><text x="4" y="11.5" font-family="Liberation Sans" font-size="6.5" font-weight="bold" fill="#333">ABC</text></svg><svg class="b" style="left:424px;top:81px;" width="23" height="22" viewBox="0 0 23 22"><path d="M9 1h9l4 4v12H9z" fill="#fff" stroke="#d02030" stroke-width="1.8"/><path d="M12 7h7v7h-7z" fill="#e06070"/><rect x="1" y="10" width="9" height="11" fill="#444"/><rect x="0" y="8" width="11" height="2" fill="#444"/><path d="M3.5 12v7M5.5 12v7M7.5 12v7" stroke="#888" stroke-width="1"/></svg><svg class="b" style="left:539px;top:79px;" width="18" height="25" viewBox="0 0 18 25"><path d="M3.5 7.5q0-5.5 6-5.5t6 5q0 3-3.5 5q-2.5 1.2-2.5 4.5" stroke="#8a7020" stroke-width="4.4" fill="none" opacity="0.35"/><path d="M3 7q0-5 6-5t6 5q0 3-3.5 5q-2 1-2 4" stroke="#f4c814" stroke-width="4" fill="none"/><rect x="6.8" y="18.5" width="5" height="4.5" fill="#f4c814"/></svg><div class="b" style="left:2px;top:107px;width:41px;height:596px;background:#f0f0f0"></div><div class="t" style="left:36px;top:119px;font-size:18px;line-height:18px;letter-spacing:0px;color:#000;transform-origin:0 0;transform:rotate(90deg);-webkit-text-stroke:0.5px #000">Navigation</div><div class="t" style="left:36px;top:222px;font-size:18px;line-height:18px;letter-spacing:-0.2px;color:#000;transform-origin:0 0;transform:rotate(90deg);-webkit-text-stroke:0.5px #000">Vorschau</div><div class="t" style="left:36px;top:314px;font-size:18px;line-height:18px;letter-spacing:0.35px;color:#000;transform-origin:0 0;transform:rotate(90deg);-webkit-text-stroke:0.5px #000">Optionen</div><div class="t" style="left:36px;top:409px;font-size:18px;line-height:18px;letter-spacing:-0.45px;color:#000;transform-origin:0 0;transform:rotate(90deg);-webkit-text-stroke:0.5px #000">Eigenschaften</div><div class="b" style="left:43px;top:107px;width:521px;height:593px;background:#fff;border:1px solid #8d99a7;box-sizing:border-box"></div><div class="b" style="left:43px;top:107px;width:521px;height:33px;background:linear-gradient(#ffffff,#c9d5e2);border:1px solid #8d99a7;border-top-color:#a4a8ac;box-sizing:border-box"></div><div class="b" style="left:53px;top:110px;width:130px;height:29px;background:#fff;border:1px solid #a0a8b0;border-bottom:none;box-sizing:border-box"></div><div class="b" style="left:186px;top:110px;width:169px;height:29px;background:linear-gradient(#f4f7fa,#cdd8e4);border:1px solid #a0a8b0;border-bottom:none;box-sizing:border-box"></div><div class="t" style="left:64px;top:115px;font-size:16px;line-height:16px;font-weight:bold;color:#000;letter-spacing:0.7px;">Alle Dateien</div><div class="t" style="left:197px;top:115px;font-size:16px;line-height:16px;font-weight:bold;color:#000;letter-spacing:0.72px;">Bäume-2D-Color</div><svg class="b" style="left:450px;top:117px;" width="7" height="10" viewBox="0 0 7 10"><path d="M6 0V9.5L0.5 4.75Z" fill="#000"/></svg><svg class="b" style="left:482px;top:117px;" width="7" height="10" viewBox="0 0 7 10"><path d="M1 0V9.5L6.5 4.75Z" fill="#000"/></svg><svg class="b" style="left:507px;top:120px;" width="12" height="7" viewBox="0 0 12 7"><path d="M0.5 0.5H11L5.75 6.5Z" fill="#000"/></svg><svg class="b" style="left:537px;top:117px;" width="11" height="11" viewBox="0 0 11 11"><path d="M1 1L10 10M10 1L1 10" stroke="#000" stroke-width="2.2"/></svg><div class="b" style="left:537px;top:141px;width:25px;height:557px;background:#f0f0f0"></div><div class="b" style="left:537px;top:340px;width:24px;height:39px;background:#cdcdcd"></div><svg class="b" style="left:542px;top:150px;" width="14" height="9" viewBox="0 0 14 9"><path d="M1.5 7.5L7 2L12.5 7.5" stroke="#5a5a5a" stroke-width="2.8" fill="none"/></svg><svg class="b" style="left:542px;top:681px;" width="14" height="9" viewBox="0 0 14 9"><path d="M1.5 1.5L7 7L12.5 1.5" stroke="#5a5a5a" stroke-width="2.8" fill="none"/></svg><div class="b" style="left:56px;top:147px;width:134px;height:134px;background:#0078d7"></div><svg class="b" style="left:59px;top:150px;" width="128" height="128" viewBox="0 0 128 128"><rect width="128" height="128" fill="#000"/><use href="#t41"/></svg><div class="b" style="left:63px;top:284px;width:117px;height:21px;background:#0078d7"></div><div class="t" style="left:65px;top:287px;font-size:16px;line-height:16px;font-weight:normal;color:#fff;letter-spacing:-0.6px;width:112px;text-align:center">PFBDRC41.dwg</div><svg class="b" style="left:217px;top:150px;" width="128" height="128" viewBox="0 0 128 128"><rect width="128" height="128" fill="#000" stroke="#d0d0d0" stroke-width="1"/><rect x="1" y="1" width="126" height="126" fill="#000"/><use href="#t54"/></svg><div class="t" style="left:223px;top:287px;font-size:16px;line-height:16px;font-weight:normal;color:#000;letter-spacing:-0.6px;width:112px;text-align:center">PFBDRC54.dwg</div><svg class="b" style="left:375px;top:150px;" width="128" height="128" viewBox="0 0 128 128"><rect width="128" height="128" fill="#000" stroke="#d0d0d0" stroke-width="1"/><rect x="1" y="1" width="126" height="126" fill="#000"/><use href="#t40"/></svg><div class="t" style="left:381px;top:287px;font-size:16px;line-height:16px;font-weight:normal;color:#000;letter-spacing:-0.6px;width:112px;text-align:center">PFBDRC40.dwg</div><svg class="b" style="left:59px;top:342px;" width="128" height="128" viewBox="0 0 128 128"><rect width="128" height="128" fill="#000" stroke="#d0d0d0" stroke-width="1"/><rect x="1" y="1" width="126" height="126" fill="#000"/><use href="#t43"/></svg><div class="t" style="left:65px;top:479px;font-size:16px;line-height:16px;font-weight:normal;color:#000;letter-spacing:-0.6px;width:112px;text-align:center">PFBDRC43.dwg</div><svg class="b" style="left:217px;top:342px;" width="128" height="128" viewBox="0 0 128 128"><rect width="128" height="128" fill="#000" stroke="#d0d0d0" stroke-width="1"/><rect x="1" y="1" width="126" height="126" fill="#000"/><use href="#t60"/></svg><div class="t" style="left:223px;top:479px;font-size:16px;line-height:16px;font-weight:normal;color:#000;letter-spacing:-0.6px;width:112px;text-align:center">PFBDRC60.dwg</div><svg class="b" style="left:375px;top:342px;" width="128" height="128" viewBox="0 0 128 128"><rect width="128" height="128" fill="#000" stroke="#d0d0d0" stroke-width="1"/><rect x="1" y="1" width="126" height="126" fill="#000"/><use href="#t55"/></svg><div class="t" style="left:381px;top:479px;font-size:16px;line-height:16px;font-weight:normal;color:#000;letter-spacing:-0.6px;width:112px;text-align:center">PFBDRC55.dwg</div><svg class="b" style="left:59px;top:534px;" width="128" height="128" viewBox="0 0 128 128"><rect width="128" height="128" fill="#000" stroke="#d0d0d0" stroke-width="1"/><rect x="1" y="1" width="126" height="126" fill="#000"/><use href="#t62"/></svg><div class="t" style="left:65px;top:671px;font-size:16px;line-height:16px;font-weight:normal;color:#000;letter-spacing:-0.6px;width:112px;text-align:center">PFBDRC62.dwg</div><svg class="b" style="left:217px;top:534px;" width="128" height="128" viewBox="0 0 128 128"><rect width="128" height="128" fill="#000" stroke="#d0d0d0" stroke-width="1"/><rect x="1" y="1" width="126" height="126" fill="#000"/><use href="#t56"/></svg><div class="t" style="left:223px;top:671px;font-size:16px;line-height:16px;font-weight:normal;color:#000;letter-spacing:-0.6px;width:112px;text-align:center">PFBDRC56.dwg</div><svg class="b" style="left:375px;top:534px;" width="128" height="128" viewBox="0 0 128 128"><rect width="128" height="128" fill="#000" stroke="#d0d0d0" stroke-width="1"/><rect x="1" y="1" width="126" height="126" fill="#000"/><use href="#t68"/></svg><div class="t" style="left:381px;top:671px;font-size:16px;line-height:16px;font-weight:normal;color:#000;letter-spacing:-0.6px;width:112px;text-align:center">PFBDRC68.dwg</div></div><div class="win" style="left:651px"><div class="b" style="left:0px;top:0px;width:569px;height:705px;background:#f0f0f0"></div><div class="b" style="left:0px;top:0px;width:569px;height:1px;background:#ececec"></div><div class="b" style="left:0px;top:0px;width:1px;height:705px;background:#ececec"></div><div class="b" style="left:1px;top:1px;width:567px;height:1px;background:#fff"></div><div class="b" style="left:1px;top:1px;width:1px;height:703px;background:#fff"></div><div class="b" style="left:568px;top:0px;width:1px;height:705px;background:#000"></div><div class="b" style="left:0px;top:703px;width:569px;height:2px;background:#000"></div><div class="b" style="left:4px;top:5px;width:561px;height:32px;background:#c0cedc;border-top:1px solid #a0a0a0;border-left:1px solid #a0a0a0;border-right:1px solid #b0b8c0;box-sizing:border-box"></div><svg class="b" style="left:0px;top:0px;" width="40" height="40" viewBox="0 0 40 40"><rect x="19.7" y="14.5" width="2" height="2" fill="#3a9a3a" opacity="0.8"/><rect x="18.3" y="17.8" width="2" height="2" fill="#3a9a3a" opacity="0.8"/><rect x="15.0" y="19.2" width="2" height="2" fill="#3a9a3a" opacity="0.8"/><rect x="11.7" y="17.8" width="2" height="2" fill="#3a9a3a" opacity="0.8"/><rect x="10.3" y="14.5" width="2" height="2" fill="#3a9a3a" opacity="0.8"/><rect x="11.7" y="11.2" width="2" height="2" fill="#3a9a3a" opacity="0.8"/><rect x="15.0" y="9.8" width="2" height="2" fill="#3a9a3a" opacity="0.8"/><rect x="18.3" y="11.2" width="2" height="2" fill="#3a9a3a" opacity="0.8"/><circle cx="16" cy="15.5" r="3.4" fill="#006e00" stroke="#2a8a2a" stroke-width="1.6"/><rect x="31.9" y="12.5" width="2" height="2" fill="#3a9a3a" opacity="0.8"/><rect x="30.8" y="15.3" width="2" height="2" fill="#3a9a3a" opacity="0.8"/><rect x="28.0" y="16.4" width="2" height="2" fill="#3a9a3a" opacity="0.8"/><rect x="25.2" y="15.3" width="2" height="2" fill="#3a9a3a" opacity="0.8"/><rect x="24.1" y="12.5" width="2" height="2" fill="#3a9a3a" opacity="0.8"/><rect x="25.2" y="9.7" width="2" height="2" fill="#3a9a3a" opacity="0.8"/><rect x="28.0" y="8.6" width="2" height="2" fill="#3a9a3a" opacity="0.8"/><rect x="30.8" y="9.7" width="2" height="2" fill="#3a9a3a" opacity="0.8"/><circle cx="29" cy="13.5" r="2.6" fill="none" stroke="#2a8a2a" stroke-width="1.6"/><circle cx="29" cy="13.5" r="1.0" fill="#b8d4b8"/><rect x="19.5" y="27.5" width="2" height="2" fill="#3a9a3a" opacity="0.8"/><rect x="18.2" y="30.7" width="2" height="2" fill="#3a9a3a" opacity="0.8"/><rect x="15.0" y="32.0" width="2" height="2" fill="#3a9a3a" opacity="0.8"/><rect x="11.8" y="30.7" width="2" height="2" fill="#3a9a3a" opacity="0.8"/><rect x="10.5" y="27.5" width="2" height="2" fill="#3a9a3a" opacity="0.8"/><rect x="11.8" y="24.3" width="2" height="2" fill="#3a9a3a" opacity="0.8"/><rect x="15.0" y="23.0" width="2" height="2" fill="#3a9a3a" opacity="0.8"/><rect x="18.2" y="24.3" width="2" height="2" fill="#3a9a3a" opacity="0.8"/><circle cx="16" cy="28.5" r="3.2" fill="none" stroke="#2a8a2a" stroke-width="1.6"/><circle cx="16" cy="28.5" r="1.6" fill="#b8d4b8"/><ellipse cx="27.5" cy="24" rx="6" ry="5.5" fill="#8a8a8a"/><rect x="24" y="21" width="7" height="7" fill="#e8e8e8"/><rect x="26" y="23" width="3" height="2" fill="#f4d8c0"/><rect x="22" y="28" width="11" height="5" fill="#505860"/><rect x="22" y="30" width="3" height="3" fill="#70c0e8"/><rect x="30" y="30" width="3" height="3" fill="#70c0e8"/><rect x="26" y="28" width="3" height="5" fill="#222"/></svg><div class="t" style="left:37px;top:14px;font-size:18px;line-height:18px;font-weight:normal;color:#000;letter-spacing:-0.3px;">Detailmanager</div><svg class="b" style="left:520px;top:12px;" width="14" height="17" viewBox="0 0 14 17"><rect x="5.5" y="1.5" width="4.5" height="9" fill="none" stroke="#000" stroke-width="2"/><rect x="1" y="10" width="12" height="2" fill="#000"/><rect x="6.5" y="11" width="2" height="6" fill="#000"/></svg><svg class="b" style="left:545px;top:14px;" width="13" height="12" viewBox="0 0 13 12"><path d="M1.5 1L11.5 11M11.5 1L1.5 11" stroke="#000" stroke-width="1.8"/></svg><div class="b" style="left:4px;top:40px;width:561px;height:36px;background:#f7f7f7"></div><div class="t" style="left:25px;top:52px;font-size:17.5px;line-height:17.5px;font-weight:normal;color:#000;letter-spacing:0.15px;">Detail</div><div class="t" style="left:94px;top:52px;font-size:17.5px;line-height:17.5px;font-weight:normal;color:#000;letter-spacing:-0.2px;">Bearbeiten</div><div class="t" style="left:200px;top:52px;font-size:17.5px;line-height:17.5px;font-weight:normal;color:#000;letter-spacing:0px;">Ansicht</div><div class="t" style="left:283px;top:52px;font-size:17.5px;line-height:17.5px;font-weight:normal;color:#000;letter-spacing:0px;">Hilfe</div><div class="b" style="left:5px;top:76px;width:197px;height:30px;background:linear-gradient(#fcfcfc,#f3f3f3);border-radius:5px 5px 0 0"></div><div class="b" style="left:203px;top:76px;width:253px;height:30px;background:linear-gradient(#fcfcfc,#f3f3f3);border-radius:5px 5px 0 0"></div><div class="b" style="left:457px;top:76px;width:17px;height:30px;background:linear-gradient(#f0f0f0 30%,#c4c4c4);border-radius:4px 4px 4px 4px"></div><div class="b" style="left:476px;top:76px;width:30px;height:30px;background:linear-gradient(#fcfcfc,#f3f3f3);border-radius:5px 5px 0 0"></div><div class="b" style="left:507px;top:76px;width:17px;height:30px;background:linear-gradient(#f0f0f0 30%,#c4c4c4);border-radius:4px"></div><div class="b" style="left:526px;top:76px;width:37px;height:30px;background:linear-gradient(#fcfcfc,#f3f3f3);border-radius:5px 5px 0 0"></div><div class="b" style="left:8px;top:80px;width:2px;height:2px;background:#a0a0a0"></div><div class="b" style="left:8px;top:84px;width:2px;height:2px;background:#a0a0a0"></div><div class="b" style="left:8px;top:88px;width:2px;height:2px;background:#a0a0a0"></div><div class="b" style="left:8px;top:92px;width:2px;height:2px;background:#a0a0a0"></div><div class="b" style="left:8px;top:96px;width:2px;height:2px;background:#a0a0a0"></div><div class="b" style="left:206px;top:80px;width:2px;height:2px;background:#a0a0a0"></div><div class="b" style="left:206px;top:84px;width:2px;height:2px;background:#a0a0a0"></div><div class="b" style="left:206px;top:88px;width:2px;height:2px;background:#a0a0a0"></div><div class="b" style="left:206px;top:92px;width:2px;height:2px;background:#a0a0a0"></div><div class="b" style="left:206px;top:96px;width:2px;height:2px;background:#a0a0a0"></div><div class="b" style="left:477px;top:80px;width:2px;height:2px;background:#a0a0a0"></div><div class="b" style="left:477px;top:84px;width:2px;height:2px;background:#a0a0a0"></div><div class="b" style="left:477px;top:88px;width:2px;height:2px;background:#a0a0a0"></div><div class="b" style="left:477px;top:92px;width:2px;height:2px;background:#a0a0a0"></div><div class="b" style="left:477px;top:96px;width:2px;height:2px;background:#a0a0a0"></div><div class="b" style="left:527px;top:80px;width:2px;height:2px;background:#a0a0a0"></div><div class="b" style="left:527px;top:84px;width:2px;height:2px;background:#a0a0a0"></div><div class="b" style="left:527px;top:88px;width:2px;height:2px;background:#a0a0a0"></div><div class="b" style="left:527px;top:92px;width:2px;height:2px;background:#a0a0a0"></div><div class="b" style="left:527px;top:96px;width:2px;height:2px;background:#a0a0a0"></div><div class="b" style="left:73px;top:81px;width:1px;height:21px;background:#c8c8c8"></div><div class="b" style="left:107px;top:81px;width:1px;height:21px;background:#c8c8c8"></div><div class="b" style="left:169px;top:81px;width:1px;height:21px;background:#c8c8c8"></div><div class="b" style="left:271px;top:81px;width:1px;height:21px;background:#c8c8c8"></div><div class="b" style="left:389px;top:81px;width:1px;height:21px;background:#c8c8c8"></div><div class="b" style="left:460px;top:92px;width:7px;height:1px;background:#000"></div><svg class="b" style="left:460px;top:98px;" width="8" height="5" viewBox="0 0 8 5"><path d="M0 0H8L4 4.5Z" fill="#000"/></svg><div class="b" style="left:510px;top:92px;width:7px;height:1px;background:#000"></div><svg class="b" style="left:510px;top:98px;" width="8" height="5" viewBox="0 0 8 5"><path d="M0 0H8L4 4.5Z" fill="#000"/></svg><svg class="b" style="left:16px;top:79px;" width="24" height="24" viewBox="0 0 24 24"><defs><radialGradient id="gc" cx="40%" cy="35%" r="70%"><stop offset="0" stop-color="#6ad46a"/><stop offset="1" stop-color="#1f7a1f"/></radialGradient></defs><circle cx="12" cy="12" r="10.5" fill="url(#gc)" stroke="#4a4a4a" stroke-width="2"/><path d="M6.5 12.5l3.5 3.5l7-7.5" stroke="#fff" stroke-width="3" fill="none"/></svg><svg class="b" style="left:40px;top:76px;" width="32" height="30" viewBox="0 0 32 30"><rect x="5.5" y="4.5" width="2.6" height="2.6" fill="#262626"/><rect x="13.1" y="2.9" width="2.6" height="2.6" fill="#262626"/><rect x="19.2" y="4.5" width="2.6" height="2.6" fill="#262626"/><rect x="25.5" y="2.9" width="2.6" height="2.6" fill="#262626"/><rect x="6.8" y="10.5" width="2.6" height="2.6" fill="#262626"/><rect x="25.5" y="10.5" width="2.6" height="2.6" fill="#262626"/><rect x="3.9" y="16.5" width="2.6" height="2.6" fill="#262626"/><rect x="23.4" y="16.5" width="2.6" height="2.6" fill="#262626"/><rect x="10.0" y="22.3" width="2.6" height="2.6" fill="#262626"/><rect x="23.4" y="22.6" width="2.6" height="2.6" fill="#262626"/><rect x="3.9" y="24.4" width="2.6" height="2.6" fill="#262626"/><rect x="17.3" y="24.4" width="2.6" height="2.6" fill="#262626"/><circle cx="15.7" cy="14.7" r="6.6" fill="#30a030" stroke="#3a3a3a" stroke-width="1.4"/><path d="M12 14.5l2.5 2.5l4.5-5" stroke="#fff" stroke-width="2" fill="none"/></svg><svg class="b" style="left:76px;top:77px;" width="28" height="28" viewBox="0 0 28 28"><rect x="2.3" y="2.1" width="12.3" height="12.6" fill="#2a2a2a"/><rect x="3.5" y="3.3" width="4.6" height="4.6" fill="#62b0f0"/><rect x="9.1" y="3.3" width="4.6" height="4.6" fill="#62b0f0"/><rect x="3.5" y="8.9" width="4.6" height="4.6" fill="#62b0f0"/><rect x="9.1" y="8.9" width="4.6" height="4.6" fill="#62b0f0"/><path d="M15 2.5q6 1 8 7" stroke="#40c040" stroke-width="2.2" fill="none"/><path d="M21 9l3 0l-1.5 2.5z" fill="#40c040"/><rect x="12.3" y="11.8" width="12.8" height="13.4" fill="#38c0f0" stroke="#d0102a" stroke-width="1.8"/><path d="M14 23L23.5 13.5" stroke="#e8f4fc" stroke-width="2.2"/></svg><svg class="b" style="left:104px;top:76px;" width="34" height="30" viewBox="0 0 34 30"><path d="M9.5 9L28 25" stroke="#444" stroke-width="4.2" stroke-linecap="round"/><path d="M10 9.4L27.5 24.6" stroke="#fff" stroke-width="1.8"/><path d="M12 9l4-4.5l3 1.5l5 1l6 2.5l2 2l-4 1.5l-5 0l-4 2l-3-1z" fill="#f89820"/><circle cx="18" cy="9" r="3" fill="#ffe000"/><circle cx="26" cy="10" r="2" fill="#ffc020"/></svg><svg class="b" style="left:139px;top:83px;" width="26" height="16" viewBox="0 0 26 16"><path d="M1.5 1.5h8l1.5 1.5h11.5v5H6L1.5 14z" fill="#f4c838" stroke="#444" stroke-width="1.4"/><path d="M1.5 14.5L6.5 7.5h18l-5 7z" fill="#fef2a0" stroke="#444" stroke-width="1.4"/></svg><svg class="b" style="left:175px;top:80px;" width="22" height="21" viewBox="0 0 22 21"><rect x="5" y="1.5" width="12" height="5" fill="#fff" stroke="#555" stroke-width="1.5"/><rect x="1.5" y="6.5" width="19" height="9" rx="2" fill="#fff" stroke="#555" stroke-width="1.6"/><rect x="5" y="13" width="12" height="6" fill="#fff" stroke="#555" stroke-width="1.5"/></svg><svg class="b" style="left:216px;top:79px;" width="22" height="24" viewBox="0 0 22 24"><path d="M1.5 1.5h13l6 4v17h-19z" fill="#eee" stroke="#444" stroke-width="1.8"/><rect x="4" y="5" width="14" height="15" fill="#a8d0f0" stroke="#333" stroke-width="1.2"/><rect x="6" y="7" width="3" height="3" fill="#8a1020"/><path d="M9 18l4-6l4 6z" fill="#333"/></svg><svg class="b" style="left:244px;top:79px;" width="20" height="24" viewBox="0 0 20 24"><rect x="1" y="1" width="18" height="22" fill="#fff" stroke="#333" stroke-width="2"/><rect x="3.5" y="4" width="13" height="13" fill="#b0d4f0" stroke="#444" stroke-width="1"/><circle cx="8" cy="8" r="2" fill="#e8d040"/><path d="M3.5 16q6-5 13-1v2h-13z" fill="#70b030"/></svg><svg class="b" style="left:276px;top:82px;" width="24" height="18" viewBox="0 0 24 18"><path d="M1 3h7l2 2h13v12H1z" fill="#f4d040" stroke="#555" stroke-width="1.4"/><path d="M1 7h22v10H1z" fill="#f8e060" stroke="#555" stroke-width="1.4"/><path d="M12 7l1.3 3.5l3.7-.5l-2.5 2.5l2.5 2.5l-3.7-.5l-1.3 3.5l-1.3-3.5l-3.7.5l2.5-2.5l-2.5-2.5l3.7.5z" fill="#1a6ad8"/></svg><svg class="b" style="left:304px;top:79px;" width="24" height="24" viewBox="0 0 24 24"><text x="-1" y="17.5" font-family="Liberation Sans" font-size="19" fill="#484848">a</text><text x="13" y="17.5" font-family="Liberation Sans" font-size="19" fill="#484848">e</text><path d="M9 2h5M11.5 2v20M9 22h5" stroke="#222" stroke-width="1.4"/></svg><svg class="b" style="left:332px;top:79px;" width="22" height="21" viewBox="0 0 22 21"><path d="M1.5 1.5h8l3 3v9h-11z" fill="none" stroke="#777" stroke-width="1" stroke-dasharray="2 1.2"/><path d="M7 7h6l2 2h6v10H7z" fill="#f0c860" stroke="#555" stroke-width="1.3"/><path d="M8 19l3-7h10v7z" fill="#f8dc80"/></svg><svg class="b" style="left:360px;top:81px;" width="24" height="22" viewBox="0 0 24 22"><path d="M1 2h8l2 2h11v13H1z" fill="#f4d080" stroke="#555" stroke-width="1.3"/><path d="M2 16l5-9h15v10z" fill="#f8c890"/><path d="M13 12l8 9M21 12l-8 9" stroke="#e82020" stroke-width="2.5"/></svg><svg class="b" style="left:395px;top:80px;" width="22" height="22" viewBox="0 0 22 22"><circle cx="9" cy="9" r="7" fill="#c8e0f4" stroke="#444" stroke-width="2"/><path d="M14 14l6 6" stroke="#333" stroke-width="3"/><text x="4" y="11.5" font-family="Liberation Sans" font-size="6.5" font-weight="bold" fill="#333">ABC</text></svg><svg class="b" style="left:424px;top:81px;" width="23" height="22" viewBox="0 0 23 22"><path d="M9 1h9l4 4v12H9z" fill="#fff" stroke="#d02030" stroke-width="1.8"/><path d="M12 7h7v7h-7z" fill="#e06070"/><rect x="1" y="10" width="9" height="11" fill="#444"/><rect x="0" y="8" width="11" height="2" fill="#444"/><path d="M3.5 12v7M5.5 12v7M7.5 12v7" stroke="#888" stroke-width="1"/></svg><svg class="b" style="left:539px;top:79px;" width="18" height="25" viewBox="0 0 18 25"><path d="M3.5 7.5q0-5.5 6-5.5t6 5q0 3-3.5 5q-2.5 1.2-2.5 4.5" stroke="#8a7020" stroke-width="4.4" fill="none" opacity="0.35"/><path d="M3 7q0-5 6-5t6 5q0 3-3.5 5q-2 1-2 4" stroke="#f4c814" stroke-width="4" fill="none"/><rect x="6.8" y="18.5" width="5" height="4.5" fill="#f4c814"/></svg><div class="b" style="left:2px;top:107px;width:41px;height:596px;background:#f0f0f0"></div><div class="b" style="left:14px;top:111px;width:29px;height:102px;background:#b8d6f1;border:1px solid #0a74d8;box-sizing:border-box"></div><div class="t" style="left:36px;top:119px;font-size:18px;line-height:18px;letter-spacing:0px;color:#000;transform-origin:0 0;transform:rotate(90deg);-webkit-text-stroke:0.5px #000">Navigation</div><div class="t" style="left:36px;top:222px;font-size:18px;line-height:18px;letter-spacing:-0.2px;color:#000;transform-origin:0 0;transform:rotate(90deg);-webkit-text-stroke:0.5px #000">Vorschau</div><div class="t" style="left:36px;top:314px;font-size:18px;line-height:18px;letter-spacing:0.35px;color:#000;transform-origin:0 0;transform:rotate(90deg);-webkit-text-stroke:0.5px #000">Optionen</div><div class="t" style="left:36px;top:409px;font-size:18px;line-height:18px;letter-spacing:-0.45px;color:#000;transform-origin:0 0;transform:rotate(90deg);-webkit-text-stroke:0.5px #000">Eigenschaften</div><div class="b" style="left:43px;top:107px;width:521px;height:593px;background:#fff;border:1px solid #8d99a7;box-sizing:border-box"></div><div class="b" style="left:43px;top:107px;width:521px;height:33px;background:linear-gradient(#ffffff,#c9d5e2);border:1px solid #8d99a7;border-top-color:#a4a8ac;box-sizing:border-box"></div><div class="b" style="left:53px;top:110px;width:130px;height:29px;background:#fff;border:1px solid #a0a8b0;border-bottom:none;box-sizing:border-box"></div><div class="b" style="left:186px;top:110px;width:169px;height:29px;background:linear-gradient(#f4f7fa,#cdd8e4);border:1px solid #a0a8b0;border-bottom:none;box-sizing:border-box"></div><div class="t" style="left:64px;top:115px;font-size:16px;line-height:16px;font-weight:bold;color:#000;letter-spacing:0.7px;">Alle Dateien</div><div class="t" style="left:197px;top:115px;font-size:16px;line-height:16px;font-weight:bold;color:#000;letter-spacing:0.72px;">Bäume-2D-Color</div><svg class="b" style="left:450px;top:117px;" width="7" height="10" viewBox="0 0 7 10"><path d="M6 0V9.5L0.5 4.75Z" fill="#000"/></svg><svg class="b" style="left:482px;top:117px;" width="7" height="10" viewBox="0 0 7 10"><path d="M1 0V9.5L6.5 4.75Z" fill="#000"/></svg><svg class="b" style="left:507px;top:120px;" width="12" height="7" viewBox="0 0 12 7"><path d="M0.5 0.5H11L5.75 6.5Z" fill="#000"/></svg><svg class="b" style="left:537px;top:117px;" width="11" height="11" viewBox="0 0 11 11"><path d="M1 1L10 10M10 1L1 10" stroke="#000" stroke-width="2.2"/></svg><div class="b" style="left:537px;top:141px;width:25px;height:557px;background:#f0f0f0"></div><div class="b" style="left:537px;top:340px;width:24px;height:39px;background:#cdcdcd"></div><svg class="b" style="left:542px;top:150px;" width="14" height="9" viewBox="0 0 14 9"><path d="M1.5 7.5L7 2L12.5 7.5" stroke="#5a5a5a" stroke-width="2.8" fill="none"/></svg><svg class="b" style="left:542px;top:681px;" width="14" height="9" viewBox="0 0 14 9"><path d="M1.5 1.5L7 7L12.5 1.5" stroke="#5a5a5a" stroke-width="2.8" fill="none"/></svg><div class="b" style="left:56px;top:147px;width:134px;height:134px;background:#0078d7"></div><svg class="b" style="left:59px;top:150px;" width="128" height="128" viewBox="0 0 128 128"><rect width="128" height="128" fill="#000"/><use href="#t41"/></svg><div class="b" style="left:63px;top:284px;width:117px;height:21px;background:#0078d7"></div><div class="t" style="left:65px;top:287px;font-size:16px;line-height:16px;font-weight:normal;color:#fff;letter-spacing:-0.6px;width:112px;text-align:center">PFBDRC41.dwg</div><svg class="b" style="left:217px;top:150px;" width="128" height="128" viewBox="0 0 128 128"><rect width="128" height="128" fill="#000" stroke="#d0d0d0" stroke-width="1"/><rect x="1" y="1" width="126" height="126" fill="#000"/><use href="#t54"/></svg><div class="t" style="left:223px;top:287px;font-size:16px;line-height:16px;font-weight:normal;color:#000;letter-spacing:-0.6px;width:112px;text-align:center">PFBDRC54.dwg</div><svg class="b" style="left:375px;top:150px;" width="128" height="128" viewBox="0 0 128 128"><rect width="128" height="128" fill="#000" stroke="#d0d0d0" stroke-width="1"/><rect x="1" y="1" width="126" height="126" fill="#000"/><use href="#t40"/></svg><div class="t" style="left:381px;top:287px;font-size:16px;line-height:16px;font-weight:normal;color:#000;letter-spacing:-0.6px;width:112px;text-align:center">PFBDRC40.dwg</div><svg class="b" style="left:59px;top:342px;" width="128" height="128" viewBox="0 0 128 128"><rect width="128" height="128" fill="#000" stroke="#d0d0d0" stroke-width="1"/><rect x="1" y="1" width="126" height="126" fill="#000"/><use href="#t43"/></svg><div class="t" style="left:65px;top:479px;font-size:16px;line-height:16px;font-weight:normal;color:#000;letter-spacing:-0.6px;width:112px;text-align:center">PFBDRC43.dwg</div><svg class="b" style="left:217px;top:342px;" width="128" height="128" viewBox="0 0 128 128"><rect width="128" height="128" fill="#000" stroke="#d0d0d0" stroke-width="1"/><rect x="1" y="1" width="126" height="126" fill="#000"/><use href="#t60"/></svg><div class="t" style="left:223px;top:479px;font-size:16px;line-height:16px;font-weight:normal;color:#000;letter-spacing:-0.6px;width:112px;text-align:center">PFBDRC60.dwg</div><svg class="b" style="left:375px;top:342px;" width="128" height="128" viewBox="0 0 128 128"><rect width="128" height="128" fill="#000" stroke="#d0d0d0" stroke-width="1"/><rect x="1" y="1" width="126" height="126" fill="#000"/><use href="#t55"/></svg><div class="t" style="left:381px;top:479px;font-size:16px;line-height:16px;font-weight:normal;color:#000;letter-spacing:-0.6px;width:112px;text-align:center">PFBDRC55.dwg</div><svg class="b" style="left:59px;top:534px;" width="128" height="128" viewBox="0 0 128 128"><rect width="128" height="128" fill="#000" stroke="#d0d0d0" stroke-width="1"/><rect x="1" y="1" width="126" height="126" fill="#000"/><use href="#t62"/></svg><div class="t" style="left:65px;top:671px;font-size:16px;line-height:16px;font-weight:normal;color:#000;letter-spacing:-0.6px;width:112px;text-align:center">PFBDRC62.dwg</div><svg class="b" style="left:217px;top:534px;" width="128" height="128" viewBox="0 0 128 128"><rect width="128" height="128" fill="#000" stroke="#d0d0d0" stroke-width="1"/><rect x="1" y="1" width="126" height="126" fill="#000"/><use href="#t56"/></svg><div class="t" style="left:223px;top:671px;font-size:16px;line-height:16px;font-weight:normal;color:#000;letter-spacing:-0.6px;width:112px;text-align:center">PFBDRC56.dwg</div><svg class="b" style="left:375px;top:534px;" width="128" height="128" viewBox="0 0 128 128"><rect width="128" height="128" fill="#000" stroke="#d0d0d0" stroke-width="1"/><rect x="1" y="1" width="126" height="126" fill="#000"/><use href="#t68"/></svg><div class="t" style="left:381px;top:671px;font-size:16px;line-height:16px;font-weight:normal;color:#000;letter-spacing:-0.6px;width:112px;text-align:center">PFBDRC68.dwg</div><div class="b" style="left:43px;top:107px;width:220px;height:595px;background:linear-gradient(#fafafa 0px,#ececec 45px,#f0f0f0 46px)"></div><div class="b" style="left:263px;top:107px;width:1px;height:595px;background:#a8a8a8"></div><div class="b" style="left:264px;top:107px;width:4px;height:595px;background:#f6f6f6"></div><div class="b" style="left:46px;top:112px;width:2px;height:2px;background:#a8a8a8"></div><div class="b" style="left:46px;top:116px;width:2px;height:2px;background:#a8a8a8"></div><div class="b" style="left:46px;top:120px;width:2px;height:2px;background:#a8a8a8"></div><div class="b" style="left:46px;top:124px;width:2px;height:2px;background:#a8a8a8"></div><div class="b" style="left:46px;top:128px;width:2px;height:2px;background:#a8a8a8"></div><div class="b" style="left:46px;top:132px;width:2px;height:2px;background:#a8a8a8"></div><div class="b" style="left:46px;top:136px;width:2px;height:2px;background:#a8a8a8"></div><div class="t" style="left:56px;top:118px;font-size:16.5px;line-height:16.5px;font-weight:normal;color:#6a7b8e;letter-spacing:0.05px;">Navigation</div><div class="b" style="left:218px;top:125px;width:5px;height:1px;background:#000"></div><div class="b" style="left:223px;top:122px;width:2px;height:7px;background:#000"></div><div class="b" style="left:224px;top:123px;width:5px;height:1px;background:#000"></div><div class="b" style="left:224px;top:127px;width:5px;height:2px;background:#000"></div><div class="b" style="left:227px;top:123px;width:2px;height:6px;background:#000"></div><svg class="b" style="left:242px;top:121px;" width="11" height="10" viewBox="0 0 11 10"><path d="M1 1L10 9.5M10 1L1 9.5" stroke="#000" stroke-width="2.2"/></svg><div class="b" style="left:51px;top:153px;width:204px;height:539px;background:#fff;border:1px solid #828a94;border-top-width:2px;box-sizing:border-box"></div><div class="b" style="left:52px;top:155px;width:176px;height:510px;overflow:hidden"><div class="b" style="left:-52px;top:-155px;width:569px;height:705px"><div class="b" style="left:159px;top:203px;width:67px;height:24px;background:#ececec"></div><div class="b" style="left:63px;top:155px;width:1px;height:510px;background:repeating-linear-gradient(#707070 0 1px,transparent 1px 3px)"></div><div class="b" style="left:90px;top:179px;width:1px;height:486px;background:repeating-linear-gradient(#707070 0 1px,transparent 1px 3px)"></div><div class="b" style="left:117px;top:203px;width:1px;height:181px;background:repeating-linear-gradient(#707070 0 1px,transparent 1px 3px)"></div><div class="b" style="left:117px;top:491px;width:1px;height:157px;background:repeating-linear-gradient(#707070 0 1px,transparent 1px 3px)"></div><div class="b" style="left:70px;top:167px;width:10px;height:1px;background:repeating-linear-gradient(90deg,#707070 0 1px,transparent 1px 3px)"></div><div class="b" style="left:57px;top:161px;width:13px;height:13px;background:linear-gradient(#fff,#dcdcdc);border:1px solid #909090;border-radius:2px;box-sizing:border-box"></div><div class="b" style="left:59px;top:167px;width:9px;height:1px;background:#3050a0"></div><svg class="b" style="left:82px;top:157px;" width="15" height="22" viewBox="0 0 15 22"><defs><linearGradient id="fg0" x1="0" x2="1"><stop offset="0" stop-color="#f0cc60"/><stop offset="1" stop-color="#f8dc80"/></linearGradient></defs><path d="M0 0H13V11H14V18H4V21L0 17Z" fill="url(#fg0)"/><path d="M0 0L4.5 3.5V21L0 17Z" fill="#fbe8a8"/></svg><div class="t" style="left:107px;top:160px;font-size:16px;line-height:16px;font-weight:normal;color:#000;letter-spacing:0px;">Pflanzen</div><div class="b" style="left:97px;top:191px;width:10px;height:1px;background:repeating-linear-gradient(90deg,#707070 0 1px,transparent 1px 3px)"></div><div class="b" style="left:84px;top:185px;width:13px;height:13px;background:linear-gradient(#fff,#dcdcdc);border:1px solid #909090;border-radius:2px;box-sizing:border-box"></div><div class="b" style="left:86px;top:191px;width:9px;height:1px;background:#3050a0"></div><svg class="b" style="left:109px;top:181px;" width="15" height="22" viewBox="0 0 15 22"><defs><linearGradient id="fg1" x1="0" x2="1"><stop offset="0" stop-color="#f0cc60"/><stop offset="1" stop-color="#f8dc80"/></linearGradient></defs><path d="M0 0H13V11H14V18H4V21L0 17Z" fill="url(#fg1)"/><path d="M0 0L4.5 3.5V21L0 17Z" fill="#fbe8a8"/></svg><div class="t" style="left:134px;top:184px;font-size:16px;line-height:16px;font-weight:normal;color:#000;letter-spacing:0px;">Bäume</div><div class="b" style="left:117px;top:215px;width:17px;height:1px;background:repeating-linear-gradient(90deg,#707070 0 1px,transparent 1px 3px)"></div><svg class="b" style="left:136px;top:205px;" width="15" height="22" viewBox="0 0 15 22"><defs><linearGradient id="fg2" x1="0" x2="1"><stop offset="0" stop-color="#f0cc60"/><stop offset="1" stop-color="#f8dc80"/></linearGradient></defs><path d="M0 0H13V11H14V18H4V21L0 17Z" fill="url(#fg2)"/><path d="M0 0L4.5 3.5V21L0 17Z" fill="#fbe8a8"/></svg><div class="t" style="left:161px;top:208px;font-size:16px;line-height:16px;font-weight:normal;color:#000;letter-spacing:0px;">2D-Color</div><div class="b" style="left:117px;top:239px;width:17px;height:1px;background:repeating-linear-gradient(90deg,#707070 0 1px,transparent 1px 3px)"></div><svg class="b" style="left:136px;top:229px;" width="15" height="22" viewBox="0 0 15 22"><defs><linearGradient id="fg3" x1="0" x2="1"><stop offset="0" stop-color="#f0cc60"/><stop offset="1" stop-color="#f8dc80"/></linearGradient></defs><path d="M0 0H13V11H14V18H4V21L0 17Z" fill="url(#fg3)"/><path d="M0 0L4.5 3.5V21L0 17Z" fill="#fbe8a8"/></svg><div class="t" style="left:161px;top:232px;font-size:16px;line-height:16px;font-weight:normal;color:#000;letter-spacing:0px;">2D-Mono</div><div class="b" style="left:117px;top:263px;width:17px;height:1px;background:repeating-linear-gradient(90deg,#707070 0 1px,transparent 1px 3px)"></div><svg class="b" style="left:136px;top:253px;" width="15" height="22" viewBox="0 0 15 22"><defs><linearGradient id="fg4" x1="0" x2="1"><stop offset="0" stop-color="#f0cc60"/><stop offset="1" stop-color="#f8dc80"/></linearGradient></defs><path d="M0 0H13V11H14V18H4V21L0 17Z" fill="url(#fg4)"/><path d="M0 0L4.5 3.5V21L0 17Z" fill="#fbe8a8"/></svg><div class="t" style="left:161px;top:256px;font-size:16px;line-height:16px;font-weight:normal;color:#000;letter-spacing:0px;">2D-Raster</div><div class="b" style="left:117px;top:287px;width:17px;height:1px;background:repeating-linear-gradient(90deg,#707070 0 1px,transparent 1px 3px)"></div><svg class="b" style="left:136px;top:277px;" width="15" height="22" viewBox="0 0 15 22"><defs><linearGradient id="fg5" x1="0" x2="1"><stop offset="0" stop-color="#f0cc60"/><stop offset="1" stop-color="#f8dc80"/></linearGradient></defs><path d="M0 0H13V11H14V18H4V21L0 17Z" fill="url(#fg5)"/><path d="M0 0L4.5 3.5V21L0 17Z" fill="#fbe8a8"/></svg><div class="t" style="left:161px;top:280px;font-size:16px;line-height:16px;font-weight:normal;color:#000;letter-spacing:0px;">3D</div><div class="b" style="left:117px;top:311px;width:17px;height:1px;background:repeating-linear-gradient(90deg,#707070 0 1px,transparent 1px 3px)"></div><svg class="b" style="left:136px;top:301px;" width="15" height="22" viewBox="0 0 15 22"><defs><linearGradient id="fg6" x1="0" x2="1"><stop offset="0" stop-color="#f0cc60"/><stop offset="1" stop-color="#f8dc80"/></linearGradient></defs><path d="M0 0H13V11H14V18H4V21L0 17Z" fill="url(#fg6)"/><path d="M0 0L4.5 3.5V21L0 17Z" fill="#fbe8a8"/></svg><div class="t" style="left:161px;top:304px;font-size:16px;line-height:16px;font-weight:normal;color:#000;letter-spacing:0px;">Ansicht-2D</div><div class="b" style="left:117px;top:335px;width:17px;height:1px;background:repeating-linear-gradient(90deg,#707070 0 1px,transparent 1px 3px)"></div><svg class="b" style="left:136px;top:325px;" width="15" height="22" viewBox="0 0 15 22"><defs><linearGradient id="fg7" x1="0" x2="1"><stop offset="0" stop-color="#f0cc60"/><stop offset="1" stop-color="#f8dc80"/></linearGradient></defs><path d="M0 0H13V11H14V18H4V21L0 17Z" fill="url(#fg7)"/><path d="M0 0L4.5 3.5V21L0 17Z" fill="#fbe8a8"/></svg><div class="t" style="left:161px;top:328px;font-size:16px;line-height:16px;font-weight:normal;color:#000;letter-spacing:0px;">Ansicht-3D</div><div class="b" style="left:117px;top:359px;width:17px;height:1px;background:repeating-linear-gradient(90deg,#707070 0 1px,transparent 1px 3px)"></div><svg class="b" style="left:136px;top:349px;" width="15" height="22" viewBox="0 0 15 22"><defs><linearGradient id="fg8" x1="0" x2="1"><stop offset="0" stop-color="#f0cc60"/><stop offset="1" stop-color="#f8dc80"/></linearGradient></defs><path d="M0 0H13V11H14V18H4V21L0 17Z" fill="url(#fg8)"/><path d="M0 0L4.5 3.5V21L0 17Z" fill="#fbe8a8"/></svg><div class="t" style="left:161px;top:352px;font-size:16px;line-height:16px;font-weight:normal;color:#000;letter-spacing:0px;">Ansicht-3D</div><div class="b" style="left:117px;top:383px;width:17px;height:1px;background:repeating-linear-gradient(90deg,#707070 0 1px,transparent 1px 3px)"></div><svg class="b" style="left:136px;top:373px;" width="15" height="22" viewBox="0 0 15 22"><defs><linearGradient id="fg9" x1="0" x2="1"><stop offset="0" stop-color="#f0cc60"/><stop offset="1" stop-color="#f8dc80"/></linearGradient></defs><path d="M0 0H13V11H14V18H4V21L0 17Z" fill="url(#fg9)"/><path d="M0 0L4.5 3.5V21L0 17Z" fill="#fbe8a8"/></svg><div class="t" style="left:161px;top:376px;font-size:16px;line-height:16px;font-weight:normal;color:#000;letter-spacing:0px;">Multiview</div><div class="b" style="left:97px;top:407px;width:10px;height:1px;background:repeating-linear-gradient(90deg,#707070 0 1px,transparent 1px 3px)"></div><div class="b" style="left:84px;top:401px;width:13px;height:13px;background:linear-gradient(#fff,#dcdcdc);border:1px solid #909090;border-radius:2px;box-sizing:border-box"></div><div class="b" style="left:86px;top:407px;width:9px;height:1px;background:#3050a0"></div><div class="b" style="left:90px;top:403px;width:1px;height:9px;background:#3050a0"></div><svg class="b" style="left:109px;top:397px;" width="15" height="22" viewBox="0 0 15 22"><defs><linearGradient id="fg10" x1="0" x2="1"><stop offset="0" stop-color="#f0cc60"/><stop offset="1" stop-color="#f8dc80"/></linearGradient></defs><path d="M0 0H13V11H14V18H4V21L0 17Z" fill="url(#fg10)"/><path d="M0 0L4.5 3.5V21L0 17Z" fill="#fbe8a8"/></svg><div class="t" style="left:134px;top:400px;font-size:16px;line-height:16px;font-weight:normal;color:#000;letter-spacing:0px;">Gräser</div><div class="b" style="left:90px;top:431px;width:17px;height:1px;background:repeating-linear-gradient(90deg,#707070 0 1px,transparent 1px 3px)"></div><svg class="b" style="left:109px;top:421px;" width="15" height="22" viewBox="0 0 15 22"><defs><linearGradient id="fg11" x1="0" x2="1"><stop offset="0" stop-color="#f0cc60"/><stop offset="1" stop-color="#f8dc80"/></linearGradient></defs><path d="M0 0H13V11H14V18H4V21L0 17Z" fill="url(#fg11)"/><path d="M0 0L4.5 3.5V21L0 17Z" fill="#fbe8a8"/></svg><div class="t" style="left:134px;top:424px;font-size:16px;line-height:16px;font-weight:normal;color:#000;letter-spacing:0px;">Schatten</div><div class="b" style="left:90px;top:455px;width:17px;height:1px;background:repeating-linear-gradient(90deg,#707070 0 1px,transparent 1px 3px)"></div><svg class="b" style="left:109px;top:445px;" width="15" height="22" viewBox="0 0 15 22"><defs><linearGradient id="fg12" x1="0" x2="1"><stop offset="0" stop-color="#f0cc60"/><stop offset="1" stop-color="#f8dc80"/></linearGradient></defs><path d="M0 0H13V11H14V18H4V21L0 17Z" fill="url(#fg12)"/><path d="M0 0L4.5 3.5V21L0 17Z" fill="#fbe8a8"/></svg><div class="t" style="left:134px;top:448px;font-size:16px;line-height:16px;font-weight:normal;color:#000;letter-spacing:0px;">Schema</div><div class="b" style="left:97px;top:479px;width:10px;height:1px;background:repeating-linear-gradient(90deg,#707070 0 1px,transparent 1px 3px)"></div><div class="b" style="left:84px;top:473px;width:13px;height:13px;background:linear-gradient(#fff,#dcdcdc);border:1px solid #909090;border-radius:2px;box-sizing:border-box"></div><div class="b" style="left:86px;top:479px;width:9px;height:1px;background:#3050a0"></div><svg class="b" style="left:109px;top:469px;" width="15" height="22" viewBox="0 0 15 22"><defs><linearGradient id="fg13" x1="0" x2="1"><stop offset="0" stop-color="#f0cc60"/><stop offset="1" stop-color="#f8dc80"/></linearGradient></defs><path d="M0 0H13V11H14V18H4V21L0 17Z" fill="url(#fg13)"/><path d="M0 0L4.5 3.5V21L0 17Z" fill="#fbe8a8"/></svg><div class="t" style="left:134px;top:472px;font-size:16px;line-height:16px;font-weight:normal;color:#000;letter-spacing:0px;">Stauden</div><div class="b" style="left:117px;top:503px;width:17px;height:1px;background:repeating-linear-gradient(90deg,#707070 0 1px,transparent 1px 3px)"></div><svg class="b" style="left:136px;top:493px;" width="15" height="22" viewBox="0 0 15 22"><defs><linearGradient id="fg14" x1="0" x2="1"><stop offset="0" stop-color="#f0cc60"/><stop offset="1" stop-color="#f8dc80"/></linearGradient></defs><path d="M0 0H13V11H14V18H4V21L0 17Z" fill="url(#fg14)"/><path d="M0 0L4.5 3.5V21L0 17Z" fill="#fbe8a8"/></svg><div class="t" style="left:161px;top:496px;font-size:16px;line-height:16px;font-weight:normal;color:#000;letter-spacing:0px;">2D-Grafik</div><div class="b" style="left:117px;top:527px;width:17px;height:1px;background:repeating-linear-gradient(90deg,#707070 0 1px,transparent 1px 3px)"></div><svg class="b" style="left:136px;top:517px;" width="15" height="22" viewBox="0 0 15 22"><defs><linearGradient id="fg15" x1="0" x2="1"><stop offset="0" stop-color="#f0cc60"/><stop offset="1" stop-color="#f8dc80"/></linearGradient></defs><path d="M0 0H13V11H14V18H4V21L0 17Z" fill="url(#fg15)"/><path d="M0 0L4.5 3.5V21L0 17Z" fill="#fbe8a8"/></svg><div class="t" style="left:161px;top:520px;font-size:16px;line-height:16px;font-weight:normal;color:#000;letter-spacing:0px;">2D-Raster</div><div class="b" style="left:117px;top:551px;width:17px;height:1px;background:repeating-linear-gradient(90deg,#707070 0 1px,transparent 1px 3px)"></div><div class="b" style="left:111px;top:545px;width:13px;height:13px;background:linear-gradient(#fff,#dcdcdc);border:1px solid #909090;border-radius:2px;box-sizing:border-box"></div><div class="b" style="left:113px;top:551px;width:9px;height:1px;background:#3050a0"></div><div class="b" style="left:117px;top:547px;width:1px;height:9px;background:#3050a0"></div><svg class="b" style="left:136px;top:541px;" width="15" height="22" viewBox="0 0 15 22"><defs><linearGradient id="fg16" x1="0" x2="1"><stop offset="0" stop-color="#f0cc60"/><stop offset="1" stop-color="#f8dc80"/></linearGradient></defs><path d="M0 0H13V11H14V18H4V21L0 17Z" fill="url(#fg16)"/><path d="M0 0L4.5 3.5V21L0 17Z" fill="#fbe8a8"/></svg><div class="t" style="left:161px;top:544px;font-size:16px;line-height:16px;font-weight:normal;color:#000;letter-spacing:0px;">2D-Symbol</div><div class="b" style="left:117px;top:575px;width:17px;height:1px;background:repeating-linear-gradient(90deg,#707070 0 1px,transparent 1px 3px)"></div><svg class="b" style="left:136px;top:565px;" width="15" height="22" viewBox="0 0 15 22"><defs><linearGradient id="fg17" x1="0" x2="1"><stop offset="0" stop-color="#f0cc60"/><stop offset="1" stop-color="#f8dc80"/></linearGradient></defs><path d="M0 0H13V11H14V18H4V21L0 17Z" fill="url(#fg17)"/><path d="M0 0L4.5 3.5V21L0 17Z" fill="#fbe8a8"/></svg><div class="t" style="left:161px;top:568px;font-size:16px;line-height:16px;font-weight:normal;color:#000;letter-spacing:0px;">3D</div><div class="b" style="left:117px;top:599px;width:17px;height:1px;background:repeating-linear-gradient(90deg,#707070 0 1px,transparent 1px 3px)"></div><svg class="b" style="left:136px;top:589px;" width="15" height="22" viewBox="0 0 15 22"><defs><linearGradient id="fg18" x1="0" x2="1"><stop offset="0" stop-color="#f0cc60"/><stop offset="1" stop-color="#f8dc80"/></linearGradient></defs><path d="M0 0H13V11H14V18H4V21L0 17Z" fill="url(#fg18)"/><path d="M0 0L4.5 3.5V21L0 17Z" fill="#fbe8a8"/></svg><div class="t" style="left:161px;top:592px;font-size:16px;line-height:16px;font-weight:normal;color:#000;letter-spacing:0px;">Ansicht-2D</div><div class="b" style="left:117px;top:623px;width:17px;height:1px;background:repeating-linear-gradient(90deg,#707070 0 1px,transparent 1px 3px)"></div><svg class="b" style="left:136px;top:613px;" width="15" height="22" viewBox="0 0 15 22"><defs><linearGradient id="fg19" x1="0" x2="1"><stop offset="0" stop-color="#f0cc60"/><stop offset="1" stop-color="#f8dc80"/></linearGradient></defs><path d="M0 0H13V11H14V18H4V21L0 17Z" fill="url(#fg19)"/><path d="M0 0L4.5 3.5V21L0 17Z" fill="#fbe8a8"/></svg><div class="t" style="left:161px;top:616px;font-size:16px;line-height:16px;font-weight:normal;color:#000;letter-spacing:0px;">Ansicht-2D</div><div class="b" style="left:117px;top:647px;width:17px;height:1px;background:repeating-linear-gradient(90deg,#707070 0 1px,transparent 1px 3px)"></div><svg class="b" style="left:136px;top:637px;" width="15" height="22" viewBox="0 0 15 22"><defs><linearGradient id="fg20" x1="0" x2="1"><stop offset="0" stop-color="#f0cc60"/><stop offset="1" stop-color="#f8dc80"/></linearGradient></defs><path d="M0 0H13V11H14V18H4V21L0 17Z" fill="url(#fg20)"/><path d="M0 0L4.5 3.5V21L0 17Z" fill="#fbe8a8"/></svg><div class="t" style="left:161px;top:640px;font-size:16px;line-height:16px;font-weight:normal;color:#000;letter-spacing:0px;">Ansicht-3D</div><div class="b" style="left:90px;top:671px;width:17px;height:1px;background:repeating-linear-gradient(90deg,#707070 0 1px,transparent 1px 3px)"></div><svg class="b" style="left:109px;top:661px;" width="15" height="22" viewBox="0 0 15 22"><defs><linearGradient id="fg21" x1="0" x2="1"><stop offset="0" stop-color="#f0cc60"/><stop offset="1" stop-color="#f8dc80"/></linearGradient></defs><path d="M0 0H13V11H14V18H4V21L0 17Z" fill="url(#fg21)"/><path d="M0 0L4.5 3.5V21L0 17Z" fill="#fbe8a8"/></svg><div class="t" style="left:134px;top:664px;font-size:16px;line-height:16px;font-weight:normal;color:#000;letter-spacing:0px;"></div></div></div><div class="b" style="left:228px;top:155px;width:25px;height:510px;background:#f0f0f0"></div><div class="b" style="left:228px;top:430px;width:24px;height:58px;background:#cdcdcd"></div><svg class="b" style="left:233px;top:165px;" width="14" height="9" viewBox="0 0 14 9"><path d="M1.5 7.5L7 2L12.5 7.5" stroke="#5a5a5a" stroke-width="2.8" fill="none"/></svg><svg class="b" style="left:233px;top:647px;" width="14" height="9" viewBox="0 0 14 9"><path d="M1.5 1.5L7 7L12.5 1.5" stroke="#5a5a5a" stroke-width="2.8" fill="none"/></svg><div class="b" style="left:52px;top:665px;width:202px;height:25px;background:#f0f0f0"></div><div class="b" style="left:111px;top:665px;width:34px;height:24px;background:#cdcdcd"></div><svg class="b" style="left:60px;top:670px;" width="9" height="14" viewBox="0 0 9 14"><path d="M7.5 1.5L2 7L7.5 12.5" stroke="#5a5a5a" stroke-width="2.8" fill="none"/></svg><svg class="b" style="left:209px;top:670px;" width="9" height="14" viewBox="0 0 9 14"><path d="M1.5 1.5L7 7L1.5 12.5" stroke="#5a5a5a" stroke-width="2.8" fill="none"/></svg></div><svg class="b" style="left:0;top:0" width="1220" height="705" viewBox="0 0 1220 705"><defs><filter id="sh" x="-20%" y="-50%" width="140%" height="250%"><feGaussianBlur in="SourceAlpha" stdDeviation="2"/><feOffset dx="2" dy="4"/><feComponentTransfer><feFuncA type="linear" slope="0.45"/></feComponentTransfer><feMerge><feMergeNode/><feMergeNode in="SourceGraphic"/></feMerge></filter></defs><g filter="url(#sh)"><path d="M524 164H640" stroke="#f04444" stroke-width="8" stroke-linecap="round"/><path d="M639 152L662 164L639 176Z" fill="#f04444"/></g><g filter="url(#sh)"><ellipse cx="27" cy="163" rx="19.5" ry="54.5" stroke="#f04444" stroke-width="3.2" fill="none"/></g></svg></body></html>
